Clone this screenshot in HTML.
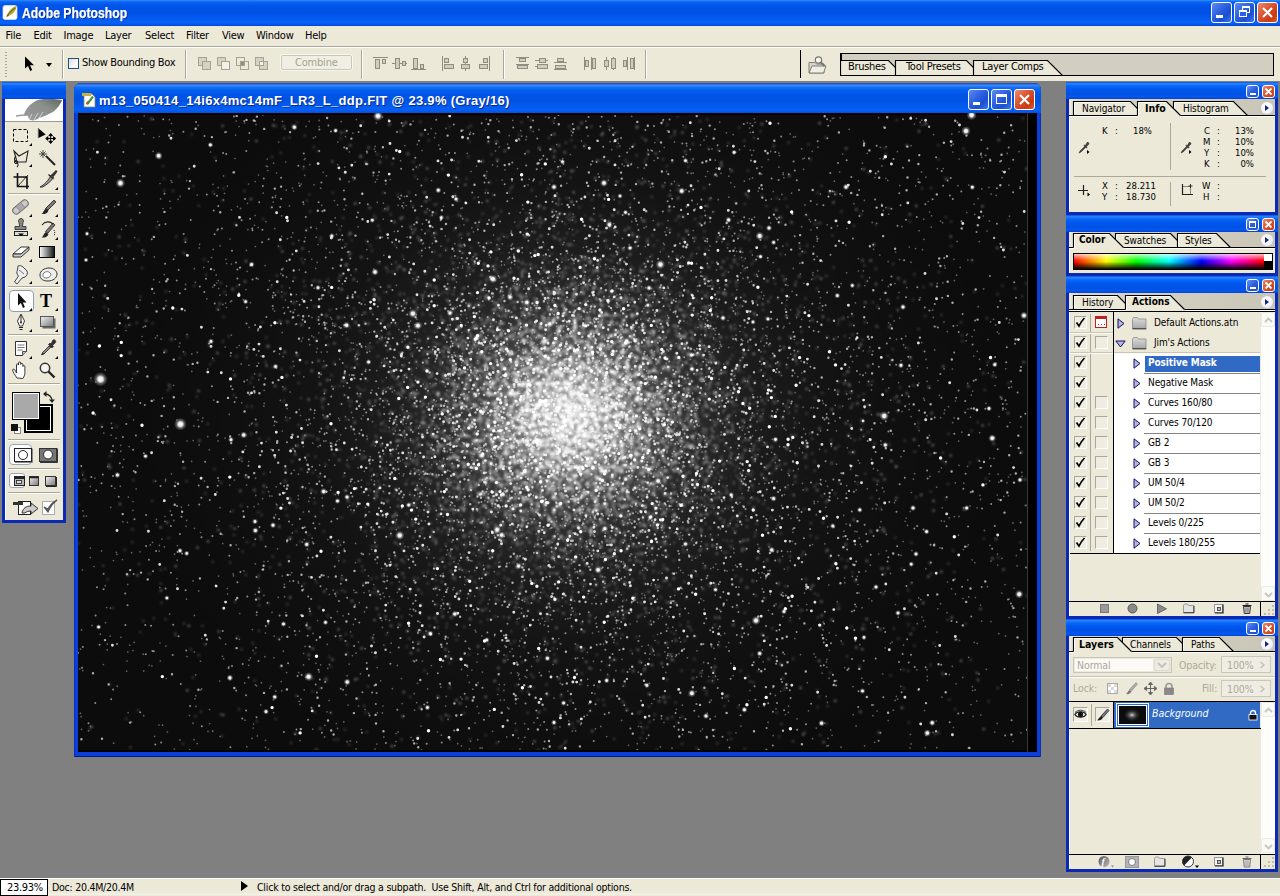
<!DOCTYPE html>
<html lang="en">
<head>
<meta charset="utf-8">
<title>Adobe Photoshop</title>
<style>
*{box-sizing:border-box;margin:0;padding:0}
html,body{width:1280px;height:896px;overflow:hidden;background:#808080}
body{position:relative;font-family:"DejaVu Sans Condensed","Liberation Sans",sans-serif;font-size:11px;color:#000;-webkit-font-smoothing:none}
.abs{position:absolute}
.xpblue{background:linear-gradient(to bottom,#0a6bf5 0%,#0058ee 10%,#0050e8 45%,#0460f8 85%,#0355e6 93%,#0143cf 100%)}
/* main title bar */
#titlebar{left:0;top:0;width:1280px;height:26px;background:linear-gradient(to bottom,#2f8bff 0%,#0a62f2 8%,#0054e9 22%,#0050e4 50%,#045cf2 75%,#0663fb 88%,#0452e0 96%,#0140c8 100%)}
#titlebar .ttl{left:22px;top:4.500px;font:bold 14px "Liberation Sans",sans-serif;color:#fff;text-shadow:1px 1px 0 #0a2a8a;white-space:nowrap;transform-origin:0 0;transform:scaleX(.872);-webkit-text-stroke:.25px #fff}
.wbtn{position:absolute;width:21px;height:21px;border:1px solid #fff;border-radius:3px;background:linear-gradient(135deg,#5c8bf0 0%,#2a5fe0 45%,#1c4ed0 70%,#3a78f0 100%)}
.wbtn.close{background:linear-gradient(135deg,#ec8a6a 0%,#d9512c 45%,#c83a14 75%,#e05a30 100%)}
/* menu */
#menubar{left:0;top:26px;width:1280px;height:20px;background:#ece9d8}
#menubar span{position:absolute;top:3px;font-size:11px;white-space:nowrap;letter-spacing:-.25px}
#optbar{left:0;top:46px;width:1280px;height:35px;background:#ece9d8;border-top:1px solid #aca899;box-shadow:inset 0 1px 0 #fff}
#statusbar{left:0;top:878px;width:1280px;height:18px;background:linear-gradient(to bottom,#ece9d8 0,#ece9d8 14px,#f8f7f0 15px,#ece9d8 16px);border-top:1px solid #fff}

#docwin{left:74px;top:83px;width:967px;height:674px;border-radius:7px 7px 0 0;background:#0a3fd8;box-shadow:inset 1px 0 0 #0831b8,inset -1px 0 0 #0831b8,inset 0 -1px 0 #00138c}
#docwin .dtitle{left:0;top:0;width:967px;height:30px;border-radius:7px 7px 0 0;background:linear-gradient(to bottom,#2a54ba 0,#2a54ba 1px,#3f8fff 2px,#1672f6 4px,#0560ee 7px,#0055e6 12px,#0052e2 18px,#045cf0 24px,#0560f6 27px,#0450de 30px)}
#docwin .dttl{left:25px;top:9.500px;font:bold 13px "Liberation Sans",sans-serif;color:#fff;text-shadow:1px 1px 0 #0a2a8a;white-space:nowrap;letter-spacing:.3px}

.vsep{width:2px;background:linear-gradient(to right,#aca899 0,#aca899 1px,#fff 1px,#fff 2px)}

.ptitle{background:linear-gradient(to bottom,#0a4fdc 0%,#2a86ff 10%,#0a66f8 22%,#0058ee 45%,#0050e4 70%,#0458ee 88%,#0a3fd0 100%)}
#toolbox{left:2px;top:82px;width:64px;height:441px;background:#0a29b4;box-shadow:inset 1px 0 0 #0831b8}
.pal{position:absolute;left:1066px;width:212px;background:#0a29b4}
.pal .ptitle{position:absolute;left:0;top:0;width:212px;height:17px}
.pal .body{position:absolute;left:3px;top:17px;width:206px;background:#ece9d8;box-shadow:inset 1px 0 0 #fff}
.pal .tabs{position:absolute;left:3px;top:17px;width:206px;height:17px;background:linear-gradient(to right,#ece9d8 0,#d8d5c6 12px,#d0cdbe 60%,#c9c6b7 100%)}
.pbtn{position:absolute;width:13px;height:13px;top:3px;border:1px solid #fff;border-radius:3px;background:linear-gradient(135deg,#6a93f0 0%,#2a5fe0 50%,#1c4ed0 100%)}
.pbtn.close{background:linear-gradient(135deg,#e88a6a 0%,#d9512c 50%,#c83a14 100%)}
.pt{position:absolute;white-space:nowrap;font-size:10px;letter-spacing:-.1px}
.pmenu{position:absolute;width:12px;height:12px;border-radius:6px;background:radial-gradient(circle at 40% 40%,#fff 0,#f4f5fb 50%,#d4d9ee 100%)}
.pmenu:after{content:"";position:absolute;left:4px;top:2.500px;border:3.500px solid transparent;border-left:4.500px solid #14267e;border-right:0}
.hsep{left:6px;width:52px;height:2px;background:linear-gradient(to bottom,#aca899 0,#aca899 1px,#fff 1px,#fff 2px)}
.inf{font-size:9.500px;letter-spacing:0}
.inf.r{text-align:right}
.cbx{width:13px;height:13px;border:1px solid;border-color:#aca899 #fff #fff #aca899;background:#efede2}
.sbtn{width:14px;height:15px;background:#fafaf6;border:1px solid #eceadf;border-radius:2px}
.dis{color:#aca899}
.t{position:absolute;white-space:nowrap}
</style>
</head>
<body>
<!-- app title bar -->
<div id="titlebar" class="abs">
  <svg class="abs" style="left:2px;top:4px" width="17" height="17" viewBox="0 0 17 17">
    <rect x="1" y="1.500" width="14" height="14" rx="2" fill="#fff" stroke="#d8dcec" stroke-width=".8"/>
    <path d="M5 12c1-4 4-8 9-10 1 2-1 6-4 8-2 1-3 2-5 2z" fill="#c9a227"/><path d="M5 12c2-3 5-6 8-8" stroke="#4a8a2a" stroke-width="1.300" fill="none"/><path d="M4 13l2-3 1 2z" fill="#c23b22"/>
  </svg>
  <div class="abs ttl">Adobe Photoshop</div>
  <div class="wbtn" style="left:1211px;top:2px"><i class="abs" style="left:4px;top:12px;width:7px;height:3px;background:#fff"></i></div>
  <div class="wbtn" style="left:1234px;top:2px"><i class="abs" style="left:7px;top:3px;width:8px;height:7px;border:1px solid #fff;border-top-width:2px"></i><i class="abs" style="left:4px;top:7px;width:8px;height:7px;border:1px solid #fff;border-top-width:2px;background:#2a5fe0"></i></div>
  <div class="wbtn close" style="left:1257px;top:2px"><svg class="abs" style="left:0;top:0" width="19" height="19"><path d="M5 5l9 9M14 5l-9 9" stroke="#fff" stroke-width="2.200"/></svg></div>
</div>
<!-- menu -->
<div id="menubar" class="abs">
  <span style="left:5.500px">File</span><span style="left:33.500px">Edit</span><span style="left:63.500px">Image</span><span style="left:105px">Layer</span><span style="left:145px">Select</span><span style="left:186px">Filter</span><span style="left:222px">View</span><span style="left:256px">Window</span><span style="left:305px">Help</span>
</div>
<div id="optbar" class="abs">
<!-- gripper -->
<div class="abs" style="left:5px;top:5px;width:2px;height:26px;background:repeating-linear-gradient(to bottom,#a8a594 0,#a8a594 1px,transparent 1px,transparent 3px)"></div>
<svg class="abs" style="left:24px;top:9px" width="12" height="16" viewBox="0 0 12 16"><path d="M1 0.5v12l3-2.6 2.2 5 2-.9-2.2-4.8H10z" fill="#000"/></svg>
<div class="abs" style="left:46px;top:16px;border:3px solid transparent;border-top:4px solid #000;border-bottom:0"></div>
<div class="abs vsep" style="left:62px;top:3px;height:29px"></div>
<div class="abs" style="left:68px;top:11px;width:11px;height:11px;border:1px solid #1c5180;background:linear-gradient(135deg,#dcdcd7,#f8f8f6 60%,#fff)"></div>
<div class="t" style="left:82px;top:9px;letter-spacing:-.3px">Show Bounding Box</div>
<div class="abs vsep" style="left:185px;top:3px;height:29px"></div>
<!-- shape-area buttons (disabled) -->
<svg class="abs" style="left:196px;top:8px" width="80" height="18" viewBox="0 0 80 18" fill="none" stroke="#a5a293" stroke-width="1">
  <rect x="2.5" y="2.5" width="8" height="8" fill="#d5d2c4"/><rect x="6.5" y="6.5" width="8" height="8" fill="#d5d2c4"/>
  <rect x="25.5" y="6.5" width="8" height="8" fill="#f4f2e8"/><path d="M21.5 10.5v-8h8v4h-4v4z" fill="#d5d2c4"/>
  <rect x="40.5" y="2.5" width="8" height="8"/><rect x="44.5" y="6.5" width="8" height="8"/><rect x="44.5" y="6.5" width="4" height="4" fill="#8e8c80"/>
  <rect x="59.5" y="2.5" width="8" height="8" fill="#d5d2c4"/><rect x="63.5" y="6.5" width="8" height="8" fill="#d5d2c4"/><rect x="63.5" y="6.5" width="4" height="4" fill="#f4f2e8"/>
</svg>
<div class="abs" style="left:281px;top:8px;width:71px;height:15px;border:1px solid #c9c7ba;border-radius:2px;background:#f1efe4;box-shadow:0 0 0 1px #f7f6ef"></div>
<div class="t" style="left:295px;top:9px;color:#a5a293;letter-spacing:-.2px">Combine</div>
<div class="abs vsep" style="left:361px;top:3px;height:29px"></div>
<!-- align icons (disabled) -->
<svg class="abs" style="left:372px;top:8px" width="130" height="18" viewBox="0 0 130 18" fill="#d0cdbf" stroke="#8f8d80" stroke-width="1">
  <path d="M1 2.5h15" /><rect x="3.5" y="4.5" width="4" height="9"/><rect x="10.500" y="4.500" width="3" height="4"/>
  <path d="M20 8.500h15"/><rect x="23.500" y="3.500" width="4" height="10"/><rect x="30.500" y="6.500" width="3" height="4"/>
  <path d="M39 14.500h15"/><rect x="41.500" y="3.500" width="4" height="10"/><rect x="48.500" y="9.500" width="3" height="4"/>
  <path d="M70.500 1v15"/><rect x="72.500" y="3.500" width="4" height="4"/><rect x="72.500" y="9.500" width="9" height="4"/>
  <path d="M93.500 1v15"/><rect x="91.500" y="3.500" width="4" height="4"/><rect x="89.500" y="9.500" width="8" height="4"/>
  <path d="M117.500 1v15"/><rect x="111.500" y="3.500" width="4" height="4"/><rect x="107.500" y="9.500" width="8" height="4"/>
</svg>
<div class="abs vsep" style="left:503px;top:3px;height:29px"></div>
<!-- distribute icons (disabled) -->
<svg class="abs" style="left:514px;top:8px" width="125" height="18" viewBox="0 0 125 18" fill="#d0cdbf" stroke="#8f8d80" stroke-width="1">
  <path d="M2 2.500h13M2 9.500h13"/><rect x="5.500" y="3.500" width="6" height="3"/><rect x="3.500" y="10.500" width="10" height="3"/>
  <path d="M21 5.500h13M21 11.500h13"/><rect x="25.500" y="3.500" width="6" height="4"/><rect x="23.500" y="9.500" width="10" height="4"/>
  <path d="M40 7.500h13M40 14.500h13"/><rect x="43.500" y="3.500" width="6" height="3"/><rect x="41.500" y="10.500" width="10" height="3"/>
  <path d="M70.500 2v13M77.500 2v13"/><rect x="71.500" y="5.500" width="3" height="6"/><rect x="78.500" y="3.500" width="3" height="10"/>
  <path d="M92.500 2v13M99.500 2v13"/><rect x="90.500" y="5.500" width="4" height="6"/><rect x="97.500" y="3.500" width="4" height="10"/>
  <path d="M113.500 2v13M120.500 2v13"/><rect x="109.500" y="5.500" width="3" height="6"/><rect x="116.500" y="3.500" width="3" height="10"/>
</svg>
<div class="abs vsep" style="left:645px;top:3px;height:29px"></div>
<div class="abs" style="left:800px;top:3px;width:1px;height:28px;background:#000"></div>
<!-- file browser icon -->
<svg class="abs" style="left:807px;top:8px" width="22" height="20" viewBox="0 0 22 20">
  <path d="M2 7.500h6l1.500 1.500H17v9H2z" fill="#d8d6cc" stroke="#807e74"/>
  <path d="M2 18l3-7h14l-2.500 7z" fill="#efeee6" stroke="#807e74"/>
  <circle cx="11.500" cy="5" r="3.200" fill="#f6f6f0" stroke="#77756c" stroke-width="1.200"/><path d="M14 7.500l3.500 3.500" stroke="#77756c" stroke-width="1.800"/>
</svg>
<!-- palette well -->
<div class="abs" style="left:840px;top:6px;width:434px;height:23px;background:#d2cfc1;border:1px solid #000;border-left-width:2px"></div>
<svg class="abs" style="left:840px;top:10px" width="240" height="20" viewBox="0 0 240 20"><path d="M0.5 18.5V3.5H48.5L63.5 18.5z" fill="#ece9d8" stroke="#000" stroke-width="1.150"/><path d="M55.5 18.5V3.5H126.5L141.5 18.5z" fill="#ece9d8" stroke="#000" stroke-width="1.150"/><path d="M133.5 18.5V3.5H207.5L222.5 18.5z" fill="#ece9d8" stroke="#000" stroke-width="1.150"/></svg>
<div class="t" style="left:848px;top:13px;letter-spacing:-.3px">Brushes</div>
<div class="t" style="left:906px;top:13px;letter-spacing:-.3px">Tool Presets</div>
<div class="t" style="left:982px;top:13px;letter-spacing:-.3px">Layer Comps</div>

</div>
<div id="toolbox" class="abs">
  <div class="abs ptitle" style="left:0;top:0;width:64px;height:17px"></div>
  <div class="abs" style="left:3px;top:17px;width:58px;height:421px;background:#ece9d8;box-shadow:inset 1px 0 0 #fff"></div>
  <div class="abs" style="left:3px;top:17px;width:58px;height:23px;background:#fff;border-bottom:1px solid #9d9a8c"></div>
  <!-- feather -->
  <svg class="abs" style="left:3px;top:17px" width="58" height="23" viewBox="0 0 58 23">
    <defs><linearGradient id="fe" x1="0" y1="1" x2="1" y2="0"><stop offset="0" stop-color="#9a9a9a"/><stop offset=".6" stop-color="#8a8f8c"/><stop offset="1" stop-color="#5d6660"/></linearGradient></defs>
    <path d="M11 17c5-1 8-1 12-1" stroke="#9a9a9a" stroke-width="1.400" fill="none"/>
    <path d="M19 16c1-5 6-12 14-15 9-2 18-1 24 0-1 3-4 8-9 12-6 3-10 5-14 6-3 2-6 3-8 2-2 0-3-2-3-5z" fill="url(#fe)"/>
    <path d="M24 21l3-6M29 21l4-7M34 19l4-6" stroke="#fff" stroke-width=".8" opacity=".7"/>
  </svg>
  <!-- separators -->
<div class="abs hsep" style="top:111px"></div><div class="abs hsep" style="top:204px"></div><div class="abs hsep" style="top:252px"></div><div class="abs hsep" style="top:301px"></div><div class="abs hsep" style="top:357px"></div><div class="abs hsep" style="top:386px"></div><div class="abs hsep" style="top:410px"></div>
<!-- active tool bg (path selection) -->
<div class="abs" style="left:7px;top:208px;width:25px;height:22px;border:1px solid #8d9bb0;border-radius:4px;background:#fff"></div>
<div class="abs" style="left:7px;top:362px;width:23px;height:21px;border:1px solid #9aa7ba;border-radius:4px;background:#fff"></div>
<div class="abs" style="left:7px;top:391px;width:16px;height:15px;border:1px solid #9aa7ba;border-radius:3px;background:#fff"></div>
<svg class="abs" style="left:3px;top:17px" width="58" height="421" viewBox="0 0 58 421">
<defs>
  <linearGradient id="gr1" x1="0" x2="1"><stop offset="0" stop-color="#fff"/><stop offset="1" stop-color="#111"/></linearGradient>
  <linearGradient id="gr2" x1="0" y1="0" x2="1" y2="1"><stop offset="0" stop-color="#f4f4f4"/><stop offset="1" stop-color="#777"/></linearGradient>
</defs>
<!-- row1: marquee, move (cy=37) -->
<rect x="8.500" y="30.500" width="14" height="12" fill="none" stroke="#000" stroke-dasharray="3 2"/>
<path d="M24 47h3v-3z" fill="#000"/>
<path d="M33.300 29.200v9.800l7.400-3.600z" fill="#000"/><path d="M33.300 29.200v9.800" stroke="#666" stroke-width="1"/>
<path d="M45.700 35.500v8M41.700 39.500h8M45.700 34.500l-1.800 2.200h3.600zM45.700 44.500l-1.800-2.200h3.600zM40.700 39.500l2.200-1.800v3.600zM50.700 39.500l-2.200-1.800v3.600z" stroke="#000" fill="#000" stroke-width="1"/>
<!-- row2: lasso, wand (cy=58) -->
<path d="M9 52l5 5 9-5-2 11H12z" fill="#ece9d8" stroke="#222" stroke-width="1.100"/>
<path d="M11 57c-2 2-2 5 0 6s3 3 1 5" fill="none" stroke="#222" stroke-width="1.100"/><circle cx="11" cy="63" r="1.600" fill="none" stroke="#222"/>
<path d="M24 68h3v-3z" fill="#000"/>
<path d="M41 57l9 9" stroke="#222" stroke-width="2"/><path d="M38 51v8M34 55h8M35.500 52.500l5 5M40.500 52.500l-5 5" stroke="#333" stroke-width=".9"/>
<!-- row3: crop, slice (cy=81) -->
<path d="M12.500 74v13.500H24M8.500 78h13.500V90" fill="none" stroke="#111" stroke-width="1.600"/><path d="M12.500 87.500L23 76" stroke="#000" stroke-width=".8"/>
<path d="M35 88c4-2 9-7 11-12l2.500 2c-2 4-7 8-11 10z" fill="#999" stroke="#222" stroke-width=".9"/><path d="M46 76l5-5 1.500 1.500-4 5.500z" fill="#333"/><path d="M43.500 75.500l5 4.500" stroke="#222" stroke-width="1.200"/>
<path d="M50 91h3v-3z" fill="#000"/>
<!-- row4: heal, brush (cy=108) -->
<g transform="rotate(-40 15.500 108)"><rect x="6.500" y="104.500" width="18" height="7" rx="3.500" fill="#c9c9c9" stroke="#666"/><rect x="12.500" y="104.500" width="6" height="7" fill="#aaa" stroke="#777" stroke-width=".6"/></g>
<path d="M24 118h3v-3z" fill="#000"/>
<path d="M49 101l2 2-8 8-2.500-1.500z" fill="#777" stroke="#222" stroke-width=".8"/><path d="M41 109.500l2.500 2c-1 3-4 4-7 3.500 2-1 2-4 4.500-5.500z" fill="#222"/>
<path d="M50 118h3v-3z" fill="#000"/>
<!-- row5: stamp, history brush (cy=131) -->
<path d="M14 123.500a2.500 2.500 0 1 1 4 0l-.7 4H21v3H10v-3h4.700z" fill="#888" stroke="#222" stroke-width=".8"/><rect x="9.500" y="132.500" width="13" height="4" fill="#ddd" stroke="#222"/><path d="M13 134.500h6l-3 2.500z" fill="#000"/>
<path d="M24 141h3v-3z" fill="#000"/>
<path d="M48 124l2 2-7 8-2.500-1.500z" fill="#777" stroke="#222" stroke-width=".8"/><path d="M41 133l2.500 2c-1 3-4 4-7 3.500 2-1 2-4 4.500-5.500z" fill="#222"/><path d="M37 126c3-4 8-4 11-1" fill="none" stroke="#222" stroke-width="1.100"/><path d="M49 131c1 2 1 4 0 6" fill="none" stroke="#222" stroke-dasharray="1 1"/>
<path d="M50 141h3v-3z" fill="#000"/>
<!-- row6: eraser, gradient (cy=153) -->
<path d="M8 155l8-7h8l-8 7z" fill="#fff" stroke="#222" stroke-width=".9"/><path d="M8 155v3h8l8-7v-3l-8 7z" fill="#ccc" stroke="#222" stroke-width=".9"/>
<path d="M24 163h3v-3z" fill="#000"/>
<rect x="34.500" y="147.500" width="15" height="11" fill="url(#gr1)" stroke="#000"/>
<path d="M50 163h3v-3z" fill="#000"/>
<!-- row7: smudge, sponge (cy=175) -->
<path d="M13 167c2-1 4 0 5 1l4 4c1 2 0 5-2 6l-3 1-5 6-2.500-2 4-6c-2-2-2-4-1-6z" fill="#eee" stroke="#333" stroke-width=".9"/><path d="M14 171l5 4" stroke="#555" stroke-width=".8"/>
<path d="M24 185h3v-3z" fill="#000"/>
<path d="M35 176c0-4 4-7 9-7s8 3 8 6c0 4-4 7-9 7s-8-2-8-6z" fill="#eee" stroke="#333"/><path d="M38 175c1-2 4-3 6-2l2 2c0 2-2 4-5 4s-3-2-3-4z" fill="#fff" stroke="#555" stroke-width=".8"/>
<path d="M50 185h3v-3z" fill="#000"/>
<!-- row8: path select (active), type (cy=202) -->
<path d="M13 194v12.500l2.900-2.400 2.100 4.800 1.900-.9-2.100-4.600H21.500z" fill="#111"/>
<path d="M24 212h3v-3z" fill="#000"/>
<text x="35" y="207.500" font-family="Liberation Serif,serif" font-size="18" font-weight="bold" fill="#000">T</text>
<path d="M50 212h3v-3z" fill="#000"/>
<!-- row9: pen, shape (cy=223) -->
<path d="M16 215l3.500 7-2 5h-3l-2-5z" fill="#fff" stroke="#222" stroke-width=".9"/><path d="M16 216v7" stroke="#222"/><circle cx="16" cy="223.500" r="1" fill="#222"/><path d="M14 228.500h4M14.500 230.500h3" stroke="#222"/>
<path d="M24 233h3v-3z" fill="#000"/>
<rect x="37.500" y="219.500" width="13" height="10" fill="#666"/><rect x="35.500" y="217.500" width="13" height="10" fill="url(#gr2)" stroke="#555"/>
<path d="M50 233h3v-3z" fill="#000"/>
<!-- row10: notes, eyedropper (cy=250) -->
<path d="M10.500 242.500h11v10l-4 4h-7z" fill="#fff" stroke="#333"/><path d="M21.500 252.500h-4v4" fill="#bbb" stroke="#333" stroke-width=".8"/><path d="M12.500 246h7M12.500 248.500h7M12.500 251h5" stroke="#555" stroke-width=".8"/>
<path d="M24 260h3v-3z" fill="#000"/>
<path d="M48 241c1.500-1 3.500 1 2.500 2.500l-3 3 1 1-1.500 1.500-1-1-7 7-2.500 1 1-2.500 7-7-1-1 1.500-1.500 1 1z" fill="#333" stroke="#111" stroke-width=".6"/><path d="M44.500 248l-6 6" stroke="#ddd" stroke-width="1"/>
<path d="M50 260h3v-3z" fill="#000"/>
<!-- row11: hand, zoom (cy=272) -->
<path d="M12 279c-2-3-4-6-4.500-8 .5-1.500 2-1 3 1l1 2v-8c0-1.500 2-1.500 2 0v-2c0-1.500 2.200-1.500 2.200 0v1.500c0-1.500 2.200-1.500 2.200 0v2c0-1.300 2-1.300 2 0v6c0 3-1 4-2 6z" fill="#fff" stroke="#222" stroke-width=".9"/>
<circle cx="40" cy="269" r="4.700" fill="#f4f4f4" stroke="#333" stroke-width="1.500"/><path d="M43.500 272.500l6 6" stroke="#222" stroke-width="2.400"/>
<!-- colors -->
<rect x="19.500" y="305.500" width="28" height="28" fill="#000" stroke="#000"/><rect x="21.500" y="307.500" width="24" height="24" fill="#000" stroke="#fff"/>
<rect x="7.500" y="293.500" width="27" height="27" fill="#a9a9a9" stroke="#000"/><rect x="8.500" y="294.500" width="25" height="25" fill="none" stroke="#fff"/>
<path d="M40 295c4 0 7 3 7 7" fill="none" stroke="#222" stroke-width="1.300"/><path d="M38 295l3.500-3v6zM47 304l-3-3.500h6z" fill="#222"/>
<rect x="9.500" y="328.500" width="6" height="6" fill="#fff" stroke="#888"/><rect x="6" y="325" width="7" height="7" fill="#111"/>
<!-- mask modes -->
<rect x="9.500" y="349.500" width="17" height="13" fill="#fff" stroke="#222"/><circle cx="18" cy="356" r="4.500" fill="#fff" stroke="#222"/><path d="M10 363.500h17.500v-14" fill="none" stroke="#888"/>
<rect x="34.500" y="349.500" width="17" height="13" fill="#777" stroke="#333"/><circle cx="43" cy="355.500" r="4.500" fill="#fff" stroke="#222"/><path d="M35 363.500h17.500v-14" fill="none" stroke="#333"/>
<!-- screen modes -->
<rect x="9.500" y="377.500" width="10" height="9" fill="#bbb" stroke="#222"/><path d="M9.500 379h10" stroke="#222" stroke-width="2"/><rect x="11.500" y="381.500" width="5" height="3" fill="#ddd" stroke="#222" stroke-width=".8"/>
<rect x="24.500" y="377.500" width="9" height="9" fill="url(#gr2)" stroke="#333"/><path d="M24.500 378.500h9" stroke="#222" stroke-width="1.600"/>
<rect x="40.500" y="377.500" width="10" height="9" fill="url(#gr2)" stroke="#333"/><path d="M41 387.500h10.500v-9.500" fill="none" stroke="#222"/>
<!-- jump to imageready -->
<rect x="13.500" y="402.500" width="12" height="13" fill="#fff" stroke="#222"/><rect x="8" y="403" width="10" height="3" fill="#333"/><path d="M17 414c1-5 4-7 9-7v-3l7 5.500-7 5.500v-3c-3 0-5 1-6 2z" fill="#ccc" stroke="#222" stroke-width=".9"/>
<rect x="37.500" y="402.500" width="12" height="13" fill="#fff" stroke="#aaa"/><path d="M39 408l4 5c2-5 5-9 9-12-4 2-7 5-9 9z" fill="#666" stroke="#555" stroke-width="1.200"/>
</svg>

</div>

<div id="docwin" class="abs">
  <div class="abs dtitle"></div>
  <svg class="abs" style="left:7px;top:9px" width="16" height="16" viewBox="0 0 16 16">
    <path d="M3 2h8l3 3v10H3z" fill="#fff" stroke="#8a8a6a" stroke-width=".8"/>
    <path d="M1 1h9v3H1z" fill="#c8b040"/>
    <path d="M5 12L11 4l2 1-6 8z" fill="#3a9a3a"/><path d="M5 12l1-3 2 2z" fill="#d04020"/>
  </svg>
  <div class="abs dttl">m13_050414_14i6x4mc14mF_LR3_L_ddp.FIT @ 23.9% (Gray/16)</div>
  <div class="wbtn" style="left:894px;top:6px"><i class="abs" style="left:4px;top:12px;width:7px;height:3px;background:#fff"></i></div>
  <div class="wbtn" style="left:917px;top:6px"><i class="abs" style="left:4px;top:4px;width:11px;height:10px;border:1px solid #fff;border-top-width:3px"></i></div>
  <div class="wbtn close" style="left:940px;top:6px"><svg class="abs" style="left:0;top:0" width="19" height="19"><path d="M5 5l9 9M14 5l-9 9" stroke="#fff" stroke-width="2.2"/></svg></div>
</div>
<svg class="abs" style="left:78px;top:113px" width="959" height="639" viewBox="0 0 959 639">
<defs><radialGradient id="core" gradientUnits="userSpaceOnUse" cx="492" cy="303" r="400" gradientTransform="translate(492 303) scale(1.05 0.97) translate(-492 -303)"><stop offset="0" stop-color="#fff" stop-opacity="0.64"/><stop offset="0.04" stop-color="#fff" stop-opacity="0.6"/><stop offset="0.08" stop-color="#fff" stop-opacity="0.5"/><stop offset="0.13" stop-color="#fff" stop-opacity="0.36"/><stop offset="0.2" stop-color="#fff" stop-opacity="0.225"/><stop offset="0.3" stop-color="#fff" stop-opacity="0.13"/><stop offset="0.42" stop-color="#fff" stop-opacity="0.075"/><stop offset="0.6" stop-color="#fff" stop-opacity="0.035"/><stop offset="0.8" stop-color="#fff" stop-opacity="0.016"/><stop offset="1" stop-color="#fff" stop-opacity="0.006"/></radialGradient><radialGradient id="dens" gradientUnits="userSpaceOnUse" cx="492" cy="303" r="620" gradientTransform="translate(492 303) scale(1.05 0.97) translate(-492 -303)"><stop offset="0" stop-color="rgb(232,232,232)"/><stop offset="0.06" stop-color="rgb(208,208,208)"/><stop offset="0.12" stop-color="rgb(186,186,186)"/><stop offset="0.2" stop-color="rgb(164,164,164)"/><stop offset="0.3" stop-color="rgb(140,140,140)"/><stop offset="0.45" stop-color="rgb(118,118,118)"/><stop offset="0.65" stop-color="rgb(100,100,100)"/><stop offset="1" stop-color="rgb(88,88,88)"/></radialGradient><radialGradient id="sg"><stop offset="0" stop-color="#fff"/><stop offset=".35" stop-color="#fff" stop-opacity=".9"/><stop offset=".6" stop-color="#fff" stop-opacity=".35"/><stop offset="1" stop-color="#fff" stop-opacity="0"/></radialGradient><filter id="sb" x="0" y="0" width="100%" height="100%"><feGaussianBlur stdDeviation=".8"/></filter><filter id="sb2" x="0" y="0" width="100%" height="100%"><feGaussianBlur stdDeviation=".52"/></filter><filter id="mot" x="0" y="0" width="100%" height="100%" color-interpolation-filters="sRGB"><feTurbulence type="fractalNoise" baseFrequency="0.23" numOctaves="1" seed="7" result="n"/><feColorMatrix in="n" type="matrix" values="1 0 0 0 0 1 0 0 0 0 1 0 0 0 0 0 0 0 0 1" result="g"/><feComposite in="g" in2="SourceGraphic" operator="arithmetic" k1="1" k2="0" k3="0" k4="0" result="m"/><feComponentTransfer in="m" result="t"><feFuncR type="linear" slope="5.0" intercept="-1.9"/><feFuncG type="linear" slope="5.0" intercept="-1.9"/><feFuncB type="linear" slope="5.0" intercept="-1.9"/></feComponentTransfer><feColorMatrix in="t" type="matrix" values="0 0 0 0 1 0 0 0 0 1 0 0 0 0 1 1 0 0 0 0" result="u"/><feGaussianBlur in="u" stdDeviation="0.8"/></filter><filter id="mot2" x="0" y="0" width="100%" height="100%" color-interpolation-filters="sRGB"><feTurbulence type="fractalNoise" baseFrequency="0.19" numOctaves="1" seed="23" result="n"/><feColorMatrix in="n" type="matrix" values="1 0 0 0 0 1 0 0 0 0 1 0 0 0 0 0 0 0 0 1" result="g"/><feComposite in="g" in2="SourceGraphic" operator="arithmetic" k1="1" k2="0" k3="0" k4="0" result="m"/><feComponentTransfer in="m" result="t"><feFuncR type="linear" slope="5.0" intercept="-1.95"/><feFuncG type="linear" slope="5.0" intercept="-1.95"/><feFuncB type="linear" slope="5.0" intercept="-1.95"/></feComponentTransfer><feColorMatrix in="t" type="matrix" values="0 0 0 0 1 0 0 0 0 1 0 0 0 0 1 1 0 0 0 0" result="u"/><feGaussianBlur in="u" stdDeviation="0.8"/></filter></defs>
<rect width="959" height="639" fill="#000"/>
<rect x="0" y="2" width="949" height="635" fill="#0b0b0b"/>
<rect x="0" y="2" width="949" height="635" fill="url(#core)"/>
<rect x="0" y="2" width="949" height="635" fill="url(#dens)" filter="url(#mot)"/>
<rect x="0" y="2" width="949" height="635" fill="url(#dens)" filter="url(#mot2)"/>
<g fill="none" stroke="#fff" stroke-linecap="round" filter="url(#sb)">
<path stroke-width="2.4" stroke-opacity="0.22" d="M445.1 454h.01M573.5 148.5h.01M504.7 254.9h.01M771.9 339.5h.01M358.4 91.1h.01M492.2 373.4h.01M200 178.7h.01M651.2 287h.01M564.6 619.6h.01M867.9 385.6h.01M561.5 330.9h.01M696 32.3h.01M472.4 328h.01M373.7 144.8h.01M474.4 344.3h.01M271.1 122.2h.01M564.2 336h.01M65.4 507.9h.01M807.1 179.9h.01M909.9 249.3h.01M392 626.3h.01M566.1 557.8h.01M248.4 224.1h.01M443.3 406h.01M412.2 240.6h.01M591.7 471.9h.01M684.4 270.7h.01M502.7 283h.01M542.4 290.1h.01M519.1 541.6h.01M690.7 431.7h.01M546.3 572.3h.01M538.5 475.5h.01M513.3 13.8h.01M337.2 63.6h.01M739.3 370.7h.01M569.7 125.9h.01M647.5 182.7h.01M721.7 283.8h.01M424.1 388.1h.01M595.3 547.4h.01M505.3 280.3h.01M475.7 269.7h.01M516.2 408.6h.01M512.4 234.3h.01M504.2 287.8h.01M629.7 184h.01M435.1 259.6h.01M520.2 351.3h.01M513.5 314.4h.01M434.6 344h.01M515.5 356.2h.01M514.2 236.4h.01M218.2 582.7h.01M220.6 312h.01M469.4 187.6h.01M404.2 257.9h.01M608.6 192.2h.01M240.5 204.9h.01M454.2 393.9h.01M316.9 198.1h.01M127.4 380.2h.01M548.5 253.8h.01M664.9 367h.01M7.4 136.2h.01M555.3 483.8h.01M568 312.3h.01M474.9 535.2h.01M724.4 497.2h.01M414.9 241.1h.01M526.2 345.6h.01M839.9 314.1h.01M562.6 609.6h.01M516.7 196.9h.01M362.5 249.2h.01M633.2 393.5h.01M424.1 198.7h.01M232.3 501h.01M214.1 348.3h.01M379.7 365.1h.01M631.5 281h.01M933.2 135.7h.01M26.6 194.1h.01M491.8 100.6h.01M707.3 574.1h.01M576 312.4h.01M520.5 573.7h.01M549.8 295.4h.01M523 297.3h.01M428.3 543h.01M427.4 371.9h.01M412.5 279.5h.01M304.9 247.1h.01M433.6 215.9h.01M655.6 261.7h.01M433.9 255.7h.01M538 253.6h.01M544.6 278.3h.01M567.3 197.6h.01M437.9 617.3h.01M396.5 84.9h.01M432.4 364.7h.01M314.8 250.6h.01M567.7 316.2h.01M518.3 377.1h.01M488.8 286.9h.01M739.6 79.8h.01M551.9 281.5h.01M299.5 481.4h.01M458.4 248.8h.01M655.3 291.5h.01M508.2 349.6h.01M561.4 448h.01M508.2 452.2h.01M511.2 273.7h.01M604.1 603.8h.01M478.8 229.9h.01M496.1 305.4h.01M477.5 310.1h.01M544.9 250.7h.01M363.9 418.7h.01M598.2 195.2h.01M531.6 14h.01M471.8 346.2h.01M588.7 291.1h.01M516.8 272.2h.01M281.8 447.5h.01M353.5 320h.01M615.8 297.1h.01M370.7 283h.01M439.3 427.5h.01M350.6 440.1h.01M444.9 271.5h.01M355.7 228.7h.01M470.3 276.3h.01M552 333.1h.01M251.1 179h.01M105.2 139.4h.01M707.8 292.7h.01M402.9 295.6h.01M944.2 183.4h.01M521 250.5h.01M491.9 301.4h.01M744.2 280h.01M466.4 299.5h.01M472.2 306.2h.01M475.9 412.6h.01M458.1 153.3h.01M455 312.2h.01M648.3 282.2h.01M497.6 345.3h.01M671.9 568.3h.01M453.2 561.5h.01M308.1 313.4h.01M429.9 319.6h.01M519.2 365.8h.01M393 134.6h.01M648.4 376.7h.01M349.4 520.8h.01M350.8 280.7h.01M569.2 614.4h.01M495.5 57.4h.01M555 334.1h.01M853 460.4h.01M341.3 397.5h.01M621.7 208.6h.01M456.7 218.3h.01M598.4 253.7h.01M300.9 184.8h.01M448.3 237h.01M541.9 330.6h.01M349.7 470.2h.01M490.8 101.9h.01M627.6 272.6h.01M658.4 362.3h.01M330.9 350.9h.01M92 275h.01M538.2 360.7h.01M882.9 209.2h.01M447.1 293.9h.01M506 334.8h.01M404.1 271.4h.01M417.3 401.1h.01M468 254h.01M474.4 385.6h.01M456.6 324h.01M360.4 351.6h.01M486.5 125.5h.01M484 334.2h.01M451.2 326.6h.01M236.7 599.1h.01M555.5 242.2h.01M668.9 413.8h.01M407.1 350.7h.01M563.7 106.8h.01M442.3 431.6h.01M672.8 138.8h.01M608.4 485.3h.01M388.6 338.2h.01M348 66.4h.01M513.3 270.2h.01M584.8 307.7h.01M470 507.2h.01M514 320h.01M337.3 264.2h.01M228.5 249.5h.01M523.7 355.1h.01M500.3 293.7h.01M200.6 525.4h.01M635.4 232.2h.01M478.5 546.2h.01M486.8 399.7h.01M393.7 181.5h.01M539.2 19.1h.01M452.5 250.9h.01M294 137.6h.01M447.7 400.8h.01M262.9 525.7h.01M513 453.8h.01M576.9 601.4h.01M528.6 259.4h.01M493.4 304.9h.01M297.4 439.7h.01M624.1 194.7h.01M436.6 479.4h.01M594.3 48.8h.01M524.1 324.2h.01M547.3 455h.01M392.8 12.7h.01M527.1 251h.01M894.4 147.7h.01M287.8 599.8h.01M639.8 170.8h.01M403.9 224.5h.01M457 263.7h.01M697.2 356.2h.01M402 352.4h.01M330.7 300.4h.01M586.1 312.3h.01M471.4 453.6h.01M605.9 314.5h.01M374.4 464.6h.01M484.3 290.8h.01M527.6 371.2h.01M600.4 249.7h.01M487.4 302.3h.01M635 568.9h.01M650.5 30h.01M686.8 365.7h.01M432.4 335h.01M157 488.9h.01M825.9 575h.01M432.7 75.3h.01M473.9 309.3h.01M799.8 417.3h.01M464.8 316.7h.01M531.9 316h.01M468.1 250.4h.01M948 170.2h.01M739.8 163.4h.01M432.7 413.6h.01M374.4 407.2h.01M540 292.7h.01M458.5 176.5h.01M554.2 384.9h.01M310.6 252.6h.01M616.3 546h.01M342.5 518h.01M452.3 17.1h.01M656.8 298.6h.01M234.5 565.5h.01M589.7 257.2h.01M537.3 352.2h.01M786.3 515.9h.01M483.2 239.9h.01M419.9 326h.01M808 40.9h.01M391.8 191h.01M489.9 369.5h.01M852.7 551.8h.01M662.6 468.3h.01M781.8 553.3h.01M440.4 303.3h.01M835 186.7h.01M457.7 315.2h.01M494.3 271.7h.01M356.4 138.8h.01M553.2 342.9h.01M493.5 271.7h.01M479.6 313.5h.01M483.1 583.3h.01M300.1 407.5h.01M463.1 315.8h.01M537.7 308.1h.01M835.1 272.3h.01M495.9 220.2h.01M655.7 369h.01M514.8 356.8h.01M357.7 217.8h.01M347.5 310h.01M477.2 272.8h.01M539.7 134.1h.01M449.7 599.8h.01M349.8 602.4h.01M743.2 514.3h.01M408.2 184.1h.01M404.7 100.7h.01M496.3 326.7h.01M382.4 380.9h.01M493.5 232h.01M405.7 482.8h.01M250.3 231.7h.01M516.4 277h.01M577 343.9h.01M579 415.5h.01M283.2 42.9h.01M470.8 287.4h.01M525.3 234.6h.01M284.8 9.2h.01M27.9 141.2h.01M143.2 369.9h.01M489 378h.01M29.7 466.2h.01M366.9 243.1h.01M525.8 252.7h.01M347.4 437.1h.01M501.7 426.1h.01M626 124.9h.01M457.5 439.4h.01M664.3 435.3h.01M388.2 373.4h.01M556.3 395.8h.01M553.9 193.3h.01M461.6 113.8h.01M346.4 557.5h.01M518.8 259.7h.01M352.8 320.9h.01M504.8 253h.01M641.6 288.4h.01M578.4 414h.01M575.3 497.7h.01M218.3 418.3h.01M504 178.2h.01M431.2 79h.01M617.2 291.6h.01M352.5 331.6h.01M358.4 430.7h.01M666.8 90.9h.01M509.5 334h.01M456.7 452.5h.01M637.8 296.4h.01M600.6 122.2h.01M503.9 366.8h.01M386.3 513.9h.01M433.8 250.3h.01M362.5 446.3h.01M340.8 313.9h.01M482.9 362.5h.01M538.2 266.8h.01M459 338.7h.01M461.5 325.7h.01M795.1 189.2h.01M517.3 349.4h.01M448.8 321.2h.01M364 606.4h.01M571.2 258.3h.01M634.6 307.6h.01M495 393.2h.01M673.6 150.9h.01M466.6 301.2h.01M806.6 34.9h.01M791.6 292.1h.01M464.6 232.8h.01M443.4 294.8h.01M514.9 227.5h.01M460.6 243.2h.01M633.9 337.1h.01M461.8 236.5h.01M455.1 574.6h.01M533 319.2h.01M558.6 524.1h.01M815.2 150.8h.01M352 290.2h.01M363.8 205.6h.01M74.6 210.4h.01M605.4 242.7h.01M817.6 353.6h.01M504.6 458.6h.01M641.4 277.3h.01M480.8 336h.01M687 485.2h.01M707.3 85.2h.01M214.4 335.7h.01M56.6 260.9h.01M469.1 304h.01M136.4 356.1h.01M578.5 417.9h.01M447.1 503.6h.01M284.1 345.7h.01M604 341.6h.01M475.4 7.9h.01M425.6 334.6h.01M312.8 101.5h.01M621.7 169h.01M418.3 362.2h.01M459.4 196h.01M467.3 234h.01M262.1 336.5h.01M488.4 228.4h.01M457.8 212.4h.01M308.6 521.5h.01M214.5 12.6h.01M370.7 419.8h.01M634.3 168.7h.01M615.6 303.4h.01M503.4 204.7h.01M308.3 44h.01M691.4 460.9h.01M464.8 350.2h.01M486.5 319.1h.01M497.5 205.8h.01M339.9 370.2h.01M790.3 60h.01M359 508.7h.01M431.4 414.9h.01M584.5 355.4h.01M522.9 304.8h.01M445.7 284.1h.01M555.5 347.5h.01M454.2 289.3h.01M465.3 293.4h.01M438.8 136.6h.01M369.6 331.3h.01M368.7 186.6h.01M526.8 350.9h.01M709.8 455h.01M87.7 506.1h.01M521.6 281.9h.01M487 284.6h.01M440.8 308.7h.01M578.3 427.4h.01M417.2 248.3h.01M498.7 206.7h.01M524.7 47h.01M594.8 155.5h.01M543.6 380.9h.01M504.1 283h.01M477.2 274.5h.01M376.9 397.5h.01M634.2 149.1h.01M222.6 428.5h.01M426.3 547.2h.01M370 127h.01M440.6 357.9h.01M304.5 268.1h.01M836.3 161.3h.01M117.4 603.2h.01M592.8 303.7h.01M478.4 265.7h.01M412.4 330.3h.01M510 262.5h.01M586.8 272.1h.01M545.3 353.6h.01M544.9 197.6h.01M326.8 157h.01M445 286.3h.01M301 501.8h.01M522.1 344.4h.01M477.7 373.2h.01M208.9 306.8h.01M515.5 361.1h.01M470.9 191.6h.01M375.1 408.4h.01M598 106.9h.01M501.4 322.6h.01M741.6 195.3h.01M513.9 217.8h.01M128 161.7h.01M479.4 82.8h.01M515.6 213.3h.01M440.8 384.8h.01M436.3 320.3h.01M390.1 14.6h.01M519.3 420.8h.01M535.7 362.4h.01M532.2 296.1h.01M326.1 133.7h.01M122.9 598.8h.01M485.9 384.8h.01M537.6 271.7h.01M428.4 218h.01M375.8 259h.01M488.7 268.4h.01M574.1 175.8h.01M519.1 481h.01M520.9 317.2h.01M293.6 234.5h.01M614.9 322.4h.01M562.9 356.6h.01M469.4 284.4h.01M285.7 277.1h.01M700.8 157.2h.01M517.4 169.7h.01M475.6 84.9h.01M623.8 268.1h.01M718.1 297.8h.01M436.7 397.9h.01M521.4 270.6h.01M52.3 634.3h.01M573.9 142.5h.01M552.8 313.5h.01M597.3 348.4h.01M129.8 310.9h.01M346.4 290.4h.01M453.4 385.3h.01M511.4 276.4h.01M537 319.5h.01M785.6 280.9h.01M391.2 220.1h.01M530.4 353.1h.01M494.9 370h.01M666.7 636h.01M649.8 349h.01M549.5 318.6h.01M478.3 294.8h.01M779.8 174.1h.01M407.6 167h.01M840.6 216h.01M526.9 343.4h.01M313.1 422.3h.01M467.1 340.4h.01M291.8 377h.01M736.4 165.2h.01M173.1 320.8h.01M321.6 476.4h.01M518.6 302.9h.01M596.1 429.6h.01M502.4 297.3h.01M310.8 442h.01M590.6 346.2h.01M511.8 206.2h.01M521.2 258.4h.01M346.6 274.2h.01M853.1 74.9h.01M479.8 323h.01M236.8 389.9h.01M469.9 193.1h.01M413.3 368.6h.01M537.2 320.5h.01M533.2 359.3h.01M556.3 257.8h.01M539.7 299.4h.01M445.9 269.4h.01M786.4 152.4h.01M404.1 229.5h.01M439 377.4h.01M273.8 314.9h.01M924.4 172.8h.01M454.7 315h.01M613.4 351.3h.01M551.7 91.2h.01M653.3 216.8h.01M521 298.9h.01M534 374.5h.01M478.5 370.3h.01M640.2 36.7h.01M377.6 297h.01M524 242.5h.01M659 281.9h.01M497.6 190.8h.01M514 279.4h.01M545.9 289.7h.01M386.3 600.1h.01M475.2 258.2h.01M266.1 448.3h.01M273.7 522.9h.01M586.5 302.7h.01M544.5 227.3h.01M507.7 231.1h.01M628.2 436.1h.01M629.7 145h.01M617.1 106h.01M516.6 333.7h.01M462.8 276.4h.01M493 368.8h.01M406.7 155.4h.01M512.3 252.6h.01M326 299.5h.01M496.7 200.1h.01M584.9 326.8h.01M483.5 224.7h.01M476.3 341.9h.01M571.8 437.8h.01M526.3 257.3h.01M525.7 158.6h.01M430.5 325.2h.01M286.9 209.2h.01M267 478.8h.01M499.9 290.6h.01M500 352.9h.01M517.8 428.7h.01M447.8 214.4h.01M411.4 292.3h.01M135.3 78.7h.01M509.4 225.8h.01M183.7 401.9h.01M417.8 233.5h.01M402.9 168.9h.01M618.7 374.2h.01M242.7 124.7h.01M490.5 309.3h.01M535.1 83.9h.01M498.1 346.3h.01M144.4 87.3h.01M532.6 276h.01M377.7 353.5h.01M494.3 203.7h.01M465.6 147.6h.01M437.1 214.5h.01M385.2 139.7h.01M515.3 308.3h.01M551.3 292.1h.01M386.3 240.5h.01M477.9 196.2h.01M251.4 543.7h.01M381.2 67.6h.01M441.6 362h.01M336.4 282h.01M403.1 275.2h.01M485.9 282.3h.01M641.1 327.6h.01M350.9 154.9h.01M722 141.2h.01M498.4 298h.01M399.2 357.9h.01M540.3 271h.01M463.1 341.2h.01M450.2 214.9h.01M454.1 291h.01M526.9 186.3h.01M478.4 406.4h.01M522.5 441.6h.01M557.3 192.7h.01M470.9 378.5h.01M376.3 465h.01M412.9 388.4h.01M444.1 460h.01M696.7 289.4h.01M656.7 211.7h.01M567.7 381.1h.01M441.3 259.8h.01M364.7 284.7h.01M545.1 218.5h.01M469 288.7h.01M340 465.2h.01M477 342.8h.01M517.4 273.2h.01M301.8 375h.01M169.2 429.1h.01M607.7 332.3h.01M224.1 180.6h.01M614.4 46.9h.01M373.1 408.7h.01M646.9 306.9h.01M906 372.8h.01M562.8 598.8h.01M506.5 288.6h.01M643.6 345.8h.01M495.9 266.4h.01M459.5 322.5h.01M740 504.5h.01M477.4 263.5h.01M496.4 201.2h.01M496.9 378.1h.01M558.1 162.9h.01M609.9 287.8h.01M573.1 534.7h.01M715.1 628.3h.01M514.9 156.2h.01M494 515h.01M487.8 160.2h.01M531.6 279.9h.01M494.6 202.9h.01M468.5 322.4h.01M604.9 324.1h.01M703 109.2h.01M279.7 273.9h.01M532.4 329.5h.01M541 367.9h.01M467.9 352.9h.01M540 502h.01M528.6 234.9h.01M544.4 270.7h.01M560 328.5h.01M445.7 330.2h.01M522.1 274.9h.01M420.9 295.7h.01M228.9 116.5h.01M503.5 378.2h.01M134.8 448.9h.01M673.3 362.5h.01M525.9 92.9h.01M300.9 286h.01M573.1 339.7h.01M500.7 181.7h.01M565.7 395.5h.01M269.3 226.4h.01M528.7 264.8h.01M602.4 179.7h.01M532.1 169.5h.01M432.4 311.8h.01M548.3 309.1h.01M820.3 525.7h.01M519.6 330.1h.01M565.4 384.3h.01M442.5 333.7h.01M534.4 260.2h.01M451.8 447.6h.01M515 256.9h.01M596.9 477.4h.01M372.4 393.7h.01M360.9 453.6h.01M501.6 94.4h.01M508.3 399.1h.01M416 105.3h.01M441.4 339.7h.01M825.8 556.4h.01M369.1 350.7h.01M537.5 288.4h.01M538.6 444.2h.01M328.8 533.6h.01M799.5 193.5h.01M193.4 94.6h.01M576.2 254.9h.01M168 461.8h.01M553.5 99h.01M252.9 599.8h.01M522.7 392.7h.01M408.1 430.3h.01M391.3 267.1h.01M470.9 178.6h.01M553.8 309.5h.01M482.2 380.3h.01M267.9 131.3h.01M383.9 243.8h.01M230.5 436.9h.01M463.7 260h.01M279.5 237.5h.01M510.8 294.2h.01M397.7 371.5h.01M479 289h.01M487 341.6h.01M640.1 123.8h.01M456.4 233.1h.01M521.9 203.8h.01M343.3 432.2h.01M502.7 262.6h.01M465.7 247.6h.01M581.1 299.3h.01M627.7 283.4h.01M556.4 326.1h.01M482.3 348.7h.01M575 223.6h.01M487.3 248.2h.01M558.6 42.3h.01M748.6 438.3h.01M513.7 320.3h.01M341.3 416.3h.01M810.4 95.3h.01M491.5 271.6h.01M446.5 398.6h.01M220.7 269.9h.01M512.3 236.3h.01M612.1 369.4h.01M562.6 217.1h.01M583.4 174.6h.01M351.9 380.4h.01M506.6 254.4h.01M249.3 305.1h.01M203.6 256.3h.01M451.1 248.7h.01M509.1 303h.01M442.1 254h.01M87.9 178.6h.01M590.8 345.8h.01M462 304.5h.01M493.6 317.4h.01M422.6 409.2h.01M550 224.4h.01M376.8 466.6h.01M458.2 394.5h.01M50.8 132.8h.01M677.6 419.7h.01M455.4 328.7h.01M447.7 487h.01M285.8 471h.01M572.1 71.3h.01M85.8 65.5h.01M476.5 320.2h.01M425.6 372.7h.01M695.4 288.3h.01M688.3 366.7h.01M447.6 183.7h.01M468.7 335.7h.01M329.8 307.3h.01M271.6 119.8h.01M546.2 321.5h.01M420.3 249.4h.01M694.5 515.2h.01M337.7 335h.01M457 254h.01M487.9 628.3h.01M448.6 100.1h.01M315.7 415.1h.01M431.2 159.2h.01M625.7 209.6h.01M498.3 407.9h.01M473.1 326h.01M356.5 91.7h.01M572.7 291.4h.01M426.6 188.1h.01M365.1 445.3h.01M525.2 389.6h.01M505.5 336.2h.01M569.8 342.5h.01M447.5 360.5h.01M411 216.1h.01M480.5 247.6h.01M328.2 351.7h.01M539.4 200.5h.01M439.2 345.4h.01M787.3 360.6h.01M530.6 552.3h.01M483.3 324h.01M518.4 360.3h.01M443.9 332.5h.01M446 258h.01M632.8 290.2h.01M375.4 282.9h.01M569 157h.01M448.4 290.4h.01M86.2 77.8h.01M486.8 262.7h.01M503.7 560.4h.01M626.4 118.2h.01M666.2 156.7h.01M676.9 423.2h.01M355.4 362.6h.01M639.2 432h.01M684 226.1h.01M451.7 245.4h.01M97.4 522.2h.01M505.8 292h.01M473.8 236.5h.01M581.5 225.3h.01M535.8 276.8h.01M542.7 326.6h.01M404.6 308.1h.01M421.1 213.8h.01M395.2 395.4h.01M454.4 416h.01M479 313.8h.01M431.8 241.9h.01M510.2 218.9h.01M649.6 105.8h.01M486.3 366.2h.01M739.1 175.4h.01M622.3 336.2h.01M520.9 335.4h.01M369.5 180h.01M701.1 252.3h.01M427.1 345.8h.01M322.1 180.5h.01M599.8 192h.01M335.6 49h.01M501.6 282.2h.01M418.1 219.8h.01M616.8 200.7h.01M545.5 197.5h.01M602.6 512h.01M524.9 274.7h.01M329.8 336.4h.01M637.5 365.2h.01M532.8 260.2h.01M31.6 571.3h.01M453.9 329.6h.01M492.7 330.9h.01M353.4 317.3h.01M459.2 328.4h.01M521.7 178.9h.01M297.7 105.3h.01M392.4 289.4h.01M671.7 274.7h.01M444.2 549.1h.01M282.5 218h.01M675.2 569.2h.01M126.2 146.4h.01M397.3 294.7h.01M403.7 322.8h.01M299.6 228.8h.01M815.5 306.6h.01M689 352.8h.01M547.5 47.3h.01M436.5 425.3h.01M440.5 249.3h.01M223.2 356.5h.01M470.6 440.9h.01M442.6 253h.01M709.5 93.6h.01M474.9 302h.01M458.4 328.9h.01M479.1 197.4h.01M543.7 311.5h.01M475.5 123.6h.01M390.4 231.9h.01M586.6 412.5h.01M687.4 125.9h.01M566.5 394.7h.01M543.8 156.9h.01M450 223.9h.01M533.1 258.8h.01M597.7 589.5h.01M473 278.6h.01M440.2 113.1h.01M588.6 322.4h.01M384.3 411.6h.01M497.5 175.6h.01M335.1 272.1h.01M297.5 544.1h.01M506.8 276.8h.01M426.7 289h.01M488 296.2h.01M685.2 197h.01M659.1 493.7h.01M402.4 381.8h.01M518.1 336.2h.01M288.7 128.4h.01M551.1 302.1h.01M562.5 328.8h.01M11.6 616.2h.01M375.9 400.4h.01M381.6 382.3h.01M414.9 182.4h.01M124.3 513h.01M464.9 291.8h.01M640.4 250h.01M435.5 279.6h.01M614.2 189.3h.01M488.9 85h.01M615.2 557.7h.01M760.1 491.2h.01M484.2 131h.01M811.4 331.7h.01M456.5 470h.01M620.2 285.8h.01M378.6 526.7h.01M547 251.4h.01M493.5 27.1h.01M543.3 494h.01M522.6 220.1h.01M428.6 269.5h.01M458.2 319.9h.01M361.3 257h.01M550.4 227.3h.01M555.3 324.5h.01M798.9 509.4h.01M396.2 330.5h.01M480.6 309.6h.01M466.7 350.4h.01M428 300.1h.01M619.1 272.8h.01M290.3 370.6h.01M566 338.8h.01M420.9 487.2h.01M586.9 289.7h.01M267.8 521.1h.01M523.8 293.4h.01M476.6 440.6h.01M376.2 380.5h.01M686.6 260.4h.01M576.4 397.5h.01M626.7 387.8h.01M609.5 151.2h.01M507.6 265.4h.01M562.5 343.1h.01M223.5 145.9h.01M47.9 213h.01M543.3 358.3h.01M618.7 277.8h.01M606.9 527.5h.01M319.4 154h.01M505.2 242.4h.01M479.7 497h.01M469.1 482.7h.01M305.8 379.2h.01M587 370.4h.01M748.4 610.8h.01M303 317.4h.01M524.3 250.1h.01M576.7 447.8h.01M483.3 310.5h.01M585.3 227h.01M380.5 412.3h.01M572.7 221.4h.01M499 118.4h.01M428.9 263.2h.01M580.2 472.6h.01M243.7 285.8h.01M328 300.8h.01M610 513.3h.01M598.8 194.3h.01M381 122.2h.01M403.8 231.6h.01M474.2 162.6h.01M346.4 522h.01M534.9 283.5h.01M485.3 238.4h.01M618.8 305.5h.01M470.5 346.1h.01M577.8 229.9h.01M247.5 351.5h.01M476.6 270.8h.01M639.5 309.7h.01M308.4 276h.01M336.1 465.2h.01M294.1 524.7h.01M508 342.6h.01M594.3 604h.01M309.5 360.5h.01M62.4 183.5h.01M561.4 302.4h.01M490.3 202.3h.01M571.6 247.7h.01M396.5 374.7h.01M256.3 273.9h.01M351.4 394.4h.01M284.7 458.1h.01M644.5 326.7h.01M593 282.1h.01M515 244.3h.01M561.6 306.8h.01M568.1 341h.01M340.4 252.3h.01M532 301.6h.01M101.1 63.1h.01M784.2 163.2h.01M303.2 223.5h.01M131.5 232.4h.01M181.8 478.1h.01M437.3 328.2h.01M307.1 231.3h.01M408.2 542.7h.01M503.2 510.1h.01M345.5 298.1h.01M52.1 211.9h.01M428.8 226.2h.01M440.5 374.5h.01M569.2 146.5h.01M760 210.7h.01M497.4 300.4h.01M503.9 300.9h.01M328.8 400.5h.01M477.8 345.1h.01M374.6 283.9h.01M313.6 487.9h.01M635.6 564.4h.01M315.5 383.1h.01M422.7 345.5h.01M142.9 170h.01M491.1 245.4h.01M457.2 210.1h.01M439 509.9h.01M315.7 337.3h.01M525.7 392.7h.01M493.4 262h.01M582.4 474h.01M486.3 286.2h.01M447.4 240.1h.01M623.7 179h.01M460.1 487.6h.01M332.3 381.3h.01M508.2 351.4h.01M664.5 328.6h.01M875.1 437.8h.01M452.8 101.5h.01M422 279.1h.01M433.2 226.3h.01M519.2 452.1h.01M429.1 344.1h.01M466.7 596.3h.01M577.1 99.5h.01M742.1 622.2h.01M852.1 341.3h.01M539.4 325.8h.01M158.4 243.3h.01M544.2 272.6h.01M481.7 178.9h.01M510.7 208.1h.01M877.7 526.7h.01M643.9 125.9h.01M371.6 284.8h.01M476 243.5h.01M487.4 438.8h.01M363.8 463h.01M175.8 431.7h.01M535.8 309.1h.01M686.7 290.7h.01M558.1 486.2h.01M226.3 470.6h.01M199 394.6h.01M469.1 273.6h.01M515.4 107.4h.01M54 112h.01M275.9 195.6h.01M387.8 307.1h.01M596.3 520.7h.01M443.7 323.2h.01M755.7 154.2h.01M207.2 180.5h.01M906.8 277h.01M382.9 230.7h.01M330.9 345.6h.01M539.1 530.6h.01M450.3 497.8h.01M446.1 311.3h.01M463.3 241.6h.01M556.8 267h.01M547.5 302.5h.01M664 343.7h.01M159.4 173.4h.01M508.4 275.5h.01M617.9 348.9h.01M385.2 246.4h.01M899.8 309.4h.01M599.2 76.6h.01M618.1 349.5h.01M508.4 433.9h.01M616.7 523.9h.01M443.5 291.1h.01M333.3 267.9h.01M145.5 75.5h.01M213.1 629.9h.01M338.7 192.4h.01M349.2 248.7h.01M341.4 139.6h.01M493 291.3h.01M655 404.5h.01M207.6 356.8h.01M569.4 354.6h.01M313 342.2h.01M538.3 375.5h.01M501 351.4h.01M240.2 38.1h.01M541 437.8h.01M60 597.3h.01M608.2 315.3h.01M669.9 57.8h.01M525.8 219.5h.01M680.6 532.1h.01M304.7 278.8h.01M435.5 265.3h.01M375.7 374.3h.01M281.8 276.6h.01M473.2 280.4h.01M538.6 312.1h.01M572 313.5h.01M415.7 225.4h.01M563.6 204.4h.01M500.3 149.8h.01M651.4 620.1h.01M411.8 300.1h.01M444.4 282.4h.01M314.1 50.9h.01M586.2 390.9h.01M422.1 324.5h.01M455.3 408.1h.01M474.2 281.2h.01M62.3 519.1h.01M693.3 360.3h.01M263.5 404.2h.01M647.7 158.4h.01M496.4 306.5h.01M554.1 351.5h.01M479.4 324.4h.01M467.4 303.8h.01M376.1 445h.01M544.3 587.9h.01M584.1 316.1h.01M369.6 396.9h.01M627.6 280.3h.01M764.6 530.8h.01M632.3 223.6h.01M434.5 298.8h.01M418 308.9h.01M114.9 564.6h.01M104.9 630.6h.01M611.7 245.4h.01M809.9 242.9h.01M487.8 281.6h.01M617.8 296.3h.01M877.2 596.1h.01M490.4 269h.01M372.9 189.6h.01M454.5 260.4h.01M582.9 484.3h.01M680.3 558h.01M325.1 409h.01M607.3 279h.01M515.6 364.7h.01M476.6 278.2h.01M553.5 300h.01M517.5 297.6h.01M534.4 279h.01M553.3 338.6h.01M433.9 391.3h.01M390 367.5h.01M819.4 480.8h.01M343.2 293.4h.01M607.3 157.8h.01M473.3 221.9h.01M488.5 342.2h.01M485.5 305.7h.01M453.9 253.5h.01M625.5 266.4h.01M479.2 208h.01M629.4 250.4h.01M514.3 303.9h.01M339.5 54.2h.01M471.5 380.7h.01M646.4 320.4h.01M443.9 293h.01M493.7 380.5h.01M548.6 349.2h.01M602.6 247h.01M424.6 267.8h.01M618.3 480.9h.01M424.5 410.6h.01M538.9 333.7h.01M473.3 435.4h.01M185.1 105.9h.01M166.5 78h.01M581.4 319.3h.01M28.6 45.3h.01M446.4 269.1h.01M514 259.9h.01M466.5 107.5h.01M318.9 321.9h.01M448.7 339.4h.01M287.1 20.9h.01M448.6 364.6h.01M340.2 518.4h.01M631.4 279.5h.01M592.3 150.7h.01M525.1 335.4h.01M605.1 436h.01M580.4 167h.01M468.4 321h.01M590.4 324.2h.01M826.9 327.6h.01M738.6 235.5h.01M619.6 337.7h.01M646.3 439.5h.01M523.8 290.8h.01M557.8 481.5h.01M465.1 287.6h.01M710.9 357.6h.01M594.6 277.9h.01M470.1 330.3h.01M514.8 348.3h.01M544.8 195.6h.01M187.7 249h.01M563.4 490.6h.01M664.1 268.6h.01M367.8 136h.01M584.3 408.3h.01M483.8 270.1h.01M546.4 223.6h.01M561.4 398.2h.01M164.7 438.4h.01M586.1 181.6h.01M639.5 630.2h.01M390.6 261h.01M448.4 159.1h.01M536.9 324.4h.01M577.1 227.3h.01M495.7 303.8h.01M369.6 216.9h.01M583.6 339.1h.01M691.3 232.6h.01M732.9 410h.01M572.7 275.3h.01M490.1 358.3h.01M465.1 328.9h.01M470.8 158.9h.01M582.2 280.2h.01M717.1 241.2h.01M832.8 470.3h.01M437.6 284.6h.01M885.6 35.7h.01M480.2 55.7h.01M116.4 172.9h.01M534.9 289.2h.01M666.7 499.7h.01M571.2 366.1h.01M466.9 246.2h.01M388.8 231.5h.01M512.8 371.4h.01M550.2 391.1h.01M502.3 282.4h.01M566.5 49h.01M419.8 460.5h.01M523.2 279.1h.01M505.8 232.6h.01M473.8 247.7h.01M693.7 245.1h.01M521.7 370.6h.01M489.2 242.4h.01M311.2 318h.01M494 426h.01M459.8 385h.01M653.7 434.2h.01M788.5 291.5h.01M472.7 307.3h.01M376.7 361.2h.01M393.7 325.3h.01M599.7 3.2h.01M520.6 315.7h.01M379.5 55.4h.01M468.6 294.1h.01M546.5 186.1h.01M380.4 49h.01M502 206.1h.01M421.7 349.6h.01M76 367.9h.01M323.5 504h.01M654.4 223.9h.01M226 168.2h.01M563.8 335.3h.01M409.6 335.4h.01M431.6 303.3h.01M395.9 338.3h.01M603.1 197.3h.01M332.7 284.7h.01M434.5 458.5h.01M870.3 450.8h.01M431.7 332h.01M556.6 247.8h.01M652.7 386.8h.01M507.5 340.9h.01M618.4 187h.01M409.9 305.1h.01M500.6 369h.01M648.8 311.3h.01M628.5 581.3h.01M452.4 308h.01M383.9 378.8h.01M529.8 339.5h.01M489.4 321.9h.01M658.3 172.8h.01M425.1 380.6h.01M455 291.4h.01M505 287h.01M382.2 321.1h.01M90.7 425h.01M472.8 278.5h.01M592.4 170.8h.01M543.5 209.6h.01M509.8 272h.01M441.9 182h.01M457.9 293.3h.01M636.5 325.5h.01M603 216h.01M371.4 603.5h.01M480.8 381.9h.01M653 152.9h.01M460.5 431.2h.01M590.2 272.8h.01M509.1 255.8h.01M382.9 402.5h.01M565.2 253.1h.01M458.6 372.7h.01M362 142.2h.01M887.8 510.8h.01M497.3 324.1h.01M390.1 153.6h.01M718 342.2h.01M439.8 309.1h.01M508.5 352.6h.01M614.3 76.6h.01M625.9 74.9h.01M409.3 278.7h.01M818.9 7.1h.01M296.3 102.7h.01M303.1 343.8h.01M502.6 317h.01M465.9 333.9h.01M271.7 214.4h.01M435.7 301.9h.01M105.9 510.5h.01M371.9 396.9h.01M596.1 320.3h.01M522.3 247.1h.01M451.2 361.4h.01M558.8 433h.01M439.1 357.7h.01M631.7 327.7h.01M463.5 454.8h.01M469.1 431.3h.01M557.6 258.7h.01M544.5 377.4h.01M518.3 345.6h.01M625.9 214.7h.01M546.4 258.4h.01M507.5 290.5h.01M473.2 297.2h.01M380.1 398.5h.01M622.4 392.7h.01M416.6 503.5h.01M358.2 173.8h.01M398.5 263h.01M630.8 360.3h.01M760.8 268.7h.01M461.9 443.7h.01M492.7 64.8h.01M460.5 355.6h.01M644.7 321.1h.01M822 274.6h.01M507.4 332.3h.01M525.6 179.6h.01M403.2 211h.01M58.7 209.8h.01M625.2 576.1h.01M363.1 311.1h.01M743.5 72.9h.01M376.1 194.1h.01M541.2 298.6h.01M752.6 237h.01M478 232.7h.01M656.1 370.6h.01M793.5 384.8h.01M409.6 348.5h.01M482.1 304.6h.01M616.8 259.6h.01M323.6 104.4h.01M522.6 343.9h.01M526.7 191.5h.01M501.8 318.2h.01M517.2 254.4h.01M419.7 306.2h.01M470 75.8h.01M460.5 350.4h.01M474.5 307.6h.01M519.9 370.8h.01M475.7 225.6h.01M361 164.9h.01M521.7 198.8h.01M318 149.4h.01M377.9 326.7h.01M487.2 285.4h.01M489.7 338.9h.01M670.4 563.1h.01M573.1 485.9h.01M555 375.5h.01M443.6 392.1h.01M585.6 222.2h.01M475.3 320.8h.01M558.3 218.5h.01M578.5 286.9h.01M836.7 338.8h.01M506.4 292.5h.01M524.6 298.2h.01M353.9 263.8h.01M840.4 309.6h.01M446.5 420.5h.01M431 359.7h.01M590.2 277.7h.01M785.7 511.9h.01M537.2 260.6h.01M423.9 163.9h.01M510.6 229.5h.01M531.6 385.6h.01M426.5 464.5h.01M493 587.6h.01M319.9 386h.01M486.2 252.3h.01M552.9 270h.01M425.7 195.5h.01M621.9 240.9h.01M506.6 33.7h.01M586.6 584.2h.01M752.1 559.7h.01M584.9 268.6h.01M398.6 226h.01M474.4 372.5h.01M348 318.5h.01M756.8 225.8h.01M437.2 314.8h.01M471.2 59.5h.01M608.6 226.4h.01M687.1 133.7h.01M512 597.9h.01M361.6 354.4h.01M491.5 439.8h.01M549.7 220.5h.01M473.4 288.6h.01M647.3 332h.01M474.6 444.1h.01M210.5 443.6h.01M436.6 528.5h.01M763.5 446.1h.01M305.6 276.2h.01M539 284.6h.01M266.6 59.6h.01M398.6 370.6h.01M552.8 537.7h.01M262.8 25.3h.01M373.8 271.1h.01M620.6 135.1h.01M404.4 320.2h.01M911.1 311.5h.01M522.4 296.4h.01M539.7 118.4h.01M942.7 429.5h.01M812.6 562.5h.01M573.8 539.2h.01M451.2 379.7h.01M522.6 399.7h.01M548.7 358.5h.01M783.1 101.4h.01M510.6 81h.01M440.5 342.2h.01M599.4 280.2h.01M532.5 243.4h.01M225.3 55.2h.01M449.7 105h.01M536.4 359.9h.01M531.7 162.9h.01M688.5 93.1h.01M684.4 521.8h.01M494.3 200.4h.01M409.8 166.7h.01M433.7 277.2h.01M413.6 299.2h.01M350.9 313h.01M469.8 211.1h.01M376.2 331.5h.01M465.6 479.3h.01M482.3 362.3h.01M738.7 424.7h.01M354.7 306.7h.01M60.3 127.4h.01M343.2 491.6h.01M536.1 625.9h.01M534.1 240.7h.01M334.8 92.7h.01M427.4 357h.01M271.2 142.5h.01M488.2 361.4h.01M713.7 280.5h.01M523.9 314.7h.01M515.9 246.1h.01M639.6 433.9h.01M645.3 180.7h.01M723.4 218.8h.01M514.4 116h.01M384.8 296.5h.01M628.1 326h.01M268.5 306.1h.01M230 514.9h.01M514.9 336.8h.01M558.1 335.4h.01M481.6 634.5h.01M502.4 425.4h.01M453 6.9h.01M633.4 219.9h.01M362.2 603.6h.01M348.2 273.8h.01M330.7 287.6h.01M645.2 213.7h.01M477.6 338.3h.01M512.5 398.4h.01M591.1 216.7h.01M270.5 287.5h.01M482.8 347.3h.01M355 233.5h.01M515.3 310.7h.01M423.1 343.8h.01M678.9 385.9h.01M347.6 397.4h.01M678.2 289.2h.01M471.4 251h.01M407.5 239.4h.01M674.4 277.6h.01M506.9 31.9h.01M464.7 297.6h.01M372.8 445.2h.01M610.5 421.1h.01M464.5 242.5h.01M685.6 390.8h.01M732.7 474.3h.01M870.1 371.1h.01M668.1 272.6h.01M603.9 307.2h.01M394.8 398.3h.01M299.4 220.4h.01M443.3 376.1h.01M671 390.1h.01M728.5 300.4h.01M618.6 413.4h.01M545 420.9h.01M497.2 199.2h.01M396.6 348.3h.01M287.3 418.5h.01M481.1 411.9h.01M317.8 211.3h.01M523.7 228.2h.01M295.6 479.5h.01M555.7 289.8h.01M630.3 384.2h.01M458.3 413.3h.01M350.5 117.8h.01M372.1 244.3h.01M617.6 213.4h.01M152 449.5h.01M498.4 247.4h.01M356.7 395.1h.01M383.3 121.3h.01M717.4 368.9h.01M207.7 395.8h.01M568.9 335.1h.01M518.9 186.3h.01M930.6 107.3h.01M477.3 279.7h.01M580.2 282.9h.01M454.2 297.9h.01M450.8 246.1h.01M68.4 413.2h.01M95.1 77.7h.01M511.4 193h.01M487.3 267.3h.01M597.8 404.1h.01M580.8 459.7h.01M709.3 295.1h.01M477.7 363.3h.01M544.3 521.8h.01M444.2 162.1h.01M514.3 414.6h.01M248.1 567.4h.01M709.2 131.6h.01M439.9 224.8h.01M505.2 286.2h.01M726.6 619.5h.01M478.6 549.2h.01M546 487.3h.01M491.5 13.7h.01M500.1 318.1h.01M441.6 381h.01M464.5 256.7h.01M387 358h.01M720.5 238.2h.01M680.1 336.4h.01M489.1 211.6h.01M451 218.8h.01M472.7 289.8h.01M506.5 328.5h.01M564.5 210.6h.01M539.8 370.8h.01M565.5 408h.01M237.5 343.8h.01M538.1 202.8h.01M180.9 462.2h.01M411.2 232.8h.01M608.3 118h.01M395.1 310.1h.01M410.2 284.1h.01M577.4 288.7h.01M407 392.7h.01M522.6 313.4h.01M571.7 510.6h.01M351.6 86.5h.01M321.1 414.5h.01M528.5 364.7h.01M629.9 201.9h.01M290.9 166.7h.01M588.9 394.1h.01M489.5 459.1h.01M429.9 309.5h.01M349.2 518.3h.01M387.8 433.2h.01M660.9 252.1h.01M386.3 249.6h.01M492.1 280.7h.01M602 227h.01M791.2 271.6h.01M467.6 168h.01M419.2 354.3h.01M452.2 176h.01M489.1 120.3h.01M812.5 261.8h.01M237.5 167.6h.01M252.9 553.4h.01M388.4 360.3h.01M444.1 413h.01M407.7 294.8h.01M673.8 358.5h.01M528.8 373.1h.01M699.9 185.2h.01M420.3 278.5h.01M356.1 349h.01M390.5 264.1h.01M469.4 391.5h.01M567.3 340.6h.01M566.5 465.2h.01M533.7 320h.01M528.3 266.8h.01M489.5 247.8h.01M428.2 297h.01M369.4 419.2h.01M395.2 440.4h.01M416.2 479.9h.01M37.8 145.6h.01M219.2 9.4h.01M440.9 235.7h.01M560.2 368.1h.01M610.3 242.7h.01M657.9 90h.01M452 232.1h.01M640.7 287.9h.01M611.7 309.5h.01M582.1 159.2h.01M732.7 476.1h.01M488.1 29.8h.01M502.1 153.8h.01M504.7 350.5h.01M548 388.9h.01M54.3 416.3h.01M529.2 202.1h.01M873.1 108.6h.01M447.3 272.7h.01M502 403.1h.01M440.5 370.9h.01M577.8 353.3h.01M466.9 274h.01M582.9 347h.01M408.3 240.1h.01M232.2 98.4h.01M908.9 205.2h.01M567.3 286.6h.01M439.1 250.7h.01M392.9 333.6h.01M452.6 242.4h.01M275.3 399.1h.01M629.5 356.5h.01M490.3 317.4h.01M380.6 305.8h.01M320.6 496.1h.01M625.9 349h.01M442.9 370.8h.01M213.3 254.6h.01M610.6 375.6h.01M578.5 324.6h.01M534.4 346.8h.01M629.6 179.7h.01M305.6 79.6h.01M468.3 571.6h.01M412.5 278.8h.01M373.1 413.3h.01M513.1 187.4h.01M345.5 256.3h.01M180.2 464.7h.01M354.4 122.3h.01M830.1 477h.01M407.5 247.7h.01M536.8 180.8h.01M443.8 288.8h.01M455.5 384.5h.01M490.9 347.3h.01M747.7 389.3h.01M480.7 184.3h.01M415.5 199.7h.01M456.7 370.1h.01M294.9 185.4h.01M701.1 623.6h.01M459.2 289.5h.01M527.2 440.9h.01M671.5 234.3h.01M402.6 268h.01M422.5 441.5h.01M331.1 525.5h.01M619.3 290.3h.01M337.2 390.1h.01M335.2 398.3h.01M429.2 274.6h.01M488.8 245.2h.01M527.5 305.8h.01M701.9 351.9h.01M487.5 267.9h.01M725.6 439h.01M561 351.1h.01M536.1 323.4h.01M356.5 174.4h.01M625.3 293h.01M647.4 259.7h.01M814.6 236.1h.01M556.9 352.1h.01M0.3 430.3h.01M433.8 355.3h.01M385.5 279.1h.01M651.8 168.5h.01M55.3 367.2h.01M566.5 282.7h.01M491 393.7h.01M294.2 332.2h.01M592 542.3h.01M445.4 399.2h.01M601.4 257.7h.01M271.3 631.6h.01M490.9 287.4h.01M357.3 475.3h.01M538.1 288.5h.01M663.6 522.4h.01M420 249.5h.01M658.8 353.5h.01M557.6 387.2h.01M357 127.3h.01M305.5 309.3h.01M306.5 204.5h.01M530.5 63.7h.01M443.4 9.1h.01M808.4 277.8h.01M561 421.7h.01M208.9 402.7h.01M545 342.5h.01M410.1 210.2h.01M532.5 353.6h.01M740.1 482.1h.01M504.5 340.1h.01M510 307.5h.01M527.4 444.2h.01M469.7 210h.01M910.5 588.4h.01M648.4 224.4h.01M633.9 290.7h.01M407.7 259.9h.01M483.2 424.8h.01M397.7 243.7h.01M358.8 176.6h.01M609.6 246.1h.01M455.8 184.4h.01M543.6 146.2h.01M830.4 511.4h.01M245 294.9h.01M896.1 178.7h.01M351.4 314.3h.01M588.8 53.3h.01M546.4 240.6h.01M305.7 414.4h.01M483 400.1h.01M498.4 328.6h.01M466.5 442.8h.01M788.7 168.3h.01M657.4 346.5h.01M544.4 371.4h.01M479.2 219.7h.01M545.4 72h.01M370.1 400.9h.01M516.3 314.2h.01M503.4 297.7h.01M170.5 235.2h.01M446 533.7h.01M480.2 120.2h.01M580.5 209.4h.01M349.5 274.1h.01M461.7 308.7h.01M434.1 323.3h.01M422.9 289.1h.01M157.5 110.9h.01M463.3 293.4h.01M533.8 451.6h.01M428.4 360.2h.01M379.3 337.2h.01M503.7 510.6h.01M418.7 415.3h.01M761 206.7h.01M562.5 304.1h.01M454.2 248.6h.01M401.9 489.6h.01M550.5 226.1h.01M569.7 301.7h.01M517.7 185.9h.01M4.8 359.8h.01M852.7 378.6h.01M536.2 143.3h.01M411.9 404.1h.01M431.2 276.6h.01M452 326.5h.01M502 241.4h.01M367.1 378.9h.01M441.6 308.3h.01M549.2 177.2h.01M377.1 82h.01M430.6 259.9h.01M564.8 614.6h.01M512.5 259.2h.01M496.6 349.1h.01M458.8 243.7h.01M451.5 285.2h.01M519.3 259.4h.01M506.6 294.5h.01M161.1 596.3h.01M380.3 427.2h.01M505.6 214h.01M487.1 403.2h.01M575.5 348h.01M583.5 178.8h.01M496 259.9h.01M418.6 136.9h.01M289.9 236.3h.01M693.5 404.9h.01M515.6 305.5h.01M610.4 389.1h.01M631.8 331.1h.01M400.8 354.8h.01M517.6 335.8h.01M415.8 95.5h.01M493.6 359.1h.01M46.7 436.9h.01M440.5 262.8h.01M530.8 232h.01M421.8 211.7h.01M529.4 169.8h.01M471.4 313.6h.01M382.5 350.9h.01M402.5 314.6h.01M438.3 299.9h.01M509.7 417.5h.01M677.4 202.3h.01M459.2 312.6h.01M391.6 28.6h.01M307.7 456.2h.01M415.4 312.4h.01M347.1 179.3h.01M368.8 283.5h.01M179 608.2h.01M488.7 104.6h.01M703 420.4h.01M269.3 531.5h.01M431.6 329.5h.01M536.7 314.1h.01M561 316.5h.01M517.6 207.1h.01M506 197.5h.01M305.7 97.1h.01M607.4 14.1h.01M359.2 501.5h.01M405.4 258.9h.01M427.6 312h.01M370.1 256.7h.01M630.5 103.9h.01M410.2 29.2h.01M474 67.4h.01M309.7 290.8h.01M508.3 345.4h.01M545.1 302.9h.01M732.5 46.5h.01M380.8 296.6h.01M662.7 558h.01M529.9 395.5h.01M673.1 276.8h.01M529 146.1h.01M682.2 303.6h.01M343.7 370.5h.01M484.5 384.6h.01M432 179.2h.01M107.3 140.8h.01M487.4 239.6h.01M462.9 303.6h.01M370.4 244.6h.01M358.7 491.6h.01M560.5 68h.01M591.3 352.3h.01M405.5 319.7h.01M558.1 133.8h.01M463.4 461.3h.01M532.8 547.6h.01M629.2 6.2h.01M496.1 304.5h.01M659 344.9h.01M527.2 226h.01M547 347.8h.01M420.2 576.3h.01M583.3 197.8h.01M317.7 444.3h.01M453.9 295.8h.01M390.5 43.8h.01M546.1 404.1h.01M482.5 331.3h.01M482.9 230h.01M773.7 513.6h.01M554.9 155.7h.01M551.6 364.9h.01M511.8 199.1h.01M563.4 233.3h.01M628.4 276.3h.01M624.6 364.7h.01M542.9 339.8h.01M469 158.8h.01M417.8 264.3h.01M533.1 142.2h.01M412.1 214.1h.01M440 344h.01M402.7 404.6h.01M389.7 158.4h.01M575.6 458h.01M334 370.8h.01M678.6 188.7h.01M446.9 306.4h.01M671.6 263.8h.01M268.8 351.6h.01M515.6 301.8h.01M768 279.1h.01M715.1 545.8h.01M496.9 363.3h.01M504.8 396.3h.01M154.7 397.7h.01M98.2 197.1h.01M61.2 450.9h.01M512.4 281.9h.01M603.5 165.5h.01M414.7 297.2h.01M372 204.7h.01M550.4 408.2h.01M428.1 333h.01M374 458.4h.01M474.4 249h.01M476.3 244.6h.01M454.4 386.6h.01M490.8 612.3h.01M560.5 287.8h.01M388.5 65.7h.01M609.4 385.9h.01M353.1 338.6h.01M371.7 324.9h.01M418.9 146h.01M458.8 341h.01M226.8 173.3h.01M552.8 219.5h.01M614.4 326.5h.01M573.8 83.9h.01M736.7 373.9h.01M545.9 336.7h.01M465.2 280.5h.01M424.7 416.3h.01M403 481.2h.01M766.8 223.1h.01M421.3 397.9h.01M442 296.7h.01M391.2 481.5h.01M335 424.4h.01M557.1 328.6h.01M657.2 216.2h.01M244 289h.01M202.8 40h.01M537.9 259.8h.01M719.6 195.9h.01M428.5 281.8h.01M399.6 112.9h.01M439.9 334.1h.01M780.7 283.2h.01M526.7 118.8h.01M549.9 498.6h.01M473.6 354.9h.01M487.4 142.2h.01M530.1 265.1h.01M476.3 330.7h.01M542.2 319.9h.01M423.1 98.4h.01M384.2 259.7h.01M237.5 379.1h.01M404.5 240.3h.01M744.9 409.6h.01M405.9 244.9h.01M446.8 452.1h.01M299.8 171.1h.01M439.4 482h.01M524.6 471.3h.01M509.3 207.8h.01M652.5 433.3h.01M779.9 370.2h.01M500.2 204.3h.01M272.9 202.6h.01M558.2 395.5h.01M757.1 380.6h.01M588.7 175.6h.01M633.8 316.9h.01M785.9 322.2h.01M419.3 160h.01M417.8 361.5h.01M494.1 382.3h.01M517.8 294h.01M438.9 251.5h.01M739.5 577.2h.01M491.9 587.8h.01M230.4 429.1h.01M449.4 375.5h.01M606.6 218.4h.01M525.8 408.9h.01M494.1 314.2h.01M464.2 321.8h.01M603.7 557.7h.01M418.5 103.7h.01M263.8 477.4h.01M523.8 287.8h.01M491.9 468.1h.01M244.2 399.3h.01M536.9 487.1h.01M383.5 231.1h.01M462.5 312.1h.01M495.4 320.5h.01M283.6 342.3h.01M41.4 133.3h.01M422.6 311.3h.01M893.7 317.6h.01M402.7 508.9h.01M408.2 362.7h.01M475.8 319.5h.01M892 349.7h.01M451.4 260.4h.01M406.8 214h.01M696.4 165.7h.01M477.2 270h.01M476.9 311.6h.01M244.3 293.8h.01M401.6 303.4h.01M573.8 495.6h.01M474.9 198.7h.01M588.9 336.5h.01M465.2 302h.01M408.5 275.2h.01M650.4 308h.01M481.1 268.7h.01M462 143.5h.01M508.5 286.3h.01M475.4 395.8h.01M617.2 328.6h.01M750.3 206.7h.01M303 253.2h.01M235.2 323h.01M562.5 397.7h.01M498.5 298.9h.01M519.2 285.8h.01M491.2 311.6h.01M506.3 254.4h.01M323.6 219.8h.01M480 314.5h.01M511.1 138.2h.01M419.9 336h.01M50.9 303.3h.01M481.2 288.7h.01M577.1 317.6h.01M413.6 203.2h.01M579.5 284.3h.01M220.8 259.7h.01M358.2 426.9h.01M429.8 197.7h.01M194.7 443.4h.01M551.1 474.2h.01M531.5 228.2h.01M661.3 14.4h.01M364.2 356.7h.01M550.1 368.8h.01M571 379.9h.01M497.4 108.7h.01M480.5 357.9h.01M346.1 323.5h.01M470.3 288.1h.01M570.3 316h.01M796.6 330.8h.01M540.7 345.9h.01M610 194.9h.01M690.4 395.5h.01M770.2 257.7h.01M465 326h.01M465.2 275.9h.01M273.5 372.6h.01M378.6 330.1h.01M521 179.2h.01M447.6 268h.01M709.1 254.4h.01M457.5 467.5h.01M501.5 217.4h.01M571.2 313.5h.01M461.5 331.8h.01M628.3 577.8h.01M349.5 171.4h.01M519.7 282.9h.01M293.2 465.6h.01M120.7 542.2h.01M238.6 469.2h.01M299.1 124.9h.01M517.8 301.7h.01M359.7 376.2h.01M486.4 286.4h.01M241.5 363.4h.01M209.4 491.3h.01M311.6 233h.01M432.2 167.1h.01M503.6 260.2h.01M429.6 388.4h.01M565.2 159.6h.01M490.7 256.8h.01M663.7 359.8h.01M501.6 310.3h.01M420.4 368.3h.01M325.1 104.1h.01M467.1 293.5h.01M405.4 210.3h.01M318.7 313.5h.01M448.1 403.1h.01M267.4 268.2h.01M364.6 394.3h.01M334.5 348.5h.01M260.8 166h.01M578.6 404.9h.01M537.8 275.3h.01M487.3 315.7h.01M312.6 195.9h.01M551.5 219.5h.01M569.7 40.7h.01M101.7 244.9h.01M560.2 367.9h.01M300 375.9h.01M446.7 156.2h.01M539.2 294h.01M446.6 371.5h.01M417.6 151.5h.01M493.1 88.4h.01M518.4 305.6h.01M404.3 363.1h.01M447.5 328.6h.01M450.6 484.4h.01M519.3 411.4h.01M500.1 304.2h.01M290.4 232.7h.01M461.2 286.7h.01M25.1 452.7h.01M675.9 348.4h.01M317.5 411h.01M465.1 332.5h.01M710.5 29.5h.01M588.3 179.2h.01M723.8 442.3h.01M537 378h.01M652.6 195.1h.01M527.1 320.7h.01M627.4 201.5h.01M703.7 491.6h.01M499.5 310h.01M324 412.7h.01M492.5 231.6h.01M509.3 284.4h.01M450.5 241h.01M489.2 378.4h.01M366.2 400h.01M377.6 344.3h.01M541.7 89.5h.01M380.7 87.6h.01M567.1 200.8h.01M473.6 212.5h.01M454.2 167.4h.01M390.8 541.6h.01M523.4 317.4h.01M425.8 456.7h.01M573.9 242.3h.01M608 329.8h.01M231.1 422h.01M469.8 273h.01M513.7 264.7h.01M454.1 327h.01M516.4 258.6h.01M185.9 360.7h.01M453.7 354.1h.01M393.9 286.6h.01M410.3 328.1h.01M273.6 127.1h.01M274.7 344.8h.01M548.3 352.1h.01M583.2 314.3h.01M464 351.4h.01M476.1 347.2h.01M197.7 605.8h.01M509.2 242.8h.01M502.2 274.7h.01M350.7 344.8h.01M526.4 380.9h.01M525.3 210.1h.01M191 233.1h.01M631.1 193.1h.01M565.6 213.6h.01M633.5 323h.01M592 381.3h.01M471.3 257.1h.01M665.1 239.6h.01M553.5 366.7h.01M231.4 81.6h.01M520.5 348.8h.01M675.3 216.2h.01M230 342.3h.01M448.1 328.3h.01M659.7 322.8h.01M601.6 188.3h.01M503.1 570.5h.01M458.7 235.2h.01M533.1 315.2h.01M464.4 405.8h.01M500.1 261.8h.01M698.8 599.8h.01M602.5 282.6h.01M383.2 257.7h.01M491.8 272.5h.01M464.9 305.5h.01M453.3 351.3h.01M462.8 322h.01M498.6 204.1h.01M672.3 312.5h.01M579.6 26.2h.01M470.5 224.2h.01M830.3 557.9h.01M467.3 415.6h.01M498.1 237.7h.01M458.7 236.8h.01M489.4 171.6h.01M436.3 359.3h.01M748.2 163h.01M292.3 132.5h.01M510.8 253.4h.01M453.9 326h.01M197.6 12.9h.01M414.2 334.5h.01M359.4 474.4h.01M298.2 324.3h.01M876.3 459h.01M261.3 175.6h.01M623.2 421h.01M406.9 417.6h.01M408 62.2h.01M333.5 256h.01M508.5 417.5h.01M410.6 129.4h.01M598.8 166.5h.01M752.9 327.3h.01M524 270.9h.01M575.2 287.5h.01M449.8 169.1h.01M509.6 349.6h.01M703.4 611h.01M559.4 286.7h.01M487.2 333.6h.01M375.9 177.2h.01M611.6 333.3h.01M589.9 359.2h.01M379.8 327.3h.01M579.1 227.8h.01M377.8 340.5h.01M480.6 364.2h.01M547.9 287.5h.01M400.4 406.2h.01M453 342.1h.01M355.1 425.2h.01M699.3 288.5h.01M483.9 328.1h.01M706.3 576.3h.01M172.3 269.7h.01M494.6 184.2h.01M585 135.7h.01M434.8 429.2h.01M480.2 429.5h.01M400.4 250.6h.01M407.8 353.8h.01M409.2 163.6h.01M556.5 232.8h.01M555.9 349.6h.01M514.4 463h.01M499 162h.01M530 217.5h.01M511.9 284.8h.01M347.6 160.6h.01M666.2 182.2h.01M492.9 275.5h.01M539 465.8h.01M630.4 271.5h.01M418.9 279.9h.01M533.4 293.3h.01M589.1 256.5h.01M371.5 549.7h.01M527.8 298.8h.01M536.7 364.7h.01M446.6 307.4h.01M589.2 11.5h.01M688 253.4h.01M666.3 27.8h.01M556.6 344h.01M489.6 384.4h.01M585 295.9h.01M798.1 111.6h.01M444.6 500.3h.01M628.6 271.6h.01M299.6 243.3h.01M506 535.9h.01M0.6 391.8h.01M229 87.5h.01M579.4 289.7h.01M509.7 229.3h.01M409.9 282.1h.01M440.5 362.9h.01M672.1 285h.01M761.4 369.8h.01M293.8 433.2h.01M663.5 466.3h.01M536.1 292.4h.01M478.7 237.9h.01M478.1 332.4h.01M541.9 193.8h.01M707.8 334.8h.01M736.2 373h.01M3 313.3h.01M630.6 35.7h.01M85 52.9h.01M518.4 388.1h.01M679.7 297.6h.01M0.8 237.1h.01M194.3 43.9h.01M292.1 480.6h.01M563.2 347.7h.01M670.3 84h.01M137.1 44.8h.01M471.9 340.4h.01M366.3 271.5h.01M587.8 186.4h.01M622.2 267h.01M676.2 25h.01M560.1 302.6h.01M461 333.9h.01M417.6 197.2h.01M256 249.5h.01M458 202.1h.01M515.8 334.4h.01M673.5 338.5h.01M521.5 384.4h.01M899.9 346.6h.01M377.2 342.2h.01M586.7 296.9h.01M300.1 368.3h.01M860.2 32.1h.01M481.2 214.9h.01M774.2 202.5h.01M518.2 376.3h.01M410.7 321.8h.01M534 270.8h.01M498.1 301h.01M401.7 255.3h.01M515.1 245.9h.01M465.6 370.9h.01M523.6 354.5h.01M494.4 234.9h.01M554.6 81.6h.01M539.9 139.4h.01M382.8 385.4h.01M410.2 344.6h.01M667.3 436.6h.01M463.7 380.6h.01M628.9 254.7h.01M498.3 292.6h.01M799.5 213.7h.01M314.4 158.7h.01M819.9 184.7h.01M235 168.2h.01M587.1 357.8h.01M249.8 502.8h.01M472.2 282.8h.01M327.8 262.8h.01M718.9 230.2h.01M641 380h.01M717.2 309.9h.01M348.1 171.4h.01M455.6 359.9h.01M510.8 301.1h.01M546.3 187.6h.01M464.3 296h.01M497.9 273.8h.01M478.8 485.9h.01M566.9 302.2h.01M484.5 396.4h.01M554.8 351.2h.01M591.8 286h.01M815.9 515.4h.01M545.2 501h.01M325.8 263.9h.01M613.7 406.7h.01M540 333.5h.01M505.6 155.2h.01M444.9 256.7h.01M664.8 384.6h.01M605.3 317.5h.01M669.7 360.7h.01M444.7 313.7h.01M471.4 207.9h.01M599.6 609.5h.01M396.2 373.9h.01M432.6 530.4h.01M576.4 393.8h.01M440.3 154.5h.01M787 209h.01M701.4 260.3h.01M506.6 281.6h.01M483.2 295.5h.01M774.3 459.2h.01M557.5 440.6h.01M542.6 394.2h.01M375.7 165.4h.01M183.5 426.6h.01M490.4 361.3h.01M563.7 501.7h.01M407.9 400h.01M494.1 448h.01M543.8 324.3h.01M555.3 255.2h.01M424 428.3h.01M482.4 352.3h.01M324.2 435.5h.01M562 252.4h.01M592.6 145.9h.01M79.1 114.4h.01M338.7 314.9h.01M708.6 375.1h.01M480.6 311h.01M45.9 28.7h.01M479.9 307.9h.01M365.8 268.2h.01M618.5 249.3h.01M462.9 364.4h.01M599.3 143h.01M475.9 179.8h.01M519.4 259.4h.01M330.1 185.6h.01M32.2 343h.01M614.1 366.7h.01M425.7 244.3h.01M533.5 311.8h.01M368.9 510.6h.01M428.9 123.7h.01M520.3 153.3h.01M587.6 398h.01M355.5 278.8h.01M905 260.5h.01M357.4 100h.01M335.4 384.8h.01M257 318.2h.01M675.6 241h.01M545.8 590.4h.01M550.1 49.9h.01M704.3 552.1h.01M497.6 324.5h.01M469.6 540.2h.01M614 315.2h.01M682.4 435.2h.01M589 566.8h.01M184.2 209.1h.01M542.2 219.9h.01M526.3 386h.01M323.5 626.5h.01M497.8 262.9h.01M688.8 524.7h.01M539.8 317h.01M462.2 267.2h.01M683.8 521.2h.01M664.9 385.4h.01M544.1 287.4h.01M347.3 158.7h.01M190.6 490.6h.01M913.3 245.7h.01M489.3 411.1h.01M483.9 248.4h.01M481.8 395.8h.01M562.5 165.5h.01M432.7 330h.01M342.3 8.8h.01M583.5 282.8h.01M150.8 223.3h.01M465.6 291.7h.01M608.9 209.4h.01M639.9 360.2h.01M561.9 315.5h.01M495.2 329h.01M479.1 276.4h.01M506.9 241.5h.01M256.4 626.8h.01M367.6 160.2h.01M653.2 625.7h.01M464.7 247.7h.01M576.9 371.9h.01M404.2 177h.01M892.9 547h.01M460.7 334h.01M541.4 359.5h.01M517.3 433h.01M504.1 324.4h.01M567.9 331h.01M452.1 410.4h.01M425.1 229.9h.01M520.3 365.1h.01M919.6 181h.01M669.7 165.6h.01M475.6 307.6h.01M523.1 464.6h.01M534.5 270.3h.01M451.9 341h.01M569.6 192.5h.01M480.8 293.9h.01M9.5 240.3h.01M442.6 180.4h.01M363.9 103.9h.01M663 122.7h.01M467.5 360.9h.01M83.6 489.9h.01M589.2 208.7h.01M660 407.5h.01M499 556.4h.01M430.9 266h.01M525.1 259.5h.01M489 254.8h.01M556.1 356.5h.01M432.5 217.9h.01M309.8 237.4h.01M491.8 216.4h.01M617.9 215.3h.01M506.4 393.5h.01M503.4 148h.01M312.1 199.4h.01M433.8 360h.01M350.9 27.5h.01M504.4 470.8h.01M471 388.1h.01M207.6 369.1h.01M387.5 410.5h.01M593.7 339h.01M729.1 132.8h.01M485.3 361h.01M453.8 77.5h.01M473 306h.01M498.5 353.8h.01M547.1 330.5h.01M774.6 291.3h.01M566.6 299.9h.01M785 310.3h.01M475.7 243.3h.01M280.7 183.9h.01M674 302.7h.01M338.7 280.7h.01M512.6 197.8h.01M637.2 356.3h.01M529.2 296h.01M509.7 352.9h.01M461.5 319.1h.01M844 75.2h.01M320 431.8h.01M707.8 350.8h.01M349.7 459h.01M559.4 329.4h.01M431.2 318.8h.01M493.9 221h.01M948.9 482.8h.01M479 322.4h.01M372.9 207.4h.01M530.2 348.4h.01M587.8 203.4h.01M422.9 306h.01M373.9 545.9h.01M325.2 382.4h.01M458.9 278.4h.01M546.4 244h.01M581 258.1h.01M279.5 565.9h.01M718.9 250.7h.01M51.8 92.3h.01M647.2 258.4h.01M695.9 281.7h.01M857 621.3h.01M450.1 292.8h.01M203.3 553.9h.01M698.8 85.1h.01M336.3 284.8h.01M336.3 159.9h.01M463.7 334.9h.01M500.2 294.1h.01M266.7 616.6h.01M455.3 564h.01M605.6 235.1h.01M435.5 370.9h.01M540.9 229.4h.01M310 94h.01M490.4 291.2h.01M385.6 312.1h.01M653.8 427.9h.01M436 172.8h.01M256 381.1h.01M794.3 268.2h.01M308 356.1h.01M323.6 280.1h.01M324.4 227h.01M530.5 272.5h.01M537.6 401.1h.01M567.3 412.1h.01M566.5 200.9h.01M529.9 362.9h.01M406.8 407h.01M452 312.8h.01M519.9 312h.01M438.2 348.5h.01M506.1 291.2h.01M513 299h.01M523.7 264.6h.01M405.4 289.5h.01M585 162.7h.01M551 460.7h.01M646.6 593h.01M769.1 543.3h.01M543 428.7h.01M462.4 484.4h.01M523 299h.01M470.8 300.2h.01M442 323.5h.01M565.3 312.2h.01M260 626.3h.01M272 237.3h.01M565.1 310.9h.01M432.7 401.3h.01M163.6 536.4h.01M507 267.3h.01M831.8 108.7h.01M495.3 121.6h.01M568.2 414.8h.01M660.3 122.5h.01M118.8 283.7h.01M570.5 292.7h.01M389.2 390.6h.01M835.4 515.5h.01M622 329.6h.01M519.8 256.1h.01M38.6 313.7h.01M113.8 21.4h.01M823.8 456h.01M245.1 211.1h.01M428.8 263h.01M293.3 198.6h.01M275.2 391.3h.01M608.8 373.5h.01M361.6 286.1h.01M527 284.5h.01M523.5 266h.01M529.4 154.6h.01M135.5 247.4h.01M507.1 324.5h.01M500 296.4h.01M514.1 269.3h.01M437.6 385.9h.01M438.5 248.1h.01M595.3 258.8h.01M493.3 426.1h.01M737 284.7h.01M499 440.8h.01M223.9 375.1h.01M707.6 473.2h.01M398.1 336.4h.01M467.4 212.7h.01M319.6 256.9h.01M372.3 260.4h.01M601.5 291.4h.01M523.7 294.1h.01M614.5 307.9h.01M539.4 273h.01M705.2 565.1h.01M35 495.1h.01M624.9 298h.01M493.7 231.7h.01M517.7 413.9h.01M491.5 228.3h.01M260.5 429.3h.01M309.4 198.8h.01M413.7 319.8h.01M585.4 372.7h.01M408.6 364.3h.01M409.8 401h.01M518.9 234.3h.01M626.9 141.5h.01M423.2 216.5h.01M358.2 454h.01M481 418.6h.01M527.2 380.8h.01M646.4 407.2h.01M729.1 332.5h.01M490.4 309.7h.01M432.8 190.5h.01M475.3 263.7h.01M584.1 228.3h.01M945.1 5.2h.01M447.5 348.1h.01M417.8 450.5h.01M555.3 317.1h.01M346.5 237.8h.01M64.2 155h.01M547.9 399.1h.01M504.3 268.9h.01M390.8 261.2h.01M97.3 520.4h.01M321.6 474.9h.01M359.8 514.8h.01M546 280.3h.01M535.1 236.3h.01M495.8 358.1h.01M506.8 287.9h.01M436.4 412.4h.01M484.7 287h.01M557.8 354.3h.01M727.7 185.4h.01M341.8 357.1h.01M588.7 395.3h.01M485.3 275.8h.01M869.2 541.4h.01M419.7 442.7h.01M523.1 278.6h.01M505.1 476.8h.01M345.4 183.3h.01M494.3 610.8h.01M412.1 304h.01M605.8 382.9h.01M536.9 443h.01M581.3 267.7h.01M600.5 230.9h.01M301.2 187.5h.01M718 168.7h.01M13.3 267.5h.01M385.1 457.7h.01M606.7 468.7h.01M530.3 192.9h.01M508.4 299.3h.01M519.9 262.5h.01M618.1 304.7h.01M465.5 331h.01M518.2 278.7h.01M524.3 215.1h.01M409.8 263.3h.01M512.4 374.6h.01M382.7 338.1h.01M167.8 322.1h.01M489.6 315.9h.01M309.9 158.3h.01M530.4 359.3h.01M736.5 348.6h.01M864.7 339.7h.01M267.5 18.5h.01M478.4 329.3h.01M446.3 319.4h.01M760.7 333.1h.01M445.8 513.7h.01M449.1 318.7h.01M675.8 148.1h.01M451.2 247.8h.01M749.4 223.9h.01M456.4 276.8h.01M781.6 233.7h.01M774.4 221.7h.01M554.1 406.8h.01M353.3 148.3h.01M663.1 371.4h.01M472.6 355.4h.01M525.5 265.5h.01M450.4 490h.01M567.8 281.9h.01M493.6 287.7h.01M691.3 353.3h.01M308.2 372.6h.01M542.7 430.7h.01M416.2 468.4h.01M344.8 459.9h.01M460.3 636.9h.01M449 328.3h.01M387.8 430.2h.01M817.4 424.6h.01M587.6 399.1h.01M402.3 307.7h.01M493.7 150.8h.01M535.7 320.8h.01M432.9 285h.01M674.1 541.7h.01M363.7 468.7h.01M527.8 375.3h.01M299.6 478.1h.01M582.2 246.2h.01M586.4 239.7h.01M403.9 207.3h.01M518.4 341.1h.01M159.7 524h.01M677 162.1h.01M610.4 146.8h.01M532 147.6h.01M481.6 261.5h.01M666.1 268.8h.01M526 477.6h.01M438.5 571.9h.01M459.1 318.8h.01M424.4 122.1h.01M385.8 442.2h.01M594.1 288.8h.01M495.2 435.7h.01M598.5 286.4h.01M519.7 254.8h.01M381.5 242.6h.01M523.1 345.9h.01M497.8 287.7h.01M601.1 420.6h.01M234.8 359.6h.01M234.8 578.4h.01M462.4 69.6h.01M488.1 488.9h.01M516.4 364.3h.01M512.2 341.5h.01M475.9 330h.01M537.7 307.9h.01M587.2 223.8h.01M435.6 325.4h.01M364.6 56h.01M763.5 98.3h.01M499.6 264.9h.01M459 375.1h.01M87.2 455.8h.01M734.2 325.7h.01M519.5 369.3h.01M930.4 269.9h.01M256 316.1h.01M339.3 105.6h.01M772.5 211.8h.01M332.2 583.7h.01M489.8 374.9h.01M518.5 417.3h.01M588.3 455.6h.01M412.8 387.8h.01M549.8 241.1h.01M557.4 286h.01M386.8 273.4h.01M357.6 426.1h.01M669.6 358.3h.01M511.4 386.5h.01M522.6 102.7h.01M313.9 349.8h.01M546.3 335.4h.01M509.3 185.2h.01M639.1 203.8h.01M463.2 349.2h.01M670.8 361h.01M450.8 282.3h.01M612.7 206.8h.01M371.9 451h.01M662.1 384.8h.01M501.6 299.6h.01M382.5 338h.01M727.1 139.1h.01M389.9 262.6h.01M641.7 379.9h.01M356.7 453.5h.01M470.5 244.2h.01M485.9 291.8h.01M548.7 204.6h.01M441.2 264.5h.01M273.7 288.5h.01M350.2 191.1h.01M54.2 429h.01M520.4 328.8h.01M155.9 422.1h.01M414.5 182.9h.01M422.1 264.4h.01M193 174.1h.01M647.8 330.9h.01M372.2 458.1h.01M385.9 353.3h.01M604 630.7h.01M346.5 313.7h.01M525.2 587h.01M498.2 350.1h.01M582.6 175.4h.01M380.5 137.3h.01M726.3 395.9h.01M402.4 183.5h.01M109.4 223.7h.01M614.3 140.6h.01M599.7 415.4h.01M732.1 320.6h.01M474.5 34.4h.01M496 283h.01M363.7 498.5h.01M428.2 308.1h.01M260 444h.01M325.7 266.9h.01M632.3 209.6h.01M446 341.8h.01M517.7 396.2h.01M524.1 232.8h.01M586.3 356.4h.01M494.6 305.8h.01M471.3 268.2h.01M549 321.1h.01M407.7 622.1h.01M213.5 390.2h.01M571.2 249.1h.01M562.9 366.4h.01M254.5 79.6h.01M427.8 288.7h.01M864.4 559.8h.01M598.1 286.6h.01M618.9 635.3h.01M319.2 333.8h.01M566.4 315.7h.01M375 368.1h.01M324.2 430.4h.01M545.4 167h.01M485.1 336.1h.01M802.6 395.8h.01M499.7 369.4h.01M417.7 333.8h.01M516.7 441.3h.01M409.9 506.5h.01M656.5 272.8h.01M471.5 353.6h.01M529.5 362.7h.01M751.9 444.1h.01M433.2 369.2h.01M532.5 271.9h.01M306.8 317.6h.01M463.4 343.5h.01M467.7 423.3h.01M503.4 253.7h.01M689.1 123.9h.01M546.3 187.9h.01M537.6 292.9h.01M638.5 185.9h.01M594.4 189.3h.01M557.5 444.9h.01M470.1 266.3h.01M442.3 262.9h.01M567.9 237h.01M251.7 196.9h.01M845.6 174.1h.01M316.8 265.5h.01M471.8 275.6h.01M465.2 188.7h.01M557.3 178.1h.01M555.9 355.1h.01M655.3 415.5h.01M204 183.7h.01M617.8 370.7h.01M379 202.3h.01M431.6 368.3h.01M195 253.9h.01M584.5 257.6h.01M516.1 289h.01M469.1 184.8h.01M173.8 293.4h.01M465.9 284.9h.01M676.4 268.5h.01M198.8 162.7h.01M487.3 110.5h.01M747.6 338h.01M630.8 286.6h.01M482.6 256.3h.01M504.5 441.4h.01M344.2 287.1h.01M441.8 169.2h.01M553.2 153.6h.01M628.3 136h.01M98.3 123.5h.01M368.7 514.3h.01M297.5 381.1h.01M791.2 238.1h.01M513.5 360.1h.01M512.4 322.9h.01M507.5 349.1h.01M327.6 412.1h.01M399.7 270.6h.01M302.1 372.2h.01M569.8 295.1h.01M565.6 368.8h.01M497.8 320.8h.01M495.8 615.4h.01M581.8 223.4h.01M754.4 122.4h.01M644 199.5h.01M543.4 281.3h.01M508.8 226.1h.01M583.8 371h.01M381.3 225h.01M78.5 264h.01M396.9 468.9h.01M334.8 434h.01M587.2 306.2h.01M722.7 193.4h.01M423.7 309.1h.01M477.9 236.5h.01M659.9 151.4h.01M784.5 226.8h.01M564.2 24.6h.01M610.2 508.9h.01M615.9 457.9h.01M475.2 208.2h.01M558.6 341.5h.01M386.3 408.4h.01M919.8 575h.01M352.9 410.1h.01M460.9 498.8h.01M599.7 158.6h.01M596.4 21.9h.01M325.5 320.3h.01M393.1 240.6h.01M461.3 167.6h.01M265.6 213.7h.01M340.2 344.1h.01M661.8 145.3h.01M205.7 287.7h.01M585.5 452.1h.01M571.1 419.3h.01M262 116.8h.01M696.4 290.5h.01M446.2 292.1h.01M575.8 132.6h.01M531.5 281.9h.01M497.4 262.9h.01M580.4 541.8h.01M319.8 267.1h.01M472.8 485.2h.01M451.8 264.5h.01M604 352.9h.01M89.8 277.4h.01M289.2 267.2h.01M403.8 218.6h.01M678.9 327.9h.01M268.2 239.1h.01M472 369h.01M447.8 151.5h.01M609.4 295.2h.01M568.3 45.4h.01M584.7 361h.01M210.8 425.1h.01M606.6 432.3h.01M500 245h.01M441 298.9h.01M304.9 400.6h.01M288.4 619.1h.01M485.3 359.5h.01M491.1 356.5h.01M562.2 330.9h.01M319.8 81.7h.01M624.3 295.6h.01M781.9 325.8h.01M349.2 397.4h.01M509.8 254.1h.01M485.4 427.6h.01M611.3 430.8h.01M415.2 81.9h.01M513.6 372.9h.01M417.3 209.4h.01M477.1 307h.01M484.7 300h.01M498.1 391.5h.01M614.8 30.9h.01M106.9 241h.01M296.8 475.3h.01M515.5 391h.01M448.2 320.8h.01M431.6 255.5h.01M345.4 241.8h.01M504.5 218.5h.01M362.9 320.3h.01M359.6 363.2h.01M541.5 300.9h.01M439.6 342.2h.01M871.4 586.7h.01M312.5 300.4h.01M256 341.6h.01M326 449.3h.01M562.4 256.1h.01M635.7 99h.01M401.3 450.6h.01M402.5 336.2h.01M360.7 318.4h.01M441.1 21.8h.01M766.3 261.7h.01M348.8 390.5h.01M467 455.1h.01M873.2 133.3h.01M403.4 315.9h.01M559.5 419.2h.01M717.7 322.2h.01M563.1 276.3h.01M593.6 349.6h.01M555.1 250h.01M567.5 376.1h.01M557.8 255.5h.01M922.9 284.1h.01M180.3 399.3h.01M525.2 341.6h.01M599.5 71.8h.01M216.4 164.9h.01M265 104.9h.01M864.5 348h.01M562.7 625.4h.01M416.2 340.4h.01M313.7 470.1h.01M202.2 134.3h.01M284.1 453.4h.01M505.5 174.3h.01M343.4 419.9h.01M120.7 92.9h.01M662.7 247.8h.01M630.7 568.1h.01M396.7 364.3h.01M667 436.3h.01M530.5 399.3h.01M300.3 112.7h.01M50.4 272h.01M366.3 178.9h.01M650.3 395.2h.01M438.2 173.8h.01M342.7 407.1h.01M631.9 415h.01M564.8 411.1h.01M469 504.4h.01M542.7 371.4h.01M481.9 291.1h.01M419.5 338.4h.01M761.8 294h.01M481 293.3h.01M319 156.9h.01M754.3 453.2h.01M833.4 429.7h.01M325.6 278.5h.01M393.7 225.2h.01M347.4 388.2h.01M655.8 148.9h.01M406.8 408.9h.01M492.7 273.4h.01M571 183.3h.01M550.2 329.6h.01M806.5 460.5h.01M680.9 388.1h.01M585 46.2h.01M176.8 540.2h.01M493.7 372h.01M660.6 108.6h.01M438.7 239.9h.01M494.1 378.9h.01M495 183.2h.01M685.1 246.2h.01M238 226.8h.01M541.6 280.4h.01M513.1 555.9h.01M495.6 193h.01M466.1 359.6h.01M867.6 103.9h.01M436.5 193.5h.01M556.9 259.7h.01M444.8 213.9h.01M610.2 53.6h.01M511.2 297.6h.01M847.7 10.7h.01M525.3 268.1h.01M378.4 344.6h.01M447 280.4h.01M351.6 513h.01M660.3 594.4h.01M633.2 398.9h.01M404.9 407.5h.01M379.7 144.7h.01M398.1 323.7h.01M730.5 31.3h.01M665.7 147.4h.01M487.3 252.5h.01M514.2 354.1h.01M441.1 318.7h.01M466.7 525.8h.01M534.9 341.7h.01M567.2 329.9h.01M590.9 584.1h.01M391 368.7h.01M335.4 185.3h.01M534 373.1h.01M181 517.8h.01M510.6 362h.01M662.5 375.5h.01M405.7 137.1h.01M455.5 344.4h.01M467 304.8h.01M496.7 431.8h.01M543.2 339.5h.01M484.9 282.6h.01M337.9 300.9h.01M419.1 193.6h.01M188.2 224.6h.01M82.7 456.7h.01M536 339.4h.01M503.6 290.8h.01M423.5 354.5h.01M549.1 411.9h.01M907.9 365.7h.01M506.4 266.3h.01M517.7 392.6h.01M132.3 251.1h.01M492.8 247.8h.01M421.8 312.7h.01M144.8 228.5h.01M532.1 229.7h.01M605.8 311.5h.01M300.3 298.5h.01M459.7 277.1h.01M474.4 262h.01M671.2 126.6h.01M343.3 51.8h.01M595.8 447.6h.01M485 292.9h.01M589.3 350.2h.01M385.6 228.3h.01M518.9 357.9h.01M585.6 391.2h.01M524.6 287.3h.01M685.1 223.6h.01M23.3 278.2h.01M651 203.4h.01M384.5 259.2h.01M404.9 372.1h.01M437.4 267.5h.01M498.4 348.4h.01M515.6 391.4h.01M476.4 541.6h.01M542.3 360.2h.01M75.7 505.1h.01M491.2 341h.01M640.5 254.2h.01M462.9 247.1h.01M700.7 249.7h.01M520.1 449.1h.01M366.5 234.1h.01M430.1 303.8h.01M604.7 270.4h.01M622.1 8.2h.01M736.8 357.5h.01M557.4 335.3h.01M473.8 278.3h.01M511.2 362.7h.01M460.1 332.6h.01M639.9 125.1h.01M251.1 367.8h.01M614.7 252h.01M506.7 311.4h.01M268.5 253.8h.01M324.8 143.1h.01M516.3 228.9h.01M480.9 487.5h.01M434.3 245.9h.01M860.7 46.4h.01M462.3 544.2h.01M502.4 309.9h.01M495.8 300.3h.01M565.8 334.2h.01M493.5 497.8h.01M225.1 149.7h.01M525.4 251.4h.01M399.8 258.2h.01M451.5 258.8h.01M554.4 306.1h.01M651.9 245.9h.01M613.5 517.5h.01M509.3 320.8h.01M936.8 175.5h.01M653.6 154.3h.01M321.8 181.8h.01M304.1 386.1h.01M320 271.6h.01M589.9 207.2h.01M481.9 316h.01M280.1 585.7h.01M427 398.6h.01M477.7 273.6h.01M467.9 380h.01M463.3 285.8h.01M396 227.5h.01M861 159h.01M65.9 230.2h.01M676.4 398.1h.01M624.2 241.8h.01M566.8 470.3h.01M590.9 420.6h.01M429.7 384.3h.01M235.9 34h.01M514.8 376.9h.01M513.8 182.3h.01M510.9 157.5h.01M295.1 526.5h.01M517.7 306.1h.01M472.1 258.4h.01M379.1 435.8h.01M374.7 180.9h.01M534.3 267.8h.01M434.6 73.5h.01M383.6 266.8h.01M517.3 329.6h.01M590 381.9h.01M884.4 228.2h.01M507.1 272.5h.01M155.8 282.2h.01M402 265.6h.01M461.2 274h.01M433.3 328h.01M468.2 263h.01M416.5 419.3h.01M440.6 347.5h.01M740.4 110.1h.01M384.2 105h.01M515.1 291.2h.01M578.8 636.8h.01M371.7 406.2h.01M470.2 193.6h.01M527.7 524.2h.01M350.3 273.8h.01M477.6 230.5h.01M473.5 140.6h.01M436.3 274.5h.01M401.9 185.1h.01M509.1 200.2h.01M453.3 315.9h.01M551.6 298.7h.01M514.6 409.6h.01M417.4 413.3h.01M355.9 241.7h.01M497.4 295.6h.01M592.9 300h.01M577.3 254.1h.01M499 284.3h.01M688.1 274.2h.01M631.2 349.9h.01M505.5 178.1h.01M452.1 359.2h.01M586.6 419.6h.01M621.1 255.6h.01M570.3 225.6h.01M546.8 426h.01M678.2 482.8h.01M470.6 271.3h.01M447.1 333.5h.01M487 290.1h.01M426.9 289.6h.01M711.9 507.7h.01M855.8 530.3h.01M459.7 335.5h.01M865 561.6h.01M681.9 257.7h.01M412.4 341.5h.01M436.4 273.4h.01M261.5 273h.01M549.6 368h.01M142.6 601.5h.01M662.9 136.1h.01M273.6 254.9h.01M481.2 346.1h.01M414.3 108.5h.01M620.7 345h.01M486.6 249.1h.01M514.8 402h.01M508.4 408.2h.01M476.3 263h.01M603.4 252.1h.01M442.5 109.4h.01M484.6 300.4h.01M501.2 429.3h.01M533.8 353.2h.01M366 396.3h.01M552.7 259.8h.01M484.4 347.3h.01M545.9 226.7h.01M347.9 303.5h.01M524.6 211.4h.01M722.1 497.3h.01M501.2 405.6h.01M266.5 282.3h.01M513.1 306.4h.01M641 532.6h.01M435 345.5h.01M565 288.1h.01M488 210.8h.01M403.4 222.1h.01M503.6 423.4h.01M456 235.7h.01M145.5 203.8h.01M439.6 406.3h.01M484.2 186.1h.01M649.1 427.9h.01M807.2 42.1h.01M816.2 285.4h.01M440 234.9h.01M481.4 327.8h.01M521.1 317h.01M578.3 173.9h.01M703.4 480.3h.01M371.4 309.7h.01M410 414.7h.01M298.9 362h.01M704.4 177.3h.01M486.4 630.2h.01M463.1 319.4h.01M361.8 335.7h.01M652.8 114.9h.01M624.7 284.8h.01M571.2 294.1h.01M407.9 495.7h.01M525.5 63.4h.01M474.2 159h.01M349.2 330.1h.01M603.4 282.5h.01M376.4 116.8h.01M300 327.9h.01M458.4 416.6h.01M389 294.5h.01M573.5 434.9h.01M613.6 278.5h.01M539.7 33.9h.01M453.3 355.9h.01M508.9 251.6h.01M519.9 586.7h.01M491.3 306.8h.01M502.5 354.8h.01M501.4 248.7h.01M264.6 204.1h.01M516.2 310.4h.01M502.4 170.1h.01M622 189.5h.01M526.2 592h.01M367.8 431.1h.01M578.7 217.1h.01M351 256.2h.01M514.1 86.5h.01M593.9 348.1h.01M580.1 529.4h.01M454.3 407h.01M518.3 301.2h.01M484.1 242h.01M588.6 488.9h.01M435.1 203.6h.01M524.6 514.1h.01M486.9 437.8h.01M376.9 306.6h.01M654.3 242.4h.01M695.6 33.7h.01M351.6 451.6h.01M407 267.6h.01M700.8 410.4h.01M656.5 258.2h.01M470 470h.01M480.6 344h.01M404.3 221h.01M181.5 325.9h.01M603.7 284h.01M516.3 322.9h.01M468.5 246.5h.01M491.5 174.9h.01M863.5 201.9h.01M595 302h.01M718.8 401.1h.01M518 395.8h.01M112.9 536.5h.01M306.4 179.1h.01M905.9 425.6h.01M479.3 257.2h.01M301.8 117.7h.01M620.8 110.5h.01M551.8 369.7h.01M566 254h.01M479.1 421.1h.01M692 433h.01M393.1 464.4h.01M572 485.8h.01M797.9 155.7h.01M498 264.2h.01M440 276.2h.01M595.1 351.6h.01M509 302.3h.01M585.8 257.2h.01M461.5 357.4h.01M592.6 178.6h.01M516.3 355.4h.01M470.9 24.9h.01M620 260.1h.01M358 453.9h.01M649.9 131h.01M619.2 332.6h.01M545.8 469h.01M444.9 441.2h.01M476.9 199.7h.01M483 226.3h.01M887.4 40.5h.01M555.6 344.2h.01M790.2 318.9h.01M683.9 114.4h.01M450.3 178h.01M496.1 280h.01M451.3 277.4h.01M369.8 61.8h.01M405.7 242.8h.01M285.8 186.4h.01M242.1 575.3h.01M400.9 438.3h.01M538.6 260.3h.01M449.9 362.8h.01M505 379.7h.01M491.9 317.8h.01M438.6 181.1h.01M466.1 153.1h.01M520.2 157.9h.01M460.3 327h.01M489.8 264.2h.01M616.4 392h.01M430.2 316.4h.01M647.4 374.1h.01M669.1 406.8h.01M424 278.5h.01M629.3 293.6h.01M682.4 18.5h.01M508.4 245.9h.01M435.2 333.2h.01M416.5 314.9h.01M486.1 61.5h.01M597.3 213.4h.01M468.4 313.8h.01M812.6 203h.01M657.7 463.1h.01M453.7 240h.01M692.7 184.3h.01M435.2 311.5h.01M402.2 382.5h.01M502.1 232.1h.01M540.4 291.7h.01M495.9 254.8h.01M561.9 347.1h.01M585.1 320.4h.01M441.7 308.5h.01M580.5 351.4h.01M579.3 362.8h.01M612.7 201h.01M462.9 332.3h.01M573.1 244.1h.01M523.3 372.2h.01M505.2 232.5h.01M465.5 227.3h.01M498.8 322.1h.01M272.8 236.4h.01M471.4 199.8h.01M352.9 201.7h.01M554.7 123h.01M606.3 203.2h.01M656.9 255.7h.01M319.5 414.7h.01M518.9 350.6h.01M489.8 174.8h.01M628.5 166.7h.01M286.1 592.9h.01M533.2 180.4h.01M335 407.9h.01M517.2 286.4h.01M371.6 574.7h.01M544.4 409.4h.01M508.4 203.2h.01M409.3 166.8h.01M465.4 262.6h.01M266 362.9h.01M365.5 244.2h.01M476.2 162.3h.01M373.9 219.7h.01M519 192.2h.01M388.8 422.4h.01M503.9 214.6h.01M449.7 295.9h.01M732.4 422.8h.01M612.1 514.5h.01M436.9 305.8h.01M298.4 464.6h.01M442.2 346.9h.01M481.3 398.6h.01M556.4 31.7h.01M723.1 228.9h.01M375.6 196.2h.01M728.2 354h.01M471.4 273.5h.01M240.2 206.6h.01M565.6 225.2h.01M558.7 194.4h.01M443 341.5h.01M567 232.1h.01M427.4 276.6h.01M569.6 320.3h.01M434 299.6h.01M683.7 245.3h.01M550.5 237.2h.01M418.9 630h.01M333.3 256.3h.01M297.2 288.5h.01M711.5 288.8h.01M446.6 195.6h.01M611.1 304.2h.01M798 213h.01M430.5 375.9h.01M479 270.3h.01M507.2 252.4h.01M508.4 485h.01M146.5 178.8h.01M629.3 259.9h.01M302.3 414.3h.01M498.5 536.3h.01M582.9 288.7h.01M710.2 288h.01M428.7 328.7h.01M404.8 408h.01M476.4 240.9h.01M392.3 307.1h.01M683.9 82.5h.01M516.9 317.9h.01M547.7 499.2h.01M328.1 443.4h.01M448 518h.01M600.3 232.6h.01M418.4 272.9h.01M433 518.4h.01M458.1 356.7h.01M564.9 298.8h.01M19.3 28.8h.01M536.5 398.9h.01M415.6 385.9h.01M471.9 498.6h.01M803.9 417.6h.01M377.3 155.8h.01M370 235.2h.01M438.2 180.6h.01M279.6 251.2h.01M628.1 234.8h.01M637 512h.01M613.1 143.3h.01M613.5 341.9h.01M409.5 374.2h.01M920.3 444.8h.01M843.7 12h.01M500.8 292.5h.01M741.1 583.8h.01M280.9 213h.01M304.9 201.4h.01M443.8 578h.01M571.1 593.6h.01M509.6 296.6h.01M378.4 347.1h.01M556.5 243.1h.01M533.6 329.8h.01M312.9 415.5h.01M494.4 296.5h.01M536.8 298.9h.01M385.3 222.9h.01M423.8 272.9h.01M471.4 364.8h.01M749.7 593.1h.01M497 367.3h.01M568.8 286.6h.01M676 171.8h.01M485.9 212.1h.01M569.2 310.5h.01M428.1 317.7h.01M791.1 298.4h.01M258.8 479.2h.01M796.1 366.3h.01M466.8 291.1h.01M468.3 348.6h.01M736.8 110.9h.01M405.5 460.3h.01M571.8 310.8h.01M484.9 328.4h.01M475.4 275.7h.01M519.4 280.3h.01M574.7 122.2h.01M624 239h.01M440.1 281.9h.01M565.8 462.2h.01M437.8 281h.01M521.7 377.2h.01M507 301.2h.01M699.6 413h.01M530 563.6h.01M489.3 372.5h.01M445.8 174.3h.01M433.4 348.5h.01M144.3 623.1h.01M176.7 567.8h.01M471.8 348.3h.01M539.4 190.8h.01M743.9 382.9h.01M564.8 333.9h.01M82.8 470.8h.01M343.7 480.3h.01M638 378.9h.01M502.6 298.5h.01M537.6 302.4h.01M678.8 410.7h.01M511 164.5h.01M446.3 215.2h.01M545 247.3h.01M449.5 362.3h.01M478.7 257.6h.01M445.7 208.8h.01M345.5 194h.01M440.3 348.9h.01M529.9 352.4h.01M448.7 257.1h.01M388.1 340h.01M870.4 320.9h.01M168.7 293.4h.01M408.4 171.7h.01M380.8 233h.01M362.3 181.3h.01M596.2 341.8h.01M642.3 118.3h.01M708.3 192.6h.01M439.3 260.3h.01M638.3 201h.01M499.3 315.5h.01M533.6 303.7h.01M883.8 222.5h.01M422.3 355.1h.01M634.1 244.5h.01M529.8 316h.01M473 353h.01M174.8 530.3h.01M470 240.1h.01M218.4 393.3h.01M706.6 350.7h.01M458.5 325h.01M634.7 432.4h.01M456.8 256.8h.01M418.7 224.6h.01M588.4 310.6h.01M228 180.9h.01M48.1 605.7h.01M407.6 271.5h.01M487.6 338.6h.01M520.9 348.3h.01M206.2 25.3h.01M665.4 513.4h.01M35.5 294.1h.01M293.2 356.6h.01M658.3 292.2h.01M517.1 206.5h.01M402 233.8h.01M559.4 285.6h.01M739.7 594.1h.01M482.5 309.3h.01M316.8 131.8h.01M689.2 285.5h.01M376.9 521.8h.01M487.3 371.2h.01M429.9 377.3h.01M442.3 450.5h.01M623.5 104h.01M415.1 219.2h.01M492.7 283.6h.01M747.4 24.5h.01M543.3 203.7h.01M412.2 69.3h.01M567.3 250.7h.01M539.6 276.8h.01M486.9 201.2h.01M712.2 443.4h.01M192.1 454.4h.01M612 300.7h.01M436.5 449.2h.01M427.6 271h.01M502.9 302.5h.01M506.3 330.6h.01M619.4 443.6h.01M152.8 413.2h.01M458.6 270.8h.01M454.5 310.5h.01M576.7 229.2h.01M368.2 338.8h.01M604.5 102.6h.01M481.2 228.6h.01M478.1 350.8h.01M503 332.3h.01M519.9 302.3h.01M432.7 315.7h.01M346.5 268.1h.01M445.9 258.4h.01M269.3 540.5h.01M297.2 386.2h.01M554.5 333.2h.01M454 155.4h.01M447.5 316.9h.01M457.9 279.1h.01M680.7 113.3h.01M494.4 207.8h.01M181.3 492.2h.01M428.6 235.7h.01M357.7 380.2h.01M819.2 298.2h.01M611.8 581.9h.01M361.3 257h.01M169.9 232h.01M381.3 397.7h.01M561.4 354.5h.01M481.2 441.9h.01M501.4 371.5h.01M618.1 407.9h.01M424.8 396.9h.01M496.9 33.9h.01M608.6 360.2h.01M567.7 354.7h.01M343.4 314.4h.01M236.5 193.7h.01M472.4 319.4h.01M413.5 41.2h.01M245.8 418.5h.01M659.2 195.1h.01M381.2 213.5h.01M323.5 388.2h.01M348.2 194.4h.01M711.5 358h.01M437.7 387.2h.01M492.8 355.4h.01M409.7 316.1h.01M502 352.4h.01M404.3 486.4h.01M516.7 253.1h.01M456.2 211.3h.01M468.9 186.6h.01M470.2 443.7h.01M406.9 289.2h.01M274.1 265.6h.01M190.5 326.1h.01M575.2 433.8h.01M463.9 287h.01M556.1 318.5h.01M867.5 350.3h.01M563.6 392.7h.01M459.6 126.5h.01M222.8 285.1h.01M449.9 578.5h.01M838.2 384.3h.01M467.1 144.9h.01M619.5 242.6h.01M377 368.8h.01M443.7 313.1h.01M485.4 285.3h.01M483.7 633h.01M253.7 262.3h.01M473.2 220.8h.01M905.5 259.8h.01M446.6 200.2h.01M454.5 245.6h.01M536.4 282.1h.01M388.1 317.3h.01M523.1 206.9h.01M449.4 256.5h.01M426.7 275.6h.01M619.3 397.8h.01M425.8 503.9h.01M454.7 275.1h.01M491.2 274.8h.01M494.8 478.9h.01M131 229.9h.01M491.5 276h.01M869.6 507h.01M571.4 608.9h.01M544 339.7h.01M561.9 351.9h.01M664.6 341.4h.01M543.1 399.4h.01M504.7 317.3h.01M475 244.5h.01M847.2 203h.01M365.5 298.1h.01M405.7 363.1h.01M769.7 447.5h.01M544.9 558h.01M541.8 454.1h.01M546.5 311.4h.01M481.7 285h.01M277.6 157.5h.01M242.3 127.6h.01M71.4 460.8h.01M728.2 330h.01M326.3 464.5h.01M831 609.5h.01M474.4 444.2h.01M734.2 340.2h.01M418.6 374.7h.01M387.4 272.4h.01M406.9 342h.01M462.5 282h.01M168.6 244.7h.01M601 407.6h.01M584.7 377.9h.01M533.7 583h.01M508.4 288.3h.01M420.2 231.6h.01M335.4 329.9h.01M593.5 70.9h.01M249.9 166.6h.01M490 334.5h.01M353.2 102.8h.01M413.9 387.1h.01M151.7 339.8h.01M499.9 290.5h.01M531.8 354h.01M494.6 218.1h.01M525.9 373.7h.01M115.3 73h.01M491.9 295.8h.01M335.7 278.7h.01M532.9 425.8h.01M721.8 133.6h.01M503.1 145.3h.01M529.9 472.7h.01M527.4 162.1h.01M638.1 226.9h.01M633.5 295.4h.01M390.9 153.4h.01M226.9 22.7h.01M494.8 346.7h.01M434.2 315.2h.01M529.4 110.1h.01M377.7 368.9h.01M481.4 411h.01M497.2 330.9h.01M545.9 427.4h.01M523.4 477.6h.01M494.3 341h.01M343.2 288.2h.01M549 170.1h.01M163.1 392.7h.01M830 235.3h.01M371.6 13.6h.01M614.9 333.4h.01M530.1 359.1h.01M445.8 237.9h.01M659.5 386.4h.01M736.8 480.4h.01M330.9 79.4h.01M526.3 235.5h.01M462.7 340.1h.01M564.6 289.1h.01M108.7 368.2h.01M419.6 132.8h.01M697.2 170.7h.01M446.6 272.9h.01M614.3 443.8h.01M627.4 410.1h.01M510.5 317.7h.01M389.2 283.2h.01M581.4 430.1h.01M336.1 369.6h.01M493.2 242.5h.01M297.2 426.6h.01M836.4 532.8h.01M532 115.8h.01M622.8 415.2h.01M565.6 315.8h.01M524 325.5h.01M425.5 334.1h.01M594.9 249.9h.01M536.8 498.7h.01M499.6 294.9h.01M513.5 231h.01M539.5 454.2h.01M471.9 187.3h.01M511.6 337.4h.01M490.2 439.3h.01M467.7 227h.01M204 173.6h.01M425.2 479.8h.01M539.2 296.3h.01M491.1 255.1h.01M511 373h.01M408.3 77.7h.01M438.1 416.8h.01M476.5 266.1h.01M299.2 41.2h.01M652.5 407.6h.01M542.4 434.5h.01M483.7 215.8h.01M439.7 313.3h.01M742.7 110.1h.01M423.5 233.4h.01M530.7 323.4h.01M526.9 257.7h.01M560.3 599.8h.01M241.2 494.5h.01M369.5 248.5h.01M376 223.6h.01M280.5 447.5h.01M270.4 353.8h.01M326 180.9h.01M728.3 341.4h.01M702.9 141.2h.01M439.3 303.3h.01M632.8 223.3h.01M607.9 288.8h.01M358.1 467.1h.01M491 459.7h.01M215.1 389.5h.01M418.8 102.4h.01M600.3 386.9h.01M127 531.5h.01M74.1 388h.01M576 252.9h.01M511.8 206.2h.01M520.1 259h.01M458.6 193.8h.01M507.5 344.3h.01M398.9 240.8h.01M414.1 295.2h.01M174.1 264.8h.01M555.9 324.3h.01M518.1 293h.01M478.1 320.7h.01M592.7 24.1h.01M387.6 282.9h.01M231.9 322.3h.01M269.3 151h.01M211.4 24.5h.01M488 146.9h.01M483.6 582.4h.01M710.8 299.7h.01M638.4 227.5h.01M541.8 301.4h.01M23.4 312.6h.01M704.9 163.2h.01M290.1 573.4h.01M215.1 130.8h.01M492 292.1h.01M491.9 290h.01M488.1 343.2h.01M481.7 333h.01M654.4 181.8h.01M473 262.9h.01M776.5 327.3h.01M539.6 356.8h.01M728.1 101.7h.01M420 309h.01M623.4 436.1h.01M542.9 271h.01M525.2 224.8h.01M376.6 463.6h.01M487.7 295.4h.01M664.4 345.9h.01M564.3 333.1h.01M515.3 209.4h.01M451.6 298.9h.01M564.1 334.4h.01M403.2 226.7h.01M404.3 239.4h.01M701.7 493.9h.01M646.9 584h.01M545.6 332.8h.01M485.3 248.1h.01M511 149h.01M596.8 248.8h.01M238.3 284.5h.01M834.2 450.8h.01M446 284.7h.01M405.2 345.1h.01M447.3 212.6h.01M509.6 324.5h.01M727.9 466.1h.01M605.7 104.2h.01M560.3 69.1h.01M488.6 199.3h.01M540.4 294.5h.01M614.9 425.2h.01M185.4 379.2h.01M313.8 342.4h.01M206.7 367.5h.01M560.2 242.2h.01M546.6 330.1h.01M391.8 247.4h.01M272.1 292.9h.01M426.7 324.8h.01M692.2 350.7h.01M776 112.9h.01M357.8 349.1h.01M855.9 431.7h.01M484.3 275.3h.01"/>
<path stroke-width="2.7" stroke-opacity="0.34" d="M388.2 249.4h.01M482 186.1h.01M582.4 173.4h.01M431.4 338.3h.01M522.2 328.8h.01M331.6 217.3h.01M443.8 271.9h.01M201.7 451.5h.01M720.9 199.1h.01M599.6 279.9h.01M450.2 373h.01M743.1 165.7h.01M511.4 555h.01M493.6 89.2h.01M495.1 413.4h.01M544 400.6h.01M608.9 333.3h.01M495.6 383.6h.01M495 361.7h.01M537.3 270.3h.01M460.6 331.5h.01M538.7 314.9h.01M500.4 321.6h.01M538.9 277.5h.01M478 204.6h.01M483.7 390.2h.01M463.3 275h.01M452.6 319.1h.01M315.5 316.2h.01M467.1 418h.01M580.1 111.4h.01M528.7 309.3h.01M572.9 318h.01M575.9 350.2h.01M341.6 127.6h.01M316.7 408.6h.01M560.1 124.2h.01M399.5 389.8h.01M574.8 451h.01M511 286.3h.01M481.3 176.2h.01M531.2 303.4h.01M491.6 251.5h.01M13.7 613.8h.01M444.3 429.9h.01M402.6 309.8h.01M713.5 109.4h.01M419.7 355.6h.01M397.8 372.4h.01M260.2 204.4h.01M452.9 299.7h.01M405.4 327.1h.01M684 11.2h.01M904.7 312.6h.01M523.8 22h.01M559.5 287.9h.01M519.1 205.7h.01M925.8 134.6h.01M704.9 304.9h.01M346.7 79.5h.01M557.7 275.4h.01M370 215.4h.01M783.6 307.3h.01M420.1 342.1h.01M437.3 263.6h.01M643.2 49.7h.01M432.5 489.1h.01M452.7 196.5h.01M406.2 151.4h.01M568.4 351.2h.01M419.4 415.4h.01M802.2 301.6h.01M569.6 128.5h.01M393.1 409.1h.01M552.5 241.5h.01M614.8 415.2h.01M782.9 231.4h.01M543.6 164.8h.01M509 295.1h.01M475.5 350.1h.01M469.8 346.6h.01M449.1 284.2h.01M539.2 217.4h.01M605 292.2h.01M204.3 138.5h.01M711.4 279.3h.01M585.6 312.6h.01M535.7 278h.01M553.8 270.4h.01M767.7 454.1h.01M549.5 297.1h.01M647.9 121.1h.01M551.4 314.3h.01M476.7 38.2h.01M525.9 246h.01M464.1 203.8h.01M424.3 183.9h.01M405.6 381.1h.01M130 428.3h.01M712.6 224.1h.01M595.2 349.1h.01M658.6 168.9h.01M456.5 390.5h.01M334.9 272h.01M759.9 278.4h.01M392.2 420h.01M498.2 173.8h.01M425.9 332.8h.01M360.1 583.8h.01M540 99.6h.01M490.6 295.6h.01M435.6 274.3h.01M716.9 243.2h.01M505.1 144.1h.01M372.6 371.5h.01M283.6 535.4h.01M546.9 291.4h.01M497.5 331.4h.01M542.3 225h.01M426.8 320.8h.01M657 277.6h.01M687.3 330.7h.01M517.8 472h.01M519.3 284.9h.01M408.8 182.9h.01M316.7 402.7h.01M468.3 297.5h.01M140.7 518.5h.01M428.3 249.2h.01M470.4 236h.01M527.7 265.9h.01M535 313.2h.01M767.8 431.4h.01M325.8 278.6h.01M652.7 213.4h.01M508.1 549h.01M566 151h.01M587 337h.01M504.9 258.8h.01M172.9 86.1h.01M558.7 328.5h.01M451.1 337.9h.01M370.8 491.4h.01M841 18.3h.01M633.5 250.1h.01M765.1 205.3h.01M303.8 355.9h.01M519.6 47.7h.01M500.3 608.3h.01M516.4 304.8h.01M249.3 267.2h.01M547.2 158.8h.01M47.4 202.2h.01M384.5 393.7h.01M615 380.3h.01M425.8 268.2h.01M403.7 439.4h.01M461.2 35.2h.01M437.5 329.6h.01M754 296.4h.01M395.7 213h.01M551.8 447.1h.01M811.7 213.8h.01M506.8 308.4h.01M522 304.8h.01M499.5 413.5h.01M508.6 262.1h.01M305.1 462.5h.01M456.1 335.7h.01M527.4 237h.01M467.2 397.4h.01M388.8 467.2h.01M453.5 286.9h.01M920.9 27.1h.01M415.8 269.1h.01M368.6 305.6h.01M545 331.9h.01M406.8 297.4h.01M499.6 213.6h.01M508.5 271.3h.01M313.3 258.1h.01M606.6 234.8h.01M597.2 490.2h.01M457.7 255.8h.01M501.6 297.5h.01M583.2 304.7h.01M388.4 353.1h.01M507.4 146.8h.01M633.2 215.5h.01M598.7 259.2h.01M303.3 310.9h.01M578.7 474.4h.01M605.5 367.1h.01M588.9 314.7h.01M438.9 429.7h.01M698.6 353.6h.01M627.8 235.4h.01M495 286.9h.01M547 409.6h.01M391 267.1h.01M597 331.6h.01M452.8 322.7h.01M526.6 344.3h.01M354.8 288.8h.01M478.6 284.5h.01M568.5 499.6h.01M482.5 327.7h.01M499.8 382.8h.01M674.9 467.9h.01M608 282.2h.01M566.7 214h.01M414 275h.01M583.4 328.4h.01M481.7 389.9h.01M509 343.3h.01M456.8 304.6h.01M552.1 215.1h.01M469.7 331.5h.01M372.5 249.6h.01M706.5 167.2h.01M572 303.8h.01M538.9 68.8h.01M364.7 297.1h.01M945.8 249.1h.01M643.2 154.7h.01M502 277.6h.01M449 255.9h.01M562.8 303.3h.01M392.2 505.8h.01M436.7 365.6h.01M586.1 467.8h.01M430.5 314.2h.01M335.3 279.9h.01M503.5 190.5h.01M486 302.9h.01M535.7 414.3h.01M502.5 309.6h.01M168 148.1h.01M507.1 400.6h.01M439.7 280.2h.01M517.8 341.7h.01M590.2 424.1h.01M600.2 164.2h.01M490.4 330.8h.01M550.1 379.1h.01M498.9 330.1h.01M643.3 52.8h.01M422.4 314.8h.01M504.4 460.7h.01M395.7 368.6h.01M340.2 124.5h.01M741.6 10.2h.01M401.7 475.8h.01M805.3 480.5h.01M427.5 361h.01M401.2 286.3h.01M739.3 377.2h.01M322.4 240.3h.01M690.6 546.1h.01M467.7 290.6h.01M580.9 324.7h.01M477.5 263h.01M669 474.6h.01M307 365.2h.01M621.8 437.6h.01M560.7 271.9h.01M535.8 324.9h.01M290.6 34.6h.01M449.9 320.9h.01M489.4 352.5h.01M469.8 347.4h.01M522.9 462.5h.01M403.7 162.1h.01M325.5 11.9h.01M627.3 182.5h.01M494.9 340.2h.01M403.2 263.9h.01M525.2 343.6h.01M409 307.6h.01M668.2 81.2h.01M83 477.5h.01M566.2 233.6h.01M513 105.9h.01M479.8 218.4h.01M481 32.6h.01M508.2 451.3h.01M538 174.5h.01M584.5 296.8h.01M766.4 270.3h.01M246.2 478.3h.01M386.6 375.9h.01M531.3 299.1h.01M238.2 636.9h.01M520.7 311.7h.01M408.5 253.6h.01M527.4 280.8h.01M575.4 285.5h.01M538 305.5h.01M579.1 269.6h.01M495.2 378.9h.01M409.3 460.3h.01M616.2 248.2h.01M485.4 290.4h.01M437.6 494.5h.01M432.8 277.5h.01M587.2 589h.01M669.8 268h.01M838.2 92.8h.01M413 329.1h.01M518.9 157.2h.01M559.7 311.3h.01M463.1 109.6h.01M527.4 163.2h.01M403.8 306.4h.01M309.3 96.3h.01M397.5 141.7h.01M513.7 352.8h.01M464.3 276h.01M342.7 359.7h.01M610.7 369.7h.01M497.8 278.5h.01M277.9 246.4h.01M311.6 11.3h.01M538.6 298.7h.01M568 325.1h.01M511.2 235.6h.01M156.7 262.4h.01M625.3 315.9h.01M465 367.9h.01M551.5 284.6h.01M534.3 480.4h.01M445.1 250.3h.01M382.1 590.3h.01M605.5 125.8h.01M628.4 316.7h.01M542.8 322.5h.01M596.5 402h.01M529.8 48.9h.01M558.6 286.4h.01M612.1 333.5h.01M547.4 184.2h.01M352.5 367.9h.01M485.9 175.5h.01M473.4 58.6h.01M489.1 326.4h.01M586.9 428.9h.01M475.4 179.3h.01M534.2 263.7h.01M614.8 274.5h.01M472.2 334.5h.01M498.3 318.2h.01M416.6 358.2h.01M447.9 292.1h.01M715.7 382.1h.01M381.9 455.7h.01M452 326.8h.01M275.7 166.3h.01M637.1 472.2h.01M389.5 446.5h.01M636.3 246.6h.01M505.4 447.5h.01M813.6 247.8h.01M516.7 266.6h.01M523.3 209.5h.01M486.9 293.4h.01M460.2 287.3h.01M478.2 433.1h.01M481.8 268h.01M339.4 325.9h.01M515.4 379.1h.01M635.3 287.2h.01M586.2 344.3h.01M479.4 102.3h.01M581.1 287.1h.01M361.2 237.5h.01M398 429.7h.01M506.7 152.7h.01M417.5 362.2h.01M431.5 361.8h.01M81.8 323h.01M428.2 314.2h.01M6.6 367h.01M418.9 307.4h.01M513.3 293.6h.01M561.9 548.8h.01M448.4 295.1h.01M462 349.5h.01M464.8 387.7h.01M398.2 372.9h.01M850.3 463.6h.01M206.8 239.2h.01M539.8 234.4h.01M211.8 385.8h.01M499.8 250.7h.01M600.1 250h.01M201.3 413.6h.01M634.6 432.5h.01M422.1 412.7h.01M526.9 394.9h.01M365.5 262h.01M550.8 115h.01M775.6 339.2h.01M487.2 454.1h.01M474.4 246.5h.01M507.6 231.6h.01M479.6 308.4h.01M246.9 304.3h.01M460.2 304.6h.01M503.1 359.9h.01M526 467.9h.01M508.3 300.9h.01M331.6 274.1h.01M212.1 484.4h.01M495.3 104.1h.01M555.4 270h.01M31.8 354.7h.01M410.6 259.6h.01M494.1 271.6h.01M497 325h.01M384.4 340h.01M548.4 185.8h.01M449.8 224.9h.01M449.4 333.2h.01M340.4 476.7h.01M596.8 18.5h.01M570.4 268.7h.01M462.1 327h.01M504.7 349.3h.01M448.9 320.5h.01M387 336.6h.01M555.9 226.7h.01M591.9 234.4h.01M556 248.6h.01M497.4 249.8h.01M484 259.8h.01M872.8 342.5h.01M313.9 274.6h.01M441.2 375.5h.01M314 633.2h.01M367.5 536.3h.01M506.2 321.1h.01M641.2 260.9h.01M379.5 344h.01M447.5 204.6h.01M512.7 296.9h.01M500.9 414.4h.01M484.2 291.6h.01M559.7 174.2h.01M427.6 350.5h.01M426.2 255.5h.01M573 312.4h.01M824 594.9h.01M473.7 286.2h.01M566.9 68.5h.01M524.5 416.7h.01M242.1 271.2h.01M557.6 315.1h.01M565.3 250.9h.01M627.1 339.4h.01M604.9 284.8h.01M484.9 163.3h.01M560.4 503.5h.01M476.4 548.3h.01M539.7 306.8h.01M367.5 305.1h.01M692.1 253.1h.01M505.6 238.4h.01M486.8 39.4h.01M496.3 185.4h.01M51.9 239.9h.01M388.8 585.2h.01M319.4 248.5h.01M121.5 327.8h.01M832.4 245.2h.01M464.1 327.2h.01M500.9 315.6h.01M507.9 357.6h.01M404.5 258.3h.01M566.8 262h.01M555.3 279.8h.01M488.3 258.2h.01M642.6 292.8h.01M420.4 555h.01M233.7 257.9h.01M508.8 210.5h.01M721.2 163.3h.01M653.7 340.5h.01M783.4 316.6h.01M442.3 317.3h.01M409.3 88.1h.01M223.5 211.7h.01M291.5 290.8h.01M519.3 268.3h.01M504.6 274.8h.01M598.5 241.6h.01M436.4 424.4h.01M421.4 320.7h.01M475.3 341.2h.01M480.2 217.7h.01M536.2 320.1h.01M508.9 386.4h.01M303.7 346.5h.01M640.1 179.3h.01M670.5 510.3h.01M195.3 12.4h.01M452.5 151.6h.01M537 346.9h.01M588.8 466.9h.01M450.4 334.8h.01M465.2 321.6h.01M485.4 226.3h.01M427.2 333.3h.01M241.6 168.6h.01M548.2 255.2h.01M581.5 175.7h.01M674.1 372.6h.01M444.3 358.8h.01M514 237.8h.01M516.6 375.8h.01M380.9 479.7h.01M493.1 306.4h.01M570.8 478.8h.01M394.4 431.3h.01M510.2 246.7h.01M294.2 417.4h.01M430.3 293.3h.01M510.4 243.8h.01M757.2 587.9h.01M485.4 181.7h.01M444 256h.01M318.3 376.7h.01M757.4 335.4h.01M481.3 341.9h.01M629.1 93h.01M443.6 473.9h.01M240.6 247.8h.01M803.7 455.6h.01M470 311h.01M568.6 297.4h.01M469.1 261.8h.01M444.5 268.2h.01M552.8 288.4h.01M568.1 206.5h.01M549.5 393.1h.01M549.3 278.5h.01M351.2 396.8h.01M296.5 507h.01M649.4 583.1h.01M490 131.5h.01M491.5 354.5h.01M363.2 395.8h.01M520 441.3h.01M484.3 178.7h.01M446.6 485.3h.01M782.4 598.9h.01M516.6 354.2h.01M563.2 431.1h.01M82.7 414.3h.01M421.1 422.7h.01M702.8 104.4h.01M425.4 250.5h.01M189.6 233.4h.01M443.2 327.9h.01M435.2 312.2h.01M483.4 271.2h.01M503.6 220.6h.01M845.2 489.9h.01M468.4 429.6h.01M73.4 5.9h.01M667.4 337.4h.01M422.7 299.7h.01M675.7 302.8h.01M486.4 307.9h.01M500.7 308.5h.01M575.3 324.7h.01M372.7 351.5h.01M647.7 180.2h.01M382.3 394.9h.01M558.6 128.1h.01M422.4 318.3h.01M547.3 275h.01M499.6 277.9h.01M544.6 409h.01M453.3 377.5h.01M539.6 284.9h.01M537.2 301.9h.01M119.5 434.6h.01M503 330.1h.01M504.2 277.3h.01M378.3 225.5h.01M609.9 178.1h.01M448.1 275h.01M562.1 390.9h.01M337.8 280.7h.01M180.6 485.6h.01M526.7 333.1h.01M697.7 344.3h.01M470 179.7h.01M531.2 381.7h.01M534.5 371.2h.01M727.3 344.3h.01M606.3 203.3h.01M610.8 296.8h.01M515.7 158.8h.01M480.4 338.6h.01M899 560h.01M632.6 247.8h.01M327.7 9.7h.01M611.5 389.3h.01M676.5 346.1h.01M787.4 189.3h.01M615.6 292.8h.01M382.4 290.8h.01M465.5 358.4h.01M577 167.9h.01M788.6 506.1h.01M239.8 326h.01M688.8 205.2h.01M458.6 251.5h.01M526.2 318.3h.01M558.1 278h.01M559.9 536.9h.01M554.1 216.2h.01M120.6 278h.01M514.8 210.5h.01M495.2 260h.01M230.7 541.9h.01M546.9 349.6h.01M97.8 453.1h.01M267.3 377.4h.01M325.8 252.5h.01M551.2 233h.01M634.5 173.7h.01M397.9 264.3h.01M576.4 281.7h.01M89.4 328.7h.01M478.4 514.8h.01M466.2 354h.01M389.6 296.7h.01M455.9 282.7h.01M365.6 238.3h.01M276 65.8h.01M509 409h.01M455.8 318.4h.01M509.1 388.5h.01M490.6 299.9h.01M474.6 254.5h.01M453 366.6h.01M328 371h.01M559.3 313h.01M399.3 257.9h.01M853.2 171.5h.01M440.2 249.3h.01M469 530.3h.01M484.4 338.3h.01M755.4 89.4h.01M626.7 193.7h.01M338.1 248.3h.01M810 455.3h.01M726 266.9h.01M524.2 336.4h.01M622.8 560.1h.01M534.6 501.4h.01M444.2 350.1h.01M548.3 393.8h.01M562.3 269.6h.01M458.7 350h.01M448.2 120.4h.01M587 367.9h.01M831.8 101.3h.01M594.2 307.3h.01M538.5 170.7h.01M461.3 239.3h.01M277.5 209.5h.01M202.3 208.7h.01M514.5 283.5h.01M543.6 223.4h.01M91.1 272.1h.01M806.5 418.7h.01M540.7 297.5h.01M480 351.4h.01M296.9 181.1h.01M526.9 474.3h.01M410.7 270.5h.01M535.1 354.6h.01M423.6 382.4h.01M390.8 286.5h.01M368 602h.01M675.5 394.7h.01M813.5 348.1h.01M577.4 302.7h.01M482 436.3h.01M547 244.7h.01M463 342.8h.01M752.2 457.9h.01M522.8 302h.01M31 352h.01M586.1 400.9h.01M684.7 191.3h.01M449.3 245.9h.01M787.2 299.3h.01M486 354.2h.01M311.1 173.7h.01M506.6 262h.01M847.8 10.6h.01M451.2 314.5h.01M436.1 221.9h.01M550.7 354.4h.01M743.3 488.7h.01M655.3 511.9h.01M321.9 153.6h.01M379.7 310h.01M452.4 315.5h.01M287 344.2h.01M593.4 352.9h.01M547.3 365.2h.01M381.2 332.2h.01M659.4 403.2h.01M469.6 217.5h.01M324.1 276.7h.01M514 334.7h.01M388.9 107h.01M385.5 354.4h.01M41.2 123.9h.01M466 389.8h.01M503.6 9.9h.01M440.8 135.9h.01M536.5 546.7h.01M336.8 284.2h.01M552.5 261.1h.01M421.2 325.5h.01M451.8 301.4h.01M490.4 327.9h.01M469.5 292.3h.01M495.4 224.6h.01M476.5 528.5h.01M585.3 584.3h.01M419.4 46.9h.01M644.5 284.7h.01M666.8 241.3h.01M596.6 282.8h.01M466.3 95h.01M570.5 431.7h.01M572.8 341.9h.01M480.1 213.2h.01M411.9 275.8h.01M428.2 288.2h.01M296.4 329.3h.01M589.1 442.8h.01M604.9 201.8h.01M580.2 495.2h.01M480.1 91.3h.01M87.3 238.2h.01M347.9 88.3h.01M502.4 353h.01M593.8 546.5h.01M481.6 331.1h.01M653.4 57.7h.01M209.5 208.9h.01M836 326.7h.01M659 412.5h.01M463 379.7h.01M475.6 440.5h.01M205.7 13.6h.01M494.8 325.8h.01M555.4 353.3h.01M773.1 294.5h.01M477.7 279.6h.01M443.2 271.1h.01M725.3 621.4h.01M340.6 332.2h.01M228.1 322.4h.01M332.2 230.6h.01M603.8 376.2h.01M472.8 342.1h.01M317.8 400.7h.01M414.2 207.8h.01M574.4 239.6h.01M423.4 236.8h.01M486.7 259h.01M904.4 93.3h.01M168.3 363.4h.01M333.8 241.2h.01M447.9 182.9h.01M467.2 275.2h.01M630.7 154h.01M463 123h.01M279.8 241.2h.01M883 547.8h.01M514.7 277.6h.01M109.3 577.4h.01M563.3 258.5h.01M473.7 286.3h.01M446.1 194.6h.01M442.9 300.2h.01M481.4 260.8h.01M59.5 462.3h.01M422 260.5h.01M481.9 300.4h.01M467.1 401.5h.01M741.1 547.9h.01M556.5 223.7h.01M345.6 299.5h.01M234.7 535.6h.01M241.7 260.9h.01M546.4 419.7h.01M542.2 294h.01M331.8 478.7h.01M643.2 364.2h.01M553 295.6h.01M508.2 144.4h.01M495.8 79.3h.01M610.7 313.9h.01M459.6 547.4h.01M513.7 415h.01M688 355.2h.01M272.6 120.5h.01M434.6 334.9h.01M453.3 104.3h.01M522 146.7h.01M586.8 363.4h.01M300.6 149.3h.01M743.9 502.5h.01M530.8 186.7h.01M455.6 307.6h.01M475.7 254.5h.01M886.1 396.6h.01M225.6 323.1h.01M398.9 331.7h.01M408.6 306.4h.01M509.8 373.4h.01M390 192h.01M556.9 338.2h.01M491.8 106.7h.01M321.5 511.8h.01M443.7 282.5h.01M310.6 212.4h.01M465.8 353.5h.01M500.4 245.7h.01M418.7 28.7h.01M420.1 279.2h.01M334.8 346.9h.01M486.2 266.5h.01M515.9 322.1h.01M343.5 309.6h.01M534.6 388.5h.01M581.2 588.2h.01M436.6 324.8h.01M561.7 390.3h.01M390.4 121.1h.01M437.5 372.5h.01M627.7 164.5h.01M553.4 338.2h.01M412.8 316.4h.01M298.6 383.2h.01M471.2 308.8h.01M399.6 281.7h.01M323.2 307h.01M588.2 265.8h.01M818.3 385h.01M435.6 173.7h.01M749.9 387.4h.01M502 312.3h.01M642.5 405.4h.01M337.7 213.7h.01M525.5 303.8h.01M492.3 376h.01M491.5 206.1h.01M467.3 280.9h.01M374 330.7h.01M592.1 229.6h.01M433.4 253.4h.01M522.1 296.2h.01M325.5 471.6h.01M501.9 205.9h.01M506.1 301.5h.01M565.2 382.7h.01M711.3 62.8h.01M450.4 400.8h.01M560.1 171.4h.01M481.9 338.7h.01M644.5 397.8h.01M665.6 427.4h.01M340.8 529.8h.01M325.8 579.1h.01M728.6 376.5h.01M404.2 300.6h.01M414.9 309.3h.01M89.1 409.6h.01M495.2 341.6h.01M331.8 235.6h.01M830.5 501.1h.01M483.2 375.3h.01M561.9 168.2h.01M596.8 308.2h.01M523.1 178.3h.01M542.1 233.6h.01M544.1 288.8h.01M492.3 367.1h.01M530.4 379.3h.01M627.2 366.6h.01M410.2 422.1h.01M513.9 345.8h.01M550.9 280.4h.01M563.4 369.2h.01M562.9 291.4h.01M465.6 183h.01M516.4 144.8h.01M456.4 213.2h.01M217.2 341.3h.01M560.3 441.4h.01M549.2 264.8h.01M481.9 126.8h.01M540.2 258.9h.01M401.7 336.3h.01M600 220.2h.01M484.2 192.8h.01M562.1 305.4h.01M323.7 447h.01M400.2 533.5h.01M568.9 245.5h.01M638.8 440.6h.01M414.8 289.8h.01M536.4 391.1h.01M503.8 537.7h.01M361.2 386.2h.01M451.5 429.4h.01M534.3 376.1h.01M490 310.2h.01M614.2 331.6h.01M185.9 372.9h.01M575.9 375.5h.01M494.7 301.5h.01M291.8 94.8h.01M487.7 308.1h.01M322.8 18.5h.01M378.5 587.1h.01M629.3 357.9h.01M486.5 251h.01M607.9 230.3h.01M456.4 246.4h.01M616.8 125.1h.01M463.5 289.1h.01M217.4 620.6h.01M254.3 48.5h.01M65.7 138.2h.01M484.9 308.5h.01M464.6 291.3h.01M545.8 256h.01M623.1 259.9h.01M566.9 297.1h.01M488.9 275h.01M415.2 219h.01M248 565.8h.01M394.3 146.8h.01M419.7 201.5h.01M487 317.5h.01M521.5 258.8h.01M494.2 269.5h.01M526.4 348.6h.01M548.6 202.7h.01M564.5 248.5h.01M422.5 251.1h.01M442.8 341.9h.01M563.4 320.1h.01M624.3 244h.01M915 263.1h.01M506.8 219.7h.01M452 357.7h.01M272.2 32.3h.01M303.3 226.2h.01M576.4 257.5h.01M600 85.2h.01M332.7 113.8h.01M513.8 477.4h.01M474.5 325.6h.01M532.9 303h.01M500.1 322.1h.01M353.3 181.7h.01M628.1 324.5h.01M555.1 220.8h.01M505.7 257.1h.01M850.9 329h.01M553.8 315.3h.01M441.1 216.3h.01M777.8 467.7h.01M592 302.3h.01M629.3 345.1h.01M470.4 254.6h.01M514.6 308.5h.01M561 177.9h.01M567.3 495.4h.01M541.2 192.7h.01M107.5 126.3h.01M452.1 343.9h.01M333 540h.01M422.6 217.5h.01M481.4 323.3h.01M447.3 123.7h.01M508.7 386.3h.01M428.5 238.8h.01M558.7 197.8h.01M919.2 135h.01M587.9 274.9h.01M406.5 326.4h.01M566.7 343.5h.01M402.2 343.6h.01M249.5 314.3h.01M459.5 295.6h.01M533.2 309.7h.01M188.6 252.7h.01M620.9 286h.01M717.9 247.4h.01M443.2 373.9h.01M355.3 341h.01M540.9 278.4h.01M502.1 300.3h.01M427 363h.01M659.4 200.5h.01M496.6 327.3h.01M495.3 298.8h.01M505.6 355.1h.01M412.6 351.5h.01M865.3 253.4h.01M527.5 127.4h.01M374.9 165.9h.01M484.5 445h.01M472.5 333.3h.01M544.2 352.7h.01M645.1 161.9h.01M541.6 324.8h.01M525.9 254.7h.01M642.9 224.7h.01M605.9 334.5h.01M492.4 252.2h.01M348.5 367.5h.01M850.9 274h.01M435 338.8h.01M627.2 454.3h.01M453.6 271.3h.01M492.8 278.6h.01M666.4 289.6h.01M277.3 90.6h.01M477.9 194.5h.01M486.6 436.3h.01M785.9 56.3h.01M523.4 357.3h.01M460.4 420.4h.01M449.9 405.8h.01M354.9 418.6h.01M432.3 341.4h.01M141.7 190.8h.01M674.6 385.5h.01M542.9 262.2h.01M580 335.7h.01M340.2 537h.01M454.6 327.8h.01M224.7 326.1h.01M516.6 174.3h.01M490.5 356.2h.01M441.6 207.1h.01M543 283.6h.01M664.9 313.9h.01M435.9 395.5h.01M369.5 104.7h.01M492 286.7h.01M390.6 271.7h.01M557 264.1h.01M487.6 425.2h.01M536.1 267.9h.01M162.9 345.4h.01M604.4 19.5h.01M383.7 181h.01M449.9 309.8h.01M403.4 287.1h.01M612.6 352.9h.01M535.8 242h.01M471.4 367.6h.01M598.2 153.1h.01M263.9 176.6h.01M482.8 422.8h.01M537.2 343.3h.01M156.7 415.5h.01M460.2 333.6h.01M178.4 28h.01M317.2 429.5h.01M749.4 437h.01M116 298.6h.01M768.1 35.5h.01M561.6 331h.01M507.1 285h.01M709.3 335.8h.01M383 290.2h.01M803.4 361.4h.01M688.4 416.4h.01M357 271.9h.01M623.6 281.7h.01M408.2 313.4h.01M533 333.6h.01M416.8 156.9h.01M625.9 373.7h.01M347.8 99.2h.01M106 355h.01M529.6 396.8h.01M506.7 239.9h.01M778.3 96.6h.01M513.6 384.6h.01M728.6 275.8h.01M482.2 343.2h.01M519.6 443.6h.01M713.8 322.8h.01M547.4 182.5h.01M676.1 332.8h.01M650.4 303.9h.01M480.5 321.4h.01M324.7 603.3h.01M640.5 287.6h.01M788.9 447.9h.01M708.5 203.5h.01M457 319.3h.01M452.3 297.9h.01M578.4 209.8h.01M283.2 144.2h.01M466.8 249h.01M384.5 320.6h.01M356.7 505h.01M448.5 295.1h.01M457.1 137.9h.01M469.6 352.2h.01M479.8 356.9h.01M628.7 432h.01M441 366.2h.01M534.3 271.3h.01M467.2 278h.01M536 220.7h.01M534.9 366.5h.01M449.7 259.4h.01M530.4 266.8h.01M384.1 318.3h.01M637.1 554h.01M42 391.1h.01M465.4 289.8h.01M641.3 504.7h.01M375 396.4h.01M264.5 268h.01M411.8 273.3h.01M377.4 64.3h.01M93.4 226.2h.01M398 327.1h.01M597.6 217.5h.01M435.7 308.6h.01M476 43.9h.01M508.8 257.5h.01M458.5 109.1h.01M461.9 105.4h.01M734.9 472.6h.01M597.1 380.6h.01M462.7 404.2h.01M482.1 232.2h.01M472.7 249.7h.01M595.6 465.5h.01M452.6 351.1h.01M365.9 333.6h.01M440.4 276h.01M490.8 326.5h.01M482 100.3h.01M352.4 172.4h.01M552.5 385.9h.01M599.9 259.8h.01M548.4 270.7h.01M591.5 116.8h.01M176.4 377.2h.01M419.6 252.3h.01M438.6 270.5h.01M564.7 262.4h.01M484.9 333.7h.01M430.8 364.8h.01M506.8 264.9h.01M390 274.9h.01M506.8 166.5h.01M81.4 44.6h.01M648 282.6h.01M519 316.3h.01M168.4 240.1h.01M224.4 135.5h.01M581.2 334.9h.01M534.7 232.5h.01M491.8 463.6h.01M425.1 412.6h.01M437.9 391.4h.01M448.6 215.8h.01M380.7 260.4h.01M467 246.7h.01M443.3 340.7h.01M505.5 179.2h.01M429.4 320.6h.01M212.6 425h.01M495.6 243.4h.01M476.8 410.1h.01M457.4 359.8h.01M490.5 454.5h.01M197.2 273h.01M552.1 141.4h.01M493.5 58.2h.01M525.3 318h.01M613 225.4h.01M498.7 308.4h.01M442.3 417.8h.01M475 188.6h.01M344.1 182.4h.01M478.9 242.7h.01M484.4 467.8h.01M13.4 123h.01M471.2 244.6h.01M513.3 283.1h.01M666.1 266.2h.01M554.3 352.5h.01M500 340.3h.01M676.1 200.4h.01M645.4 148.7h.01M637 312.2h.01M524.8 20.1h.01M477.9 303h.01M448.2 327.5h.01M542.9 157.2h.01M359.8 416h.01M420.7 125.9h.01M600.9 103.6h.01M452.1 200.7h.01M451 305.5h.01M539.2 399.4h.01M386.1 389.3h.01M563.8 70.5h.01M521.6 82.1h.01M343.6 378.6h.01M583.2 300.6h.01M831.8 488h.01M677.9 342.3h.01M512.2 146.7h.01M481.2 257.5h.01M948.5 55.9h.01M381.5 132.4h.01M422.8 306.9h.01M512.8 421.1h.01M357.2 451.1h.01M474.2 362.9h.01M426.8 295.1h.01M528.3 289.7h.01M430 282.1h.01M425.1 268.4h.01M507.5 432.3h.01M671.4 290.3h.01M451.1 358.5h.01M464.1 331.7h.01M902.5 496h.01M531.7 309.1h.01M526.3 340.1h.01M351.3 505h.01M494.4 336.9h.01M144.7 13h.01M403 240h.01M558.4 448h.01M298.9 378.7h.01M751.9 79.1h.01M507.8 349.9h.01M666.8 124.6h.01M925.5 456.5h.01M526 295.7h.01M483.6 290.8h.01M545.4 219h.01M245.9 253.5h.01M490.7 288.7h.01M611.1 236.2h.01M679.5 445.2h.01M605.6 366.8h.01M181.9 262h.01M485.4 343.9h.01M603.1 289.9h.01M428.4 420.4h.01M506.7 349.4h.01M357.9 292.1h.01M820.6 288.4h.01M670.9 326.9h.01M505.5 158.3h.01M493.1 308.7h.01M475.4 110.9h.01M480.9 86.5h.01M511.2 508.5h.01M538 520.9h.01M329.9 40.9h.01M385.9 276.4h.01M607.5 375.7h.01M344.1 321.9h.01M423.3 354.2h.01M624.9 475.9h.01M689.1 447h.01M332.8 304.1h.01M538.9 453.3h.01M288.9 410.6h.01M467.6 298.7h.01M855.6 397.6h.01M458.4 197.6h.01M905.8 616.1h.01M670.1 119.4h.01M586.1 225.2h.01M597.8 527.4h.01M353.5 336.4h.01M802.2 516.4h.01M517 430.5h.01M514.3 618.1h.01M597.2 356h.01M391 155h.01M701.4 225.3h.01M348.2 247.4h.01M588.3 185.4h.01M530.8 247.4h.01M537 117.6h.01M352.5 379.8h.01M633.2 387.6h.01M438.6 489.7h.01M638.5 400.3h.01M631.2 256.4h.01M427.9 344.3h.01M399.2 425.6h.01M407.8 583.9h.01M423.5 203.6h.01M511 273.2h.01M338.6 358h.01M521.9 208.4h.01M264 465.8h.01M769.8 259h.01M484.1 323.2h.01M242.3 615.5h.01M650.2 412.7h.01M502.2 278.7h.01M361.2 355.1h.01M717.2 172h.01M589.5 456.7h.01M930 300h.01M489 392.7h.01M446.5 341h.01M784.5 147.3h.01M537.8 421.6h.01M314.7 403.7h.01M145.1 601.9h.01M466.2 268.8h.01M778.2 534.5h.01M476 296.1h.01M693.4 303.5h.01M507.9 253.6h.01M444.1 363.1h.01M582.1 356.1h.01M435.2 224.5h.01M430.9 280.6h.01M422.4 287.5h.01M291.1 288.3h.01M364.8 503.7h.01M467.1 245.3h.01M593.5 356h.01M483.3 257.5h.01M49.9 462.1h.01M570.1 287.2h.01M652.2 343.6h.01M459 251.2h.01M806.5 366.4h.01M561.1 259.4h.01M943.3 339.2h.01M753.7 506.8h.01M442.7 403.7h.01M474.9 97.9h.01M589.3 327.2h.01M583.7 550.3h.01M502.8 254.4h.01M408.1 349.2h.01M393.8 234.6h.01M512.6 316.8h.01M918.2 426h.01M608.1 249.8h.01M233.1 377.2h.01M466 318.4h.01M372.2 326h.01M586 365.4h.01M341.7 332.5h.01M576 369.8h.01M553.2 291.8h.01M513.9 312.8h.01M548 324.4h.01M397.5 192.2h.01M559.4 13.8h.01M418.3 289.2h.01M614.9 565.3h.01M504.7 329.7h.01M294.7 176.3h.01M505 291.3h.01M465.6 228.6h.01M493.3 241.1h.01M545.8 276h.01M637.4 61.8h.01M544 394.7h.01M519.9 340.6h.01M522.9 433.9h.01M447.7 344.2h.01M167 168.5h.01M339.9 624.4h.01M512 502.4h.01M660.6 254h.01M442.8 399.5h.01M487.9 233.4h.01M533.1 295.1h.01M542.7 305h.01M629.1 247.8h.01M302 49h.01M440.3 258.2h.01M617.9 368h.01M608.2 220.9h.01M256.9 212h.01M487.3 154.9h.01M489.9 322.1h.01M476.8 487.4h.01M336.6 392.8h.01M438.5 281.3h.01M546.6 404.6h.01M598.1 340.9h.01M495.5 264.2h.01M427 337.2h.01M582.5 241.2h.01M348.8 351.3h.01M482.6 381.8h.01M609.2 324.6h.01M348.3 256.3h.01M281.6 282.9h.01M600.5 391.8h.01M568.7 272h.01M377.2 274.9h.01M561.9 277.9h.01M544.2 241.5h.01M561.3 372.9h.01M863.3 458.9h.01M493.9 287.9h.01M519.4 250.6h.01M690.3 188.6h.01M406.2 434.3h.01M496.1 322h.01M496.2 329.8h.01M771.7 272.6h.01M503 281.7h.01M618.3 261.3h.01M612.6 218.7h.01M630.6 376.5h.01M854.8 332.2h.01M416.7 196.1h.01M278.4 200.8h.01M536.4 303h.01M453.9 409.7h.01M566.6 345.1h.01M512.3 287.7h.01M539.4 305.9h.01M297.3 183.1h.01M653.6 281.2h.01M497.8 300.8h.01M414.3 251.9h.01M511.8 401.1h.01M331.7 342.8h.01M445.6 369.8h.01M432.1 398.7h.01M784.2 515.9h.01M219.6 332.8h.01M314.8 263h.01M455.2 332.4h.01M540 292h.01M617.4 275.8h.01M342.2 594.7h.01M357.8 429.4h.01M513.9 335.5h.01M385.8 397.9h.01M459.8 282.4h.01M570.8 308.8h.01M532.5 228.7h.01M506 251.8h.01M496.2 299.3h.01M567.7 27.2h.01M404.4 48.3h.01M527.9 297.8h.01M772.6 312.6h.01M424.4 317.8h.01M436.8 265.9h.01M276.8 309.4h.01M609.1 417.1h.01M668 222.4h.01M304.1 207.5h.01M316.8 308.6h.01M371.2 379h.01M420.9 305.6h.01M656.5 146.6h.01M492 295.9h.01M425.3 319.2h.01M572 348.4h.01M538.9 273h.01M476.3 383.8h.01M641.2 283.8h.01M381 408.6h.01M387.1 148.7h.01M410.1 379.4h.01M522.5 255.8h.01M521.1 364.4h.01M509.3 244h.01M416.7 567.8h.01M219.3 242.1h.01M554.6 120.7h.01M452.6 388.8h.01M308.3 154.8h.01M597.2 305.7h.01M549 331.4h.01M652.7 349.5h.01M557.9 345h.01M420.6 362.1h.01M505.9 518.5h.01M370 543.5h.01M396.2 348.1h.01M496.8 263.1h.01M539.6 453.1h.01M290.4 210.7h.01M562.2 459.5h.01M631.7 472.3h.01M525.4 271.8h.01M520.5 312.8h.01M554.7 212h.01M705.9 234.5h.01M399.7 222.4h.01M594.6 296.3h.01M481.7 425.2h.01M447.7 218.5h.01M580.6 394.7h.01M552.1 329.8h.01M757.3 80.8h.01M540.3 382.6h.01M550.4 386.4h.01M456.2 482.2h.01M800.7 619.6h.01M450.2 362.8h.01M472.6 296h.01M499.5 533h.01M459.7 295.6h.01M873.7 504.4h.01M460.4 239.8h.01M818.9 283.4h.01M455.6 485.6h.01M449.5 290.1h.01M616 335.3h.01M576 301.1h.01M528.1 201.6h.01M554.6 236.7h.01M500.8 359.2h.01M444.2 344.8h.01M474.2 410.5h.01M536.9 470.4h.01M537 275.5h.01M547.4 202.6h.01M548.9 596.5h.01M493.2 321.4h.01M645.5 351.6h.01M770.3 322.3h.01M459.5 321.6h.01M493.7 326.5h.01M410.6 531.3h.01M700.6 470.6h.01M466.7 209.7h.01M491.1 410h.01M500.3 14.9h.01M497.8 261.1h.01M618.8 384.5h.01M469.5 290.1h.01M260.6 204.7h.01M546.2 377.1h.01M509.1 436.1h.01M420 320.7h.01M675.2 336.5h.01M592.1 297h.01M495.2 292.5h.01M514 345.2h.01M480.9 285.3h.01M890.4 273.3h.01M593.6 289.2h.01M505.6 317.9h.01M475.6 309.8h.01M518.7 263.3h.01M532.2 293h.01M255.8 429.7h.01M478.8 317.5h.01M591.9 82.5h.01M357.4 120.2h.01M455.8 324.1h.01M511.3 247.8h.01M826.7 168.9h.01M490.4 268.8h.01M828.9 280.4h.01M446.6 257.2h.01M262.5 162.6h.01M433.9 385.5h.01M631.9 86h.01M520.3 151.1h.01M334.9 119.9h.01M477.8 300.1h.01M477 308.1h.01M460.8 93.7h.01M525.3 325.3h.01M527.3 337.2h.01M467.8 275h.01M526.4 271.2h.01M430.1 466.8h.01M611.4 359.3h.01M818.4 353.7h.01M442.4 479.8h.01M431.7 224.1h.01M356.8 338.6h.01M509 359h.01M753.7 350.1h.01M418.2 486.2h.01M531.7 177h.01M600.9 256.6h.01M689.4 167.8h.01M644.7 279.6h.01M457.2 341.2h.01M299 495.5h.01M426.5 548.2h.01M792.6 147.7h.01M510.4 307.3h.01M476.3 404.2h.01M420.1 274.4h.01M586.4 424.1h.01M628.8 194.5h.01M593.1 541.9h.01M492.1 370.9h.01M178.5 311.6h.01M518.7 295.5h.01M323.4 283h.01M607.2 38.5h.01M256.4 230.3h.01M375.1 150h.01M698.1 96.9h.01M501.7 432.2h.01M819.7 197h.01M493.6 487h.01M522.8 345.5h.01M363.7 349.8h.01M154.6 176.1h.01M637.2 385.1h.01M770.6 271h.01M641 384.2h.01M805.3 415.6h.01M608 269.8h.01M534.5 292h.01M363.3 392.5h.01M595.8 373.5h.01M421.6 372.7h.01M607.7 333.2h.01M379 292.6h.01M348.3 344.3h.01M561.4 290.9h.01M208.9 262.7h.01M585 73.2h.01M408.3 394.2h.01M390.7 191.6h.01M538.3 434.9h.01M527.1 270.7h.01M337.1 116.5h.01M565.8 108.2h.01M946.9 366.3h.01M467.1 250.1h.01M382.3 376.5h.01M339.3 196.1h.01M745 203.7h.01M504.3 175.1h.01M548 260.3h.01M544.1 259.9h.01M534.6 102.2h.01M465.9 384.1h.01M344.5 415.5h.01M757 449.9h.01M423.5 370.1h.01M524.5 305.1h.01M773.1 279.1h.01M719.5 202.3h.01M494.7 165.9h.01M346.7 358.6h.01M477.7 344.8h.01M549.1 336h.01M261.2 347h.01M466.1 157.2h.01M822.1 252.7h.01M423.8 176.2h.01M422.4 324.8h.01M206.6 275.8h.01M325.8 156.3h.01M353.1 422.8h.01M509.5 176.1h.01M426.9 358.7h.01M512.9 340.4h.01M260.5 516.5h.01M476.8 614.9h.01M799.9 301.4h.01M491.3 376.4h.01M505.4 276.6h.01M394.9 405.7h.01M373.8 317.1h.01M593.1 186.5h.01M437.8 214.9h.01M799.7 368.1h.01M480.7 205.5h.01M400.9 190.5h.01M566.8 555.5h.01M476.2 21.1h.01M462.7 308.3h.01M468.1 375.8h.01M506.6 330h.01M494 422.2h.01M569.9 400.8h.01M383.5 228.6h.01M313.1 512.9h.01M477.1 279.1h.01M510.2 249.9h.01M648.8 172.3h.01M373.3 504.4h.01M556.4 212.2h.01M336.4 169.6h.01M549.7 363.8h.01M416.2 190.4h.01M511 209.6h.01M471 294.9h.01M545.8 232.8h.01M482.7 213.5h.01M591.1 296.2h.01M479.3 340.2h.01M550.2 285.2h.01M484.4 226.6h.01M298.1 433.5h.01M263.4 19.6h.01M643.3 259.2h.01M657 419.2h.01M683.2 303.6h.01M804.5 455.5h.01M661.4 344.8h.01M828.9 32.5h.01M528.8 209h.01M536 355.6h.01M481.5 320.1h.01M694.9 347.1h.01M369.9 187.8h.01M534.3 208.9h.01M662.4 400.3h.01M521 302h.01M424.2 253.5h.01M469.1 228.4h.01M582.8 289.4h.01M564.2 441.2h.01M215.8 189.8h.01M618.6 308.1h.01M455.9 303.2h.01M338.8 347.4h.01M565.7 157.9h.01M246.9 277.6h.01M493.8 299.5h.01M510.6 397.2h.01M768 310.3h.01M444.3 244.8h.01M534.4 335.9h.01M513 237.1h.01M389 275.1h.01M447 227.2h.01M478.5 176.2h.01M468.5 259.9h.01M590.5 318.4h.01M557.2 254h.01M402.2 243.9h.01M900 567h.01M637.3 504.5h.01M352.2 354.2h.01M510.9 261.1h.01M784.3 536.3h.01M477.8 203.9h.01M616.9 308.6h.01M508.2 322.3h.01M351.2 264.2h.01M322.8 105.6h.01M411.6 290.3h.01M632.8 268.8h.01M562.5 355.2h.01M664.1 437.5h.01M327.4 189.4h.01M775.8 406.5h.01M625 281.5h.01M645.1 179.8h.01M600.1 151.7h.01M491.9 346.2h.01M270 384.6h.01M380.8 101.9h.01M547.4 313h.01M551.1 305.4h.01M868 65.8h.01M538.2 309.7h.01M632 240h.01M722.5 574.9h.01M343.2 21.7h.01M792.9 418.4h.01M515.5 318.9h.01M596.6 291.4h.01M591.3 254.8h.01M307.7 503.6h.01M445.2 404.4h.01M435.7 374.9h.01M501.7 302h.01M456.3 119.1h.01M254.8 219.2h.01M702.5 551.1h.01M494.8 272.6h.01M387.2 71.8h.01M403.5 177.2h.01M566.2 107.8h.01M544.2 248.6h.01M456.4 628.3h.01M534 313.9h.01M532.3 254.3h.01M408.8 251.4h.01M442.6 183.8h.01M591 489.5h.01M484.7 325.5h.01M542.9 265.3h.01M589.5 605.5h.01M469.1 243.3h.01M395 157.5h.01M321.9 327.6h.01M329.3 518.1h.01M506.9 271.5h.01M528 287.9h.01M626.9 169.3h.01M693.5 334.1h.01M604.6 387h.01M267.9 152.2h.01M479.1 469.4h.01M389.6 291.1h.01M530.7 108.3h.01M482.5 286.4h.01M471.3 460.6h.01M482.8 271.1h.01M473.8 301h.01M438.4 269.8h.01M443.9 163.6h.01M555 432.7h.01M629.5 401.3h.01M483.8 309.6h.01M316.5 109.2h.01M110.9 512.9h.01M401 338.8h.01M477.8 262.9h.01M509.1 283.1h.01M537.2 309h.01M427.9 259.4h.01M684 287.4h.01M493.4 276.3h.01M569.3 334.2h.01M455.7 334.2h.01M667.3 285.9h.01M544.2 347.5h.01M437.4 304.8h.01M467.1 213.2h.01M288.2 49.9h.01M491.4 358.2h.01M68.1 207.8h.01M324.6 460.5h.01M230.6 286.4h.01M446.1 305.6h.01M462 257.9h.01M532.3 268.3h.01M832.7 521h.01M473.9 296h.01M392.6 369.3h.01M327.6 327.6h.01M435.5 297.7h.01M798 171.1h.01M653 318.7h.01M326.1 319.5h.01M526.6 270.5h.01M493.4 484.2h.01M503.1 287.4h.01M497.9 306.8h.01M538.5 210.4h.01M435.6 220.7h.01M790.1 253h.01M465.9 244.8h.01M466 257.9h.01M532.1 423.3h.01M320.6 190.6h.01M827.5 501.2h.01M855.5 387.9h.01M734.4 207.1h.01M309.5 388.2h.01M552.8 234.3h.01M589.9 316.1h.01M339.1 351.2h.01M545.4 505.3h.01M465.4 275.7h.01M681.1 184.1h.01M536.7 156.7h.01M745.7 629.1h.01M272.2 140.1h.01M553.5 420.3h.01M683.7 361.5h.01M543.5 332.4h.01M588.5 530.2h.01M441.9 391.8h.01M245.9 285.8h.01M577.8 40.5h.01M448.3 307.2h.01M562.4 295.6h.01M504 263.6h.01M497.3 170h.01M610.3 280h.01M503.9 343.6h.01M547.4 270.8h.01M853.7 300.1h.01M625.9 350.5h.01M571.1 581.2h.01M551.8 342.6h.01M431 504.5h.01M436.8 257.9h.01M569.3 345.9h.01M323.9 308.2h.01M469.2 581.4h.01M547 117.3h.01M506 322.2h.01M452 282.7h.01M461.7 279h.01M488.1 186.4h.01M320.2 393.2h.01M270.2 388h.01M547.8 470.3h.01M254.5 546.7h.01M635.6 558h.01M549 367h.01M282.5 43.6h.01M334.4 411.7h.01M441.6 391.8h.01M426.9 38h.01M359.1 162.8h.01M438.4 404.2h.01M525.4 351.1h.01M662.6 428.8h.01M717.2 363.4h.01M558.5 14.5h.01M60.2 48.6h.01M402.2 310.4h.01M447.2 286.1h.01M860.1 619.5h.01M852 450h.01M383.8 132.9h.01M609.1 118.2h.01M435.5 240.4h.01M510.5 303.2h.01M505.6 297.9h.01M457.7 293.2h.01M389.3 281.4h.01M358.9 230.9h.01M544.2 268.1h.01M435.2 224.9h.01M516.8 298.6h.01M614.5 288.9h.01M561.3 269.6h.01M506.9 196.2h.01M522 353.8h.01M318.2 452.3h.01M591.2 97.4h.01M476.6 369.9h.01M518.7 375h.01M872.8 123.5h.01M229.3 449.4h.01M455.1 300.3h.01M569.7 268.4h.01M607.4 266.1h.01M780.9 172h.01M497.8 363h.01M575.5 185.1h.01M555.2 431.7h.01M461.4 92.8h.01M682.7 326.6h.01M140 196h.01M427.8 270.2h.01M369.2 287.4h.01M607.6 322.6h.01M914.4 445.4h.01M484.6 315.5h.01M570.6 325.2h.01M140.3 417h.01M547.7 338.4h.01M274 488.1h.01M513.6 240.6h.01M349.3 55.5h.01M334 390.9h.01M584.3 208.4h.01M501 224.3h.01M536.3 361.5h.01M467 306.6h.01M809.8 187.3h.01M463.1 459.5h.01M728.6 333.9h.01M448.6 337.7h.01M231.6 515h.01M162.3 377.8h.01M396.1 151.4h.01M407 347.5h.01M182.6 423.6h.01M332.2 282.3h.01M485.4 500.3h.01M532.3 373.2h.01M477.4 125h.01M452.4 262.5h.01M602.2 235.1h.01M669.7 426.9h.01M630.1 364.1h.01M286.6 199.9h.01M573.8 552.1h.01M843.2 381.9h.01M320.5 280.3h.01M760.6 495.5h.01M386.2 395.4h.01M534.2 326.2h.01M139.4 240h.01M422.7 343.8h.01M515.8 302.3h.01M460.9 599.1h.01M467.6 334.5h.01M485.9 248h.01M566.8 279.2h.01M478.6 337.9h.01M517.1 65h.01M248.3 202.6h.01M820.4 165.3h.01M480.5 380.1h.01M313.4 299.3h.01M741.3 315.6h.01M277.3 566.4h.01M516.2 199.7h.01M460.4 454.8h.01M488.5 334.5h.01M795.9 131.6h.01M440.1 408.6h.01M509.1 172.7h.01M701.5 447.4h.01M438.2 365.8h.01M609.8 301.3h.01M404.7 497.3h.01M399.6 408.4h.01M471.4 250.6h.01M303.1 332.2h.01M415.9 255.7h.01M481.1 565.5h.01M640.6 270.6h.01M488.8 267.7h.01M660.8 257.4h.01M557.4 272.9h.01M469.4 322.7h.01M598.3 354.6h.01M509 364.3h.01M485 383.3h.01M553.4 344.4h.01M450 38.5h.01M478.9 461.1h.01M718.5 293h.01M364.4 285.8h.01M412.6 444.6h.01M435.2 262.1h.01M458.1 225.6h.01M614.1 396.6h.01M409.6 370.2h.01M415.2 360.1h.01M915.8 330.6h.01M432.4 262.1h.01M521.6 119.4h.01M509 340.8h.01M549.6 288.7h.01M523.6 259h.01M496.4 328.9h.01M26.8 182.9h.01M465.8 384.5h.01M311 220.6h.01M499.2 303.5h.01M555.3 558.1h.01M528.9 305.5h.01M560.9 297.5h.01M604.4 415.1h.01M440.2 147.9h.01M452.6 296.8h.01M779.5 290.4h.01M363 299.2h.01M540 245.9h.01M667.6 326.5h.01M527.6 358.9h.01M477.7 298.4h.01M404.7 351.6h.01M572.9 238.1h.01M496 362.2h.01"/>
</g>
<g fill="none" stroke="#fff" stroke-linecap="round" filter="url(#sb2)">
<path stroke-width="1.7" stroke-opacity="0.36" d="M762 238.8h.01M711.6 210.3h.01M299.2 554.6h.01M399.1 185.6h.01M571.9 541.1h.01M257.9 483.1h.01M63.6 15.5h.01M563.8 533.3h.01M889.4 42.1h.01M306 460.5h.01M286 479.6h.01M155.5 462.8h.01M3.5 516.9h.01M8.4 403h.01M205.3 194.5h.01M623.4 377.7h.01M832.7 255.5h.01M609.9 151.6h.01M96.2 295.2h.01M486.1 129.4h.01M520.3 77.1h.01M866.1 300.4h.01M156.4 367h.01M681.7 324.5h.01M306.9 95.7h.01M147.6 190.1h.01M620.7 603.4h.01M820.6 269.6h.01M303.8 507.5h.01M9 312h.01M723.6 206.3h.01M509.4 539.3h.01M862.6 304.7h.01M117.9 593.4h.01M911.9 432.3h.01M193.8 171.8h.01M271.3 261.9h.01M459.8 427.1h.01M759.4 112.9h.01M823 442.3h.01M58.1 375.8h.01M406.9 254.2h.01M230.9 463.7h.01M624.5 616h.01M919.2 610.3h.01M95.8 407.4h.01M58.4 194.4h.01M441 393.3h.01M741.9 190.2h.01M673.8 42.2h.01M897.1 576.9h.01M946.1 130.9h.01M496.7 455.9h.01M447.7 238.9h.01M318.3 416.7h.01M97.4 226.3h.01M588.2 224.4h.01M389.3 485.3h.01M26.4 277.7h.01M138.8 412.7h.01M217.5 521.9h.01M463.8 55.3h.01M638 193.8h.01M192.3 359.1h.01M679.5 284h.01M314.3 278.9h.01M252.5 599.6h.01M259.8 29.1h.01M819.4 38.6h.01M711 184.1h.01M283.3 616.6h.01M752.7 617h.01M398.8 494.8h.01M550.7 52.7h.01M750.6 276h.01M488.8 70.3h.01M685.9 484.9h.01M282.8 416.9h.01M273 162.1h.01M348.9 294.2h.01M134.7 245.2h.01M208.6 164.2h.01M648.2 533.8h.01M571.3 546h.01M29.2 536.9h.01M613 60h.01M108.6 67.6h.01M41.3 89h.01M4 104.2h.01M764 389h.01M478.6 202.3h.01M295.7 521.6h.01M459.7 129.7h.01M129.7 323.6h.01M587.2 179.4h.01M205.1 155.3h.01M27.3 50.9h.01M92.5 95h.01M572.6 507.8h.01M758.4 317.8h.01M522.6 242.2h.01M44.7 354.2h.01M890.3 431.8h.01M628.9 625.4h.01M414.4 188.2h.01M879.9 72.7h.01M458.3 224.4h.01M622.5 18.4h.01M638.5 156.9h.01M166.7 569.9h.01M8.2 36.8h.01M808.3 33.7h.01M453.7 553.4h.01M367.9 15.4h.01M54.5 279h.01M144.8 430.5h.01M768.7 281.2h.01M825.6 231.7h.01M447.3 368.9h.01M441.3 532.9h.01M625.2 266.6h.01M26.6 4.5h.01M604.4 621.3h.01M703.5 262.5h.01M289.1 39.9h.01M930.5 364h.01M722.5 541.6h.01M799.3 392.1h.01M277.5 449.6h.01M721.8 150.3h.01M672.8 514h.01M81.3 23.5h.01M810.3 173.4h.01M292 229.8h.01M654.2 122.8h.01M866.3 408.3h.01M671.9 290.8h.01M748.4 549h.01M618.5 150.7h.01M629.7 58.5h.01M802.2 186h.01M440.4 625h.01M264.4 170.9h.01M257.3 104.9h.01M901.1 561.1h.01M411.5 486.7h.01M411.5 283.3h.01M433.8 263.6h.01M459.5 231.6h.01M521.5 286.4h.01M142.1 623.4h.01M363.5 553.6h.01M177.9 534.7h.01M625.9 500.1h.01M319.8 456.1h.01M422.9 335.4h.01M626.3 496.4h.01M52.9 106.9h.01M427 56.8h.01M885.1 485.5h.01M506.7 162.5h.01M596.5 460.1h.01M848 527.6h.01M463.7 46.1h.01M812.5 460.4h.01M217 621.3h.01M447 624.3h.01M28.2 15.6h.01M559.5 111.6h.01M234.1 425.2h.01M772.6 356.3h.01M0.3 104.2h.01M224.5 429.1h.01M482.2 530.6h.01M578.5 318h.01M848.9 302.7h.01M180.5 62h.01M704.9 503.4h.01M721.4 335.1h.01M615.8 335.5h.01M683.6 61.2h.01M338.4 248.8h.01M113.6 348.3h.01M536.1 546.9h.01M540.8 507.3h.01M216 253h.01M144.4 543.3h.01M566.1 629.8h.01M258.7 111.8h.01M602.2 215.5h.01M447 72.6h.01M234 204.5h.01M417.2 353.2h.01M695.1 149.6h.01M433.7 199h.01M816.9 170.5h.01M412 236.4h.01M48.7 558.1h.01M825.5 231.9h.01M532.2 499.1h.01M538.5 406.7h.01M436.5 365.5h.01M577.8 356.6h.01M771.2 16.3h.01M729.3 569.6h.01M370.1 499.2h.01M515.5 206.3h.01M654.2 194.6h.01M391.4 636h.01M141.1 408h.01M544.7 280.9h.01M157.6 22.1h.01M4.8 557.6h.01M523.6 455.4h.01M340.3 518h.01M250.3 463.9h.01M712.4 504.5h.01M630.7 563.5h.01M863.4 407.8h.01M195.4 586.7h.01M320.1 92.3h.01M196.8 238.1h.01M43.5 116.3h.01M623.7 391.6h.01M726.4 194.3h.01M340.2 402.7h.01M782 261.4h.01M271.2 551.1h.01M211.7 468.1h.01M161 321.7h.01M745.1 516.7h.01M539.3 139.4h.01M639.7 168.3h.01M633 84.8h.01M574.3 148.4h.01M431.3 257h.01M349.7 575.9h.01M22.3 521.2h.01M885.3 436.5h.01M379.3 193.5h.01M590.7 61.3h.01M50.3 384.1h.01M263.2 8.6h.01M725.9 170.3h.01M944 359.3h.01M134.7 617.9h.01M570.8 68.3h.01M241.1 13.6h.01M780.3 67.9h.01M269.9 182.9h.01M481.1 218h.01M42.8 294.9h.01M613.4 49.3h.01M384.3 140h.01M355.9 444.8h.01M203.8 523.7h.01M715.3 155.4h.01M75.7 24.5h.01M510.3 379.9h.01M176.5 112.3h.01M285.1 302.5h.01M51.7 532.2h.01M738.4 401.7h.01M412.3 365.4h.01M433 212.3h.01M781.9 531.7h.01M840.9 270.1h.01M309.2 463.3h.01M762.2 4.8h.01M316 307h.01M395.5 118.8h.01M408.2 6.1h.01M702.6 578.3h.01M617.3 95.9h.01M648.2 355.9h.01M714.3 428.3h.01M75.5 6.5h.01M97.5 369.3h.01M135.3 136.4h.01M4.9 397.8h.01M65.7 557.9h.01M790.9 485.7h.01M584.1 417.3h.01M602.7 419.5h.01M489.9 505.7h.01M767.7 132h.01M446.6 610.7h.01M877.3 369.8h.01M302.7 485.7h.01M720 492.5h.01M537.9 557.7h.01M284.3 80.7h.01M59.9 194.6h.01M913.1 81.1h.01M348.2 463.4h.01M586.2 309.6h.01M274.9 64.2h.01M871.4 561.6h.01M115.1 467.9h.01M633.3 193.1h.01M573.7 237.1h.01M849.1 268.4h.01M582.3 138.8h.01M92.4 17.5h.01M460.3 141.8h.01M14.7 6.6h.01M553.9 290h.01M136.4 81.1h.01M449.4 115.1h.01M551.2 310h.01M635.1 622.7h.01M520.2 60.9h.01M49.4 409.3h.01M115.9 312.9h.01M237.4 23.9h.01M269.8 394.2h.01M842.2 184.6h.01M168.4 137.3h.01M604 331.4h.01M717.4 23.7h.01M379.2 88.1h.01M249.9 426.6h.01M316.3 118.5h.01M470.4 136.8h.01M807.8 94.6h.01M552.7 165.5h.01M383.9 219.6h.01M650.8 63.2h.01M588.7 114.7h.01M740.5 354.6h.01M275.7 236.1h.01M780.9 479.9h.01M494 142h.01M24.3 205.1h.01M539.7 25.9h.01M313.4 489.4h.01M499.2 54.2h.01M179.3 622.9h.01M517.5 615.8h.01M340 531.2h.01M321 321.4h.01M564.4 65.4h.01M680.9 435.4h.01M823 343.6h.01M550.1 246.4h.01M552.1 280.8h.01M97.1 142.7h.01M87.9 192.8h.01M530.4 48.1h.01M47.9 217.5h.01M487.1 57.5h.01M514.3 210.8h.01M482 321.3h.01M535.9 28.7h.01M683 238.8h.01M496.7 362.6h.01M561.5 523.1h.01M201.5 240.9h.01M879.1 128.4h.01M710.3 401.9h.01M569.8 36.6h.01M236 71.8h.01M433.1 434.2h.01M667.2 155.2h.01M27.2 472.7h.01M82.4 548h.01M690.3 46.5h.01M748.9 632.9h.01M832.4 621.4h.01M533.5 397.7h.01M105.5 238.7h.01M518.6 412.6h.01M946.7 28h.01M391.3 569.4h.01M45.7 346.3h.01M141.7 568h.01M10.7 104.1h.01M658.9 176.8h.01M713.4 326.8h.01M478.4 213.4h.01M392.5 19.4h.01M245.2 59.3h.01M446.6 624.5h.01M23.5 437.9h.01M138.9 322.8h.01M419 216.5h.01M93.5 360.8h.01M707.4 141.6h.01M332.5 208.2h.01M15.9 453.5h.01M620.1 67.9h.01M510.1 480.6h.01M161.4 526.3h.01M900.1 85.6h.01M566.2 55.1h.01M841.1 117.7h.01M387.6 273.1h.01M51 212h.01M829.5 412.4h.01M493.9 350.1h.01M128.2 531h.01M111.5 602.5h.01M269.1 628.7h.01M754.1 622.3h.01M165.9 457.8h.01M331.8 381.7h.01M562 409.5h.01M490.5 146.6h.01M189.3 46h.01M590.4 329.7h.01M910 226.6h.01M700.8 40.1h.01M854.6 197.2h.01M705.2 61.5h.01M396.7 457.5h.01M440 585.5h.01M271.3 274.7h.01M269.1 562.7h.01M178 11.4h.01M66.2 2.8h.01M176.7 260.8h.01M142.1 132.8h.01M634.4 567.7h.01M396.9 414h.01M908.3 556.3h.01M95.6 272.3h.01M368.3 265.5h.01M99.4 432.6h.01M608.5 93.9h.01M349.5 560.7h.01M77.5 224.9h.01M259.9 337.1h.01M751.3 519.8h.01M34.1 138.1h.01M444.2 261.4h.01M562.8 270.6h.01M300.9 375.6h.01M686.1 593h.01M428.6 311.6h.01M371.8 626.7h.01M515.5 437.3h.01M522.4 146.1h.01M91.6 178.5h.01M364.7 337.7h.01M712.2 20.9h.01M407.4 17h.01M783.8 565.2h.01M12.5 613.4h.01M655.2 562.6h.01M407 316.8h.01M81.2 438h.01M870.5 293.7h.01M368.9 277.3h.01M374.3 221.4h.01M650.4 115.6h.01M847.2 634.7h.01M43 524.3h.01M281.9 189.5h.01M182.7 591.9h.01M670.7 587.5h.01M62 438.8h.01M483.3 581.3h.01M671.6 66.1h.01M337 406.5h.01M496.8 363.1h.01M274.4 542.6h.01M358.3 288h.01M564.4 338.1h.01M775.4 180.7h.01M408 65.2h.01M559.3 630.7h.01M418.9 6h.01M455.6 168.6h.01M573.7 590.5h.01M422.7 481.7h.01M280.4 529h.01M87.6 366.3h.01M719 605.8h.01M32.5 495h.01M66.1 20.9h.01M454.7 630.9h.01M392.4 239.5h.01M842.1 9.2h.01M807.1 478.2h.01M392 312.6h.01M469.7 184.4h.01M580 316.6h.01M901.7 319.6h.01M117 585.8h.01M110.3 251.9h.01M896.8 449.6h.01M751.3 537.3h.01M102.2 83.4h.01M159 234.5h.01M674.5 322.8h.01M392.6 628.3h.01M225.8 263.8h.01M464.7 164.8h.01M942.1 73.7h.01M589.7 173.4h.01M744.1 560.1h.01M555.6 325h.01M742.5 184.6h.01M324.2 590.5h.01M147.7 531.2h.01M82.6 85.9h.01M642.4 231.4h.01M220.9 70.1h.01M397.1 609.9h.01M429.2 80h.01M895.1 603.3h.01M554.4 540.7h.01M158.2 8h.01M794.9 238.2h.01M326.8 32.6h.01M372.8 437.6h.01M86.9 408.3h.01M55.6 306.8h.01M266.8 204.4h.01M96.6 441.2h.01M211.6 174.9h.01M334.4 243.4h.01M169.5 90.3h.01M170.6 552.3h.01M335.2 444.5h.01M448.5 23.7h.01M431.2 22.6h.01M598.2 145.3h.01M934.1 210.9h.01M626.7 97.7h.01M855.5 21.6h.01M434.7 7.3h.01M703.2 236.6h.01M0.1 272.3h.01M855.3 204.4h.01M907.3 42.3h.01M324 229h.01M130.2 148.6h.01M259.5 615.4h.01M140.3 167.6h.01M779.3 463.3h.01M847.8 455.7h.01M109.1 221.4h.01M58.6 80.9h.01M421.6 19.5h.01M310.8 6.5h.01M436.6 151.4h.01M588.1 497h.01M535.8 529.4h.01M384.9 358h.01M433.4 118h.01M577 527.5h.01M119.3 239.4h.01M53.5 608.9h.01M528.7 480.3h.01M349.4 95.7h.01M493.3 347.9h.01M933.5 273.9h.01M650.5 588h.01M244.2 385.1h.01M905.7 175.9h.01M147.9 146.3h.01M185.2 80.1h.01M455.9 609.6h.01M497.6 617.9h.01M300.5 275.2h.01M875.4 614.5h.01M918 250.1h.01M604.7 615.6h.01M410.6 185.6h.01M306.3 483.8h.01M706.3 456.1h.01M709.6 438.6h.01M649.5 626.8h.01M472 202.2h.01M586.4 131.7h.01M680.1 341.5h.01M165.3 186.7h.01M880.9 352.3h.01M649.6 134.9h.01M692.7 38.4h.01M213.4 124.2h.01M821.7 205h.01M781.1 425.2h.01M541.3 242.2h.01M339.8 380.8h.01M884.5 181.8h.01M503.1 339.5h.01M793.4 276.9h.01M454.1 370.2h.01M479.3 146.8h.01M307.9 71.1h.01M710 244.8h.01M686.2 460.7h.01M621.8 228.7h.01M368 433.3h.01M16.9 365.1h.01M726.5 45.1h.01M839.7 253.3h.01M528.7 623.5h.01M589.8 498.2h.01M153.8 348.3h.01M306.6 245.7h.01M302.6 567.8h.01M694.8 542.8h.01M175 537.4h.01M119.2 82h.01M626.5 382.4h.01M194.9 195.9h.01M873.8 20.9h.01M241.1 7.4h.01M536.3 286.9h.01M263 522.5h.01M130 618.4h.01M12.2 174.2h.01M15.5 35.8h.01M832.9 3.9h.01M12.2 444.6h.01M483.8 149.2h.01M433.3 344h.01M573 37.1h.01M55 537.5h.01M180.3 391h.01M149.5 73.1h.01M845.9 126.3h.01M128.8 185.8h.01M896.1 91.1h.01M704.7 479.5h.01M869.3 218.6h.01M160.6 435.9h.01M587.9 559.4h.01M618.1 578.5h.01M859.9 267.5h.01M229 510h.01M356.2 337.3h.01M601 540.7h.01M675.6 37.4h.01M369.9 474.9h.01M807.8 65.3h.01M578.4 212.6h.01M940.7 554.7h.01M912.6 208.8h.01M534 339.2h.01M849.2 254.9h.01M491.3 115.8h.01M152.6 242.8h.01M295.3 62.7h.01M93.5 10.5h.01M231.8 231.7h.01M901.9 382.4h.01M56.7 124.6h.01M893 591.6h.01M877.4 481.1h.01M319.4 402.4h.01M171 230.4h.01M269.5 139.2h.01M140.6 175.4h.01M429.2 216.4h.01M7.8 99.1h.01M536.9 19.7h.01M627.2 281.4h.01M55.9 281.9h.01M946.9 119h.01M640.9 528.8h.01M141.3 524.4h.01M390.2 209.3h.01M212.2 461.8h.01M590.3 238h.01M615.2 45.9h.01M559 508.4h.01M693.4 86h.01M376.9 241.9h.01M482.3 290.5h.01M133.5 144.6h.01M524.6 463.7h.01M242.6 75.2h.01M803.7 91.4h.01M938.9 513.8h.01M766.7 554.6h.01M723.6 35.8h.01M615.3 117.5h.01M51.2 333.6h.01M243.7 182.7h.01M881.5 527.4h.01M29.2 531.1h.01M553.4 134.6h.01M124.1 308.3h.01M616 236.6h.01M698 595.8h.01M927.7 195.2h.01M160.4 413.6h.01M596.5 28.9h.01M149.3 475.5h.01M530.1 8h.01M861.2 282.3h.01M158.5 284.6h.01M909 118h.01M530.2 301.3h.01M803.9 52.9h.01M828.2 405h.01M438 419.7h.01M144.9 191.4h.01M752.4 7.8h.01M25.8 320.1h.01M796.6 629.3h.01M486.8 199.6h.01M260.7 305.3h.01M913 245.3h.01M646.7 520.4h.01M17.8 269h.01M888.8 99.5h.01M111 291.7h.01M476.8 170.9h.01M533.8 196.9h.01M214.5 75h.01M922.9 386.9h.01M339.3 31.4h.01M804.3 167.2h.01M383.5 632.8h.01M943.7 163.2h.01M649.2 32.9h.01M124.8 304.8h.01M657.2 200h.01M505.2 409.1h.01M690.7 231.6h.01M440.8 234.2h.01M116.1 626.7h.01M499.6 544.9h.01M476.5 276.6h.01M131.3 442.2h.01M814.1 529.1h.01M439.4 279.6h.01M601.5 426.3h.01M222.5 302.5h.01M467 508.3h.01M791.6 164.7h.01M238.2 124.2h.01M906.4 417.4h.01M772.5 285.4h.01M240.8 219.8h.01M940.3 567.2h.01M287.8 256.4h.01M148.6 150.5h.01M892.1 392.9h.01M304.4 599.9h.01M274.8 304.7h.01M217.5 211.4h.01M265.6 273.2h.01M62.1 187.1h.01M622.5 31.9h.01M644.6 310.7h.01M53.4 267.8h.01M238.4 239.1h.01M333.2 338.9h.01M429.6 31.2h.01M419.4 53.3h.01M560.5 613.3h.01M447.9 115.8h.01M624.7 163.4h.01M655.2 21.6h.01M574.7 269.5h.01M322.6 47.7h.01M536.7 157.4h.01M660 110h.01M219.8 202.5h.01M235.4 25.1h.01M550.5 632.3h.01M187.5 634.4h.01M553.7 3.4h.01M30.4 198.2h.01M102.6 342.3h.01M535.8 110.5h.01M138.6 170h.01M319.3 479.3h.01M934.9 409.9h.01M481.5 163.2h.01M705.9 64.8h.01M69.1 321.6h.01M533.4 233h.01M923.8 480.1h.01M266.1 436.1h.01M384.3 198.4h.01M948.4 392.4h.01M399.7 247.5h.01M945.4 208.1h.01M465.4 142.3h.01M307.5 224.7h.01M715 393.9h.01M581.8 584.2h.01M916 345.3h.01M187.1 152.5h.01M418.6 387.7h.01M1.8 555.9h.01M225.7 91.3h.01M683.6 251.3h.01M632.1 172.9h.01M489.9 578.2h.01M44.8 408.7h.01M925.8 383.3h.01M274.8 20.1h.01M521.8 355.6h.01M708.4 202.2h.01M198.6 60h.01M308.3 423.8h.01M801.8 142h.01M923.6 571.8h.01M38.1 325.2h.01M42.3 201.6h.01M393.9 447.9h.01M908.1 290.4h.01M875.2 31.2h.01M894.8 278.1h.01M847.9 622.4h.01M372.6 435.9h.01M58.6 192.6h.01M874.3 553.3h.01M75.8 286.9h.01M931 209.8h.01M833.4 379.5h.01M186.1 418.3h.01M529.6 561.4h.01M585.9 609.5h.01M81.8 474.5h.01M594.4 340.5h.01M184 456.7h.01M207 16h.01M836.5 11.1h.01M87.5 367.9h.01M333.2 279.9h.01M159.4 93.6h.01M911.3 108h.01M674 344.1h.01M638 185.7h.01M919.6 4.2h.01M460.4 506.9h.01M593.2 156.6h.01M907.1 48.7h.01M942.9 314h.01M261.6 522.9h.01M806 378.6h.01M921 303.6h.01M391.3 458.3h.01M296.3 540h.01M897.4 484.5h.01M486.7 283.5h.01M138.9 379.2h.01M576.1 586.2h.01M683.3 256.9h.01M93.3 383.5h.01M289.3 325.8h.01M398.5 53h.01M468.3 535.7h.01M120.1 12.4h.01M804.6 374.9h.01M278.1 540.2h.01M749.2 111.8h.01M12.5 379.5h.01M530.2 346.3h.01M785.5 323.5h.01M702 232.9h.01M388.3 593.7h.01M419.7 581.5h.01M509.8 572.5h.01M4.7 362.1h.01M84.4 285.1h.01M292.5 346.3h.01M362.9 574.2h.01M765.7 402.4h.01M196.8 115.6h.01M497.2 318.6h.01M172.4 189.7h.01M545.7 266h.01M585.4 130.3h.01M177.8 382.4h.01M588.9 499.7h.01M945.6 495.2h.01M471.6 71.3h.01M837.7 72.8h.01M876.3 167.6h.01M736.3 390.4h.01M623.5 428.5h.01M632.6 421.3h.01M382.3 441.1h.01M546.4 300.3h.01M823.9 113.6h.01M670.3 376.7h.01M641.5 496.8h.01M893.3 282.1h.01M247.9 327.9h.01M560.4 559.2h.01M426.4 571.6h.01M123.8 525.5h.01M378.5 169.1h.01M756.1 414.4h.01M419.3 48.4h.01M482.2 266.6h.01M230.8 388.4h.01M677.1 9.3h.01M827.5 234.7h.01M938.3 134.4h.01M400.1 569.6h.01M439.2 443.1h.01M694.8 304h.01M65.3 214.2h.01M362.8 409.8h.01M496.1 150.4h.01M225.4 399h.01M209.4 125.7h.01M258.3 610.5h.01M526.7 440.1h.01M225.6 540.5h.01M267.8 193h.01M879.2 212.5h.01M415.7 156.6h.01M367.3 123h.01M582.9 271.2h.01M780 471.5h.01M795.6 136.3h.01M91.4 6.7h.01M463.2 323.3h.01M728.9 496.9h.01M734.2 38.3h.01M671.9 577.5h.01M61.8 62.5h.01M91.9 88.2h.01M774.5 248.6h.01M708.9 187.1h.01M366.1 495.8h.01M241.1 264.1h.01M32.1 523.1h.01M56.2 529.4h.01M482.3 221.8h.01M221.3 296.5h.01M717 340.3h.01M662.9 613.1h.01M530.3 67.2h.01M131.3 336.8h.01M86.3 433.8h.01M152.5 188.7h.01M205.3 538.2h.01M899.2 238.3h.01M525.7 443.3h.01M820.2 504.2h.01M553.8 441.3h.01M627.1 92.8h.01M783.6 433.5h.01M843.9 504h.01M253.7 273.4h.01M263.9 462.4h.01M793.8 272h.01M28.6 494.5h.01M539.4 514.9h.01M113.8 258.4h.01M49 548h.01M689.4 340.8h.01M808.4 421.4h.01M867.1 155.1h.01M414.3 339.7h.01M323.6 395.2h.01M625.5 206h.01M706.4 381.6h.01M748.8 554.2h.01M466.3 238h.01M575.9 606.7h.01M120 307h.01M749.7 413.9h.01M288.6 423.1h.01M94.7 20.7h.01M12.2 46h.01M818.4 583.4h.01M902.5 492.1h.01M489.3 407.6h.01M83.1 226.1h.01M910.9 74.4h.01M894 223.5h.01M793.5 569.3h.01M812.4 530.5h.01M107.6 171.4h.01M290.8 600.3h.01M651.8 55.8h.01M609.5 49.4h.01M640.3 86.7h.01M537.7 132h.01M711.4 294.1h.01M48.8 82h.01M930.9 72.2h.01M641.7 9.1h.01M552.1 511h.01M60.4 7.9h.01M478.7 408.4h.01M485.9 479.7h.01M356.7 206.6h.01M411.1 602.9h.01M566.7 317h.01M460.6 92.8h.01M700 287.8h.01M426 541.9h.01M250.8 170.2h.01M731.2 106.6h.01M194 499.3h.01M402.8 357.5h.01M286.1 338.1h.01M212.2 279h.01M266.2 96.4h.01M802 45.5h.01M894.6 577.5h.01M98.9 306.8h.01M475.1 551.5h.01M195.5 50.1h.01M749.5 373.3h.01M113.8 240.9h.01M482.3 570.4h.01M632.9 361.2h.01M175.8 274.1h.01M287 457h.01M170.5 71h.01M208.6 559.6h.01M941 38.6h.01M421.5 164.7h.01M763.1 170.6h.01M302.7 124.4h.01M479.5 200.6h.01M116.3 155.7h.01M446.6 488.6h.01M376.3 392.6h.01M74.5 429.4h.01M480.5 298h.01M824.4 258.7h.01M39.3 573.2h.01M791.8 234h.01M66 141.9h.01M428.7 623.9h.01M568.2 113.7h.01M725.1 294.1h.01M10.5 617.8h.01M383.5 556.4h.01M931.7 206.8h.01M191.5 167.7h.01M551.7 556.1h.01M226.9 322.3h.01M740 34.2h.01M12.3 373.4h.01M85.6 316h.01M225.7 53.4h.01M186.9 543.7h.01M928.8 291.1h.01M184.6 385.7h.01M833.9 437.5h.01M174 625.4h.01M843.7 7.2h.01M79.8 108.6h.01M2.3 600.4h.01M877 465.8h.01M131.7 610.5h.01M902.8 602h.01M172.2 152.5h.01M338.3 255.1h.01M304.9 593h.01M794.2 109.4h.01M254.8 212.4h.01M866.6 152.6h.01M795.5 355.7h.01M275.8 477.2h.01M200.4 133.1h.01M259.9 433.3h.01M434.4 85.3h.01M412.5 268.2h.01M522.8 613.4h.01M33.1 322.2h.01M14.8 184.3h.01M146.5 80.3h.01M389.6 562.5h.01M122.5 577.1h.01M750.5 83.2h.01M343.7 116.7h.01M141.9 182.1h.01M421.2 571.5h.01M541.9 33h.01M252.5 223.8h.01M851.9 363.4h.01M821.7 72.6h.01M763.1 527.9h.01M859.4 55.7h.01M750.4 632.6h.01M936 475.1h.01M434.1 68h.01M855 619.4h.01M116.4 502.4h.01M108.5 486.1h.01M207.1 359.4h.01M737.6 270h.01M196.1 6.8h.01M600.9 268.8h.01M354.2 102.1h.01M251.4 481.5h.01M217.6 333.2h.01M549.2 304.5h.01M399.7 225.9h.01M190.5 636.4h.01M304.5 514.4h.01M447 346.2h.01M572.5 220.5h.01M280.1 354.8h.01M12.9 264.9h.01M857.7 213.7h.01M815.3 597.2h.01M863.9 584.1h.01M817.5 491.5h.01M72.3 431.9h.01M810.2 607.5h.01M444.8 236.4h.01M920.8 369.2h.01M608.8 382.5h.01M443.6 495.4h.01M731.6 516.8h.01M353.4 552.5h.01M552.4 409.4h.01M687.7 465.5h.01M877.4 288h.01M33.4 310.4h.01M732.6 476.5h.01M232.2 533.9h.01M890.4 634.9h.01M417.1 394.3h.01M295.7 471.5h.01M335.2 8.2h.01M261.7 246.3h.01M197.3 84.3h.01M624.4 557.4h.01M204.3 463h.01M367.7 137.4h.01M32.7 394.4h.01M751.1 565.2h.01M428.5 301.8h.01M236.2 175.2h.01M684.9 185.9h.01M298.7 631h.01M145.5 86.9h.01M703.5 392.5h.01M628.8 303.4h.01M27.5 509.7h.01M915.5 206.3h.01M792.3 452.2h.01M400.9 236.1h.01M553.5 498.9h.01M237.6 357h.01M174.3 516.6h.01M704.9 133.2h.01M927.5 522.9h.01M252.6 377.2h.01M620.2 200.5h.01M763.1 634.2h.01M329.2 124.1h.01M786.6 294.9h.01M382.6 584h.01M267.9 377.5h.01M629.3 600.1h.01M42.8 338.2h.01M433.6 237.8h.01M756.3 68.2h.01M799.1 371.6h.01M754.3 5.4h.01M932.1 309.5h.01M623.5 563.5h.01M797 64.6h.01M595.1 356.5h.01M592.6 488.1h.01M212.3 426.4h.01M391.9 536.2h.01M193.2 336.3h.01M254.8 440h.01M404.1 634.9h.01M272.3 627.9h.01M333.1 475.9h.01M736.2 388.4h.01M311.4 483.6h.01M714.1 178.3h.01M222 627.6h.01M306.3 462.8h.01M847.9 64.1h.01M746.8 430.8h.01M543.4 481.8h.01M699.5 437.5h.01M93.1 67.7h.01M924.4 58.1h.01M296.5 368.1h.01M619.6 313h.01M716.8 260h.01M758 522.3h.01M96.3 636h.01M766.3 434h.01M205.1 243.6h.01M701.7 403.2h.01M80.9 612h.01M547.6 472.5h.01M526.1 474.5h.01M894.4 573.6h.01M664.4 244.3h.01M203.7 178.9h.01M697.4 349.7h.01M414.5 270.3h.01M735.8 133.6h.01M177.5 571.9h.01M718.6 204.6h.01M752.1 387.5h.01M367.6 593.1h.01M42.7 332.3h.01M195 424.1h.01M551.8 35.6h.01M680.5 593.3h.01M220.4 361.2h.01M26.9 66.6h.01M204.5 8.3h.01M831.3 134h.01M291.5 219.3h.01M115.2 327.6h.01M920.9 220.6h.01M634 35.9h.01M12.8 54.1h.01M865.3 55.5h.01M180.1 166.2h.01M756.8 173.8h.01M44.9 273.4h.01M859.1 519.1h.01M778.2 493.7h.01M881.1 18.8h.01M14 512.4h.01M744.5 287.7h.01M168.7 372h.01M656.5 319.7h.01M142.4 525.4h.01M249.8 555.4h.01M330.2 485.1h.01M555.2 300.8h.01M924 445.3h.01M251.4 551.4h.01M326 244.7h.01M851.2 152.3h.01M131.5 596.5h.01M86.3 161.6h.01M584.3 226.5h.01M298 224h.01M479.3 317.4h.01M278.7 628.9h.01M469.6 286.5h.01M705.1 59.9h.01M362.6 116h.01M619.9 178.2h.01M634.4 387.9h.01M748.3 583.4h.01M531.6 522.1h.01M894.1 446.8h.01M671.5 15h.01M764.7 293.1h.01M828.8 174.5h.01M658 346.9h.01M911.6 367.9h.01M431.5 349.2h.01M724.5 370.3h.01M647.4 172h.01M780.4 158h.01M827.1 408.3h.01M365.5 93.3h.01M802.9 327.9h.01M657.4 201.3h.01M795.1 476h.01M396.3 231.4h.01M658.5 227.5h.01M82 70.5h.01M572.5 74.3h.01M790.9 571.2h.01M85 95.5h.01M489.6 259.4h.01M488.4 362.1h.01M253.4 374h.01M627.1 109.2h.01M318.1 620.5h.01M340.6 315h.01M388.8 205h.01M99.3 382.6h.01M784.2 494.7h.01M656.9 262.5h.01M658 619.8h.01M204.8 273.7h.01M942.9 619.8h.01M224.9 454.4h.01M225.5 551.9h.01M299.3 89.4h.01M185.9 482.4h.01M325.8 603.2h.01M448.7 564.5h.01M604.3 592.2h.01M505.5 473.4h.01M630.1 173.2h.01M869 499.7h.01M541.4 378.6h.01M798.2 395.8h.01M245.8 182h.01M495.6 296.1h.01M501.8 571.4h.01M411.2 142.2h.01M939.1 452.8h.01M157 45.5h.01M633.2 249.5h.01M532.5 398.8h.01M134.7 174.1h.01M745.4 290.4h.01M481.9 613.8h.01M323.5 565.5h.01M297.4 332.9h.01M582.3 633.8h.01M548.6 487h.01M848 246.4h.01M199.6 210.2h.01M467.3 80.8h.01M810.7 101.1h.01M269.4 190.1h.01M84.6 612.2h.01M207.4 187h.01M317.6 346.9h.01M357.7 20.4h.01M948 436h.01M452.6 168.9h.01M379.7 630.7h.01M317.3 376h.01M151.3 301.4h.01M849.3 567.3h.01M214.3 419.9h.01M920.8 520.7h.01M874.7 39h.01M890 296h.01M254.9 139.2h.01M86.9 403.5h.01M919.4 441.2h.01M631 36.3h.01M781.6 350.1h.01M180.8 266.8h.01M220.5 386.2h.01M844.5 136.7h.01M758.1 240.4h.01M662.7 159.8h.01M36.6 93.6h.01M652.8 69.7h.01M877.3 526.7h.01M410.4 406.2h.01M197.6 82.6h.01M661.9 389.6h.01M499 336.3h.01M325.2 362.7h.01M766.7 469.7h.01M353.2 15.6h.01M587.7 273.6h.01M344.4 110.9h.01M577.3 471.7h.01M673.7 344.4h.01M137.7 472.2h.01M132.6 39h.01M619.4 91.1h.01M375.9 295.4h.01M598.1 185.5h.01M226.6 62.3h.01M576.8 29.6h.01M227 45.6h.01M836.6 360.7h.01M178.6 572.8h.01M919.3 219.1h.01M467.1 397.2h.01M903.6 354.8h.01M180.7 250.2h.01M868.7 330.3h.01M785.2 237.8h.01M581.6 388.8h.01M931.1 504.6h.01M221.5 518.1h.01M670.1 197.6h.01M802.9 310h.01M636.8 616.6h.01M494.5 107.2h.01M693.6 215.3h.01M359.1 128.5h.01M325.8 146.3h.01M627.2 452.5h.01M281.2 489.6h.01M44.5 446.5h.01M721.3 310.1h.01M512.2 535.2h.01M280.6 593h.01M35.7 226h.01M241.5 411h.01M929.3 40.4h.01M237.8 155.3h.01M402.2 634.9h.01M71.2 552.3h.01M809.7 67.4h.01M419.8 503.6h.01M344.6 185.7h.01M198.7 309.2h.01M4.3 200.1h.01M680.6 158.1h.01M749.4 589.3h.01M289.5 145.6h.01M510.9 590.7h.01M583.5 605.7h.01M251.5 301h.01M941.9 27.2h.01M282.3 337.2h.01M287.1 535.7h.01M679 308.7h.01M892.4 304.2h.01M200.7 29h.01M618.9 537.8h.01M151.9 126h.01M528.1 79.9h.01M140.8 367.7h.01M177.1 102.5h.01M211.4 514.2h.01M560 400.2h.01M840.7 484.9h.01M188.3 53.1h.01M158 284.6h.01M242.6 551.8h.01M294.8 524.7h.01M248.6 476h.01M89.4 619h.01M140.1 196.8h.01M326.4 317.7h.01M810.8 274.9h.01M349.2 389.8h.01M685.6 448.8h.01M833 32.7h.01M650 207.6h.01M75.1 38.3h.01M930.4 382.7h.01M736 540.9h.01M901.3 128.6h.01M195.6 599.6h.01M369.2 365.5h.01M802.3 34.3h.01M552.2 189.6h.01M584.3 361.3h.01M185.9 293.2h.01M271.3 38.8h.01M756 78.6h.01M755.9 5h.01M171 236.5h.01M251.1 587.5h.01M50.1 599.6h.01M924.8 296.9h.01M239.6 507.5h.01M661.5 451.3h.01M700.9 54.2h.01M420.8 628.6h.01M684.3 475.9h.01M819.6 586.2h.01M463 166.7h.01M297.1 636h.01M64.1 228.3h.01M935 628.3h.01M875.9 146.3h.01M430.8 397.5h.01M320.9 216.6h.01M849 556.7h.01M792.7 510.4h.01M794.5 395.7h.01M644.1 128.8h.01M246.9 612.4h.01M12.3 435.1h.01M570.3 532.2h.01M47.8 151.1h.01M188.2 328.5h.01M272.6 518.8h.01M715.8 305h.01M422.9 177.1h.01M548.6 597.7h.01M523.1 444h.01M614.4 425.5h.01M640.3 421.8h.01M563.5 549.7h.01M321.3 468.8h.01M947.2 392.3h.01M181.2 475.1h.01M588.8 395.9h.01M799.1 598h.01M122.5 419.5h.01M635.9 395.1h.01M433.1 559.9h.01M931 55.7h.01M155.2 460.9h.01M619.1 390.2h.01M710.1 372.1h.01M339.6 66.1h.01M392.7 256.8h.01M537.3 504.6h.01M581.6 38.4h.01M543.6 607.4h.01M604.7 354.4h.01M345.4 130.2h.01M189.6 53.5h.01M862.6 108.2h.01M817.6 387.5h.01M546.2 52.9h.01M307.8 506.5h.01M846.5 597.5h.01M703.9 81.4h.01M682.7 228.3h.01M685.2 548.8h.01M568.9 442.5h.01M360.7 32.1h.01M539.1 149.9h.01M212.1 305.1h.01M625.7 549.4h.01M656.1 263.2h.01M186 448.5h.01M261.3 326.6h.01M42.3 275.8h.01M591.3 320.3h.01M462.2 37h.01M699 368.4h.01M417.5 167.4h.01M499.9 249.8h.01M590.9 149.5h.01M633.4 295.9h.01M557.1 233.6h.01M692.5 158.8h.01M355.2 202.8h.01M474.5 113.2h.01M452.5 224.5h.01M479.4 153.6h.01M604.9 12.2h.01M541.6 274.4h.01M517.3 77.1h.01M244.6 174.6h.01M617 237.6h.01M227.1 533.4h.01M581.3 224.4h.01M846.6 338.8h.01M684.8 215.7h.01M448.7 515.1h.01M303.5 249.7h.01M456.2 297.2h.01M655.6 103h.01M394.7 235.5h.01M458 318.7h.01M417.1 346.4h.01M720.1 395.7h.01M257.4 381.5h.01M14 125.3h.01M492.6 408.6h.01M721.6 505.4h.01M190.6 378.7h.01M837.5 135.5h.01M481.7 265.4h.01M351.7 296.6h.01M377.6 195h.01M384.7 105.9h.01M586.7 538.8h.01M502.1 142.6h.01M577.1 282.6h.01M426.2 378.2h.01M534.9 311.3h.01M215 335.5h.01M869.5 469h.01M723.7 113.7h.01M40.1 234.7h.01M407.7 394.9h.01M490.7 446.2h.01M652.7 277.4h.01M627.7 338.3h.01M504.2 443.5h.01M416.3 458.7h.01M602.6 457.4h.01M571.4 327.3h.01M822.8 573.3h.01M399.8 626.7h.01M304.1 224.4h.01M623.5 474h.01M594.4 151.2h.01M664.8 227.7h.01M350.8 314.7h.01M601.3 350.1h.01M876.4 403.6h.01M296 378.9h.01M624.1 268.6h.01M754.8 561.8h.01M761.6 59h.01M911.8 345.2h.01M233.8 222.9h.01M673.6 384h.01M384 281.4h.01M410.1 490.8h.01M731.5 277.7h.01M430.3 156.3h.01M793.4 346.3h.01M444.6 417.4h.01M337.9 230.5h.01M419 131.7h.01M449.4 104.9h.01M75.7 166.6h.01M525 444h.01M194.7 182.7h.01M765.9 418.2h.01M515.4 402h.01M564.5 249.2h.01M698 491.1h.01M866.8 296.9h.01M76.1 180.2h.01M188.8 374.3h.01M564.1 485h.01M707.5 601.5h.01M454.4 483.7h.01M697.5 406.5h.01M576.9 270.3h.01M374.4 318.4h.01M259.7 51.6h.01M889.4 221h.01M895.8 243.1h.01M592.4 77.7h.01M328 473.5h.01M682.7 464.6h.01M567.2 484.7h.01M343.4 636.8h.01M557.6 172.8h.01M495.2 101h.01M602.2 338.4h.01M30.1 99.1h.01M235 520.4h.01M660.9 474.2h.01M480.2 390.1h.01M463.5 286.6h.01M605.8 144.4h.01M485.2 357.7h.01M142.1 394.7h.01M204.3 318h.01M861 358.7h.01M495.5 326.2h.01M271 68.7h.01M502.8 328.9h.01M385.2 17h.01M422.7 376.6h.01M586.5 312.7h.01M187.6 627.3h.01M337.2 430.5h.01M493.8 367.1h.01M579.3 486.2h.01M277.6 430.4h.01M619.5 173.2h.01M843.8 229.6h.01M482.5 466h.01M359.3 179.4h.01M359 260.4h.01M672.3 10.3h.01M83.9 426h.01M478.9 366.3h.01M552.7 426.1h.01M278.2 241.3h.01M332.5 327.4h.01M671.4 169.3h.01M903.7 508.1h.01M166.8 336.6h.01M732.6 108.6h.01M374.5 339.5h.01M350.5 290.6h.01M341.2 361.7h.01M535.6 212.1h.01M195.2 89.1h.01M359.1 482h.01M849.3 563.3h.01M336.6 597.2h.01M547.1 450.8h.01M186.1 277.3h.01M466.8 373.6h.01M276.6 369.5h.01M217.6 332h.01M717.1 279.6h.01M186.2 290.4h.01M627.2 238.1h.01M637.2 603.4h.01M431.8 203.9h.01M581.8 227.8h.01M626.3 232.4h.01M434.3 130.9h.01M273.6 299.4h.01M402.4 274.4h.01M825.2 428.5h.01M498.8 196h.01M507.2 143.6h.01M884.7 564.4h.01M423.5 152.1h.01M558 207.9h.01M433.1 347.1h.01M608.8 294.7h.01M100.1 86.3h.01M480.2 259.4h.01M850.2 88.5h.01M188 108.6h.01M352.1 270.5h.01M534 259.4h.01M912.9 508.6h.01M622.7 158.9h.01M685.8 182.5h.01M220.6 470.1h.01M435.8 274.7h.01M525.2 338.8h.01M402.9 290.6h.01M444.7 407.6h.01M680.6 460.1h.01M344 37.5h.01M725.1 330.7h.01M938.4 442.5h.01M225.7 476h.01M698.3 420.8h.01M621.5 360.8h.01M550.1 334.2h.01M442.1 99.7h.01M247.5 210.4h.01M755.9 246.3h.01M472.3 494.7h.01M862.5 490.7h.01M162.3 154.4h.01M564.5 419.3h.01M462.3 510.7h.01M540.7 54.9h.01M362.6 495.2h.01M681.4 327.4h.01M552.7 423.6h.01M543.2 213.6h.01M147.2 234h.01M484.2 200.6h.01M215.6 78.1h.01M398.5 260.4h.01M411.8 498h.01M489.4 359.5h.01M569.7 295.4h.01M512.7 234.5h.01M553.6 488.7h.01M448 307.3h.01M677.3 348h.01M332.1 496.1h.01M221.2 588.4h.01M856.5 431.2h.01M121.1 134.9h.01M270.1 592h.01M631.4 372.9h.01M436 327.2h.01M341.8 312.8h.01M468 635.8h.01M735 159.6h.01M666.9 214.4h.01M370.4 265.6h.01M500.5 312.7h.01M305.2 277.9h.01M786.4 87.3h.01M739.9 233.9h.01M333 624.4h.01M540.3 30.3h.01M216.7 196.7h.01M454.4 298h.01M598.2 230.3h.01M404.1 89.7h.01M783.7 55.8h.01M456.2 347.9h.01M516.9 580.6h.01M709.9 172.5h.01M393 58.5h.01M493.2 18.1h.01M800.7 441h.01M548.9 144.5h.01M501 195.6h.01M637.5 380.9h.01M593.5 70.8h.01M497.5 285.8h.01M65.7 602.7h.01M291.1 398.8h.01M386.7 392.4h.01M126.4 368h.01M583.9 441.9h.01M664.3 317.1h.01M526.6 86.3h.01M429.7 594.7h.01M376 448.7h.01M298.4 9.8h.01M617.6 445.2h.01M775 573.6h.01M524.1 357.7h.01M537.5 183.3h.01M698.2 415.5h.01M473.8 287h.01M927.8 255.8h.01M264.7 126.8h.01M522.6 153.5h.01M744.5 197.2h.01M748.1 305.3h.01M653.2 319.7h.01M262.5 432h.01M917 272.5h.01M161.1 13.5h.01M414.7 183.9h.01M863.4 354.8h.01M858.6 374.1h.01M553.2 335.1h.01M111.7 636.5h.01M356.5 24.6h.01M568.5 257.9h.01M425.4 308.7h.01M374.4 416.8h.01M326.5 83.6h.01M460.4 274.2h.01M219.9 583.2h.01M757.2 292.3h.01M551 247.2h.01M399 549h.01M309.5 287.8h.01M170.8 348.5h.01M358.8 266.7h.01M606.9 308.1h.01M689.1 225.6h.01M786.8 172.6h.01M278.6 479.4h.01M341.9 509.3h.01M658.1 222.1h.01M859.4 173.6h.01M590.9 350.6h.01M911.9 46h.01M545.9 352.2h.01M472.9 284.3h.01M693.6 339.3h.01M374.1 247.7h.01M804.7 561h.01M789.4 168h.01M600.7 454.6h.01M348 518.1h.01M553.7 348.6h.01M889.9 147.1h.01M831.1 296.6h.01M362.4 107.5h.01M499 300.7h.01M670.1 377.8h.01M357.4 265.7h.01M136.2 157.1h.01M447.3 195.2h.01M533.2 252.2h.01M566.6 348.8h.01M661.8 212.6h.01M562.5 140.9h.01M190 448.3h.01M565.8 315.2h.01M494.5 385.8h.01M487.3 281.8h.01M538.9 307h.01M674.5 64.9h.01M519.2 260.6h.01M305.4 90.1h.01M566.4 392.8h.01M322.1 525.2h.01M367.4 273.8h.01M476.1 298.7h.01M632 241.5h.01M539.9 270.4h.01M333.8 502.9h.01M655 457.1h.01M505.3 304.8h.01M226.2 576.9h.01M429.5 231h.01M400.9 600.1h.01M442.8 213.8h.01M719.8 238.4h.01M916.1 324.6h.01M424.1 67.1h.01M236.1 304.9h.01M853.2 114.1h.01M466.4 235.3h.01M351.3 301.6h.01M424 352.9h.01M447.9 26.6h.01M698.3 313.3h.01M637.9 451.1h.01M584.1 460.2h.01M514.9 299.5h.01M286.4 498.8h.01M430.5 182.2h.01M682.6 283.9h.01M725.8 315.9h.01M512 198.7h.01M396.7 483.2h.01M370.6 265.4h.01M659.6 391.2h.01M202.8 160.7h.01M325.4 94.8h.01M449.8 229.7h.01M720.3 356.1h.01M881 403.4h.01M347.3 135.1h.01M364.3 299.9h.01M267.5 23.7h.01M390.6 218.8h.01M479 80.1h.01M520.6 518.7h.01M447.3 202.6h.01M561.4 325.9h.01M300 62.5h.01M354.3 130.4h.01M382.6 257h.01M594.1 527.9h.01M615.2 60.1h.01M457.3 345.9h.01M444.1 406.4h.01M432.2 293.6h.01M621.2 366.5h.01M544.7 488.1h.01M453.5 225.8h.01M513.9 313h.01M661.4 355.4h.01M145.5 62.9h.01M768.9 115.3h.01M473.2 312.6h.01M890.7 72.1h.01M587 69.7h.01M899.2 530.3h.01M419.4 369.4h.01M295.7 156.1h.01M482.1 278.1h.01M587.5 428.3h.01M371.8 322.3h.01M919.7 452h.01M550.8 457.2h.01M618.5 250.6h.01M614.6 280.2h.01M712.7 241.2h.01M445.9 175.9h.01M537.8 343.7h.01M659.8 335.5h.01M650.7 529.6h.01M461.4 268.9h.01M225.4 333.5h.01M220.6 559.7h.01M276.8 203.3h.01M770.6 286.1h.01M153.4 222.1h.01M338.8 276.9h.01M487.5 506.1h.01M539.9 134.7h.01M363.4 622.2h.01M399.4 431.9h.01M522 345h.01M322.3 431.5h.01M484.2 361.8h.01M661.8 428.6h.01M442.5 353.2h.01M665.3 244.7h.01M690.9 433.9h.01M514.1 282.3h.01M239.2 235.3h.01M743.6 463.7h.01M859.8 495.8h.01M512.3 404.1h.01M478.5 323.3h.01M633 199.9h.01M833 149.2h.01M466.5 233.7h.01M249.1 238.9h.01M348.7 444.7h.01M415.5 122.1h.01M586.4 377h.01M570.1 407.1h.01M579.8 414.5h.01M169.9 116.7h.01M445.7 329.7h.01M944.9 531.1h.01M121.1 331.9h.01M227.5 375.1h.01M684.4 536.9h.01M455.4 321.7h.01M529.7 507.8h.01M929 369.7h.01M918.2 82.3h.01M495.1 498.3h.01M557.4 444.2h.01M666.4 33.1h.01M941.2 139.4h.01M553.3 344.5h.01M746.8 610h.01M424.3 257h.01M742.6 317.9h.01M557.8 232.7h.01M237.9 550.3h.01M486.3 205.9h.01M223 586.2h.01M556.5 163.1h.01M223.4 228.2h.01M715.4 357.7h.01M446.5 515.9h.01M697.4 582.4h.01M491 607.9h.01M25.4 551.5h.01M781.3 269h.01M478 404h.01M534 155.6h.01M674.4 141.9h.01M905.5 54.9h.01M479.3 535.8h.01M661.3 591.8h.01M456 201.5h.01M243.2 109.3h.01M544.5 125.4h.01M441.6 26.9h.01M671 490.2h.01M547.3 149.6h.01M661.5 36.7h.01M151.8 372.1h.01M312.4 539.5h.01M401.7 294.2h.01M534.1 179.4h.01M611.3 469.1h.01M485.7 304.2h.01M314.7 336.4h.01M598.3 596.3h.01M307 79.9h.01M625.6 487.5h.01M512.1 166.7h.01M536.2 526.8h.01M487.7 188.2h.01M570 260.6h.01M810.6 209.8h.01M656.7 73.8h.01M548.5 358.1h.01M442.7 359.9h.01M588.8 339.7h.01M312.6 340.7h.01M46.1 266h.01M569.3 242.4h.01M624.6 374h.01M600.3 293.4h.01M1.2 290h.01M733 116.8h.01M319.4 552.4h.01M899.1 394.8h.01M555.2 216.2h.01M739.2 143.4h.01M553.3 215.4h.01M148.4 194.6h.01M622.1 110.4h.01M116.4 539.1h.01M579.5 214h.01M91.6 501.1h.01M308.8 410.9h.01M544.1 145.1h.01M733 294.8h.01M445 96h.01M392.5 354.8h.01M609.4 544.8h.01M177.4 133.5h.01M727.5 320.9h.01M442.4 543.6h.01M198.3 391.1h.01M417.8 175.3h.01M545.2 573.1h.01M568.1 394.5h.01M748.3 526.6h.01M533.2 222.4h.01M54.3 265.6h.01M476.7 447.3h.01M462.4 347.2h.01M553.6 216.8h.01M769.3 334.8h.01M450.9 200h.01M372.7 220.4h.01M608.8 32.9h.01M509.1 232h.01M755.9 571.1h.01M528.5 221.7h.01M116.5 415.3h.01M372.7 296h.01M724.9 45.8h.01M631.7 168.1h.01M412.9 210.5h.01M798.6 110.3h.01M346.4 285.6h.01M699.5 439.4h.01M462.4 311.6h.01M544.3 216.2h.01M598.4 459.8h.01M683.3 316.7h.01M490.6 563.5h.01M316.5 277.4h.01M42.3 373.2h.01M233.8 146.3h.01M489.5 331.9h.01M482.2 356h.01M381.6 149.8h.01M878.1 570.8h.01M667.3 145.3h.01M376.1 239.6h.01M449.8 264.7h.01M312.2 66.5h.01M522.2 358.4h.01M684.1 343.7h.01M81.5 169.1h.01M271.6 392.6h.01M615.4 288.8h.01M451.2 66.3h.01M163.7 289.8h.01M406.8 387.7h.01M373.2 296.7h.01M597 281.9h.01M171.5 312.3h.01M584.4 317.7h.01M293.9 277.2h.01M635.6 224.5h.01M495.4 473.6h.01M358.6 406.2h.01M207.7 304.1h.01M414.3 335.1h.01M74.4 190.2h.01M640.4 515.7h.01M436.7 170.3h.01M462.5 230.3h.01M579.6 521.5h.01M600 213h.01M539.7 191.4h.01M303.5 43.8h.01M620.6 206.3h.01M655.7 435.7h.01M686.2 232.9h.01M596.5 68.3h.01M476.2 232.6h.01M514.2 327.7h.01M305.8 371.8h.01M930.7 540.9h.01M890.7 483.9h.01M376.6 284.2h.01M451 374.2h.01M538.4 510.2h.01M908 370.9h.01M907.9 42.3h.01M616.4 289.8h.01M594.3 343.4h.01M695.3 78.5h.01M356.3 233.5h.01M531.1 236.6h.01M436.7 109h.01M328.9 189.9h.01M401.5 280h.01M564 480.7h.01M562.3 313.6h.01M411.8 538.3h.01M636.7 379.9h.01M372.4 443h.01M299 66.3h.01M915.3 259h.01M380.8 234.6h.01M909.2 252.3h.01M497.3 305.7h.01M379.2 406.9h.01M261.7 307.3h.01M309.6 519.5h.01M481.5 464.1h.01M520.8 354.6h.01M558.3 270.9h.01M296.7 177.1h.01M563.6 386.1h.01M476 10.3h.01M586.3 34.5h.01M424.3 307.6h.01M573.7 344.3h.01M707.1 334.1h.01M459.3 249.4h.01M554.1 289.3h.01M497.4 530.9h.01M374.8 242h.01M474.2 429.5h.01M719.8 263.7h.01M169.1 158.3h.01M491.6 352.5h.01M594.6 396.5h.01M614.8 124.9h.01M441.6 566.1h.01M780.2 347.4h.01M305.7 340.8h.01M494.4 219.9h.01M931.2 486h.01M566.5 150.6h.01M440.1 273.3h.01M541.8 212.6h.01M515.8 437.7h.01M712.5 438.6h.01M73.9 552.8h.01M803.7 396.6h.01M450.3 574.1h.01M613.4 427h.01M437.4 610.4h.01M764.1 82.6h.01M532.1 28.7h.01M786.6 632.8h.01M469.3 292.6h.01M369.4 338.4h.01M420.2 334.4h.01M679.3 143.1h.01M268.3 572.8h.01M625 450.3h.01M574 181.4h.01M540 273.8h.01M373.4 69.1h.01M894.1 146.9h.01M341.5 366h.01M641.2 266.2h.01M537.6 452.2h.01M429.4 299.6h.01M515.8 179h.01M577.1 447.7h.01M322 302h.01M431.6 382.1h.01M428.3 173.7h.01M388.5 308.3h.01M576.6 201.6h.01M355.1 308.1h.01M504.4 355.1h.01M794.9 602.7h.01M495.7 383.2h.01M552 300.8h.01M476.2 453.6h.01M715 371.7h.01M664.8 139.3h.01M418.6 404h.01M705.6 333.8h.01M37.1 215.3h.01M597.6 200.7h.01M552.5 281h.01M402.8 334.7h.01M816.2 207.9h.01M331.7 501.5h.01M896.7 101.4h.01M634.4 239.4h.01M637.3 47.2h.01M601.4 524.8h.01M360 337.4h.01M454.5 216.9h.01M353.5 67.5h.01M775.7 236.6h.01M423.4 343.1h.01M653 345.4h.01M463.6 209.6h.01M134.6 618.5h.01M373.2 305.6h.01M339.5 570.3h.01M350.8 348.8h.01M345.3 271.1h.01M526.2 127.9h.01M537.2 310h.01M443.9 276.5h.01M177.2 481.3h.01M607 344.9h.01M638.8 189.6h.01M392.4 180.5h.01M629.5 201.7h.01M663.8 144.3h.01M485.4 307.5h.01M859.3 170.4h.01M574.8 322.9h.01M630.8 249.3h.01M476.8 396.4h.01M441 561.2h.01M918 264.3h.01M728.7 491.5h.01M704.6 443.3h.01M424.9 178.7h.01M617.8 405.2h.01M679.7 504.7h.01M176 393.6h.01M325 311.1h.01M401.8 261.9h.01M812.7 287.2h.01M551.8 196.5h.01M768.6 159.8h.01M805.4 97.4h.01M153.6 187.9h.01M725.1 376.9h.01M447.2 563.4h.01M631 238.7h.01M749.8 420.2h.01M351.4 376.3h.01M344.6 130.9h.01M530.8 254.5h.01M639.8 566.5h.01M439.5 559.8h.01M414.4 382.7h.01M620 399.6h.01M632.2 108.8h.01M277 49.1h.01M466.2 531.7h.01M437.8 327.6h.01M470.3 251.2h.01M268.1 581.8h.01M304.4 124.1h.01M382.7 102.9h.01M521.1 164.2h.01M538.6 479.4h.01M712.3 447.7h.01M378.4 226.7h.01M49.7 205.5h.01M588.2 250.4h.01M177.2 68.5h.01M473.6 242.1h.01M488.2 326h.01M401.2 295.1h.01M496.1 317.6h.01M533.9 163.8h.01M590.9 299.2h.01M604.4 143.1h.01M439.5 55.6h.01M161.8 500.5h.01M480.7 311.8h.01M638.3 55.2h.01M148.2 181.9h.01M318.6 406.7h.01M425.5 238.4h.01M667.9 403h.01M259.5 91.9h.01M282.4 560.8h.01M248.4 62.8h.01M793.5 301.7h.01M203.2 568.6h.01M782.4 431.3h.01M305.9 532.1h.01M547.1 375h.01M256.4 87.5h.01M63.9 328h.01M477.8 418.7h.01M518 482.4h.01M432.2 367.3h.01M633.6 533.7h.01M770 307.7h.01M364.1 486.8h.01M605.1 459.6h.01M406.2 455.6h.01M504.8 545h.01M880.5 422.2h.01M432.4 176h.01M452.9 405.7h.01M410.4 381h.01M303.7 455.3h.01M3.5 616.3h.01M853.6 102.8h.01M421 369.5h.01M577 396.6h.01M864.2 394.8h.01M789.3 209.8h.01M738.8 123.6h.01M168.5 235.2h.01M412.4 144.4h.01M452.6 173.7h.01M497 236.4h.01M681 370.8h.01M722.4 161h.01M254.7 210.2h.01M385.4 417.8h.01M292.2 343.6h.01M497.3 459h.01M609.3 324.6h.01M338.2 54h.01M407.7 335.5h.01M173.5 310.8h.01M320.2 84h.01M384.5 155h.01M669.4 268.4h.01M367.7 41.6h.01M560.9 254.4h.01M191.7 382.9h.01M408.8 58.5h.01M422.7 250.7h.01M421 8.4h.01M473.7 288.4h.01M547.8 254.7h.01M414.4 231.9h.01M461 222.1h.01M597.6 543.5h.01M378.4 276.6h.01M475.1 373h.01M764.6 41h.01M553.6 50.6h.01M900.2 193.7h.01M454.2 395.5h.01M370.7 538.7h.01M410.4 139.9h.01M628.5 23.3h.01M493.7 22.4h.01M539 182h.01M32.1 22.5h.01M519 274.2h.01M739.7 157.7h.01M337.5 406.7h.01M565.5 263.7h.01M413.4 343.1h.01M362.4 392.7h.01M81.4 432.4h.01M474.4 200.7h.01M666.4 68.2h.01M662.1 323.8h.01M645.4 113.7h.01M422.8 387.4h.01M227 146.3h.01M771.3 254.4h.01M138.9 117.4h.01M524.5 289h.01M462.6 358.3h.01M559 393.2h.01M722 135.6h.01M361 315.5h.01M386.8 471.6h.01M524.8 440.6h.01M522 435.3h.01M220.2 468.6h.01M360.5 296.2h.01M305.3 106.1h.01M616.7 300.6h.01M706.1 213.6h.01M535.9 153.7h.01M673.1 304.8h.01M621.7 290.4h.01M140.1 327.9h.01M518.4 230.8h.01M433.1 181.2h.01M623.3 221.7h.01M555.9 214.6h.01M183.4 569.7h.01M519.5 162.6h.01M336.8 343.2h.01M405.1 295.2h.01M260.4 175h.01M778.1 612.9h.01M198.2 373.8h.01M234.7 330.2h.01M568.6 625.4h.01M496.7 488h.01M36.4 338.9h.01M339.9 625.3h.01M585.1 193.6h.01M431.9 538.6h.01M27.2 256.9h.01M77.8 368.1h.01M30.5 195.9h.01M901.8 54.8h.01M666.5 309.7h.01M494.6 471.4h.01M551.2 131.7h.01M39 441.3h.01M343.9 371.9h.01M512.9 382.6h.01M734.9 162.1h.01M710.5 593.2h.01M369.5 297.2h.01M438.2 168.3h.01M471.6 177.8h.01M507.2 351.9h.01M399.3 398h.01M677.8 317.3h.01M864.9 169.8h.01M608.3 41.5h.01M288.8 323.2h.01M11.3 115h.01M671.1 337.5h.01M463.7 228.7h.01M397 150.3h.01M643.3 233.3h.01M633.2 587.2h.01M664.6 152.9h.01M889.6 353.3h.01M694.3 271.5h.01M525.7 448.4h.01M549.9 197.1h.01M407.8 543h.01M484.9 360.8h.01M478.5 250.8h.01M585.2 177.6h.01M472.9 341.2h.01M377.1 393.1h.01M610.1 265.3h.01M416.6 522.8h.01M387.1 552.2h.01M606.7 176.5h.01M896.3 217.2h.01M195.9 544.8h.01M697.6 104.5h.01M917.6 211.9h.01M231 546.2h.01M231.7 384.5h.01M528.6 186.6h.01M417.5 37.9h.01M301.8 291.4h.01M833.1 630.9h.01M410.7 385.4h.01M209.1 295.6h.01M690 457.5h.01M410.7 475.4h.01M765.1 423.6h.01M570.8 315.4h.01M422.3 587.1h.01M11.4 198.5h.01M253.7 206.1h.01M580.2 505.5h.01M338.7 589.6h.01M384 601.6h.01M683.9 53.9h.01M461.3 315.9h.01M678.7 161.3h.01M459.5 192.2h.01M445.1 268.7h.01M448.4 407.4h.01M639 63.1h.01M542 162.8h.01M627 327.4h.01M278.1 635.9h.01M905.3 103h.01M665.1 165.3h.01M122.4 548.2h.01M562.7 206.3h.01M570.4 37.4h.01M516.3 208.4h.01M657 265.5h.01M531.9 155.5h.01M841 332.7h.01M404.9 334.7h.01M350.1 21.1h.01M768.3 380.4h.01M606.7 296.7h.01M726.9 91.9h.01M228 564.3h.01M669 456.7h.01M222 591.4h.01M532.8 334.5h.01M589.9 515h.01M386.3 285h.01M758.5 567.6h.01M446.1 273.8h.01M708.7 495.8h.01M784.8 97.9h.01M163.2 250.9h.01M339.6 218.9h.01M366.1 483.5h.01M540.6 175.5h.01M196.6 198.1h.01M334.9 94.6h.01M480.8 525.5h.01M735.7 294.7h.01M517.8 322.6h.01M624 338.9h.01M768.2 411h.01M406.6 242.8h.01M507.8 8.2h.01M359.8 215.8h.01M389.7 554.1h.01M944 363.3h.01M432.7 334.2h.01M694.9 574.5h.01M593.7 393h.01M584.4 412.7h.01M706.3 315.4h.01M567.3 133.6h.01M441.9 527.9h.01M476.1 621.1h.01M843.5 58.9h.01M392.1 255.3h.01M375.2 156.1h.01M573.5 310.6h.01M552.4 392.4h.01M357 379h.01M923.6 286.2h.01M619.9 214.5h.01M584.9 554.1h.01M332.2 123.6h.01M634.8 98.8h.01M545.1 134.9h.01M664.6 193.2h.01M270.9 306.9h.01M318.8 311.6h.01M452.1 350.7h.01M337.2 226h.01M407.3 135.2h.01M246.6 623.9h.01M922.4 284.1h.01M76.3 143.9h.01M257 219.4h.01M293.8 539.3h.01M637.9 235.6h.01M343.6 407.9h.01M459.9 275.5h.01M552.9 440.9h.01M431.2 139.7h.01M731.7 207.9h.01M834 469.6h.01M395.9 208.7h.01M833.1 303.5h.01M539 296.8h.01M592.3 431.4h.01M437.4 232.4h.01M356.8 181.8h.01M807.2 534.9h.01M532.8 239.3h.01M528.9 294.5h.01M634.3 256.8h.01M496 308.9h.01M109.2 251.6h.01M318.3 336.2h.01M664.1 380.6h.01M419.2 357.9h.01M240.1 131.5h.01M152.2 566.3h.01M596.3 300.9h.01M506.2 236.5h.01M354.7 297.3h.01M568.1 399.7h.01M368.5 441.6h.01M864.6 109.7h.01M396.1 341.2h.01M171 547.2h.01M502.7 611.6h.01M594.3 280.1h.01M474.7 454.5h.01M164 348.3h.01M787.6 259.9h.01M335.3 547.5h.01M259 328.2h.01M488 410.3h.01M321.2 344.4h.01M467.6 3.9h.01M195.8 583.3h.01M464.2 349.4h.01M54.9 397.4h.01M545.4 351.6h.01M543.9 300.7h.01M842.8 486.6h.01M353.8 351.6h.01M413.1 129.6h.01M706.5 541.2h.01M500.6 172.3h.01M291.4 346.2h.01M301.3 225.6h.01M541.6 252.5h.01M880.7 328.1h.01M515.8 100.9h.01M262.6 321.8h.01M477.7 110h.01M627.6 63.5h.01M518.4 504h.01M351.4 107.5h.01M487.3 435.1h.01M506.3 410.8h.01M473.6 252.5h.01M433.2 132.7h.01M153.4 151h.01M218.4 181.5h.01M287 191.6h.01M545.1 271.6h.01M504 445.2h.01M117.3 169.3h.01M237.1 466.6h.01M551.4 181.3h.01M328.2 310.5h.01M484.2 493.1h.01M231.1 138.6h.01M604.5 251.4h.01M526.9 464.2h.01M265 502.8h.01M96.4 329.9h.01M543 253.8h.01M138.2 161.9h.01M384.7 317.7h.01M294.9 201.4h.01M553.8 108.6h.01M656.6 142.6h.01M573.5 175.5h.01M385.9 111.8h.01M769.9 204.1h.01M601.7 183.1h.01M587.1 118.8h.01M195.7 404h.01M571.5 570.3h.01M393.9 557h.01M643.4 260.5h.01M582.5 370.1h.01M443.6 23.2h.01M411.3 228.9h.01M475.2 164.1h.01M425.2 323.8h.01M610.3 368.2h.01M603.6 538.2h.01M681.7 440.5h.01M441.7 280.6h.01M36.8 375.3h.01M488.1 277.7h.01M639.5 338.3h.01M509.1 430.6h.01M324.4 322.9h.01M365.1 460.6h.01M177.4 450.8h.01M909.4 473.7h.01M78.2 409.4h.01M436 344.1h.01M452.3 394.3h.01M739.2 128.2h.01M275.3 511.3h.01M724.6 339.7h.01M376 137.9h.01M412.1 281.8h.01M679.3 300.7h.01M511.8 275.1h.01M572 143.7h.01M426.9 532.7h.01M713.6 80.2h.01M705.1 215h.01M927 471.5h.01M568.8 328h.01M287.7 233.6h.01M527.6 527.9h.01M410.8 265.5h.01M447.1 337.4h.01M573.5 470.4h.01M839.3 510.7h.01M350.2 410.7h.01M602.6 528.9h.01M565.8 195.4h.01M252.6 182.8h.01M814.6 320.8h.01M245.7 248h.01M411.5 307.2h.01M710 473.2h.01M162.5 95.4h.01M104.9 281h.01M750.1 625.4h.01M454.3 249.2h.01M532 424.7h.01M574.8 536.2h.01M533.1 302.1h.01M695.2 622.6h.01M518.3 355.9h.01M482.4 412.5h.01M456.2 470.3h.01M375 476.6h.01M260.4 427.3h.01M478 176.6h.01M304.6 4.1h.01M716.2 314.7h.01M245.8 327.9h.01M365.2 403.6h.01M308.3 264.5h.01M684.5 488.9h.01M120.3 300.3h.01M165.4 424.5h.01M588.1 267.4h.01M569.5 249.3h.01M841.1 317.6h.01M399.2 593.6h.01M910.3 260.1h.01M896.2 529.3h.01M531.3 183.3h.01M373.9 429h.01M457.6 306.3h.01M248.1 168.5h.01M698.5 355.6h.01M619.6 357.9h.01M535.1 268.9h.01M840.1 66.1h.01M604 475.7h.01M760.1 223.8h.01M347.2 407.8h.01M632.5 191.5h.01M545.1 315.9h.01M512.2 172.3h.01M503.4 203.6h.01M586.5 284.3h.01M170.9 252.2h.01M545.6 211.9h.01M436.7 304.1h.01M672.6 384.9h.01M543.5 315.7h.01M657.5 452.1h.01M391.7 228.8h.01M541.3 158.9h.01M238.5 115.5h.01M514.8 294.1h.01M713 405.3h.01M483.1 562.1h.01M516.2 290.5h.01M561.9 273.6h.01M411 240h.01M536.1 293.7h.01M259.4 498.5h.01M805.8 515.1h.01M293.6 413.8h.01M334.7 396.1h.01M581.7 339.7h.01M588 403.3h.01M359.4 619h.01M147.1 325.2h.01M495.6 350.5h.01M282.5 290.9h.01M461.1 331.3h.01M414.6 618.3h.01M559.8 54.5h.01M376.9 130.7h.01M643.8 347.2h.01M384.9 385.5h.01M530.4 263.1h.01M435.7 291.1h.01M263.4 195h.01M588.7 545.3h.01M440.7 237.3h.01M443.5 314.3h.01M658.2 99.1h.01M808.3 437.8h.01M101.9 230.1h.01M515.7 440.7h.01M789.2 40.3h.01M726.5 480h.01M495.8 297.4h.01M636.9 217.4h.01M596.3 420h.01M370.1 606.4h.01M444.5 312.3h.01M239.1 149.3h.01M470.9 213.8h.01M533.5 232.7h.01M49.7 471.4h.01M278.8 393.4h.01M241.6 352.2h.01M534.5 468.3h.01M418.7 226.2h.01M913 448.1h.01M452.6 305.5h.01M386.7 412.7h.01M570.9 406.7h.01M484 274.8h.01M193 573.2h.01M312.2 394.3h.01M750.6 306h.01M593.7 404h.01M283.4 305.7h.01M428.5 353.7h.01M206.7 483.7h.01M708.3 165.8h.01M801.2 385.7h.01M626.3 501.2h.01M472.1 415.4h.01M635.7 226h.01M510.6 288.5h.01M101.9 626.9h.01M824.2 298.5h.01M650.5 159.1h.01M462.5 453.5h.01M545.1 260.5h.01M576 21.6h.01M604.3 432.8h.01M332.3 325.8h.01M448.4 105.8h.01M750.8 472h.01M544 546.3h.01M278.3 6.5h.01M40.4 59.5h.01M610 375.4h.01M215.1 248.4h.01M260.3 381.8h.01M652.8 550.3h.01M103.4 394.2h.01M516.7 168.7h.01M108.1 413.3h.01M847.3 513.6h.01M481.9 47.2h.01M485.6 453.4h.01M240.7 203.7h.01M268 92.4h.01M525.6 368.4h.01M845.8 106.2h.01M531.2 16.6h.01M846.4 287.2h.01M615.6 309.4h.01M508 189.2h.01M676.5 104.2h.01M637.4 221.3h.01M324 251.9h.01M276.7 321h.01M231.2 8.3h.01M490.3 316.8h.01M439.8 391.3h.01M690.1 609.3h.01M858.2 608h.01M454.1 220.4h.01M496 334.5h.01M614.5 280.6h.01M446.5 324.6h.01M637.3 482.1h.01M666.1 117.6h.01M546.1 207.2h.01M614 471.6h.01M851.6 275.2h.01M541.2 447.9h.01M417.3 403.6h.01M465.5 259.9h.01M521.1 390.8h.01M434.1 535.8h.01M2.5 536.2h.01M252.5 204.3h.01M542.7 343.6h.01M623 485.8h.01M589.7 202.7h.01M488.6 440.7h.01M667.1 324.8h.01M329.3 273.9h.01M79.3 222.7h.01M117.8 582.7h.01M605.8 208h.01M450.7 351.6h.01M442.7 17.7h.01M920.1 361.2h.01M643.5 437.6h.01M658.7 138.3h.01M246.8 320.1h.01M874.4 256h.01M429 251.8h.01M447.1 195.7h.01M308.6 348.9h.01M541.8 363.5h.01M517.1 505.3h.01M640.5 239.5h.01M407.1 175.3h.01M576.2 47.5h.01M681.1 544.2h.01M371.5 418.4h.01M506.1 446.9h.01M275.3 230.2h.01M357.8 462.4h.01M250 519h.01M445.9 345.3h.01M499.3 519.3h.01M279.4 168.6h.01M669.3 9.8h.01M635.9 535.3h.01M476.8 48.6h.01M779 418.7h.01M352.4 370.8h.01M98.7 471.6h.01M627.9 205.2h.01M399.6 257.8h.01M614 447.1h.01M319.6 332.8h.01M308.3 215.9h.01M793.8 487.9h.01M508.4 269.2h.01M772.8 325.1h.01M624.8 406.5h.01M493.9 211.2h.01M388 149h.01M197.8 578.2h.01M626.8 221.8h.01M866 209.1h.01M660 164h.01M343 613.1h.01M569.7 448.7h.01M618.7 564.1h.01M82 530h.01M759.7 385.3h.01M324.8 346.5h.01M308.6 178.9h.01M265.8 608.9h.01M435.7 141.1h.01M358 270.5h.01M882.2 154.4h.01M494.3 618.1h.01M703.6 356.7h.01M207.4 379.6h.01M712.6 196.8h.01M305.8 623.9h.01M778.2 376.9h.01M358.5 362.1h.01M534.7 168.8h.01M533.8 36.7h.01M539.4 219.9h.01M156.5 59.1h.01M266.8 54.1h.01M404.4 559.1h.01M287.4 220.1h.01M518 327.9h.01M486.5 352.3h.01M455.1 239.7h.01M607 340.3h.01M144.4 421.5h.01M387.5 212.3h.01M372.2 571.8h.01M441.7 172.1h.01M347.6 374.5h.01M563.8 230.1h.01M414.5 235.6h.01M230.3 352.5h.01M531.8 17.5h.01M566.8 503.6h.01M888.2 227.8h.01M268.2 218.9h.01M452.8 166.6h.01M324.7 13.1h.01M481.8 233.3h.01M889.6 270.4h.01M344.3 381h.01M581.7 207h.01M545.6 449h.01M572 182.3h.01M454 329.6h.01M208.9 428.9h.01M515 257.5h.01M526.3 383.1h.01M101.1 233.5h.01M561.4 372.2h.01M429.5 301.3h.01M669.9 228h.01M419.6 541.4h.01M648.4 19.8h.01M486.7 303.8h.01M755.6 226.1h.01M397.9 518.9h.01M716.8 414.9h.01M467.3 220.8h.01M650.8 84.2h.01M440.9 494.5h.01M550.6 280.7h.01M511.5 437h.01M339 630.6h.01M785.5 28h.01M477.4 185.3h.01M534.2 162.6h.01M507.3 418h.01M676.2 5.8h.01M594.7 514.2h.01M903.7 44.3h.01M12.7 218.6h.01M608.4 231.1h.01M352.6 360h.01M99 379.8h.01M216.1 357.2h.01M170.8 27.7h.01M373.7 241.8h.01M621.3 312.9h.01M833.5 501.9h.01M213.6 459.6h.01M684.1 459.6h.01M384.3 329.2h.01M49.8 539.1h.01M851.4 322.4h.01M533.2 316h.01M492.5 366.8h.01M393.7 347.3h.01M466.2 512h.01M389.5 362.2h.01M369.9 212.2h.01M566.1 114.9h.01M479.2 338.7h.01M827.7 223.2h.01M695.4 438.3h.01M537.4 160h.01M526.8 171.7h.01M228.1 13.4h.01M485.5 212.7h.01M747.8 394.3h.01M747.7 368h.01M421.9 236.4h.01M302 148.5h.01M418.2 208.8h.01M482.2 53.2h.01M396.8 262.6h.01M920.4 386.4h.01M223.2 71h.01M619.7 325.6h.01M167 607.2h.01M318 628.6h.01M108.7 407.3h.01M888.4 222.3h.01M292.5 189.4h.01M686.7 370.5h.01M280.1 113.8h.01M240.1 333.6h.01M422.9 427.1h.01M17.7 97.6h.01M873.5 475.8h.01M584.6 213.7h.01M551.8 278.8h.01M835.4 366.1h.01M540.8 373.2h.01M383 95.4h.01M248.8 210h.01M180.3 114.5h.01M377.2 320.9h.01M498.8 402.3h.01M427.6 259.7h.01M36.9 223h.01M462.7 479.4h.01M509.8 566.2h.01M319 265.3h.01M832.6 243.8h.01M383.7 249.6h.01M433 313.3h.01M29.6 353.6h.01M87.9 533.1h.01M536.5 272.3h.01M812.5 211.5h.01M596 163h.01M734.6 625.7h.01M293.5 363.3h.01M470.5 518.6h.01M649 372.7h.01M637.6 563.2h.01M178.5 242h.01M584.6 312.8h.01M650.7 234.4h.01M818.5 226.3h.01M482.3 444.4h.01M777 418.4h.01M418.5 343.2h.01M610.5 500.2h.01M585.4 442.3h.01M795.5 591.8h.01M707.4 196.2h.01M610.1 291.7h.01M463.3 378.9h.01M340 194.4h.01M456.5 433.7h.01M376 474.6h.01M618.4 297.3h.01M187.4 520h.01M55 388.5h.01M753.4 333.3h.01M459 185.3h.01M639.4 274.6h.01M455.8 170.6h.01M890.6 544.3h.01M572 581.7h.01M807.4 301.5h.01M478.9 59.9h.01M618.6 140.7h.01M525.2 287.1h.01M296.9 292.3h.01M511.7 320.4h.01M561.3 304.1h.01M582.7 359.7h.01M610.6 294.9h.01M256.7 352.2h.01M744.3 148.4h.01M368.2 583.4h.01M228.3 306.9h.01M510.1 255.8h.01M581.1 217.9h.01M469.4 390.9h.01M355.7 465.8h.01M871.2 404.8h.01M299.4 599.9h.01M367.1 303.6h.01M885.8 370.2h.01M687.7 222.3h.01M414.6 51.9h.01M471.2 558.6h.01M606.6 353.7h.01M463.7 345.2h.01M615.8 416h.01M439.1 393.6h.01M552.5 361.8h.01M320.2 332.3h.01M901.5 246.3h.01M459.9 342h.01M471.4 351.3h.01M776.9 368.6h.01M669.4 314.9h.01M135 71.3h.01M678.7 467.8h.01M435.7 412.1h.01M384.4 240.3h.01M589.9 107.6h.01M8.2 78.5h.01M272.9 396.8h.01M466.8 67.1h.01M286.9 403.6h.01M478.7 390.5h.01M570.2 363h.01M683.5 179.1h.01M716.8 525.5h.01M413.5 418.2h.01M255.2 477h.01M463.3 281.6h.01M299.2 450h.01M515.6 207.4h.01M803 408.7h.01M168 176.6h.01M596.2 371.5h.01M657.1 135h.01M477.2 382.7h.01M93.5 205.7h.01M409.4 411h.01M207.8 499.5h.01M481.1 377.1h.01M613.3 60.5h.01M766.6 464.8h.01M487.6 326.9h.01M442.2 288.8h.01M637.8 335.1h.01M442 635.8h.01M666.6 292.6h.01M421.7 216.4h.01M443.3 500.2h.01M504 330.6h.01M528.9 256.4h.01M916.7 619.1h.01M217.3 338.8h.01M328.2 218.8h.01M932.5 361.6h.01M326.8 226.5h.01M662 218.5h.01M845.7 285.3h.01M586.2 288.2h.01M444.3 139.6h.01M174.1 310.2h.01M437.7 590.6h.01M426 123.7h.01M919.3 382h.01M492.3 491.6h.01M443.4 203h.01M668.3 197.5h.01M575.5 283.2h.01M534.9 185.9h.01M452.6 465.9h.01M94 69.3h.01M563.2 104.7h.01M455.1 201.7h.01M474.4 187.1h.01M689 214h.01M450 72h.01M866.1 255.9h.01M492.3 41.5h.01M502 306.2h.01M372 247.3h.01M548.6 270h.01M480.2 332.1h.01M470.6 247h.01M817.6 139h.01M603.6 272.7h.01M573 472.3h.01M784.5 50.1h.01M757.1 308.1h.01M363.3 298.8h.01M458.2 83.3h.01M400.9 334.7h.01M733.7 166.4h.01M748.9 546.4h.01M536.3 86.7h.01M410.2 216.7h.01M169.6 393.7h.01M685 300.6h.01M115.1 610.2h.01M602.3 310h.01M234.7 616.2h.01M462.4 612.1h.01M441.1 505.2h.01M898.7 588h.01M596.2 315.8h.01M637 545.7h.01M481.2 326.3h.01M409.9 222.4h.01M642.3 415.9h.01M779.9 362.8h.01M372.8 195.2h.01M775.2 601.7h.01M382.6 209.3h.01M690.5 497.3h.01M214.8 119.8h.01M258.5 121.4h.01M578.5 354.2h.01M278.9 232.1h.01M172.5 544.9h.01M589.2 338.2h.01M641.5 367.3h.01M273.2 229.9h.01M470 331.5h.01M690.4 287.4h.01M378.5 254.3h.01M284 201.9h.01M648.1 285.7h.01M448.8 437.6h.01M581.2 411.2h.01M607.9 76.7h.01M679.7 431.4h.01M491.6 343.7h.01M574.4 356.7h.01M313.2 530.2h.01M593.9 543.5h.01M701.4 42.5h.01M291.7 238.4h.01M455.4 217h.01M799.7 357.4h.01M372.7 307.3h.01M505.7 342.6h.01M478.6 31.5h.01M432.8 353.8h.01M524 106.3h.01M506.5 199.3h.01M547.2 510.5h.01M384.4 94.8h.01M499.4 354.2h.01M435.2 226.5h.01M260.8 447.7h.01M384.7 153.1h.01M485.1 131.6h.01M395.7 309.5h.01M454.7 110.4h.01M289.6 161.1h.01M483.2 465.9h.01M931.4 103.2h.01M313.8 205.2h.01M536 515.7h.01M596.8 482.3h.01M642.7 522.4h.01M408 426.1h.01M443.5 525.5h.01M384.1 586h.01M798.1 391h.01M432.1 384.1h.01M204.2 219.4h.01M287.5 394.4h.01M638.2 278.9h.01M885.4 394.7h.01M553 343.5h.01M277.1 479.5h.01M395.3 143.7h.01M442.4 229.3h.01M332.5 345.8h.01M381.4 456.3h.01M404.9 300.1h.01M456.5 219.5h.01M516.2 300.9h.01M584.8 288h.01M320.1 618.9h.01M458.2 421h.01M175.2 615h.01M641.8 228.7h.01M516.9 230.9h.01M386.7 292.9h.01M507.8 381.6h.01M583.8 371.8h.01M288.8 136.6h.01M571 271.5h.01M379.6 354.7h.01M623.5 423.6h.01M574.2 441.7h.01M394.8 576.2h.01M544.5 407.5h.01M318.6 134.6h.01M199.5 435.8h.01M559.6 206.9h.01M16.7 215.2h.01M520.3 113.2h.01M412.6 469.8h.01M581.3 502.4h.01M290.4 462.8h.01M902.5 386.4h.01M403.9 522.9h.01M297.2 33.4h.01M431.1 338h.01M662.4 212.9h.01M325 291.6h.01M584 354.4h.01M298.6 257.7h.01M606.1 275.4h.01M829.2 255.9h.01M475.2 282.9h.01M526.5 383.9h.01M249 598.8h.01M445.1 121.9h.01M489.4 465.1h.01M271.8 274.8h.01M232.3 310.6h.01M457.3 354.1h.01M649.1 458.1h.01M425.7 217.9h.01M923.8 285h.01M349.3 433.8h.01M464.4 241.8h.01M601 72.7h.01M221.2 156.8h.01M633.4 202.4h.01M554.5 330.9h.01M450.6 381.1h.01M356.8 124.7h.01M439.2 450.5h.01M395.1 397.7h.01M117.7 561.8h.01M4.5 457h.01M439.2 506.2h.01M575.1 73.7h.01M564.6 457.2h.01M264.5 222h.01M461.3 357.4h.01M410.5 424.2h.01M290.7 562.9h.01M674.8 281.5h.01M688.7 341h.01M603.6 480.8h.01M408.2 301.5h.01M529 291h.01M547.8 216.1h.01M624.7 154.8h.01M380 154.6h.01M521.3 234.5h.01M599.1 328.9h.01M430 145.6h.01M371.9 358.2h.01M191.7 575.2h.01M598 517.4h.01M586.2 419.8h.01M483.5 380.2h.01M576.6 238.3h.01M771.6 225h.01M589.7 311.8h.01M405.4 452.4h.01M440.3 562.5h.01M47.9 112.7h.01M858.3 339.8h.01M470.8 193.5h.01M140.6 463.1h.01M742.2 370.4h.01M366.8 290.6h.01M278.1 156.1h.01M530.4 306h.01M927.6 296.1h.01M504.8 410.1h.01M338.3 201.8h.01M523.6 238.5h.01M389.2 40.3h.01M521.4 314.3h.01M425.9 577.4h.01M600.7 617h.01M656.9 420.1h.01M528.7 264.1h.01M630.9 137.3h.01M707.9 317h.01M380.8 522.7h.01M787.8 458.1h.01M496.9 456.1h.01M505.6 353.9h.01M589.4 17.5h.01M35.6 630.2h.01M366.8 351.4h.01M737.6 544.1h.01M448.2 356.8h.01M622.6 618h.01M398.1 442.6h.01M588.5 295.9h.01M518.2 510.4h.01M838.4 5.4h.01M616.4 128.4h.01M470.3 501.3h.01M336.2 580.7h.01M277.2 491.7h.01M878.6 162.2h.01M802.5 479.5h.01M202.3 287.3h.01M99.2 447.2h.01M519.4 244.1h.01M545.6 368.9h.01M548.9 244.4h.01M636.1 248.8h.01M391.1 423.6h.01M351.6 361.2h.01M125.8 154.3h.01M539 119.6h.01M343.8 142.8h.01M193.9 383h.01M327 433.5h.01M479.9 420.9h.01M88.2 565.5h.01M385.9 320.2h.01M576.7 382.4h.01M798.7 377.4h.01M415.2 153.2h.01M526.5 243.9h.01M291.5 441.1h.01M789.3 375.7h.01M590 540.6h.01M390.1 466.5h.01M402 132.8h.01M416.3 422.7h.01M428.1 528.2h.01M511.9 300.4h.01M369.8 288.5h.01M470.1 448.4h.01M549 247.2h.01M397.1 517.1h.01M458 195.3h.01M838.9 556.8h.01M263.6 113.1h.01M599.4 381.5h.01M477.9 90.4h.01M411.1 419.7h.01M588.8 236.7h.01M563.5 452.3h.01M545.4 385.5h.01M116.1 360.7h.01M634.3 297.5h.01M469.1 268h.01M741.6 336.3h.01M492.1 505.2h.01M630.9 192.6h.01M527.8 326.7h.01M701 347h.01M431.4 449.8h.01M145.6 545.8h.01M177.6 365.2h.01M35.4 447.5h.01M140.2 74.7h.01M226.4 426.5h.01M627.7 246.1h.01M456 544.1h.01M610.4 279.8h.01M701.5 86.3h.01M511.7 113.3h.01M206.4 471.3h.01M433.3 320.8h.01M267.5 303.6h.01M423 228.3h.01M454.5 246.1h.01M544.2 51.2h.01M298.7 280.8h.01M485.6 218.4h.01M745.1 509h.01M153.4 96.8h.01M374.6 324.3h.01M241.1 558.9h.01M480.7 168.3h.01M542.7 216.7h.01M604.5 426.2h.01M220.2 382.7h.01M203.7 577.7h.01M444.5 628.8h.01M733 515.3h.01M627.3 423.2h.01M487.5 259h.01M243.3 239.1h.01M26.3 159.4h.01M638.1 215.1h.01M406.4 325.6h.01M197.6 401.7h.01M469.8 189.9h.01M723.1 248.1h.01M361.2 153.5h.01M333 358h.01M656 439.8h.01M443.2 372.3h.01M236.4 300.3h.01M563.4 272.4h.01M383.5 125.1h.01M3.2 603.7h.01M641.3 235.3h.01M76.6 623.3h.01M465.5 332.1h.01M541.9 250.1h.01M198.4 255.3h.01M777.5 189.8h.01M410.3 440.9h.01M290.5 382.3h.01M576.4 542h.01M286.3 358.3h.01M251.7 139.4h.01M649.4 305.9h.01M516.6 324.7h.01M229.3 436.1h.01M482.9 531.1h.01M539.1 194.4h.01M437.3 484.1h.01M466 365h.01M403.1 424.5h.01M340.6 357h.01M168.8 633.7h.01M426.8 483.8h.01M313.6 151.2h.01M571.3 499.8h.01M501.2 246.7h.01M734.5 431.5h.01M328.2 92.5h.01M731.3 197.7h.01M739.9 388.5h.01M738.9 91.4h.01M489.4 174.5h.01M640.9 378.6h.01M408.8 262.3h.01M584.4 503.5h.01M510 22.9h.01M161.2 232.5h.01M297.4 38.5h.01M516.9 172h.01M513.9 345.7h.01M725.6 56.3h.01M437.3 219.5h.01M610.5 462h.01M664.8 352.2h.01M686.2 329.3h.01M311.1 314.4h.01M38.4 439.3h.01M480.3 307.1h.01M328 284.8h.01M692.6 110h.01M123.7 575.8h.01M573.8 318.3h.01M372.5 339.7h.01M203.7 123.3h.01M563.1 613.7h.01M155.3 257.5h.01M326.5 262.2h.01M245.9 328.3h.01M318.4 172.3h.01M524.5 206.9h.01M369.5 437.1h.01M451.7 512.7h.01M392.3 447.7h.01M541 494.1h.01M119.2 630.5h.01M929.3 163.6h.01M467 204.6h.01M484.5 261.5h.01M473.3 352.3h.01M438.1 255.6h.01M344.4 548h.01M278.1 326.7h.01M150.8 553.6h.01M390.8 535.2h.01M505.3 134.5h.01M324.7 296.6h.01M252.2 266.8h.01M399.5 326.7h.01M601.8 604.5h.01M662.1 247.4h.01M627 381.2h.01M370 524.6h.01M626 27.2h.01M381.6 447.6h.01M700 438.1h.01M394 308.1h.01M639.8 456.5h.01M514.1 451.5h.01M523.4 276h.01M489.6 140.2h.01M467.3 366.9h.01M768.7 372.6h.01M333.8 406.4h.01M703.1 279.4h.01M429.9 546.6h.01M321.1 360.5h.01M514 451.2h.01M253.8 330.7h.01M518 406.1h.01M716.4 226.5h.01M658 253.7h.01M338.4 434.7h.01M400.3 84.2h.01M655.9 190.7h.01M710.2 360.5h.01M874.6 309.6h.01M503.8 142.8h.01M559.6 489.4h.01M293.6 436.5h.01M582.7 395.6h.01M491.9 395h.01M453.8 118.7h.01M334.8 165.5h.01M714.9 419.3h.01M382.8 201.7h.01M293.4 366.8h.01M426.4 472.7h.01M742.4 81.1h.01M503.7 224.4h.01M501.6 441.5h.01M471.9 411.3h.01M305.8 142.3h.01M184.9 2.1h.01M638.6 436.2h.01M391.9 301.3h.01M631.9 133.1h.01M566.6 482.4h.01M541.7 457.7h.01M377.4 310.5h.01M881.2 46h.01M601.8 503h.01M618.9 428.9h.01M423.1 170.5h.01M179.5 332h.01M367.5 370.4h.01M393.5 357.9h.01M509.1 283.3h.01M861.9 434.8h.01M318.9 377.7h.01M365.1 311h.01M376.2 316.3h.01M389.5 284.9h.01M435.4 327.8h.01M471.4 493.7h.01M546.5 367.4h.01M691.3 460.8h.01M801.9 414.1h.01M598.1 408.4h.01M678.3 416.9h.01M408.2 395.3h.01M454.1 409.1h.01M889 433.5h.01M190.4 510.8h.01M643 321.9h.01M311.5 507.4h.01M544.5 345.4h.01M326.9 324.4h.01M493.6 450.6h.01M314.4 575.6h.01M670.1 293.1h.01M404.6 423.1h.01M563.5 173.6h.01M319 366.1h.01M558.7 341.9h.01M296.1 529.3h.01M373 369.3h.01M92.2 398.1h.01M539.6 265h.01M129.7 256h.01M421.2 34.1h.01M578.2 251h.01M524.4 430h.01M441.6 300.4h.01M662.2 360.6h.01M360.2 213.5h.01M472.2 369h.01M530.9 301.7h.01M585.1 255.8h.01M522.5 557h.01M361.7 348h.01M710.4 599.3h.01M516.4 484.6h.01M291.1 477.8h.01M450.2 398.4h.01M148.6 173.1h.01M672.4 37.1h.01M657.8 302.7h.01M120.7 477.9h.01M505.8 33.2h.01M311.1 300.9h.01M515.4 548.4h.01M455.2 18.5h.01M53.5 286.6h.01M622.3 442.2h.01M228.4 347.1h.01M208.4 163.9h.01M419.4 231.1h.01M449.5 369.3h.01M690 147.6h.01M552.5 174.4h.01M416.6 342.6h.01M549.5 171.5h.01M338.8 206h.01M604 373h.01M461.8 160.9h.01M387.9 229.6h.01M511.1 336.5h.01M486.6 194.9h.01M332.6 195.1h.01M409.1 368h.01M208.3 77.1h.01M779 243h.01M502.4 221h.01M536.8 367.6h.01M333.6 116.3h.01M235.7 224.1h.01M512.2 422.8h.01M594 635.2h.01M546.4 134.3h.01M730.5 597.8h.01M297.3 68.9h.01M220.9 202.4h.01M442.4 307.1h.01M322.3 348.1h.01M830.9 258.5h.01M542.9 198.7h.01M496.1 127.6h.01M563.7 228.1h.01M936.9 417.2h.01M514.8 409h.01M5.8 403.1h.01M382 416.9h.01M546.8 427.7h.01M432.7 175.4h.01M166.5 10h.01M305.3 378.4h.01M549.1 236.3h.01M759.3 488.6h.01M211.4 92.8h.01M671.7 335.5h.01M542.8 525.4h.01M430.9 595.8h.01M149.6 481.1h.01M78.4 406.4h.01M167.9 333.1h.01M509 291.3h.01M542 228.2h.01M502.9 330.7h.01M363 133.1h.01M121.6 131.3h.01M643.2 319.1h.01M231.9 51.6h.01M831.3 291h.01M196.1 312.5h.01M409 290.8h.01M587.1 281.7h.01M109.1 543.6h.01M528.5 170.7h.01M171.1 214.3h.01M189.8 57.5h.01M810.1 148.6h.01M520.3 129h.01M433.3 332.9h.01M249.5 216.7h.01M714.6 416.3h.01M553.3 294.1h.01M305.8 294.2h.01M771.9 411h.01M110.6 392.2h.01M518.3 387h.01M425.5 182.2h.01M924.1 64.7h.01M538.1 309.4h.01M883.8 319.2h.01M421.2 203h.01M667 321.2h.01M231.1 370.3h.01M391.8 431.6h.01M550.2 263.4h.01M729.2 250.3h.01M503.4 27.9h.01M673.4 168.4h.01M816.5 389.7h.01M484.7 45.6h.01M667.2 268h.01M417.1 298.6h.01M288.7 178h.01M377.6 309.8h.01M334 261.5h.01M857.5 533.5h.01M244.9 301.9h.01M889.8 466.9h.01M332.4 311.4h.01M372.7 233h.01M447.5 368.9h.01M738.3 615.1h.01M911.3 360.8h.01M378.3 316.7h.01M424.2 130.8h.01M376.1 47.4h.01M476.1 585.2h.01M483.9 91.1h.01M310.1 489.8h.01M444.5 298.9h.01M585.8 232.7h.01M214.3 411.6h.01M534.5 229.9h.01M822.7 556.5h.01M421 449.3h.01M638.4 248.9h.01M291.5 296h.01M494.5 116.7h.01M633.2 167.1h.01M203.7 102.8h.01M388 189.9h.01M441.4 393.5h.01M305 480h.01M680.2 78h.01M821.6 146.5h.01M641.5 174.8h.01M447.2 171.2h.01M599.5 309.2h.01M758.5 351.2h.01M825.5 532.1h.01M399.8 541.2h.01M632.7 455.6h.01M476.8 331.3h.01M803.2 331.5h.01M266.9 133.9h.01M261.3 213.9h.01M671.3 105.6h.01M756.8 81.4h.01M566.3 163.7h.01M169.2 266.9h.01M388.3 497.1h.01M656 552.9h.01M283.5 367.1h.01M393.9 114.8h.01M204.7 391.4h.01M464.2 505.3h.01M537.1 353h.01M326.1 187h.01M941.7 537.7h.01M386.7 463.9h.01M248.3 135.3h.01M420.8 481h.01M384.1 457h.01M199 391.9h.01M88.1 187.7h.01M317.1 244.9h.01M817.2 587.4h.01M234.6 428.9h.01M545.4 156.6h.01M584 297h.01M694.3 326.3h.01M490.9 338.8h.01M670.6 377.7h.01M305.1 468.3h.01M535.6 156h.01M473.9 506.5h.01M785.4 157.8h.01M658.4 284.8h.01M476.1 497.8h.01M832 635h.01M407.1 223.5h.01M310.3 274.3h.01M316.9 632.6h.01M375.6 287.1h.01M175.5 611h.01M575.3 107.6h.01M344.7 187.9h.01M449.5 106.8h.01M236.2 385h.01M243.8 92.3h.01M19.1 167.3h.01M247.2 353.5h.01M856.7 236.9h.01M325.9 360.8h.01M903.8 75.9h.01M491.3 84.8h.01M509.2 602.2h.01M823 247.6h.01M669.8 229.1h.01M231.2 564.1h.01M692.2 481.3h.01M158.2 431.9h.01M602.8 144.7h.01M715.5 24.1h.01M183 243.1h.01M514.5 520.1h.01M701.6 333.6h.01M477.5 237.8h.01M577.3 447.3h.01M529.9 348.9h.01M65.3 541.2h.01M226.3 46.5h.01M604.7 422.4h.01M379.4 273.8h.01M224.7 225h.01M686.9 387.3h.01M330 433.8h.01M513.9 490.6h.01M588.5 58.4h.01M432.7 155.1h.01M427.1 305.6h.01M672.3 19.5h.01M196.2 523.1h.01M351.5 97.3h.01M525.6 531.1h.01M444.6 91.9h.01M558.8 411h.01M218.8 188.3h.01M214.1 204.9h.01M513.9 238.4h.01M505.6 206.2h.01M135.7 287.2h.01M503.7 434.1h.01M648 171.6h.01M545.2 451h.01M648.7 487h.01M200.2 484.3h.01M876.1 304.8h.01M383.5 252.3h.01M821.1 179.5h.01M329.8 518.3h.01M363.5 209.7h.01M405.8 431.1h.01M643.1 60.4h.01M619.8 373h.01M419.1 246.9h.01M516.7 405.6h.01M465 475h.01M608.2 375.3h.01M178.6 502.2h.01M296.4 36h.01M699 438.8h.01M337.2 419.3h.01M553.9 343.8h.01M584.9 7.9h.01M612.3 246.4h.01M207.7 49h.01M218.6 431.9h.01M635.3 454.4h.01M408.1 177.6h.01M337.1 211.5h.01M592.3 196.7h.01M557.9 398.8h.01M422.8 294.6h.01M527.3 420.2h.01M832.2 398.5h.01M774.4 463.4h.01M266.6 282.1h.01M528 342.7h.01M439.8 350h.01M780.3 145.6h.01M220.7 127.4h.01M537.2 345.2h.01M548.5 210.1h.01M667.7 363.6h.01M528 394.4h.01M456.3 229.8h.01M336.4 355.6h.01M519 335.4h.01M414.2 393h.01M468.1 241.6h.01M152.4 398.7h.01M805.7 14h.01M563.5 345.4h.01M287 596.5h.01M553.6 264.1h.01M858.8 634.7h.01M851.6 99h.01M552.2 364.7h.01M364.5 250.7h.01M385.6 376.1h.01M395.2 293.9h.01M134.9 221.3h.01M554.6 101.3h.01M516.9 301.9h.01M407.3 79.9h.01M527.9 322.6h.01M469.9 312.8h.01M256.2 395.7h.01M552.6 409.5h.01M325.5 89.8h.01M532.5 109.7h.01M341.7 52h.01M326.6 223.2h.01M378.4 284.4h.01M627.7 270.8h.01M380.1 450.8h.01M645.7 251.1h.01M501.9 213.2h.01M482.7 212.9h.01M845.5 507.6h.01M493 437.7h.01M811.4 190.8h.01M99 465.6h.01M269.1 347.2h.01M53.6 439.7h.01M453.8 481.9h.01M351 392.5h.01M542.9 338.7h.01M294.5 308.7h.01M64.1 137h.01M64.1 223.5h.01M538 422.4h.01M671 198.5h.01M566.3 454.8h.01M567.7 174.7h.01M775.9 90.7h.01M287.9 181.9h.01M541.1 347.3h.01M723.7 260h.01M385.8 406.3h.01M251.1 347h.01M698.1 299.1h.01M271.2 372.6h.01M664.9 392.8h.01M591.1 503.6h.01M561 214h.01M538 253.5h.01M479.4 258.6h.01M361 520.7h.01M426.6 151.8h.01M572.5 289.8h.01M243.1 261.3h.01M489.2 221.2h.01M109.1 328h.01M406.8 172.5h.01M317.4 318h.01M577.4 284.9h.01M646.4 386.9h.01M467.7 357.7h.01M256.8 213.2h.01M502.2 342.9h.01M426.2 586.9h.01M515.8 421.5h.01M576.5 285.8h.01M249.3 531.3h.01M461.3 559.6h.01M800.6 4.7h.01M406.5 379.9h.01M688.9 266.8h.01M797.3 509.6h.01M606.4 334h.01M227.3 124.5h.01M688.9 223.2h.01M460.9 16.7h.01"/>
<path stroke-width="2.0" stroke-opacity="0.52" d="M570.4 41.6h.01M35 333h.01M133.9 273.2h.01M689.5 408.7h.01M943.3 68.1h.01M67.8 541.2h.01M623.4 422.5h.01M679.6 192.1h.01M26.3 69h.01M401.3 465.5h.01M139 82.7h.01M466.3 429h.01M897.1 207.5h.01M442.4 301.5h.01M871.9 82.6h.01M170.6 564.6h.01M758.1 572.4h.01M926.6 144.1h.01M511.1 145h.01M351.5 134.6h.01M289.1 239.6h.01M551.8 442.9h.01M531 193.5h.01M932.7 332.9h.01M20.3 7.8h.01M507.6 228.4h.01M323.2 82.5h.01M887.2 299.4h.01M822.5 92.2h.01M465.3 42.8h.01M925 295.2h.01M744.6 193.1h.01M863.7 57.9h.01M662.5 529.8h.01M867.9 348.8h.01M365.5 490.4h.01M229.1 194.7h.01M651 537.9h.01M825 6.3h.01M865.1 72.8h.01M266.2 34.5h.01M680.9 556.3h.01M4.8 533.9h.01M705.1 290.7h.01M21.5 283.8h.01M933.1 268.4h.01M852.9 449.5h.01M788.2 421.1h.01M761.9 304.7h.01M166.2 268.4h.01M203.1 85.8h.01M59.1 248.5h.01M665.8 187.7h.01M241.4 368.4h.01M488.4 228.6h.01M878.2 284.7h.01M537.5 382.7h.01M268.7 17.9h.01M328.9 83.2h.01M65.9 340.3h.01M922.1 48.4h.01M616.3 597.7h.01M154.5 276.3h.01M810.3 444.2h.01M497.5 596h.01M730.9 45.5h.01M86.5 80.8h.01M242.5 473.3h.01M768.7 47.2h.01M55.6 460.9h.01M104.1 440.5h.01M706.1 597.3h.01M584.6 185.2h.01M501.3 406.4h.01M503.3 610.2h.01M583 171.9h.01M206.4 200.3h.01M93.7 402h.01M284.4 579.2h.01M942.8 303.8h.01M933.6 607.3h.01M5.6 414.7h.01M252.6 330.1h.01M450 410.3h.01M541.7 515.6h.01M367.2 526h.01M576.5 208.5h.01M134.4 423.1h.01M662.5 117.4h.01M780.5 578.2h.01M157.9 486.8h.01M140 116.3h.01M118.1 9.1h.01M306.7 359.5h.01M595.6 487.9h.01M928.6 205.4h.01M246.4 280.5h.01M518.8 129.2h.01M280 99.6h.01M688.4 636.8h.01M161.4 171.8h.01M931 274.7h.01M24.8 361.5h.01M785.6 569.1h.01M178.8 499.3h.01M340 508.3h.01M70.9 446.7h.01M25.7 460.7h.01M321.3 476.2h.01M140 365.1h.01M651.4 634.5h.01M450.2 616h.01M821.7 371.3h.01M543.2 509.1h.01M749.5 459.7h.01M151.3 442.8h.01M880.3 600.6h.01M428.7 173.6h.01M371.8 495.3h.01M742.7 366.7h.01M698.1 550.7h.01M919.8 194.1h.01M163.6 107.2h.01M576 13h.01M42.3 52.6h.01M898.5 118.9h.01M748.7 301h.01M423 264.2h.01M444.1 134.8h.01M9.8 291.4h.01M541.9 147.4h.01M480.5 2.1h.01M265.8 429.3h.01M168 582.3h.01M621.1 489.4h.01M677 457.2h.01M247.7 144.4h.01M627.1 128h.01M775.9 212.5h.01M362.2 570.9h.01M502.9 179h.01M382.4 477.8h.01M21.6 531.7h.01M102.4 340.3h.01M144.7 517.9h.01M943 254h.01M434.3 49.4h.01M557.6 105.7h.01M750.5 83.7h.01M864.2 184.7h.01M394.9 194.9h.01M739.7 28.2h.01M815.5 45.9h.01M74.4 537.9h.01M27.2 44.9h.01M174.5 117.3h.01M840.4 577h.01M459.5 605.1h.01M612.6 335.3h.01M705 303.7h.01M331.4 454.7h.01M357.6 234.1h.01M185.8 65.4h.01M830.3 243.7h.01M46.7 63.2h.01M219.6 563h.01M662.5 602.3h.01M939.6 279.4h.01M777.4 527.7h.01M856.4 213.5h.01M279.4 245.7h.01M107.6 477.2h.01M917.1 244.1h.01M641 221.3h.01M487.5 598.9h.01M3.3 353h.01M13.3 363.9h.01M336.2 111.5h.01M10.5 610.3h.01M238.9 579.5h.01M673 47.4h.01M737.4 107.2h.01M262.8 214.9h.01M406 535.8h.01M760.6 442.5h.01M594.1 85.7h.01M685.7 478.9h.01M344.2 353.2h.01M403.4 389.1h.01M883.3 78.4h.01M424.8 170h.01M201.6 502.5h.01M40.7 383.7h.01M879.5 9.6h.01M154 137.7h.01M26.9 119.6h.01M858.1 44.2h.01M168.5 210.6h.01M346.2 591.6h.01M693.8 302.9h.01M313.4 209.7h.01M868.6 413.3h.01M770.7 233.7h.01M164.3 605.5h.01M685.6 403.4h.01M164.7 551h.01M692.4 580.7h.01M158.1 577.4h.01M769.5 557.1h.01M47.4 512h.01M253.4 408.4h.01M673.4 330.8h.01M452.5 155.6h.01M659.3 345h.01M590.1 60.9h.01M334.9 529.2h.01M241.1 211h.01M241.8 566.6h.01M646.8 314.2h.01M386.3 131.6h.01M5.3 219.6h.01M281.2 189.7h.01M49.6 492.3h.01M365.9 269.2h.01M401.5 204.7h.01M293.1 414.4h.01M49.5 3.8h.01M22.4 254.1h.01M918.9 75.3h.01M422.7 380.7h.01M451.5 100h.01M631.6 71.5h.01M612.9 619.6h.01M722.4 214.1h.01M156.6 289.1h.01M152.4 634.2h.01M299.1 282h.01M283.9 261.2h.01M740.5 218.7h.01M584.8 98.6h.01M376.8 267.3h.01M629.3 150.4h.01M705.1 539.5h.01M401.6 338.8h.01M495.2 589.9h.01M202.6 370.5h.01M596.2 613.5h.01M846.8 194.4h.01M18.3 85.7h.01M290.9 562.2h.01M553.7 489.6h.01M340.7 320.5h.01M841.1 297.4h.01M618.1 458.6h.01M41.8 350.3h.01M184.9 73.1h.01M903.3 26.9h.01M434.1 392.3h.01M243.9 372.6h.01M112.1 592.9h.01M288.2 299.5h.01M854.6 86.3h.01M903.7 474.1h.01M253 504.7h.01M103.5 403.8h.01M434.7 478.2h.01M48.3 311h.01M459.9 431.3h.01M470.4 121.2h.01M366.9 163.2h.01M749.1 179.4h.01M851.4 197.6h.01M579.3 442.2h.01M591.6 6.4h.01M481.2 251.3h.01M763.3 360.3h.01M664.8 488.2h.01M805.3 584.2h.01M180.5 548.1h.01M418.3 473.2h.01M209 329.3h.01M657.4 39.2h.01M797.7 60.5h.01M918.9 110.8h.01M99.5 439h.01M243.6 574.9h.01M731.9 432.4h.01M456.4 192.6h.01M102.8 571h.01M230.2 444.7h.01M543.9 332.9h.01M240.5 207.1h.01M343.4 72.6h.01M100.6 523.2h.01M168.8 194.5h.01M711.8 577.3h.01M601.3 390.8h.01M535 230.6h.01M523.7 3.8h.01M904 395.6h.01M105.4 18.7h.01M588.6 517.9h.01M584.9 325.3h.01M503.6 106.2h.01M486.5 398.6h.01M281.3 212.3h.01M831.2 252.1h.01M243.4 69.4h.01M288.6 494.4h.01M145.1 39.9h.01M656.6 120.4h.01M756.9 277.1h.01M321.8 85.8h.01M337.6 497.9h.01M162.4 458.9h.01M470.2 513.2h.01M526.8 518.1h.01M148.2 40.9h.01M168.1 597.6h.01M364.4 268.5h.01M582.9 434h.01M466.1 608.9h.01M390.1 173.6h.01M98.7 167.5h.01M208.6 148.1h.01M184.4 116.7h.01M350.8 244.9h.01M59.5 258.5h.01M312.3 275.7h.01M894 42.3h.01M827.1 293.2h.01M92.9 412.9h.01M693.6 65.5h.01M159.4 165.6h.01M728.1 476.1h.01M883.5 108.3h.01M244.3 98.3h.01M535.8 115.3h.01M145.2 346h.01M246.8 212.1h.01M642.8 498.4h.01M220.3 52.7h.01M609.4 59.8h.01M413 165.7h.01M296.2 371.5h.01M131 230.6h.01M604.2 398.6h.01M551.4 320.8h.01M574.1 37.7h.01M24 313.9h.01M869.6 67.5h.01M297.4 18.9h.01M510.6 4h.01M600.2 437.9h.01M876.2 239.5h.01M773.3 64.1h.01M567.1 540.2h.01M537.1 3.1h.01M740.9 178.8h.01M838.8 103.9h.01M169.3 483.5h.01M826.1 147.2h.01M929.5 313.5h.01M33.6 373h.01M112.7 107.1h.01M320.5 356.2h.01M922.3 130.7h.01M68.1 433h.01M529.9 231.2h.01M197 344.5h.01M283.3 373.9h.01M670.2 521.5h.01M774.7 339.2h.01M273.1 313.4h.01M55.1 336.7h.01M810.6 299.4h.01M873.5 508h.01M675.3 457.9h.01M223.7 561.9h.01M586.7 353.7h.01M123.8 613.3h.01M601.9 130.4h.01M573.5 153.7h.01M938 184.7h.01M522.4 13.6h.01M471.9 538h.01M576 178.5h.01M561.6 321.1h.01M669.8 164.4h.01M664.1 523.9h.01M570.5 285.9h.01M212.5 198.5h.01M938.5 112.9h.01M30.5 137.1h.01M59.4 353h.01M779.4 220.6h.01M429.5 510.8h.01M469 46.3h.01M210.1 194.4h.01M642.4 484.3h.01M323.6 10h.01M221.8 406h.01M394.3 209.4h.01M567.4 16.9h.01M218.5 210.9h.01M315.7 320.7h.01M390.5 446.9h.01M940.5 583.2h.01M516.1 572.3h.01M167 86.1h.01M83.2 629.4h.01M278.8 104.2h.01M564.2 198.5h.01M679.6 293.3h.01M195.9 238.6h.01M948.8 616.7h.01M839.3 174.3h.01M567.6 471.1h.01M533.2 369.3h.01M259.3 405.8h.01M572 326.6h.01M339.2 234.8h.01M200.8 336.9h.01M442.7 210.5h.01M319.3 464.5h.01M777 491.6h.01M18.3 377.6h.01M775.9 378.8h.01M480.4 361.7h.01M659.9 166.9h.01M391.9 300.5h.01M289.4 51.3h.01M235.5 430.4h.01M411.1 158.1h.01M143.9 115.5h.01M262.8 575.7h.01M647.1 395.6h.01M749.5 317h.01M828 106.8h.01M475.5 497.8h.01M860.4 149.5h.01M513.9 267.6h.01M573.3 511.5h.01M303.5 217.8h.01M409.5 255.6h.01M33.2 586.3h.01M415.4 352.3h.01M517 323.2h.01M548.1 258.4h.01M127.1 348.7h.01M627.9 263.8h.01M826.8 364.8h.01M326.7 195.2h.01M583.9 270.9h.01M601.7 500.9h.01M847.3 91.2h.01M515.4 152.4h.01M484.7 333.6h.01M232 498.3h.01M215 168.2h.01M435.7 135.3h.01M315.6 244.3h.01M442 271.8h.01M482 300.9h.01M518.3 305h.01M708.5 251.6h.01M526.5 85.4h.01M371.6 416.4h.01M603.7 325h.01M574.9 189.2h.01M215.7 262.5h.01M606.5 320.4h.01M476.8 174.9h.01M480.7 340.5h.01M428.2 533.9h.01M467.7 243h.01M441.9 318.7h.01M679.5 163.2h.01M435.4 305.2h.01M607.1 235.5h.01M569.3 382h.01M615.9 260.8h.01M476 484.3h.01M597.3 330.7h.01M78.1 438.1h.01M391.9 161.5h.01M243.4 185.6h.01M386.9 132.8h.01M487.1 382.4h.01M714.5 101h.01M663.2 453.6h.01M274 366.3h.01M331 213.5h.01M835 262.8h.01M927.1 622.5h.01M510.2 297.6h.01M520.5 123.3h.01M519.8 262.3h.01M313.2 451.6h.01M506.5 406.3h.01M291.7 257.1h.01M342.2 500.7h.01M731.2 213.9h.01M506 255.1h.01M323.5 193.3h.01M607.5 605.9h.01M312.1 305.3h.01M922.3 187.9h.01M626.1 510.3h.01M699.6 249.3h.01M588.1 423.4h.01M174.2 115.5h.01M489.2 241.1h.01M635.1 287.7h.01M406.3 316.5h.01M564.4 348.3h.01M411 107h.01M506.4 322h.01M543.4 465.4h.01M508.5 133.8h.01M527.2 262.9h.01M597.6 131.9h.01M503.3 302.8h.01M567.8 308.8h.01M558.4 226.1h.01M627.1 213.7h.01M774.9 125.5h.01M583.5 414.4h.01M479.4 146.7h.01M481.8 282.1h.01M297.8 590.9h.01M523.6 548.4h.01M429.3 88.2h.01M272.3 145.5h.01M496.3 448.7h.01M55.6 145.7h.01M747.8 292.2h.01M549.7 410.3h.01M432.1 393.7h.01M309.9 125.1h.01M558.6 248.3h.01M589.9 388.2h.01M600 383.4h.01M635.9 623.2h.01M821.3 80.3h.01M504.3 301.4h.01M542.8 275.9h.01M325.9 187.4h.01M508.1 152.5h.01M316.9 492.5h.01M319.1 229.9h.01M694.4 500.9h.01M526.1 378.3h.01M893.3 503.6h.01M949 564.8h.01M450 3.9h.01M475.2 351.4h.01M785.7 547.7h.01M533.5 294h.01M405.2 177h.01M513 297.2h.01M469.5 501.3h.01M723.8 466.3h.01M495.7 92.1h.01M493.4 223.2h.01M385.9 280.8h.01M373.6 69.4h.01M587.8 391.7h.01M604.9 316.6h.01M443.8 468.6h.01M340.4 163.7h.01M328.7 218h.01M690.9 370h.01M300.9 395.3h.01M463.5 425.9h.01M243.3 315.6h.01M438.7 425.4h.01M525.2 33.7h.01M147.1 19.3h.01M346 396.9h.01M610.6 121.8h.01M880.7 219.1h.01M928.2 249.3h.01M360.5 301.6h.01M643.2 257h.01M123.5 424.3h.01M601.2 405.3h.01M320.5 340.3h.01M579.2 278.1h.01M557.3 218h.01M641.9 122.3h.01M836.7 554h.01M345.3 358.6h.01M462.5 384.7h.01M445.2 451h.01M184.1 129.3h.01M535.9 332h.01M440.5 262.2h.01M47.2 480.5h.01M267.5 528.1h.01M499.3 458.8h.01M289.8 91.3h.01M778.2 466.4h.01M422.1 236.9h.01M560 284.9h.01M804.9 266.2h.01M227.6 159.3h.01M419.5 233.2h.01M546.3 299.3h.01M260.6 127h.01M553.8 240.1h.01M335.5 496.5h.01M694.1 297.9h.01M462.3 310.6h.01M489.2 184.3h.01M538.4 337.7h.01M685.6 365.1h.01M334.7 319h.01M770.6 323.1h.01M515.4 397.5h.01M443.7 463.7h.01M240.6 89.3h.01M370 239h.01M707.8 482.6h.01M511.4 167h.01M302.4 285.7h.01M4.2 171.5h.01M543 24.9h.01M935.3 503.4h.01M523.8 274.4h.01M228.1 117.4h.01M459.6 295.1h.01M628.1 397.6h.01M277.4 342.3h.01M449.7 251h.01M135.7 215h.01M845.5 416.5h.01M442.1 443.1h.01M535.3 383.5h.01M561.1 256.9h.01M476.8 220.2h.01M604.3 30.5h.01M354 139.1h.01M541.2 479.5h.01M487.1 284.8h.01M307.9 629.9h.01M498.8 352.5h.01M728.1 327.6h.01M62.3 290h.01M625.5 322.8h.01M697.2 447.5h.01M430.9 210.2h.01M234.1 353.7h.01M593.3 268.3h.01M491.9 266.8h.01M369.7 357.5h.01M369.4 294.1h.01M544.6 102.1h.01M405.8 336.9h.01M516.7 209.3h.01M503 344.9h.01M468.6 351h.01M508.3 404.4h.01M257.2 251.4h.01M221.6 191.8h.01M374 436.3h.01M377.3 82.7h.01M409.7 203.9h.01M328 353.4h.01M496.7 291.3h.01M499.1 354h.01M268.9 17.8h.01M194.8 184.5h.01M57.9 322.4h.01M381.1 348.3h.01M495.8 268.7h.01M502 400.5h.01M590.3 174.9h.01M503.1 171.1h.01M294.1 579.5h.01M515.4 253.2h.01M508.3 428.5h.01M473.9 300.4h.01M457.8 323.8h.01M524.7 454.5h.01M481 152.2h.01M499.3 318.9h.01M177.7 306.6h.01M382.9 281.7h.01M829.2 526.2h.01M459.7 255.8h.01M376.9 318.4h.01M380 73.6h.01M552.4 615.6h.01M616.5 411.8h.01M482.7 141h.01M801.1 195.5h.01M527.1 369.6h.01M468.8 322h.01M890.1 413.6h.01M229.7 522.8h.01M633.5 380.9h.01M781.1 77h.01M463.2 154.8h.01M533.1 396.2h.01M598.4 541.9h.01M483.3 231h.01M280.3 368.3h.01M622.7 356.4h.01M474.5 88.8h.01M576 409.3h.01M508.2 192.1h.01M662.8 184.5h.01M398 281.4h.01M523.8 428.7h.01M535 443.2h.01M615.9 195h.01M434.5 315.2h.01M903.1 40.4h.01M588.1 122h.01M417.4 238.4h.01M686.9 556.2h.01M672.2 307h.01M780.2 593.9h.01M411.9 597.7h.01M436.3 283.5h.01M646.6 338.1h.01M194.6 84.4h.01M488.3 284.5h.01M488.7 213.4h.01M537.5 421.8h.01M407.7 371.4h.01M432.8 210.9h.01M607.1 495.6h.01M331.3 158.7h.01M692 457.5h.01M396.6 254.6h.01M252.8 332.9h.01M337.8 82.1h.01M476.2 265.8h.01M177.1 8.1h.01M746.5 306.5h.01M849.1 357.5h.01M317.4 357.2h.01M364.1 361.9h.01M418.4 386.8h.01M92.9 459.8h.01M106.9 197.6h.01M753.4 115h.01M392.7 302.4h.01M447.5 590.4h.01M716.8 57.4h.01M551 379.2h.01M453.3 279.1h.01M354.6 114.2h.01M553 229.3h.01M893.2 295.4h.01M506 376.6h.01M547.2 365.5h.01M458.9 322.9h.01M461.9 530.8h.01M371.4 305.4h.01M450.4 127.7h.01M101.9 421.1h.01M773.9 200.8h.01M308.2 404h.01M618.9 235.8h.01M520.8 299.1h.01M703.2 23.4h.01M542 181.2h.01M552.8 355.5h.01M863.2 551.7h.01M569.5 302h.01M511 353h.01M643.5 386.9h.01M440.4 227.4h.01M389.8 256.4h.01M661.7 314.4h.01M237.4 403.5h.01M605.5 352.8h.01M374.7 252.5h.01M430.3 327.3h.01M289.8 128.5h.01M14.4 144h.01M707.7 171.8h.01M433.6 149.5h.01M693.3 205.7h.01M849.6 365.6h.01M739.5 125.7h.01M574.1 448.2h.01M416.5 295.3h.01M785 262.3h.01M466.9 528.4h.01M378.3 64.6h.01M443.3 263h.01M800.8 253.8h.01M544.3 223.9h.01M509.9 338.4h.01M204.9 162.5h.01M456.4 274.1h.01M35 363h.01M427.4 326.7h.01M596 338.4h.01M440.7 25.8h.01M514.5 48.3h.01M408.4 418.2h.01M138.1 47.7h.01M539.5 258.7h.01M532.6 257.4h.01M312.9 420.4h.01M542.5 278.6h.01M641.4 186.5h.01M517.1 225.5h.01M441.4 375.4h.01M368.9 229h.01M623.1 16.3h.01M783.2 316.8h.01M403.9 465.2h.01M280.6 18.9h.01M527.5 323.5h.01M23.5 370.2h.01M688.5 8.3h.01M699 590h.01M390.3 217.1h.01M332.7 310.2h.01M248.5 252.4h.01M319.3 596.8h.01M486.7 207.5h.01M448.3 260.7h.01M534.8 15.1h.01M818.5 398.7h.01M754.2 376.9h.01M609.2 436.7h.01M202.9 210.7h.01M62.2 599.3h.01M612.2 36.4h.01M372.5 234.1h.01M490.9 394.1h.01M698.5 535h.01M794 591.9h.01M444.3 487.2h.01M772.1 412.6h.01M811.8 251.8h.01M485.4 51h.01M412 230.4h.01M350.4 537.9h.01M513.1 319.1h.01M603.6 343.8h.01M447.7 363.7h.01M291.6 602.5h.01M550 418.4h.01M755.3 508.2h.01M461.8 47h.01M733 369.5h.01M189.5 489.7h.01M368.8 476.8h.01M461.2 393.3h.01M773.8 398.5h.01M592.7 236.1h.01M538.7 190.1h.01M425.3 246.3h.01M688.6 230.1h.01M202.2 94h.01M509.2 433.4h.01M575.5 538h.01M435.5 338.8h.01M500 330.1h.01M231.4 533.6h.01M458.1 399.3h.01M947.9 454.5h.01M718.6 518.9h.01M525 417.5h.01M465.6 301.5h.01M546.7 464h.01M798.6 32.8h.01M538.6 173.1h.01M429.4 331h.01M606.2 379.6h.01M360.7 182.5h.01M575.7 509h.01M580.6 392h.01M547.7 303.8h.01M369.7 170.8h.01M448.9 557.2h.01M818.1 251.7h.01M521.7 406.2h.01M596 93.7h.01M397.7 228.9h.01M135.7 97.4h.01M710.8 61.3h.01M187.3 265.5h.01M533.2 259.3h.01M744.2 522h.01M688.8 376.6h.01M180.8 238h.01M475.6 369.5h.01M338.6 293.5h.01M176.6 279.7h.01M471.3 320.6h.01M475 209.5h.01M619.6 292.4h.01M337.4 341.2h.01M382.7 316.2h.01M615.3 76.4h.01M560.6 186.1h.01M178.5 604.3h.01M409.2 257h.01M810.4 318.4h.01M371.2 309.8h.01M530.3 212h.01M476.2 445.4h.01M357.3 248.5h.01M600.2 330.7h.01M337.6 487.7h.01M622.8 203.4h.01M418.1 318.8h.01M317.1 442.4h.01M580.2 330.6h.01M177.1 211.9h.01M631.6 254.7h.01M188.4 204.1h.01M475.7 315.4h.01M463.6 352.8h.01M504.6 508.4h.01M203.1 64.7h.01M241.4 16.5h.01M628.6 465.3h.01M677.9 456.1h.01M613.2 157.8h.01M374.2 350.6h.01M552.2 94.4h.01M333.2 340.3h.01M520.1 28.1h.01M459.3 25.5h.01M554.2 342.6h.01M476.1 102.3h.01M523.2 490.7h.01M580.7 436.1h.01M491.8 289.3h.01M517.4 402.5h.01M556.6 345.5h.01M509.8 374.6h.01M510.1 443.4h.01M406 137.9h.01M440.6 332.6h.01M616.6 313.6h.01M633.3 554.6h.01M496.5 207.5h.01M361.6 476.7h.01M681.2 74.9h.01M197.3 182.3h.01M502.4 425.7h.01M403 48.5h.01M404.3 218h.01M87.1 150.8h.01M529.6 291.5h.01M319.9 118.2h.01M633.4 374.4h.01M781.4 103.1h.01M311.3 445.8h.01M489.2 326.4h.01M639.8 203.6h.01M348.4 107.1h.01M795.1 131.8h.01M548.6 333.2h.01M382.1 464.1h.01M627.4 211.2h.01M180.3 215.9h.01M194.7 193h.01M67.8 254.1h.01M274.4 383.6h.01M493 501.7h.01M630.9 215h.01M324.2 93.1h.01M772.7 243.4h.01M739.5 295.3h.01M475.5 185.2h.01M794.1 241.8h.01M564.6 214.6h.01M411.8 302.4h.01M561.1 315.7h.01M887.2 287.9h.01M378.2 163h.01M841.8 69.6h.01M243.9 619.7h.01M418.8 176.3h.01M911.9 162.9h.01M262.1 126.4h.01M577 202.8h.01M281.4 320.5h.01M281.6 341h.01M237.1 415.2h.01M461.2 288.7h.01M475.6 323.3h.01M384.3 290.1h.01M369.3 160.7h.01M337.3 452h.01M456.3 405.9h.01M648.9 347.8h.01M397.6 421.1h.01M547.4 314.5h.01M510.8 499.2h.01M884.1 473.7h.01M493.3 338h.01M275.7 262.2h.01M44.9 324h.01M421.8 303h.01M631.6 589.2h.01M121.8 173.6h.01M524.3 316.2h.01M533.9 372.6h.01M123.3 384.8h.01M614.5 416.1h.01M927.5 287.3h.01M550.8 234.3h.01M755.2 170.8h.01M230.8 203h.01M388.5 331.6h.01M257.1 480.7h.01M807.2 519.1h.01M733.1 590.7h.01M731.4 232.9h.01M348.6 173.3h.01M480 53.8h.01M464.6 254.1h.01M621.8 322.6h.01M493.7 291.3h.01M679.2 201.9h.01M358.1 245.7h.01M432.6 349.3h.01M389.1 338.3h.01M136.6 121.3h.01M439.1 171.2h.01M439.9 280.5h.01M531.5 552.3h.01M626.8 405.1h.01M560.4 528h.01M708.8 575.1h.01M346.6 425.2h.01M774.1 545.9h.01M363.7 629.6h.01M498.8 291.3h.01M306.4 468.7h.01M518.5 251.8h.01M448.2 297.1h.01M407.6 366.6h.01M597.9 188.5h.01M478.3 98.6h.01M725.9 425.2h.01M417.4 309.6h.01M580 466.7h.01M374.6 415.2h.01M397.3 315h.01M494.9 300.5h.01M67.3 213.2h.01M227.8 104h.01M39.7 237h.01M579.3 384.8h.01M244.1 372.8h.01M495.8 147.8h.01M745.4 92.2h.01M561.4 256.1h.01M312.4 550.7h.01M559.7 366.5h.01M253 18.4h.01M830.8 283.6h.01M441.9 300.3h.01M391.9 512h.01M555.9 274.1h.01M242.3 360.5h.01M508.4 347.3h.01M120.7 372.4h.01M739.3 208.7h.01M580 307.4h.01M608.2 134.7h.01M401.4 381.5h.01M748.9 224.7h.01M396.8 215.8h.01M270.5 138.8h.01M424 272.7h.01M439.3 414.3h.01M736.3 146.4h.01M626.1 268.3h.01M494.7 146.6h.01M529.3 248.2h.01M408.3 378.7h.01M349.3 170.7h.01M409.2 376h.01M378.1 316h.01M674.8 190.8h.01M300.6 402.3h.01M478.5 146h.01M385.9 295.8h.01M81.4 111.9h.01M540 159.7h.01M455.1 327.7h.01M276.6 265.2h.01M578.9 329.7h.01M354.2 331.7h.01M412.3 301.7h.01M932.9 490.4h.01M318.5 192h.01M819.5 112.7h.01M478.4 338h.01M659.2 453.8h.01M430 265.2h.01M518.5 49h.01M438 314.8h.01M786.3 194.1h.01M233 380.3h.01M598.6 164.1h.01M558.3 108h.01M684.2 76h.01M364.7 249.2h.01M339.9 519.9h.01M282.1 390.8h.01M230.9 398.4h.01M897.9 266.7h.01M154 553.1h.01M401.7 148h.01M171.4 19.9h.01M493.9 494.9h.01M582.2 174.2h.01M690.2 590.2h.01M556.8 319.6h.01M488.3 601.2h.01M61.8 99.8h.01M545.2 429.8h.01M203.8 156.4h.01M370 197.9h.01M626 323.9h.01M512.2 331.3h.01M778.2 448.5h.01M510.1 212.6h.01M160.9 346.5h.01M423.7 329.9h.01M245.8 462.5h.01M479.2 160h.01M711.2 362.6h.01M880.6 277.6h.01M374.3 390h.01M414.2 390.8h.01M330.6 339.8h.01M825.9 338h.01M515.7 627.9h.01M811.3 388.9h.01M478.3 298.5h.01M337.6 267.5h.01M238.5 527.1h.01M283.3 233.1h.01M443.7 318.5h.01M405.9 456.4h.01M170.4 352.8h.01M267.7 315.2h.01M359.8 560.2h.01M553.8 256.2h.01M439 370.5h.01M409.4 519.6h.01M369.2 331.2h.01M874.8 86.1h.01M298.1 268.2h.01M860.2 540.1h.01M495.4 420.1h.01M460.4 341.5h.01M741.7 287.5h.01M405.4 226.4h.01M534.7 339.9h.01M257.6 523.3h.01M87.6 475.6h.01M510 138.2h.01M512.6 309.8h.01M580.5 337h.01M420.9 392.6h.01M266.6 260.2h.01M728 611.2h.01M4 554.8h.01M495.1 187.3h.01M701.1 104.4h.01M67.3 512h.01M745.8 552.3h.01M399.8 116.4h.01M463.9 297.4h.01M553.9 410.6h.01M628.3 505.6h.01M489.5 355.4h.01M493.4 278.2h.01M511.3 352.5h.01M575 197h.01M567.9 375.9h.01M399.3 240.3h.01M470 283.5h.01M447 40.7h.01M723.8 324.2h.01M492.7 431.1h.01M440.6 571.5h.01M452.8 194.4h.01M476.4 302.3h.01M805.5 45.8h.01M795.5 422.9h.01M446.4 73.3h.01M390.9 180.2h.01M667.5 396.1h.01M543 221.6h.01M285 472.4h.01M567.4 154.1h.01M412.4 213.4h.01M549.5 559h.01M394.7 408h.01M619.7 295.3h.01M393 353.9h.01M648.1 290.1h.01M230.8 226.5h.01M863.4 284.8h.01M551.9 401.3h.01M440.6 341.3h.01M337.3 44.8h.01M453 101.8h.01M431.2 100.5h.01M614 87.4h.01M568.4 246.2h.01M518.7 531.7h.01M351.4 194.6h.01M635.6 215.7h.01M626.4 393.5h.01M610.9 442.3h.01M460.3 306h.01M415.2 383.5h.01M518 490.7h.01M480.3 332.4h.01M404.6 367.1h.01M561.2 167.8h.01M473.1 289.1h.01M540.9 396.3h.01M244.6 392.8h.01M615.3 286.1h.01M286.2 296.2h.01M363.2 492.8h.01M658.9 492.2h.01M778 362.5h.01M591.5 414.5h.01M343.6 389h.01M777.2 431.5h.01M435.3 14.6h.01M697.3 39.1h.01M436.2 342.4h.01M461.6 537.9h.01M148 19.1h.01M335.2 56.4h.01M699.9 378.9h.01M181.2 89.3h.01M528.7 486.3h.01M568.4 265.7h.01M579.8 229.8h.01M453.7 268.4h.01M19.3 329.8h.01M447.4 264.7h.01M478.3 209.9h.01M809.5 448.6h.01M406.4 213.3h.01M485.3 286.1h.01M372.3 191.8h.01M669.2 154.4h.01M493.5 145.5h.01M694.8 240.6h.01M521.1 64h.01M521.3 248h.01M923.2 47.8h.01M574.5 349.5h.01M329 298.1h.01M520.2 205.8h.01M866.2 144.9h.01M485.8 310.6h.01M247.2 569.1h.01M372.4 329.4h.01M606.2 244.2h.01M597.8 258.7h.01M467.8 79.1h.01M646.8 176.6h.01M283.4 317.1h.01M489.8 383.7h.01M700.6 67h.01M379.6 185.5h.01M386.7 580.7h.01M875.4 213.1h.01M560.6 162.6h.01M387.8 276.3h.01M100.7 157h.01M408.4 130.3h.01M507.7 317h.01M497.9 273h.01M392.1 431.3h.01M626.9 222.4h.01M365.7 345.4h.01M493 385.9h.01M506.9 125.8h.01M206.1 373h.01M448.1 248.2h.01M620.5 321.2h.01M355.6 475.9h.01M400.8 436.9h.01M379.8 204.8h.01M387.6 89.2h.01M491.4 461.9h.01M317.6 306.4h.01M476.6 287.7h.01M422.7 207.8h.01M548.4 359.3h.01M336.3 230.6h.01M402.3 409.7h.01M323.2 55.7h.01M377.5 243h.01M493.5 352.8h.01M361.6 239.6h.01M319 18.9h.01M670.9 318.9h.01M428.8 450.4h.01M629.5 207.6h.01M821 549h.01M263.5 291.1h.01M372.4 336.8h.01M526.7 601.3h.01M87.5 111h.01M513.8 139h.01M533.8 402h.01M358.9 243.8h.01M873.2 32.6h.01M797.7 545.5h.01M769.1 436.6h.01M483.2 230h.01M422.3 453.4h.01M281.3 509.5h.01M529.9 325.6h.01M557.5 392.3h.01M598.7 389.1h.01M600.6 396h.01M422.3 242.8h.01M742.7 552.8h.01M641.8 513.5h.01M552.3 314.4h.01M187.8 513.1h.01M303.3 361.7h.01M797.1 86.4h.01M486.2 284.4h.01M590.6 254.1h.01M322.1 430.7h.01M467.2 360h.01M632.1 605.9h.01M641.1 293.9h.01M579.9 477.8h.01M658.8 522h.01M501.5 378.2h.01M85.4 328.7h.01M698.9 106h.01M488.7 253.9h.01M405.5 430.5h.01M544.4 325.2h.01M311 291.2h.01M597.6 600.1h.01M235.3 410.2h.01M518.1 471.8h.01M601.4 220.6h.01M589.5 287.8h.01M600.7 609.7h.01M279.3 280.5h.01M640.7 471.2h.01M252.2 301.2h.01M548.9 277h.01M750.6 310.3h.01M308.3 475.2h.01M516.1 354.7h.01M459.3 244h.01M575.5 309.5h.01M531.9 211.9h.01M528.5 359.4h.01M179.9 217.6h.01M652.2 410.5h.01M206.4 474.2h.01M618.1 164.1h.01M516.1 95.2h.01M376.1 407.8h.01M321.8 317.2h.01M696.2 492.8h.01M749.3 25.2h.01M907.3 295.8h.01M401 228.2h.01M527 470.6h.01M326 381.7h.01M549.1 39.6h.01M638.8 338.6h.01M549.3 189.1h.01M500.3 379.2h.01M373.3 228.3h.01M833 541.7h.01M446.5 322h.01M640 306.1h.01M638.9 149.4h.01M566.1 256.4h.01M453.5 490.1h.01M68.1 402h.01M442.1 268.4h.01M513.3 136.1h.01M566 240.7h.01M518.3 254.7h.01M111.3 55.7h.01M299.8 193.6h.01M474.8 148.8h.01M607.2 377h.01M336.4 548.6h.01M588.2 511.4h.01M418.1 339h.01M563 181.8h.01M665.8 10.9h.01M314.8 225h.01M520.2 334.3h.01M560.5 116.9h.01M547.9 291h.01M371.1 40h.01M330.8 303.1h.01M684.3 324h.01M902.3 354.7h.01M523 250.1h.01M760 49.9h.01M373.2 389.2h.01M383.6 214.2h.01M591.7 181.2h.01M393.1 259.6h.01M386.3 285.9h.01M754.3 78.3h.01M335.1 627.4h.01M704 569h.01M688.3 406h.01M484.5 484.7h.01M504.4 399.5h.01M654.5 494.1h.01M620 273.8h.01M587.8 265.6h.01M642 468.9h.01M792.7 441.7h.01M297.3 446.4h.01M505.8 243.2h.01M569.2 457.1h.01M675 19.2h.01M356.7 315.9h.01M205.9 619h.01M645.3 478.9h.01M465.2 129.2h.01M574.3 152.2h.01M707.3 374.2h.01M314.1 129.3h.01M379.5 303.8h.01M523.4 211.8h.01M152.9 240h.01M606.8 265.5h.01M482.4 286.5h.01M403.7 10.3h.01M663.6 368.6h.01M464.6 283.4h.01M400.9 280.8h.01M447.2 265.8h.01M712.2 338.1h.01M800.3 58.5h.01M372.4 392.1h.01M337.3 417.8h.01M628.8 395.2h.01M703.4 481.8h.01M721 76.9h.01M569 381.7h.01M540.6 286.8h.01M942.6 409.5h.01M658.4 184.6h.01M527.5 268.1h.01M547.3 307h.01M476.3 201.7h.01M605 153h.01M178.5 165.3h.01M224.6 206.8h.01M585.8 192.9h.01M99.1 393.1h.01M160.5 360.3h.01M388.4 162.7h.01M555.3 323.5h.01M505.2 396.6h.01M374.6 230.5h.01M512.9 51.5h.01M781 234.9h.01M692.8 384.7h.01M478.7 193.8h.01M255.1 428.8h.01M489.5 592h.01M360.9 362h.01M478.5 268.7h.01M526.3 233h.01M644.2 287.6h.01M315.1 311h.01M405.3 350.3h.01M494.3 383.3h.01M477.5 285.4h.01M362.2 36h.01M942.1 75.2h.01M885.4 375.8h.01M95.6 146.2h.01M380.6 257.2h.01M602.7 333.2h.01M525.1 292.4h.01M639.7 574.9h.01M500.1 389.6h.01M435.9 143.2h.01M330.7 335h.01M558.3 424.8h.01M429 80h.01M727.7 441.5h.01M452.5 140.1h.01M307.7 334.7h.01M573.1 360.5h.01M546.3 592.2h.01M338.9 394.8h.01M813.4 95.8h.01M536.8 335.7h.01M763 370.9h.01M422 108.5h.01M509.2 199.6h.01M491.7 350.1h.01M474.6 332.5h.01M473.7 438.8h.01M605.3 43.7h.01M545.2 501.8h.01M255.4 184.6h.01M520 327.7h.01M105.7 121h.01M384 243.6h.01M634.8 349.6h.01M487.5 520.2h.01M670.4 237.2h.01M226.4 128.4h.01M634.9 261h.01M583.8 495.4h.01M362.6 462.7h.01M632.2 517.2h.01M291.8 350.6h.01M424.8 310.2h.01M272.7 368.6h.01M75.9 538.3h.01M629.4 435.8h.01M241.2 38.1h.01M402.9 337.5h.01M527.3 536.7h.01M358.9 351h.01M425.9 522.5h.01M397.2 432.6h.01M629.2 128.4h.01M919.7 336.2h.01M375 427.1h.01M697.6 407.1h.01M553 330.9h.01M858.7 173.6h.01M474 238h.01M358.2 6.7h.01M386 431.7h.01M433.3 120.2h.01M358.3 397.5h.01M807.8 308.3h.01M181.5 414h.01M752.3 59.9h.01M488.6 334.3h.01M615 380.5h.01M638.6 128.8h.01M483.2 281.1h.01M716.3 237.4h.01M66.8 292.1h.01M594.6 138.6h.01M703.6 438h.01M589.6 542.6h.01M481.9 217.6h.01M546.8 318.3h.01M744.9 304.7h.01M630.2 550.3h.01M709.1 204.9h.01M265.1 576.7h.01M236.8 297.2h.01M499.8 465h.01M824.6 540.9h.01M471.9 463.5h.01M808.8 230.4h.01M455.2 67.7h.01M658.1 473.9h.01M701.2 258.9h.01M566.7 238.7h.01M564.6 269.9h.01M126.3 179h.01M308.2 423.7h.01M722.7 213.7h.01M281.7 90.1h.01M446.9 319.4h.01M331.1 149.2h.01M256.7 453.4h.01M372.2 211.8h.01M359.6 584.9h.01M283.4 190.9h.01M479.2 563.8h.01M591.1 248.6h.01M584.9 161.8h.01M336 467.4h.01M505.1 410.8h.01M339 166.9h.01M229.5 359.3h.01M438.6 334.5h.01M468.9 616.7h.01M467.5 234.1h.01M856.7 304.5h.01M512.2 597.8h.01M859.9 214.4h.01M409.7 389.1h.01M231.3 214.9h.01M473.3 22.1h.01M17.6 502.4h.01M838.4 494.1h.01M166.3 8.1h.01M479.3 280.7h.01M172.1 105.7h.01M354.7 236.4h.01M480.4 375.1h.01M404.5 574.7h.01M412.8 264.7h.01M349.9 403.7h.01M391.6 360.2h.01M510.8 168.1h.01M381.2 326h.01M466.7 170.1h.01M541.5 222.4h.01M604.4 369.5h.01M540.4 380.4h.01M474.2 99h.01M567.7 455.3h.01M73 512.8h.01M274 262.1h.01M225.8 40.4h.01M84.8 330.3h.01M790.5 268.6h.01M595 322.6h.01M699.8 126.7h.01M478 258.2h.01M337 284.4h.01M558.5 379h.01M909.5 35.5h.01M288.8 38.4h.01M466.5 402.6h.01M296.2 378.2h.01M504.4 393.1h.01M566.7 266.2h.01M618.4 590.9h.01M582.1 289.4h.01M734.3 190.8h.01M325.4 306.5h.01M405.4 219.8h.01M735.7 217.8h.01M403.5 218.5h.01M836.3 415.4h.01M499 284.9h.01M604.9 409.2h.01M223 501.9h.01M864.2 435.3h.01M377.6 396.9h.01M529.5 288.8h.01M831.3 273.4h.01M456.9 256.3h.01M424.2 492.2h.01M261.8 65.5h.01M751.6 383.8h.01M61.7 68.3h.01M449.7 263.5h.01M556.8 484.6h.01M470.6 352.2h.01M421.7 426.8h.01M625.4 531.1h.01M17.2 301.5h.01M703 566.3h.01M234.7 444.4h.01M168.3 38.1h.01M499.4 357h.01M463.5 321.7h.01M755.4 366.5h.01M567.5 193.3h.01M750.9 387.2h.01M469.6 178.6h.01M534.5 541h.01M623.4 86.6h.01M347.1 391.8h.01M573 308.9h.01M254.8 155.3h.01M551.9 461.6h.01M547.4 272.5h.01M473.6 373.6h.01M386.7 308.3h.01M942.4 340.1h.01M56.5 406.3h.01M531 320.6h.01M388.4 271.2h.01M481.6 100.7h.01M493.6 513.3h.01M930 486.5h.01M762.1 81h.01M494.8 11h.01M775 451.5h.01M514.4 446.1h.01M535.8 566.5h.01M453.5 143.9h.01M253.2 283.5h.01M701.6 347.6h.01M338.4 547.2h.01M450.5 336.2h.01M314.4 176.9h.01M639.9 531.8h.01M628.7 333.8h.01M298.6 580h.01M365.9 325.8h.01M544.5 277.4h.01M536.8 464.6h.01M347 120.5h.01M486.9 252.5h.01M505 287.3h.01M447.5 292.9h.01M269.2 269.9h.01M542.3 156.5h.01M715.3 219.1h.01M847.6 554.3h.01M224.4 186.6h.01M623.1 162.9h.01M276.1 533.1h.01M776.3 516.9h.01M131.8 387.1h.01M800.6 627.8h.01M662.2 350.2h.01M947.3 300.8h.01M257.7 317.3h.01M498.5 362.4h.01M276.1 397.3h.01M608.6 291.3h.01M712.8 225.5h.01M625.4 345.6h.01M532.8 274.6h.01M892.7 379.3h.01M383.7 299.8h.01M516.6 260.3h.01M719.3 404.8h.01M374.8 246.6h.01M479.2 316.3h.01M458.7 479.6h.01M678.9 55.2h.01M516.6 423.2h.01M569.3 348.9h.01M501.8 353.8h.01M666.2 104.2h.01M262.1 66.6h.01M298.6 328.6h.01M490.7 299.5h.01M894.6 231.5h.01M285.1 441.3h.01M298.1 280.6h.01M193.1 212.6h.01M509.1 385.7h.01M359.1 223.5h.01M24.9 95.2h.01M489.1 275h.01M567.3 368.8h.01M528.4 281.4h.01M229.8 312h.01M448 522.5h.01M934.3 493.3h.01M482 302.8h.01M694.9 598.8h.01M516.9 171.1h.01M270.6 501.1h.01M614.7 388.6h.01M412.4 360.5h.01M455.4 382.4h.01M449 503h.01M830.7 549.6h.01M531.2 402.5h.01M603.5 358.7h.01M912.9 352.9h.01M241.7 318.8h.01M258.4 196.1h.01M223.9 473.3h.01M620.8 636.8h.01M600.6 616.5h.01M320.7 534.4h.01M268.3 165.2h.01M473.5 434.6h.01M530.5 217.3h.01M337.7 409.4h.01M77.3 631.4h.01M507.3 159.1h.01M287.4 258.2h.01M340.7 440h.01M381.9 138.2h.01M698.5 470.2h.01M458.7 56.3h.01M595.5 159.1h.01M371.5 383.6h.01M159.4 469.3h.01M424.7 393.4h.01M628.5 252.3h.01M526.4 265.9h.01M584.3 408.3h.01M383 295.8h.01M553.9 363.1h.01M356.8 491.4h.01M296.2 385.3h.01M513.9 580.1h.01M336.5 382.6h.01M445.2 271h.01M592.4 483.8h.01M342.2 288.4h.01M356 286.9h.01M570.1 207.6h.01M583.3 338.5h.01M353.1 335h.01M446.5 517h.01M590 534.8h.01M13.4 315.6h.01M283.7 234.1h.01M606.8 171h.01M410.7 186.4h.01M937.2 503.9h.01M395.5 290.9h.01M581.2 347.2h.01M505.8 272.7h.01M556.4 85.5h.01M478.8 107.5h.01M433.6 335.4h.01M363.7 396.5h.01M216.7 518h.01M302.1 481.4h.01M715.8 415.3h.01M627.3 102.5h.01M485.6 208h.01M482.9 222.8h.01M673.9 106.5h.01M823.6 225.8h.01M466.6 628.5h.01M587.2 529.8h.01M473.9 326.9h.01M538 482.2h.01M201 406h.01M421.4 471.3h.01M390.3 480.7h.01M389.1 145.3h.01M213.1 188.4h.01M493.9 284.8h.01M391.5 383.2h.01M525.2 402.7h.01M312 254h.01M699.9 184.5h.01M595 256.9h.01M514.6 320.7h.01M634.6 514.7h.01M292.8 279.8h.01M606.1 535.9h.01M510.1 188.2h.01M868.7 383.9h.01M478.7 244.4h.01M586.7 309.7h.01M622.7 433.2h.01M569.2 435.2h.01M507.2 338.6h.01M530.9 599.7h.01M426.2 423.3h.01M458.7 195.1h.01M435.4 168.1h.01M394.2 330.9h.01M547.9 291.1h.01M698.8 255.9h.01M446.4 202.3h.01M749.1 6.2h.01M3.3 294.5h.01M195.7 179.8h.01M541.4 43.3h.01M401 109.3h.01M532.8 276.5h.01M717.4 430.8h.01M73.7 126.3h.01M61.6 92h.01M136.7 190.6h.01M165.2 398.3h.01M752.9 530.2h.01M321.1 375.6h.01M812 225.2h.01M499 165.3h.01M336.1 435.7h.01M935.1 79.2h.01M643.9 388.6h.01M427.8 198.3h.01M392.4 267.7h.01M386.6 322.1h.01M312.6 449h.01M701.4 516.8h.01M174.5 166.6h.01M555.3 487.9h.01M448.4 261.7h.01M635.7 354.5h.01M659.9 125.4h.01M196.8 308.6h.01M481.9 155.6h.01M581.6 280.6h.01M331.3 249.8h.01M463.7 291.5h.01M577.3 337.6h.01M529.9 455.1h.01M500.7 358.6h.01M663.5 226.6h.01M497.3 275.3h.01M530.1 273h.01M426.7 71.3h.01M196.2 404.9h.01M531.7 211.9h.01M445.5 240.3h.01M240.5 556.8h.01M490.4 305.8h.01M878.4 526.5h.01M636 236.7h.01M732.8 88.1h.01M750.2 12.7h.01M319.8 348.9h.01M577.3 199.5h.01M365.8 222.2h.01M290.7 392.8h.01M214.4 141.2h.01M648.1 418.5h.01M789.7 328.1h.01M486.3 481h.01M341 27.8h.01M619 311.4h.01M566.7 291.3h.01M840.5 69h.01M563.2 168.5h.01M644.2 585.1h.01M547.2 386.5h.01M699.2 206.5h.01M484.4 571.5h.01M508.8 391h.01M126.5 23.1h.01M455.1 7.4h.01M455.9 66.2h.01M578 388.1h.01M567.5 332.9h.01M528.3 346.9h.01M456.1 334.3h.01M283.9 619.8h.01M456.1 480.9h.01M609.5 261.7h.01M101.8 180.2h.01M515.9 220.5h.01M682.5 127.1h.01M503.6 295.6h.01M746.1 510.7h.01M343.8 137.5h.01M454.7 338.1h.01M823.6 579.2h.01M414.4 444.3h.01M503 363.1h.01M521.3 322h.01M179.1 253h.01M120.7 313.4h.01M589.6 88.2h.01M336.8 219.7h.01M663.5 411.6h.01M533 223.4h.01M772.1 352.3h.01M256.6 508.8h.01M819.2 433.3h.01M686.5 354.2h.01M610.7 193.1h.01M82.5 372.9h.01M569.4 199.6h.01M773.9 498.5h.01M426.1 319.9h.01M455 234.4h.01M604.5 252.2h.01M262.8 470.8h.01M813.5 163.4h.01M836.9 310.9h.01M427.7 378.8h.01M640.1 136.9h.01M913.2 390.9h.01M322.6 524.9h.01M421.3 136h.01M517.8 67.4h.01M469.2 177.9h.01M675.6 481.2h.01M465.4 433.1h.01M437.2 403.5h.01M339.6 427.7h.01M409.9 314.3h.01M296.5 572.4h.01M428.1 241.5h.01M503.7 144h.01M479.9 431.9h.01M359 59.1h.01M527.4 271.3h.01M348.7 630.7h.01M89.7 313.5h.01M568.3 224.7h.01M714.3 262.8h.01M553.2 345.2h.01M511 453.7h.01M231.1 306.4h.01M371.6 187.8h.01M895.7 267.7h.01M335 490.4h.01M242.2 332.5h.01M448.1 383.7h.01M387.3 258.9h.01M501.8 500.9h.01M623.4 466.7h.01M516.4 205.3h.01M560.1 384h.01M226.7 414.2h.01M752.5 141.7h.01M420.5 163h.01M237.7 571.6h.01M515.9 222.6h.01M504.2 412h.01M421.3 195h.01M537.7 519.8h.01M689.4 462h.01M755 561.8h.01M213.3 360.5h.01M930.7 34.4h.01M306.2 301h.01M828.5 473h.01M333 316.9h.01M350.7 234.1h.01M380.3 233.2h.01M759.8 281.4h.01M446.5 467.2h.01M587.2 309.6h.01M225.2 89.2h.01M871.7 609.3h.01M533 241.4h.01M372.4 301.3h.01M846.5 238.5h.01M552.4 77.3h.01M720.9 396.6h.01M308.1 278.7h.01M442.9 214.3h.01M498.6 88.6h.01M324 113.4h.01M732.1 415.9h.01M574.8 245.3h.01M390.8 302.4h.01M862.3 261.1h.01M411.8 445.6h.01M516 296.8h.01M30.5 29.4h.01M443.3 252.8h.01M445.3 328h.01M351.8 301.9h.01M86.1 239.5h.01M429.6 363.9h.01M370.3 243.8h.01M301.1 59h.01M350 277.8h.01M492.9 308.5h.01M632.3 307.1h.01M544.5 325.2h.01M747.6 192.2h.01M600.7 267.3h.01M404.9 349h.01M617.6 294.9h.01M462.1 368.7h.01M493.6 446.8h.01M488.4 363.7h.01M476.8 4.9h.01M629.3 125.7h.01M538.2 376.2h.01M520 129.1h.01M96.1 296.1h.01M443.6 305.2h.01M697.9 259.3h.01M698.5 517.8h.01M412.2 589.7h.01M521.2 430.7h.01M597.4 294.4h.01M274.7 181.7h.01M568.9 375.8h.01M553.1 51.6h.01M314.8 336.6h.01M349.1 382.7h.01M903 41.7h.01M25.6 476.2h.01M211 408.6h.01M645.4 492.6h.01M215.3 199.5h.01M451.3 382.3h.01M167.8 362.1h.01M724.3 138.4h.01M828 184.3h.01M547.7 263.1h.01M107.3 176.3h.01M582.4 225h.01M380.6 409.1h.01M520.2 209.1h.01M662.8 232.1h.01M650.9 113.5h.01M406.8 255.7h.01M397.2 110.1h.01M696.6 341.2h.01M295.8 417h.01M128.8 81.4h.01M550.6 279.7h.01M304.9 287.8h.01M514.1 259h.01M773.7 277.9h.01M688 512.9h.01M926.5 555.9h.01M615.1 351.8h.01M508.5 378.6h.01M639.6 32.2h.01M266.3 212h.01M703.9 190.1h.01M745.7 529.4h.01M594.1 488.2h.01M400.5 129.8h.01M0.1 539.7h.01M916.8 413.1h.01M692 230.4h.01M508.3 241h.01M603 225.7h.01M514.5 270.1h.01M329.5 414.3h.01M376.7 174.4h.01M791 226h.01M354.8 488.3h.01M419.1 249.1h.01M545.1 168.2h.01M937 230.8h.01M532 135.8h.01M55.8 358h.01M488 469.7h.01M672 337.9h.01M128 165.7h.01M424.6 293.6h.01M695.4 165h.01M75 458.3h.01M448.6 424.8h.01M776.2 497.5h.01M390.9 279h.01M390.6 151.1h.01M416.8 521.4h.01M617.5 458.1h.01M786.6 411.7h.01M655.1 226.1h.01M488.9 339.9h.01M450.4 540.1h.01M841.4 186.7h.01M406.5 69.4h.01M452.3 97h.01M557 244.6h.01M376.2 617.4h.01M585.3 6.7h.01M579.8 45.1h.01M264.7 250h.01M573.9 407.5h.01M544.5 493.4h.01M307.6 401h.01M616.3 184.7h.01M700.1 378.9h.01M121.2 391.4h.01M273.2 366.6h.01M443 347.2h.01M415.9 200.2h.01M797.6 339.1h.01M507.9 444.8h.01M546.2 148.7h.01M666.2 520.3h.01M359.3 192.4h.01M743.1 371.6h.01M610.9 618.9h.01M518.8 238.7h.01M375.8 11.4h.01M395.4 20.7h.01M718.6 182.1h.01M527.6 151.6h.01M376.9 143.1h.01M250.4 291.2h.01M437.1 287.9h.01M602.8 357.6h.01M739.1 114.7h.01M944.5 528.4h.01M674.4 12.7h.01M583.5 603.1h.01M721.3 407.4h.01M270.6 192.8h.01M425.1 345.8h.01M351.3 191.6h.01M44 145.2h.01M171.6 281.4h.01M648.9 285.3h.01M95.2 511.7h.01M694.8 632.4h.01M45.3 38.9h.01M728.1 101.8h.01M589.3 316.3h.01M404.8 188.2h.01M781 459h.01M884.6 200.9h.01M522.4 531.3h.01M496.3 297.1h.01M802.4 619.8h.01M370.3 422.1h.01M704.1 382.6h.01M518 206.6h.01M652.6 443.8h.01M159.4 156.5h.01M343.6 93.2h.01M450 497.9h.01M197.4 460.9h.01M716.7 123.2h.01M531.6 292.7h.01M360.7 330.3h.01M700.4 10.5h.01M591.8 119.7h.01M34 315.1h.01M593.2 269.2h.01M723.5 398.9h.01M233.2 486h.01M924.8 290.9h.01M721.4 130.1h.01M455.9 439.8h.01M627.4 280.6h.01M580.6 329.9h.01M522.1 365.9h.01M230.2 483.5h.01M330.5 446.5h.01M580.1 145.7h.01M332.8 88.2h.01M178.4 464h.01M561.6 376.5h.01M139.9 321.6h.01M668.7 435.7h.01M487.2 403.6h.01M770.6 555.5h.01M108.2 537.4h.01M747.6 348.3h.01M706.2 298.2h.01M304.4 330.5h.01M934.5 17.4h.01M155.9 3.4h.01M564.7 336.3h.01M533.6 266.5h.01M543.2 448.8h.01M436.5 320.4h.01M507.8 313.9h.01M566.5 335.8h.01M233 114.5h.01M371.3 239.6h.01M677.3 346.1h.01M19 474.2h.01M563 587.7h.01M282.5 280.8h.01M363.7 533.9h.01M246.4 321.3h.01M511.5 440.2h.01M935.2 46.8h.01M622.1 287.2h.01M532 276.6h.01M689.7 145.1h.01M416.6 82h.01M391.9 429.3h.01M473.6 414.7h.01M467.8 258.5h.01M779.1 480h.01M405.9 606.8h.01M39 531h.01M573 325.5h.01M483.5 230.2h.01M448.2 52.6h.01M423.5 148.6h.01M391.7 253.9h.01M603.9 173.3h.01M531.8 113h.01M739.6 321.6h.01M302.5 173.9h.01M233.5 594.8h.01M201.4 526.6h.01M458.5 172.8h.01M507 335.1h.01M261.1 167.9h.01M592.6 385.1h.01M264.2 135.1h.01M17.3 590.1h.01M536.7 122.1h.01M636.9 16.2h.01M884.8 181.2h.01M495.4 448.7h.01M548.9 348.6h.01M525.6 240h.01M366.3 80h.01M158 149.5h.01M655.4 198h.01M564.9 374.3h.01M9.6 231.3h.01M615.5 197.4h.01M459.5 269.9h.01M527.4 296h.01M510.7 138h.01M333.5 309.9h.01M261 488h.01M276.9 64.9h.01M660.8 341.2h.01M725.1 230.9h.01M794.9 251.1h.01M484.2 108.4h.01M657.3 192.2h.01M746.6 380.7h.01M527 372h.01M676.6 366.2h.01M697.7 250.6h.01M437.2 380.8h.01M605 103.9h.01M507.3 269.4h.01M500.1 309h.01M538.3 305.6h.01M665.3 357.6h.01M294.6 293.2h.01M497.9 332.4h.01M639 430.9h.01M462.2 484.9h.01M567.1 571.5h.01M341.6 383.4h.01M511.4 183h.01M400.9 389.6h.01M83.7 328.9h.01M374.6 233.1h.01M410.6 69.6h.01M35.1 576.6h.01M498.1 334.4h.01M269.1 484.8h.01M718.8 67.3h.01M570.7 622.2h.01M555.6 430.8h.01M465.6 243h.01M85.2 6.2h.01M526.1 372.1h.01M458.9 207.7h.01M477.8 360.2h.01M533.1 412.2h.01M533.7 246.6h.01M357.8 475.6h.01M218.5 616.6h.01M705.1 483h.01M698.5 543.8h.01M420 279h.01M421.7 216.9h.01M517.5 591.3h.01M250.8 172.7h.01M676.6 573.2h.01M702.1 377.1h.01M553.2 323.4h.01M435.3 542.9h.01M445.5 252.4h.01M824.1 282.3h.01M152.9 273.3h.01M483.2 235.6h.01M878.7 509h.01M839.1 413h.01M534.8 487.2h.01M611.1 78.5h.01M462.8 177.8h.01M471.7 143h.01M379.8 322.6h.01M419.5 388.1h.01M339.2 372.5h.01M652.8 334.6h.01M431.7 144.2h.01M914.2 435.7h.01M575.3 284.4h.01M748.9 304.6h.01M538.2 138.4h.01M769.5 426.2h.01M346.1 361.4h.01M283.5 440.5h.01M232.6 296.6h.01M549 376.7h.01M494.9 19.4h.01M680.1 25.8h.01M234.3 249.5h.01M514.7 115.8h.01M624.6 155.3h.01M499.6 328.4h.01M465.6 635.4h.01M422.5 178.5h.01M7.9 270.9h.01M463.2 562.4h.01M551.5 406.6h.01M470.9 4.7h.01M401.5 198.4h.01M418.1 30.7h.01M616 431.9h.01M461 334.9h.01M515.5 437.2h.01M625.1 248.8h.01M320 514.5h.01M574.9 208.8h.01M216.7 337.8h.01M351.1 436.4h.01M349.3 589.6h.01M535 258.8h.01M677.3 586.8h.01M539.3 141.5h.01M556.7 487h.01M497.8 230.3h.01M520 165.8h.01M928.8 234.2h.01M699.5 296.5h.01M319.6 195.2h.01M535.1 250.9h.01M450.4 307.2h.01M582.9 278.2h.01M678.1 146.4h.01M377.3 310.6h.01M715.6 48.6h.01M644.5 623.8h.01M369 407.6h.01M414.4 345.6h.01M250.4 12.4h.01M369.1 345.9h.01M712.6 585h.01M567.4 552.2h.01M231.4 495.8h.01M317.4 209.8h.01M346 463.1h.01M543.1 197.6h.01M210.1 550.2h.01M177.3 426.2h.01M526.7 226.6h.01M433.6 304.2h.01M410 80.1h.01M484.1 406.1h.01M233.1 187.2h.01M560.2 133h.01M538.7 280.1h.01M391.7 21.3h.01M534.5 524.3h.01M579.4 373.6h.01M466.9 320.7h.01M397.6 109.7h.01M139.7 372.8h.01M559.3 636.9h.01M493.8 263.9h.01M545.9 454.4h.01M681.9 248.5h.01M309 245.2h.01M434.2 239h.01M190.6 126.2h.01M372.4 262.9h.01M215.3 468.1h.01M732.4 253.8h.01M459.1 543.5h.01M452.5 244h.01M514.7 248h.01M507.4 171.4h.01M512.7 334.4h.01M449 309.6h.01M458.3 597.5h.01M376.9 40h.01M475.7 298.1h.01M746.9 498.8h.01M277.3 506.3h.01M601 440.8h.01M652.6 565.7h.01M255.1 276.1h.01M383.7 145.1h.01M371.5 408.2h.01M525.3 341.5h.01M638.6 434.5h.01M629.5 462.7h.01M820.6 441.8h.01M506.2 603.4h.01M902.1 256.1h.01M436.1 374h.01M405.7 175.4h.01M212.7 181.3h.01M158.5 525.4h.01M309.1 467.7h.01M140.3 92.9h.01M420.2 399.5h.01M187.6 433.5h.01M434.4 241.1h.01M466.4 440.6h.01M885 600h.01M704.5 312.5h.01M666.4 365.9h.01M395.5 496.8h.01M681.1 325.5h.01M369 530.6h.01M603 379.8h.01M248.7 319.9h.01M651 309.2h.01M567.9 153.6h.01M541.4 537.1h.01M594.6 460.6h.01M332.5 130.1h.01M571.4 205.4h.01M264.2 122.2h.01M412.1 298.7h.01M600.7 293h.01M266.6 359.9h.01M525.8 183.4h.01M856.8 191h.01M328.8 264.6h.01M94.7 542.1h.01M555.1 400.2h.01M444.3 188.7h.01M595.7 187.3h.01M713.8 288.5h.01M296.9 429.6h.01M518.8 513.9h.01M590.7 204.8h.01M655.5 274.6h.01M719.1 616.8h.01M349.1 316.9h.01M464.9 265.9h.01M468.3 464.1h.01M545.6 411.7h.01M410.2 184.3h.01M193.9 94.3h.01M427.5 196.6h.01M887.6 360.8h.01M448.2 180.6h.01M410.4 28.4h.01M441.9 216.3h.01M294.8 347.3h.01M901.4 348h.01M550.8 418h.01M485 256h.01M40.9 12h.01M767.4 267.4h.01M687.9 87.3h.01M408.4 323h.01M469.9 164.9h.01M161.9 154.8h.01M387.4 528.3h.01M573 370.5h.01M595.5 199.3h.01M583.3 260.1h.01M311.6 308.1h.01M872.7 64.9h.01M465.5 414h.01M696.4 242.2h.01M482 176.2h.01M641.5 37.9h.01M265.9 77.5h.01M444.8 376.1h.01M688.6 615h.01M490.7 273.4h.01M438.7 549.5h.01M277.2 243.6h.01M618 362.9h.01M442.6 195.3h.01M300.9 339.5h.01M937.4 581.5h.01M324.7 384.6h.01M355.9 120h.01M471.1 490.5h.01M599.4 420.8h.01M190 176.8h.01M590.7 143.6h.01M489.8 432.2h.01M509.7 237.3h.01M549.9 345.1h.01M506.2 320.8h.01M825 54.8h.01M586.5 273.8h.01M478.5 210.2h.01M793.7 316.2h.01M545.5 211.3h.01M329.2 201.5h.01M778.9 258h.01M394.2 79.5h.01M608.4 30.4h.01M852.5 431.7h.01M475.5 280.8h.01M502 190.1h.01M347.5 275.8h.01M497.5 545.4h.01M221.7 72.8h.01M517.7 272.2h.01M488.9 240.9h.01M613.9 268.3h.01M613.9 20.7h.01M674.4 300h.01M420.7 293.6h.01M310.1 190.5h.01M613.3 297.8h.01M660.4 499.1h.01M107.4 129.3h.01M230.1 606.8h.01M572.5 412.4h.01M288.7 550h.01M136.5 172.3h.01M554 393.4h.01M472.3 502h.01M512.3 195.9h.01M626.6 110.4h.01M427 375.2h.01M150.6 555.1h.01M582.9 520.2h.01M675.7 549.2h.01M396.8 501.1h.01M442 266.6h.01M313.6 190.5h.01M713.2 290.6h.01M326 269h.01M428.9 404.7h.01M424 325.9h.01M936.2 169.3h.01M646.8 457.6h.01M437.7 249h.01M876.3 320.7h.01"/>
<path stroke-width="2.4" stroke-opacity="0.66" d="M874.5 189.7h.01M942.5 257.6h.01M142.2 99.2h.01M508.3 313.1h.01M403.9 157.1h.01M755.7 572.1h.01M308.7 452.8h.01M634.9 617h.01M548.9 565.9h.01M940.3 322.6h.01M688.2 463.4h.01M699 526.2h.01M813.9 215.4h.01M704 405.2h.01M791.4 37.4h.01M796.5 310.3h.01M366.6 173.4h.01M40.5 91.6h.01M391.2 262.3h.01M85.7 195.5h.01M635.5 469.9h.01M537.7 71.9h.01M230.8 356.2h.01M609.4 523.4h.01M3.4 626.3h.01M120.4 576.7h.01M384.7 338h.01M631.7 12.6h.01M94 561.2h.01M481.5 218.6h.01M590 345.5h.01M104.1 398.8h.01M680.4 503.4h.01M243.6 462.2h.01M469.3 305.8h.01M593.3 347h.01M371.3 331h.01M899.8 112.2h.01M152.1 323.4h.01M931.2 342.3h.01M414.1 418.8h.01M873.8 246.5h.01M155.6 59.4h.01M701.9 511.9h.01M568.1 186.7h.01M735.3 140.7h.01M471 628h.01M214.5 321.8h.01M87.4 323.3h.01M806.8 14.7h.01M78.6 198.4h.01M356.3 304.7h.01M282.7 266.1h.01M388 492.7h.01M33.6 338.2h.01M860.5 551.2h.01M250 607.5h.01M463.6 134.2h.01M89.6 166.3h.01M368.2 478.9h.01M133.9 24.1h.01M831 47.5h.01M837 492.4h.01M848 590.1h.01M69.4 263.4h.01M253.7 336.5h.01M535.9 568.1h.01M880.2 305.6h.01M828.6 77.3h.01M655.2 279.9h.01M159.2 485h.01M267.1 168.1h.01M467.9 141.4h.01M182.2 342.1h.01M208.9 576.4h.01M290.1 469.6h.01M266.7 438.1h.01M526.2 44h.01M208.3 502.5h.01M756 207.8h.01M319.4 231.3h.01M30.7 571.4h.01M302.1 124.8h.01M576.4 116.8h.01M809.2 4.3h.01M0.5 367h.01M278.3 375.3h.01M746.7 3.2h.01M269.5 185h.01M129.6 374h.01M807.5 179.9h.01M923.1 133.9h.01M601.6 263.5h.01M590.7 301.6h.01M459.8 616.5h.01M515.6 178.9h.01M486.7 246.6h.01M336.2 630.4h.01M430.6 527.6h.01M453.4 90.1h.01M535.7 130.9h.01M111 75.6h.01M891.4 634.9h.01M297.9 571.7h.01M888.5 22.6h.01M286.1 378.9h.01M168.5 6.9h.01M815.2 440.5h.01M895.9 295.5h.01M496.9 557.5h.01M307.7 67.6h.01M587 578.1h.01M150 284.9h.01M225.2 203.2h.01M307.9 232.6h.01M906 348.9h.01M619.6 334.8h.01M340.2 634.2h.01M316.5 236.8h.01M767.5 423.1h.01M528.2 488.5h.01M496.7 164h.01M503.2 281.5h.01M464.6 591.7h.01M516.5 260.5h.01M425.7 382.2h.01M341.4 237.6h.01M765 129.9h.01M789.4 428.3h.01M683.2 350.8h.01M378.3 602.5h.01M266.5 86.3h.01M449.1 189.1h.01M627.7 397.3h.01M15 560.3h.01M342.3 567h.01M894.6 378.5h.01M386.5 366.3h.01M724.5 149.7h.01M632.1 46.7h.01M453.2 104.9h.01M218.4 299.2h.01M504.4 223.7h.01M549.2 435.7h.01M320.4 263.6h.01M277.2 179.3h.01M555.8 451.9h.01M357.1 240.8h.01M829.5 64.5h.01M377.8 287.5h.01M489.6 91.9h.01M609.8 408.2h.01M541.7 345.5h.01M517.2 319.1h.01M580.1 158.8h.01M537 437.3h.01M613.6 464.4h.01M257.8 463.5h.01M390.4 367h.01M332.3 360.6h.01M574.2 435.4h.01M398.8 474.9h.01M425 262.4h.01M40.2 223.3h.01M57.5 359.3h.01M391 615.2h.01M224.7 414.9h.01M209.6 372.4h.01M665.4 370.6h.01M496.8 209.6h.01M610.3 409.5h.01M477.6 235.6h.01M389.4 306.2h.01M448.2 327.5h.01M366.8 317.6h.01M393 377.1h.01M405.1 232.1h.01M209.7 461.9h.01M718 393.5h.01M366.2 335.6h.01M268.8 35.4h.01M611.2 421.6h.01M302.7 210.4h.01M523.3 338.7h.01M391.1 216.9h.01M80.4 324.2h.01M401.2 350.6h.01M156.3 575h.01M495.5 176.2h.01M943 436.6h.01M440.9 385.4h.01M571.2 603h.01M618.2 292.2h.01M467.9 88.9h.01M444 314.3h.01M801.2 64.7h.01M530.4 250.5h.01M554.3 173.5h.01M302.5 348.9h.01M354.4 361.2h.01M574.4 167.2h.01M639.8 238.6h.01M550.8 362.7h.01M471.7 169.1h.01M662.3 138.7h.01M523.7 401h.01M584.7 373h.01M455.2 292.4h.01M704.4 525.2h.01M436.7 147.8h.01M487.5 338h.01M444.1 337.6h.01M429.6 607.4h.01M582 244.2h.01M423.3 280.7h.01M484.9 208h.01M654.1 257.7h.01M559.3 8.9h.01M515.8 82.1h.01M734.4 319.3h.01M185.6 452.8h.01M337.1 97.4h.01M477.8 435.2h.01M368 287.9h.01M522.1 370.3h.01M522.1 280.6h.01M375.3 304.3h.01M403.5 300.1h.01M446.3 230.5h.01M329.5 134.1h.01M501.5 488.5h.01M603.1 96.9h.01M858 618.2h.01M488.3 196.4h.01M529.5 328.4h.01M644.1 357.5h.01M672.4 313.6h.01M556.9 317.3h.01M556.6 292.4h.01M464.6 466.8h.01M722.1 122.1h.01M365.3 463.2h.01M922.3 72.2h.01M114.7 250.9h.01M441.3 338h.01M321.1 128.4h.01M566 567.7h.01M382.1 503.7h.01M392.5 266.9h.01M417.1 312.7h.01M492.5 467.6h.01M771 377.9h.01M413.2 326.2h.01M521 351.5h.01M452.8 14.2h.01M139.6 288.9h.01M605.4 133.5h.01M367.5 543.3h.01M518.4 397.6h.01M691.9 440.1h.01M663.7 108.5h.01M877.2 7.8h.01M374.5 384.3h.01M618 308.3h.01M86 293.1h.01M408.8 293.8h.01M623.5 256.1h.01M486.1 258h.01M634.2 175.9h.01M566.4 363.6h.01M922.6 387.1h.01M518.5 310.8h.01M395.6 200h.01M869.9 182.9h.01M379.1 426.1h.01M560.1 313.5h.01M648.3 329.9h.01M537.1 346.4h.01M434.1 122h.01M503.1 567.2h.01M433.8 384.7h.01M525 268h.01M683.5 72.3h.01M307.1 450.9h.01M169.1 233.4h.01M467.7 537.1h.01M726.4 510.4h.01M510.6 246.3h.01M562.6 398.1h.01M602 207.9h.01M500.3 147.7h.01M248.4 378.8h.01M491.1 611.2h.01M604.9 616.9h.01M523.1 175.2h.01M606.4 235.6h.01M472 358h.01M456.1 287.2h.01M404.3 474h.01M794.1 260.4h.01M170.7 364.3h.01M538.6 507.5h.01M186 579.9h.01M363 106.4h.01M564.2 263.3h.01M662.4 451.1h.01M504.1 264.2h.01M867.9 560.9h.01M500.7 279.9h.01M418 356h.01M539.1 583.1h.01M550.7 299.1h.01M544.8 243.3h.01M288.2 354.9h.01M600.7 268.5h.01M337.9 482.1h.01M519.5 234.5h.01M337.4 469.5h.01M424.3 317h.01M628.7 624h.01M431.6 363.9h.01M594.7 326.6h.01M385.8 330.4h.01M260.9 440h.01M347.1 16.9h.01M542.9 176.2h.01M520.4 342.8h.01M403 384.8h.01M471.7 633.5h.01M423.5 282.6h.01M591.6 393h.01M278.6 295.8h.01M657.9 185.8h.01M517.2 324.4h.01M497.9 431.5h.01M496.3 300.7h.01M686.1 165.6h.01M329.4 223.4h.01M400.2 318.1h.01M444.2 246.6h.01M613.7 255.9h.01M488.7 446.2h.01M418 351.4h.01M923.3 367.7h.01M516.2 411.6h.01M538.6 285.4h.01M569.2 269.6h.01M464.7 181.4h.01M623.6 112.3h.01M868.9 143.3h.01M468.6 159.5h.01M631.2 255.6h.01M596 460.8h.01M547.5 278.9h.01M354.8 293.3h.01M468.6 580.6h.01M478.6 393.5h.01M392.9 257.4h.01M546.4 293.4h.01M485 341.4h.01M91.2 22.5h.01M165.9 403.7h.01M442.4 119.2h.01M557.9 363.7h.01M331.4 160.1h.01M273.4 25.6h.01M693 198.9h.01M506.6 112.6h.01M439.7 291.6h.01M661 332.6h.01M422.5 333h.01M736.4 255.1h.01M696.6 243.2h.01M768.5 385.1h.01M776.4 452h.01M444.4 360.2h.01M635.1 518.9h.01M569.8 471h.01M839.7 272.2h.01M429.7 493.9h.01M516.7 404.3h.01M181.4 280.3h.01M803.9 345.1h.01M514.8 399.2h.01M324.4 218.9h.01M538.3 296.2h.01M465.3 295.2h.01M186.4 271.5h.01M413.6 378.2h.01M541.2 585.7h.01M411 178.2h.01M654.1 284.4h.01M869.7 168.7h.01M312.7 329.5h.01M421 453.7h.01M458.5 355.2h.01M512.8 220.9h.01M341.3 516.9h.01M44.9 63.3h.01M670.9 374.4h.01M437.4 418h.01M460.5 50.2h.01M619.1 394.6h.01M359.4 319h.01M632.3 105h.01M692.2 532h.01M621.8 363h.01M510.1 329.9h.01M515.5 223.5h.01M69.7 466.4h.01M583.8 240.3h.01M431.3 491.8h.01M483.1 72.7h.01M473.7 260.5h.01M330.5 210.1h.01M443.9 66.5h.01M613.7 306.9h.01M439.7 189h.01M791.7 292.1h.01M74.1 176h.01M572.4 355.8h.01M398.5 327.4h.01M445.4 298.3h.01M655.4 137.7h.01M669.6 209.7h.01M426.5 305.3h.01M726.2 249.3h.01M532.9 178.4h.01M467.6 386.5h.01M398.3 572h.01M372.5 224.6h.01M609.3 131.7h.01M323.1 309h.01M761.3 367.1h.01M451.1 332.8h.01M453.5 349.9h.01M849.9 482.1h.01M541.2 287.5h.01M434 66.2h.01M467.6 106.2h.01M444.3 294.6h.01M624 185.6h.01M487.1 412.6h.01M546.7 568.4h.01M672.5 324.5h.01M674.4 552.1h.01M152.6 432.3h.01M451.3 581.5h.01M557.9 390.8h.01M383.1 601.9h.01M610.8 405.8h.01M257.8 331.8h.01M529.5 319h.01M554.8 620.6h.01M221.6 346.5h.01M328.7 321.7h.01M733.9 271.6h.01M247.3 215.2h.01M560.7 230.5h.01M388.8 552.7h.01M553.9 357.5h.01M465.7 310.7h.01M566.8 304.2h.01M489 208.7h.01M434.2 203.9h.01M813.3 337h.01M494.9 314.9h.01M409.9 300.1h.01M589.3 210.4h.01M28.4 93.6h.01M416.1 325.6h.01M336 389.9h.01M426.2 353.3h.01M569.9 148.4h.01M471.6 359.7h.01M170 279.8h.01M303.6 389.7h.01M755.4 300.8h.01M633.2 195.6h.01M393.4 295.1h.01M513.5 442.8h.01M158.7 2.9h.01M547 452.8h.01M939.5 524.4h.01M298 610.5h.01M618.7 3.1h.01M658.2 90.4h.01M349.4 319.7h.01M539.2 379.3h.01M765.2 434.2h.01M453.8 336.1h.01M700.7 109.2h.01M457 368.6h.01M587.8 246h.01M446.5 314.5h.01M384 409.4h.01M713.4 493h.01M501.5 452.1h.01M707.8 560.6h.01M239.8 97.7h.01M378.8 511.6h.01M489.7 560.2h.01M627.1 170.6h.01M492.9 243.8h.01M408.4 294.5h.01M663.8 231.1h.01M464.8 168.1h.01M566.2 227h.01M642.4 307.8h.01M640 400.5h.01M461.5 320.5h.01M648.7 110h.01M679.8 289.3h.01M743.7 264.5h.01M436.8 255.8h.01M493.1 290.7h.01M538.5 415.6h.01M651.8 138.1h.01M207.7 359.8h.01M208.8 375.8h.01M579.1 388.7h.01M343.4 127.2h.01M373.1 362.7h.01M473.1 196.4h.01M618 362h.01M514 303.5h.01M632.3 213h.01M363.1 286.3h.01M366.1 369.7h.01M428.9 377.7h.01M465 465.2h.01M423.2 245.4h.01M463.9 373.6h.01M892.5 475.5h.01M376.7 259.6h.01M305.5 618.3h.01M449.6 223.2h.01M471.2 411.6h.01M292.1 482.1h.01M200.2 349.7h.01M759.2 268.1h.01M119.4 249.8h.01M486.7 292.2h.01M861.2 145.4h.01M376.4 333.3h.01M551 358.3h.01M594.9 288.6h.01M52.2 457.1h.01M552.8 276.3h.01M765.2 360.2h.01M410.4 384.6h.01M461.1 168.9h.01M570.2 309.4h.01M454.7 296h.01M613.3 301.8h.01M614.9 574.2h.01M356.9 378.2h.01M396.1 194.5h.01M460.7 326.9h.01M389.5 251.7h.01M665.7 299h.01M398.4 200.2h.01M378.7 480.7h.01M476.9 471.3h.01M687.9 574.1h.01M311.9 365h.01M541.6 306.6h.01M489.1 556.9h.01M474.8 525.6h.01M454 237.5h.01M665.8 393.7h.01M510.3 212h.01M472.7 363h.01M563.1 561.3h.01M302.5 505.1h.01M595.6 407.5h.01M858.8 81.4h.01M556.1 221.8h.01M450.7 276.9h.01M791.8 326.1h.01M353.8 344.9h.01M408.9 337.8h.01M400.6 192.1h.01M530.5 225h.01M224.5 374h.01M933.4 621.6h.01M296.5 421.6h.01M448.3 311.7h.01M277.5 122.6h.01M398.9 396.3h.01M349.5 241.2h.01M756.7 568h.01M249.5 303.2h.01M575.8 207.9h.01M887.1 433.6h.01M621.9 279.8h.01M459.5 50.6h.01M380.8 265.3h.01M281.2 293.1h.01M573.1 403.8h.01M533.9 321.4h.01M229.6 351.8h.01M439.6 551.6h.01M215.7 157.5h.01M493.1 427.8h.01M274.1 206h.01M371.6 570.3h.01M734.7 77h.01M676 259.3h.01M490.2 425.9h.01M568.2 98.3h.01M502.4 301.8h.01M773.2 80h.01M482.6 602.3h.01M598.9 404.1h.01M791.9 133.3h.01M304.7 402.2h.01M372.1 260.8h.01M380.4 397.2h.01M475.9 292.9h.01M421.1 276.6h.01M579.8 415.1h.01M578.9 296.1h.01M440.2 243h.01M510.1 249.7h.01M388.7 235.8h.01M448 478.5h.01M537.8 217h.01M263.6 146.7h.01M442.9 348.5h.01M444.6 463.8h.01M500.5 389.6h.01M383.8 338.9h.01M526.1 252.1h.01M565 354.1h.01M340.6 410.7h.01M564.6 417.1h.01M835.7 291.4h.01M548.4 324.8h.01M394.2 309.5h.01M634 201.5h.01M926.2 19.8h.01M454.2 355h.01M275.9 600.1h.01M565 306.9h.01M698.9 548h.01M539.9 224h.01M672.3 226.6h.01M455.5 256.7h.01M533 194.9h.01M679.3 407.6h.01M604 391.1h.01M622 591.9h.01M315.4 355.4h.01M623.5 198.9h.01M488.6 137.9h.01M408.1 369.8h.01M379.4 316.3h.01M590.4 314.4h.01M801.3 235h.01M228 419.3h.01M438.8 292.2h.01M581.3 189.1h.01M608.3 133.9h.01M460.8 301.5h.01M508.9 69.7h.01M452.7 326.8h.01M508.3 125.2h.01M502.3 315.1h.01M490.1 351.8h.01M550.9 433.3h.01M445.8 457h.01M449.9 365.9h.01M804.4 461.6h.01M311.4 380.3h.01M249.1 5h.01M394.7 587.5h.01M430.4 387.9h.01M553.5 325.3h.01M433 248.5h.01M100 370.7h.01M525 329h.01M786.2 204.3h.01M468.6 272.3h.01M560.9 430h.01M445.2 297.5h.01M320.2 345h.01M459.6 239.5h.01M831.4 252.9h.01M405.5 134h.01M538.1 447.5h.01M653.2 266.7h.01M50.6 250.6h.01M452.8 296.8h.01M520 373.7h.01M799.6 514h.01M497.1 268h.01M664 298.6h.01M430.7 35h.01M274.6 184.2h.01M241 260.1h.01M638.9 495.7h.01M518 331.6h.01M447.2 347.2h.01M604.2 392.7h.01M299.5 444.2h.01M461.9 409.9h.01M474.6 319.1h.01M513 534.4h.01M310.6 259h.01M510.9 296.8h.01M485.7 309.3h.01M875.4 467.1h.01M374.3 244.3h.01M518.6 312.4h.01M412.5 274.2h.01M936 369.6h.01M374.5 135.8h.01M539.5 323.4h.01M528.6 529.2h.01M565.7 341.8h.01M545.1 200.4h.01M86.5 98.9h.01M450.2 350.8h.01M469.7 255.1h.01M509.2 353.2h.01M582.1 406.4h.01M467.8 392.1h.01M496.1 202.8h.01M386.7 383.6h.01M393.5 238.8h.01M194.9 337.3h.01M575 344.6h.01M423.1 518h.01M501.7 407.5h.01M501.9 633.4h.01M538.6 463.9h.01M596.7 132.7h.01M178.4 319.2h.01M527 349.4h.01M666.8 252.1h.01M592.9 489.9h.01M498.6 374.4h.01M364.5 448.9h.01M363.2 531.6h.01M438.2 267h.01M935.4 495.1h.01M547.1 323.8h.01M626.9 374.1h.01M419.7 323.7h.01M513.9 345.3h.01M386.5 275.7h.01M575.9 328.1h.01M343.7 596.3h.01M528.8 503.7h.01M547.2 422.4h.01M530.6 351h.01M494.7 256.7h.01M200.5 267.1h.01M567.6 302h.01M480.2 185.3h.01M394 354.7h.01M363.8 325.5h.01M779.4 81.9h.01M589.5 551.2h.01M401 89.3h.01M383.5 17.8h.01M527.7 333.8h.01M584.9 342.9h.01M354.2 466h.01M424.3 527.3h.01M309.4 229.3h.01M368.5 176h.01M856.5 340h.01M903.1 98.8h.01M452.7 335.6h.01M546.7 326.9h.01M247.9 232.1h.01M492.1 220.2h.01M312.2 361.2h.01M563.9 212.4h.01M748.7 403.3h.01M446.8 529.8h.01M351.6 259.5h.01M564.6 324.1h.01M610.7 378.4h.01M556.1 226h.01M788.8 584h.01M288.2 51h.01M239.5 584.7h.01M681.7 60.4h.01M604.1 263.8h.01M395.8 584.3h.01M392.8 354.5h.01M804 92.8h.01M406.1 271.3h.01M426.5 188h.01M417.7 490.7h.01M367.7 523.7h.01M590.5 351.6h.01M381.5 284.8h.01M817.1 135.8h.01M608.1 383.1h.01M238.9 370.9h.01M436.4 402.4h.01M367.4 471.3h.01M398.6 145.5h.01M404.5 378.4h.01M612 283.2h.01M633.7 358.4h.01M530.1 216.2h.01M499.5 421.7h.01M432.1 385.6h.01M384.4 181.1h.01M466 266.7h.01M575.6 363.7h.01M691.3 360.4h.01M598.1 419.3h.01M180.8 479h.01M352.7 521.5h.01M711.5 487.9h.01M316.3 439.5h.01M558 71.1h.01M386.7 540.5h.01M540 348.6h.01M471.9 201.2h.01M222.8 616.1h.01M820.5 297.3h.01M926.5 399.6h.01M551 338.5h.01M423.1 428.1h.01M616.4 522.9h.01M320.4 345.3h.01M509.3 330.5h.01M510.7 477.9h.01M705 617.8h.01M487.9 538.8h.01M711.9 428.3h.01M594.1 408.8h.01M407.5 461.8h.01M624.4 49.6h.01M545.4 236.5h.01M439.9 347.8h.01M669 251.9h.01M417.4 391.3h.01M203.5 552.7h.01M384.9 247.6h.01M552 298h.01M512.1 430.6h.01M75.5 242.2h.01M498.6 246.7h.01M593.5 326.9h.01M799.3 417.5h.01M591.4 93.5h.01M518.3 205.8h.01M840.9 576.1h.01M506.3 467.3h.01M435.9 329.4h.01M337.3 376.7h.01M678.4 402.1h.01M715 348.5h.01M301.2 414.1h.01M422.9 280.9h.01M500.6 479.2h.01M653.4 261.2h.01M593 380.5h.01M634.2 426.8h.01M427.3 220.6h.01M457.9 172.2h.01M323.8 483.2h.01M622.9 274.9h.01M635.2 559.9h.01M505.2 262h.01M633 259.2h.01M246.7 177.1h.01M503.4 516.4h.01M474.5 480.6h.01M428.2 521.9h.01M595.9 288.1h.01M496.8 405.9h.01M446.2 572.2h.01M514.8 317.9h.01M440.7 220.4h.01M579 429.1h.01M565.1 387.9h.01M689.4 412.7h.01M536.7 388.1h.01M596.9 320.9h.01M497.2 197.6h.01M359.5 328.2h.01M557.3 129.1h.01M36.4 292.5h.01M493.2 269.9h.01M654.4 394.3h.01M429.3 527.7h.01M626.7 333.9h.01M105.1 348.8h.01M96.7 391.8h.01M449.4 276.6h.01M253.4 333.4h.01M227 208.8h.01M364.5 221.2h.01M486.3 375.1h.01M579.3 305.3h.01M439.3 229.9h.01M525.1 468.7h.01M290 306.2h.01M354.7 99.2h.01M567.7 439.8h.01M486.3 340.3h.01M550.9 229.5h.01M781.3 555.9h.01M583.9 58.5h.01M543.7 65.6h.01M626.3 199.4h.01M358.1 156.2h.01M940.7 335.1h.01M789.9 223.8h.01M606.1 177.4h.01M587.6 437.5h.01M209.3 523.8h.01M399.4 383.5h.01M375 294.9h.01M408.8 364.9h.01M470.4 185.1h.01M27 527.1h.01M419 238.1h.01M516 269.7h.01M6.4 316.2h.01M690.2 460.9h.01M453.6 391.5h.01M542.1 419.7h.01M539.6 350.2h.01M675.6 172.3h.01M460.6 359.9h.01M496.2 237.4h.01M496.6 327h.01M890.8 321.9h.01M793.9 224.2h.01M301.9 343.4h.01M117.7 15.7h.01M382.2 243.2h.01M176.3 278.3h.01M761 174h.01M590.1 318.2h.01M481.6 312.7h.01M335.2 448.6h.01M547.6 305.2h.01M531.8 544.5h.01M603.8 371.4h.01M590.8 18.7h.01M436.8 427h.01M450.4 276.3h.01M490 166h.01M439.6 268.9h.01M556.6 408.5h.01M436.9 325.9h.01M75.9 123.9h.01M324.7 197.6h.01M508.7 14.5h.01M377.8 251.1h.01M479.8 156.6h.01M299.3 206.1h.01M530.1 405.6h.01M497.5 145.9h.01M376.4 590.4h.01M609.9 100.9h.01M594.2 47.3h.01M210.9 448.3h.01M543 224.7h.01M729.3 330h.01M680.1 379.2h.01M432.1 411.9h.01M398.7 454.7h.01M573.6 287.6h.01M602.3 579.7h.01M670.6 110.4h.01M696.3 27.7h.01M714.8 257.4h.01M487.4 482.6h.01M616.2 97.3h.01M413.1 343.6h.01M318 126.8h.01M626.4 574.8h.01M520.4 382.8h.01M412.3 7.3h.01M332.5 11.4h.01M745.1 525.3h.01M584.2 311h.01M568.7 352h.01M321.3 380.6h.01M246.3 209.6h.01M329.8 304.6h.01M406.4 117.8h.01M704 552.2h.01M350.1 225.6h.01M569.3 424h.01M385.6 187h.01M455.8 320h.01M452 312.1h.01M469.4 300.4h.01M255.6 621.5h.01M505.7 198.2h.01M487.3 233.5h.01M501.8 282.6h.01M507.4 344.1h.01M482.3 242.5h.01M252.9 220.3h.01M852.6 291.3h.01M707.5 111.8h.01M571 378.5h.01M618.1 475.7h.01M500.9 234.2h.01M269.1 212.5h.01M268.4 508.5h.01M244.7 182.1h.01M664.5 515.3h.01M482.3 63.4h.01M142.7 420.7h.01M481.8 294.3h.01M550.8 101.2h.01M442.1 416.7h.01M284.9 322.2h.01M573 306.7h.01M634.3 257.9h.01M621.6 172.6h.01M533.1 281.5h.01M13.6 175.6h.01M592.5 494.1h.01M451.8 269.8h.01M659.3 163h.01M576.8 421.4h.01M640.7 300.4h.01M533.6 418h.01M616.7 374.7h.01M389.5 444.6h.01M812.8 171.6h.01M491 94.1h.01M527.2 387h.01M685.4 522.4h.01M529.1 331.7h.01M476.2 397h.01M390.4 331.4h.01M495.8 277.4h.01M480.8 11.2h.01M313.4 107.9h.01M281.8 231h.01M614.1 23.1h.01M480.9 295.7h.01M492.9 581h.01M390.1 232.3h.01M343 273h.01M460 400.5h.01M517.8 227.3h.01M178 486.6h.01M704.8 395.1h.01M451 347.6h.01M517.4 229.7h.01M441.7 480.8h.01M467.6 373.2h.01M512.2 113.9h.01M548.5 203.8h.01M495.5 217.6h.01M867.7 579.3h.01M609.1 229.8h.01M364.9 384.6h.01M312.1 248.7h.01M436.5 273.5h.01M377.8 115h.01M476.2 113.1h.01M324.4 239.6h.01M417.1 337.4h.01M533.6 286.8h.01M450.4 330.4h.01M445.4 445.3h.01M708.2 198.9h.01M538.5 238h.01M396.7 335.4h.01M41.7 210.2h.01M662.2 408.8h.01M684.3 84.6h.01M276.6 254.7h.01M667.7 371.7h.01M582.8 210.9h.01M441.8 346.5h.01M335.3 535h.01M474.6 103.6h.01M243.7 201.8h.01M674.4 188.3h.01M849.5 324.7h.01M166.6 298.5h.01M378.1 256.4h.01M369.6 22.6h.01M111.9 68.1h.01M619.6 239.9h.01M199.1 329.7h.01M453.2 331.4h.01M762.4 470.3h.01M552.3 160.3h.01M373.1 545.8h.01M593.5 273.4h.01M527.8 177.2h.01M278.4 334.9h.01M364.4 210h.01M899.6 206.6h.01M284.3 80.8h.01M194.8 269.6h.01M583.5 10h.01M228.9 451.4h.01M63 459.6h.01M675 189.7h.01M657.8 255.5h.01M28.3 104.4h.01M645.8 490.8h.01M656.3 276h.01M268.2 467h.01M522.6 187.5h.01M695.9 101.6h.01M589.9 253.8h.01M525.6 338.6h.01M633.2 531.4h.01M503.2 384.5h.01M363.1 378.6h.01M460.3 336.1h.01M612.9 235.7h.01M520 239.5h.01M676.8 270h.01M457.4 325.1h.01M403.9 409.4h.01M420.7 561.2h.01M555.1 303.5h.01M553.7 321.2h.01M728.3 473.3h.01M530.3 189.5h.01M484.1 351.2h.01M552.7 240.7h.01M228.5 512.2h.01M664.1 362.5h.01M342.4 380h.01M344.2 321.6h.01M532.4 521.3h.01M568.3 354.9h.01M338.6 288h.01M488.6 245.9h.01M473.5 408.7h.01M602.6 474.8h.01M445.8 285.8h.01M496.9 369.8h.01M472.8 325.5h.01M570.6 263.8h.01M519.9 134.7h.01M543 59.6h.01M701.5 237.5h.01M658.3 286.9h.01M368 111h.01M556.4 167h.01M585.3 312.6h.01M529.5 277.7h.01M362 305.8h.01M400.2 496.1h.01M526.1 323h.01M595.5 294.6h.01M480.6 426.1h.01M434.5 361.5h.01M445.9 503.2h.01M437.6 582.6h.01M455 506.9h.01M740.2 273.8h.01M323.5 243.5h.01M416.5 297.9h.01M287.8 402h.01M721.9 269.8h.01M493 486.9h.01M460.8 263.2h.01M403.1 380.7h.01M753.2 331h.01M528.7 245.9h.01M213.1 181.6h.01M691.1 104.8h.01M537.6 320.2h.01M664.4 351h.01M454.5 333.7h.01M609.4 316.9h.01M514.9 353.8h.01M812.8 317.7h.01M183.9 338.3h.01M338.7 109.4h.01M580.4 336.4h.01M912.2 47.4h.01M505.6 333.1h.01M653.9 466.3h.01M367.3 195.5h.01M207.3 353.3h.01M242 524.3h.01M883.7 115.4h.01M224.4 477.3h.01M558.9 320.6h.01M599.3 203.6h.01M369.5 491h.01M374.2 282.2h.01M402.6 381.4h.01M48.9 461.2h.01M221 225.8h.01M743.4 211.7h.01M535.3 21.7h.01M761.1 128h.01M414 180.4h.01M301.9 353.4h.01M383.1 444.7h.01M554.5 33.7h.01M158.6 535.1h.01M687.3 38h.01M356.5 514.5h.01M52 609.6h.01M365.1 547.8h.01M519.3 324.9h.01M498.2 381.8h.01M584.7 424.1h.01M280.7 212.2h.01M456 347.4h.01M399.3 336h.01M840.4 51h.01M605.3 293.3h.01M654.3 471.4h.01M311.4 373.1h.01M318.2 256.7h.01M454.4 190.4h.01M716.4 223.6h.01M435.8 440.7h.01M452.7 467.9h.01M295.5 59.6h.01M417.2 424.6h.01M564.7 210.9h.01M593 311.5h.01M565.3 245.5h.01M654 384h.01M354 295.7h.01M467.9 315.7h.01M490.8 356.2h.01M567.3 418.8h.01M446 282.8h.01M479.9 154h.01M624 355.2h.01M554.2 600.8h.01M502.7 262.8h.01M195.1 304.1h.01M658.2 389.8h.01M276.5 457.9h.01M215.2 204.3h.01M537.9 294.3h.01M435 622.1h.01M349.5 360.9h.01M865.9 29.8h.01M727.8 558.5h.01M537.1 200.1h.01M350.7 183h.01M937.6 226.4h.01M631.3 362.9h.01M628.3 48.2h.01M96.9 373.1h.01M551.1 500h.01M542 264.1h.01M478.1 294.5h.01M305.8 390.5h.01M642 275.9h.01M398.6 215.4h.01M637 181.6h.01M675.4 284.2h.01M543.2 328.1h.01M475.1 279.6h.01M404.9 300.8h.01M487.7 291.1h.01M501.4 314.5h.01M350.9 109.2h.01M303 324.7h.01M433.5 136.1h.01M591.8 415.1h.01M415.9 222.6h.01M500 232h.01M645.9 450.3h.01M507.6 489h.01M856.1 432.3h.01M524.4 276.6h.01M336.8 360.5h.01M474.4 331.5h.01M512.3 456.7h.01M366.5 338.3h.01M421.7 394.3h.01M450.1 328h.01M305 337.7h.01M584 307.9h.01M284.5 106.3h.01M451.2 122.3h.01M724 449.1h.01M492.5 470.6h.01M432.5 301.9h.01M387 197.3h.01M513.3 269.2h.01M419.5 214.5h.01M465.9 341.7h.01M424.9 408.6h.01M466.8 288.6h.01M655.2 397.6h.01M524.2 357.5h.01M453.4 335.8h.01M608.7 483.7h.01M488.8 570.4h.01M426.7 52.1h.01M425.7 326.1h.01M534.4 363.7h.01M544.7 304.6h.01M24 625.7h.01M385 417.2h.01M278.8 288.4h.01M522.2 236.6h.01M714.8 246.4h.01M841.3 42.1h.01M785.9 32.4h.01M695.5 573.3h.01M322.8 321.9h.01M343.5 235h.01M655.7 127.8h.01M95.8 284.3h.01M355.3 336.6h.01M352 424h.01M227.1 344.6h.01M637.3 289.3h.01M597.5 198.5h.01M413.1 227.8h.01M88.3 168.2h.01M241.1 592.8h.01M453.8 291.5h.01M440.3 412.3h.01M426.6 488.6h.01M547.7 311.8h.01M535.8 270.7h.01M468.9 501h.01M437.8 586.2h.01M666.5 207.2h.01M409.5 110.9h.01M638 283.8h.01M555.2 376.8h.01M133 156.1h.01M647.9 444.7h.01M270.2 284.5h.01M435.9 580.9h.01M546.2 314.4h.01M425.3 354.9h.01M728.3 471.6h.01M433.8 378.5h.01M751.9 78h.01M160.9 180.6h.01M498.9 561.3h.01M428.4 453.4h.01M176.2 360.1h.01M545.4 536h.01M495.4 290.2h.01M603.9 338.4h.01M482.1 249.8h.01M381.6 255.9h.01M513.5 361.3h.01M83.6 302.9h.01M406.1 332.6h.01M420.3 312.1h.01M500.2 386.3h.01M564.9 404.5h.01M278.5 585.5h.01M456.6 305.4h.01M505.2 210.1h.01M289 555.7h.01M897.7 176.5h.01M341.7 423.3h.01M531.3 357.6h.01M476.6 237.8h.01M601 209.5h.01M672.3 198.4h.01M288 469.8h.01M442.8 245.5h.01M573.5 427.5h.01M153.2 330.1h.01M623.4 333.8h.01M356 455.6h.01M510.2 72.9h.01M307.6 536.7h.01M675.2 457.1h.01M552.6 156.4h.01M437.9 268.7h.01M495.9 338.4h.01M297.6 601.9h.01M318.5 377h.01M420.1 335.9h.01M457.6 584.8h.01M517.7 138.2h.01M406.3 62.6h.01M203.1 73.6h.01M479.6 104.6h.01M196.8 75.6h.01M654.3 99.2h.01M416.3 318h.01M478.1 389.5h.01M826.3 457.1h.01M355.8 418.9h.01M559.8 262h.01M596.3 260.9h.01M435.6 321.9h.01M546.2 471.2h.01M491.7 198.9h.01M539.9 498.4h.01M275.8 316.4h.01M521.5 303.5h.01M497.5 329.1h.01M648.6 599.9h.01M241.1 186.3h.01M461.6 134.6h.01M618.2 430h.01M637.5 61.6h.01M486 326.4h.01M751.6 380h.01M312.4 351.9h.01M486.6 101h.01M476.2 241.2h.01M696.6 273.6h.01M363.3 292.7h.01M326.3 303.9h.01M420.5 18.1h.01M212.1 19.1h.01M713.2 136.6h.01M519.4 27.8h.01M218.4 239.6h.01M559.1 123.7h.01M128.9 526.4h.01M462.2 363.6h.01M400.8 372h.01M27.2 172.7h.01M391.2 240.3h.01M676 618.3h.01M516.7 193.6h.01M397.9 283h.01M655.4 507.9h.01M388.4 293.5h.01M447.4 547.2h.01M459 439.9h.01M434.4 360.2h.01M347.3 210.6h.01M463.3 258.6h.01M434.4 308.5h.01M315.4 45.4h.01M425.6 299.4h.01M551.8 223.2h.01M562.6 418.5h.01M551.7 233.4h.01M73.7 287.9h.01M647.7 189.5h.01M750.4 244.8h.01M601.3 623.5h.01M397.5 299.4h.01M382.1 368.8h.01M472.4 36.2h.01M344.2 331.9h.01M605.5 349.1h.01M570.2 131.8h.01M449.7 275.6h.01M416.2 382.9h.01M859.3 481.4h.01M690.3 420h.01M916.1 124.9h.01M407.2 171.7h.01M541.6 365.2h.01M557.5 172.9h.01M421.4 334.3h.01M636.2 409.8h.01M613.7 181.7h.01M472.3 454h.01M617.1 221.8h.01M448.8 273.6h.01M296.3 218.6h.01M587.8 375.5h.01M378.6 333.1h.01M444.3 454.4h.01M323.1 378.5h.01M464.6 383.9h.01M394.4 275.7h.01M599 320.2h.01M545 166.2h.01M406.1 282h.01M451.1 160.8h.01M657.7 226.1h.01M708.4 571.5h.01M481 336h.01M495.8 235.7h.01M440.3 329.8h.01M398 313.8h.01M265.4 160.6h.01M421.1 426.6h.01M505 108.7h.01M520 256.6h.01M569.8 12.8h.01M276.5 493.7h.01M378.8 187.1h.01M223.5 461.7h.01M485.7 200.2h.01M336.6 290.1h.01M709.5 549.2h.01M630.4 168.2h.01M410 276.2h.01M516 170.4h.01M366.1 292.7h.01M726.5 258.5h.01M452.7 381.2h.01M549.8 52.6h.01M623.3 531.3h.01M489.3 298h.01M518.6 116.5h.01M464.4 149.8h.01M502.2 293h.01M332.4 124.5h.01M604.1 537.5h.01M613.6 298.2h.01M357.9 128.2h.01M610.2 234.6h.01M659.6 310.7h.01M314.6 300.7h.01M531.4 431.7h.01M441 303.5h.01M175.8 7.5h.01M436.3 144.8h.01M506.3 282.2h.01M430.6 197.8h.01M511.4 254.9h.01M805.1 123.1h.01M635.7 25.5h.01M307.3 497.8h.01M374.7 92.1h.01M410.6 437.6h.01M660.5 481.5h.01M408.2 359.6h.01M246.4 97.4h.01M423.7 599.8h.01M440.6 485.8h.01M650.1 288.6h.01M412.3 164h.01M439.4 363.5h.01M548.7 305.7h.01M233.8 172.3h.01M423.2 298.5h.01M508.4 260.8h.01M318.5 504.1h.01M510.9 59.4h.01M413 506.8h.01M456.8 303.5h.01M612.9 308.3h.01M636.2 347.4h.01M464.3 416.9h.01M595.2 285.8h.01M611.3 443.5h.01M497.1 324.2h.01M493.9 269.8h.01M374.8 195.7h.01M459.2 332.7h.01M550.4 398.1h.01M521.3 380.3h.01M576.8 181.3h.01M451 456.4h.01M266.9 258.4h.01M415.1 328.6h.01M379.4 346.9h.01M491.9 347.9h.01M583 29.4h.01M929.3 379.5h.01M549.1 524.3h.01M503.9 382.6h.01M431.4 317.9h.01M414.9 336.5h.01M600 299.6h.01M504.8 272.2h.01M494.7 427.7h.01M468.7 494.5h.01M495.8 199.4h.01M587.9 444h.01M383.1 198h.01M479.8 204.5h.01M579 304.8h.01M458.2 384.9h.01M432.7 443.6h.01M795.3 177.3h.01M933.1 12.3h.01M543.7 283.2h.01M666.3 253.7h.01M615.4 241.7h.01M529.2 431.9h.01M361.8 214.9h.01M555.2 212.2h.01M538.9 460.8h.01M565.7 431.1h.01M396.7 148.5h.01M420.9 385h.01M503.4 85.8h.01M474.7 324.9h.01M482.8 275.4h.01M199.3 328.2h.01M459.4 280.6h.01M253.2 108.6h.01M333.4 443.2h.01M633.6 386.4h.01M372.4 331.7h.01M708.8 523.7h.01M384.4 269.5h.01M287.5 210.8h.01M262.8 152.7h.01M95.8 246.6h.01M546.5 386.5h.01M363.4 50.2h.01M382.2 192.6h.01M342.2 339.9h.01M464.4 283.9h.01M563.9 229.5h.01M807.8 335.3h.01M514.7 432.8h.01M521.7 186.1h.01M907.3 468.5h.01M374.8 461.4h.01M537.4 312.1h.01M593.9 270.3h.01M389.9 25.2h.01M390.7 193h.01M434.5 469.7h.01M328.6 345.3h.01M556.7 414.2h.01M460.8 292.9h.01M410.8 265.6h.01M593.7 189.7h.01M209.2 427.5h.01M447.6 353.6h.01M121.9 465.4h.01M482 391.7h.01M478.2 225.2h.01M493 218.8h.01M396.4 280.7h.01M158.4 112.2h.01M480.8 173.3h.01M354.1 183.3h.01M490.6 388.7h.01M392.2 391.3h.01M544.3 497.4h.01M474.7 252.2h.01M396.5 71.8h.01M505.6 302.4h.01M518.2 370.1h.01M419.8 422.3h.01M798.6 94.6h.01M369.9 270.7h.01M238.8 228h.01M641 371h.01M846.9 299.6h.01M387.1 551.9h.01M537.8 483h.01M683.3 558.3h.01M316.9 161h.01M779.5 408.3h.01M560.7 406.2h.01M862.4 153h.01M532.6 332.2h.01M723.9 631.3h.01M888.2 488.9h.01M684.5 487.9h.01M436.2 401.9h.01M554.2 553.7h.01M378.4 303.1h.01M568.2 52h.01M560.9 89.6h.01M501.2 359.1h.01M545.5 345h.01M640 151h.01M688.2 462.8h.01M461.8 412.7h.01M699.8 213.3h.01M241.8 464.1h.01M502.3 326.7h.01M853.4 305.9h.01M473.9 286.9h.01M253.2 617.5h.01M574.4 70.6h.01M438.5 298.4h.01M667.7 188.8h.01M332.7 156.4h.01M526.4 290.3h.01M488.7 382.5h.01M685.1 262.9h.01M752.9 442.7h.01M310.6 225.7h.01M410.4 11.1h.01M353.5 188.5h.01M79.8 328.1h.01M318.5 303.8h.01M512.4 209.6h.01M527.7 295h.01M482 232.4h.01M461.7 303.7h.01M684.6 382.5h.01M44.7 401.1h.01M760.9 19.4h.01M573.2 490.7h.01M619.8 358.2h.01M310.8 195.5h.01M498.3 250.3h.01M488.5 342.5h.01M528 348.5h.01M408.2 225.1h.01M923.5 41.7h.01M757.7 132.7h.01M300.1 478.4h.01M359.1 242.1h.01M602.1 319.5h.01M724.8 226.9h.01M729.6 333.8h.01M676.2 216.5h.01M331.1 512.9h.01M448 107.8h.01M495.7 16.1h.01M786.1 30.5h.01M502.1 457.8h.01M601.3 447h.01M399.5 347.1h.01M186.2 15.9h.01M568.4 187.6h.01M347.5 360.5h.01M363.9 97.3h.01M315.9 309.8h.01M411.9 268.7h.01M304.9 280.5h.01M454.4 374.3h.01M577.7 246.2h.01M273 379.9h.01M178.9 3.6h.01M628.7 331.4h.01M810.1 599.7h.01M368.4 216.6h.01M694 368.8h.01M439.7 306.9h.01M829.3 33.6h.01M313.8 359.4h.01M312.4 236h.01M539.1 335.6h.01M489 276.6h.01M841.9 224.6h.01M407.8 331.3h.01M672.2 368.3h.01M291.2 347.5h.01M394.4 313.8h.01M599.1 492.3h.01M490.3 299.7h.01M778 226.3h.01M513.1 193.5h.01M937.8 360.5h.01M295.8 361.8h.01M431.2 51.3h.01M428.9 226h.01M337.6 204.3h.01M626.5 166.3h.01M884.8 512.4h.01M219.9 323.7h.01M681 237.1h.01M466 188.2h.01M603.9 290.1h.01M873.6 358.5h.01M516.7 466.1h.01M659.9 344.4h.01M716.9 452.2h.01M211.6 146.8h.01M476.7 423.2h.01M851.1 13.7h.01M465 346.6h.01M640.8 120.1h.01M487.8 282.6h.01M377.4 321.6h.01M402.9 215.4h.01M344.8 249.6h.01M659.3 271.2h.01M586.8 390.4h.01M541.2 467h.01M546 265.2h.01M201.8 381.5h.01M698.4 135.2h.01M410.4 290h.01M449 278.6h.01M50.5 204.6h.01M600.8 279.2h.01M423.6 174.1h.01M608.5 283.8h.01M690.4 272.2h.01M590.2 212.3h.01M479.7 475.2h.01M489.4 366.2h.01M563.9 331.2h.01M528.4 478.7h.01M760.1 424.9h.01M677.9 231.7h.01M304.9 34.2h.01M614.3 479.6h.01M383.7 188.6h.01M542.2 146.5h.01M604.9 182.5h.01M287.5 265.5h.01M451.5 346.7h.01M407 257.1h.01M575.6 298.5h.01M363.7 116h.01M185.1 456.5h.01M267.9 541.6h.01M503.5 340.8h.01M648.6 109.9h.01M544.6 303.1h.01M500.7 263.8h.01M414.7 180.5h.01M640.5 414.2h.01M689.7 40.3h.01M527 423.2h.01M814.4 246.9h.01M769.1 235.8h.01M246.9 363.6h.01"/>
<path stroke-width="2.9" stroke-opacity="0.86" d="M133 233.4h.01M318.4 37.5h.01M612.4 398h.01M530 503.3h.01M503.3 605.9h.01M842.7 611h.01M858.2 460.2h.01M345.6 344h.01M792.3 326.7h.01M529.5 82.2h.01M311.2 8.1h.01M858.5 185.7h.01M786.6 293.7h.01M452.5 573.5h.01M123.1 365.3h.01M779.1 224.8h.01M729.8 474.4h.01M245.4 497.2h.01M623.1 154.8h.01M452.7 287.6h.01M644.7 413.4h.01M767.1 251.6h.01M614.4 371.7h.01M946.2 98.5h.01M238.9 443h.01M406.5 369.3h.01M415.5 206.7h.01M570.9 417.4h.01M431.3 355.5h.01M391.1 439.6h.01M70.4 418.3h.01M344.8 432.2h.01M458.5 207.9h.01M411.6 260.9h.01M81.7 451.4h.01M783.5 369.8h.01M396.5 307.3h.01M505.6 169.8h.01M182.4 214h.01M487.7 297.5h.01M552.4 472.7h.01M525.8 358.9h.01M434.4 277.4h.01M422.7 412.2h.01M570.2 551.1h.01M507.3 295.9h.01M529.7 371.5h.01M419.7 252h.01M420.2 324.1h.01M566.5 489h.01M471 283.5h.01M559.3 200.7h.01M540 309.6h.01M448.7 331.8h.01M599.4 146.9h.01M563.1 399h.01M363 400.9h.01M542.7 244.9h.01M405.3 298.9h.01M615.1 185.1h.01M413.2 350.7h.01M707.4 428.1h.01M901 104.6h.01M528.5 115.1h.01M535.7 316.8h.01M461 589.5h.01M339.3 435.5h.01M202.3 126.7h.01M377.3 457.6h.01M425.8 229.6h.01M470.4 245.3h.01M552.9 496.8h.01M380.9 486h.01M435.6 343.8h.01M640.6 394.4h.01M676.9 48.6h.01M181.4 353.8h.01M454.5 344.1h.01M759.6 404.3h.01M689.6 280.4h.01M868.7 400.9h.01M921.3 209.5h.01M695.7 418.9h.01M577.2 488.9h.01M537.2 113.9h.01M591.2 323h.01M476.1 290.9h.01M224.6 329.8h.01M526.9 107.8h.01M693.2 278h.01M807.8 471h.01M547 230h.01M423.6 247.1h.01M389.4 333h.01M491.6 252.7h.01M137.3 381.5h.01M474.1 134.2h.01M494.3 313.1h.01M183.5 330.1h.01M432.5 344.3h.01M543.6 299.1h.01M740.6 465.5h.01M467.1 185.5h.01M470.7 291h.01M569.7 192.2h.01M614.4 367.1h.01M559.8 279.9h.01M461.4 289.2h.01M226.1 188.4h.01M874.4 621.7h.01M527.3 265.3h.01M475.1 311.5h.01M542.6 329h.01M461.5 402h.01M785.6 287.1h.01M683.2 503.2h.01M612.1 190.9h.01M479.6 359.5h.01M420 258.5h.01M396.6 311.1h.01M646.7 293.4h.01M253.3 125h.01M556.8 375h.01M452.3 512.1h.01M273.4 266.4h.01M414.4 419.8h.01M650.3 97.4h.01M601.3 321.5h.01M451.7 314.2h.01M531.6 281.9h.01M546.4 254.2h.01M470.9 452.5h.01M356.9 343.8h.01M208.4 292.1h.01M428.8 327.4h.01M641.6 282.6h.01M550.9 122.1h.01M527.4 243h.01M314.9 409.2h.01M811.3 536.7h.01M559.8 354.4h.01M299.3 401.1h.01M496.1 344.6h.01M438.4 27.6h.01M606.9 129.2h.01M306.7 214.3h.01M455.6 259.7h.01M567.4 398.8h.01M575.7 483.1h.01M468 311.6h.01M464.5 377.4h.01M589.5 307h.01M483.6 303.8h.01M506.9 235h.01M877.3 523.5h.01M462.5 500.8h.01M374.8 83.8h.01M536.3 340.1h.01M504.5 354h.01M480.2 269.9h.01M422.1 287h.01M506.8 293.1h.01M668.2 300.3h.01M490.2 303.3h.01M428.8 291.8h.01M655.4 33.2h.01M534.2 414.5h.01M532.2 342.6h.01M21.7 232.8h.01M358.5 224.1h.01M570 250.5h.01M631.1 233.7h.01M702.6 414.5h.01M342 499.6h.01M378.4 383.9h.01M323.6 241.5h.01M451 382.4h.01M364.7 353h.01M563.9 325.2h.01M421.2 301.6h.01M406.2 359.9h.01M430.7 274h.01M898.9 297h.01M315.3 207.1h.01M468.4 297.4h.01M588.1 323h.01M536.1 183.9h.01M445.9 260.6h.01M577.1 406.8h.01M377.2 483.6h.01M374.4 206.2h.01M400.8 48.3h.01M770.3 72.1h.01M440.7 271.4h.01M686.2 591.3h.01M339 181.8h.01M502 253.8h.01M438.5 252.2h.01M611.1 348.9h.01M417.2 231.6h.01M567.5 308.3h.01M587.1 380.4h.01M360 47.9h.01M502.7 163.2h.01M400.9 230.1h.01M544.9 370.6h.01M595.4 504.1h.01M548.4 151.1h.01M312 30.5h.01M323.1 257.6h.01M577.9 426h.01M455.4 329.5h.01M289.8 108.5h.01M506.9 84h.01M649.9 274.6h.01M299 410.6h.01M475.4 349.1h.01M528.1 262h.01M525.2 143h.01M309.7 121.6h.01M804.6 281.7h.01M563.4 281.4h.01M375.1 261.6h.01M420.2 538.2h.01M555.3 422.5h.01M417.2 280.1h.01M399.3 266h.01M311.4 144h.01M629.7 212.8h.01M234.2 597.9h.01M510.7 223h.01M639.9 137.5h.01M309.4 332h.01M209.5 107.8h.01M164.8 338.9h.01M441.5 320.6h.01M471.3 306h.01M621.5 331.8h.01M447.2 358.5h.01M399.3 296.6h.01M506.7 306.3h.01M583.5 162.2h.01M460.7 308.1h.01M497.2 420.7h.01M526.7 390.6h.01M576.7 331h.01M350 399.1h.01M588.5 465h.01M395.7 350.9h.01M252.9 424.3h.01M359.1 260.6h.01M514.3 296.3h.01M539.4 256h.01M563.3 286h.01M501.3 243.2h.01M795.8 334.3h.01M403.5 230.4h.01M543 184.7h.01M573.5 263.6h.01M503 534.3h.01M496.8 258.5h.01M424.2 304.5h.01M516.7 293.5h.01M840.4 230h.01M520.8 221.3h.01M671.8 352.5h.01M145.8 495.3h.01M218.3 137.9h.01M710.3 484.7h.01M496.7 297.8h.01M444.5 305.4h.01M394.8 396.1h.01M598.8 240.2h.01M452.1 341.4h.01M298.6 329.1h.01M490.1 216.2h.01M175.9 236.4h.01M477 82.7h.01M763.5 255.6h.01M561.1 276.4h.01M378.3 216.7h.01M569.1 384.2h.01M881.5 12h.01M614.6 343.6h.01M485.2 481.1h.01M565.5 299.6h.01M399.9 277.3h.01M267.3 59.2h.01M282.9 414.3h.01M537.8 295.6h.01M420.5 192.2h.01M491.8 423.3h.01M669.2 198.8h.01M549 228.7h.01M806.7 390h.01M381.5 302.2h.01M499 255.8h.01M450.3 267.8h.01M292.6 189.1h.01M434.3 410.9h.01M456.9 295.7h.01M380.3 352.7h.01M34.4 532.3h.01M537.4 221.8h.01M392.8 492.8h.01M490 255.6h.01M511.4 122.7h.01M453.7 246.5h.01M423.5 430.8h.01M501.9 295.3h.01M465.2 317.5h.01M280.3 390.7h.01M578.3 400.1h.01M273.8 52.2h.01M448.8 413.7h.01M686.3 527.9h.01M585.8 174.9h.01M222 247.1h.01M711.4 234.9h.01M612.3 9.8h.01M438.4 204.9h.01M143.3 259.8h.01M317.8 463.6h.01M804.2 101.8h.01M642.5 434.5h.01M597.4 288.6h.01M373.6 47h.01M476.1 179.2h.01M553.1 350.8h.01M464.7 387.9h.01M626.9 141.3h.01M260.9 54.9h.01M355.2 321.1h.01M424.9 613.5h.01M556.8 189.3h.01M510.1 379.1h.01M447.3 356.9h.01M601.1 345.3h.01M258.4 336.7h.01M451.2 163.4h.01M498.7 375.4h.01M639.9 167.6h.01M410.3 24.4h.01M181 231.1h.01M670.8 78h.01M375.5 333.6h.01M535.1 371.6h.01M462.8 586.1h.01M479.7 430.9h.01M378.9 205.5h.01M682.2 378.8h.01M609.1 282.6h.01M473 352.8h.01M742 398.6h.01M485.4 356.6h.01M660.6 325.8h.01M773.1 353.1h.01M740.6 287.7h.01M667.2 565.1h.01M562.7 253.8h.01M478 311.8h.01M826.4 495.7h.01M579.6 274.5h.01M678.7 134.7h.01M360.1 236.4h.01M826.9 584.3h.01M547.4 511.9h.01M776.6 428.1h.01M515.9 414.3h.01M138.1 473.1h.01M477.9 332.9h.01M772.7 445.6h.01M499.7 355.3h.01M940.4 226.6h.01M542.5 290.7h.01M375.8 247.9h.01M572.9 403.9h.01M161.5 104.4h.01M379 308.6h.01M435.8 499.3h.01M645.9 125.9h.01M297.5 539.8h.01M566.4 220.1h.01M832.7 5.4h.01M515.5 182h.01M432.7 280.1h.01M456.9 327.8h.01M371 624.4h.01M641.2 55.8h.01M673.4 404.4h.01M567.4 287h.01M550.2 192.4h.01M564.7 592.2h.01M29.7 185.4h.01M489.8 236.5h.01M689.5 333.9h.01M567.1 604.3h.01M444.2 347.9h.01M93 25.3h.01M558.4 209.9h.01M443.2 365.1h.01M486.1 372.1h.01M594.2 166.9h.01M383.6 294.4h.01M446.8 310.2h.01M521.8 258.4h.01M696.3 375h.01M422.3 275.9h.01M646.5 321.4h.01M533.4 432h.01M213.6 324.5h.01M266.3 330h.01M391.7 302.1h.01M445 326.4h.01M534.3 362h.01M211.5 390h.01M288.1 376.3h.01M465.3 317.7h.01M621.6 232.6h.01M602.2 153.5h.01M548.9 212.4h.01M498.4 307.7h.01M342.3 492.8h.01M621.9 236.1h.01M686.1 454.1h.01M463.7 235.8h.01M847.6 7.3h.01M470.5 159h.01M517 388.7h.01M459 319.7h.01M557.2 253.3h.01M389.9 225.1h.01M603.9 230.8h.01M406.7 229h.01M298.7 223.3h.01M123.4 214.3h.01M199.2 168.8h.01M466.2 225.1h.01M742.6 147.6h.01M438.2 288.2h.01M519.7 401h.01M473.8 361.6h.01M475.8 358h.01M462.2 350.5h.01M449 196.5h.01M470.1 230.3h.01M261.4 237.8h.01M504.3 346.7h.01M640.6 520.9h.01M392.2 477.8h.01M413.4 399h.01M519 336.7h.01M519.8 437.9h.01M452.9 251.7h.01M407.4 347.6h.01M533.6 289.8h.01M469 368h.01M426 295.6h.01M365.6 308.8h.01M535.4 465.1h.01M609.4 324.1h.01M574 228.9h.01M659 252.3h.01M563.7 348h.01M442.8 398h.01M265.7 264.8h.01M223.5 315.5h.01M593.2 232.8h.01M468.2 212.2h.01M601.2 272.8h.01M484.7 297.6h.01M588.9 246.1h.01M436.1 550.5h.01M370.4 261.3h.01M371.7 3.1h.01M440.3 259.1h.01M514.6 179.6h.01M368.4 376.4h.01M473 564h.01M316 257.8h.01M103.9 196.1h.01M561 261.4h.01M39 417.5h.01M650.4 480.6h.01M665.8 237h.01M829.8 89.9h.01M482.4 604.9h.01M585.4 238.5h.01M479.2 282.7h.01M240.9 193.8h.01M564.4 392.7h.01M861.7 532.5h.01M743.9 331.4h.01M724.5 329.8h.01M577.2 339.2h.01M686.1 250.4h.01M884.8 110.5h.01M86.3 387.7h.01M482.1 315.1h.01M475.5 229.9h.01M731.2 396.4h.01M695.7 257.5h.01M512.5 471.1h.01M442.4 379.5h.01M240.1 50.6h.01M528.8 255.6h.01M282.7 12.7h.01M592.9 323.8h.01M605.8 518h.01M569.6 340.2h.01M309.2 401h.01M568.9 166h.01M580.2 319.9h.01M521.3 202.9h.01M478.1 274.2h.01M473.6 483.6h.01M606.8 381.3h.01M99.5 475.7h.01M773.7 315.5h.01M415.7 111.8h.01M529.8 328.7h.01M482.7 232.1h.01M803.3 244.4h.01M477.6 302h.01M582.4 407.1h.01M503.8 313.1h.01M935.6 354.6h.01M503.8 276.3h.01M758 107.9h.01M511.3 35.2h.01M381 313.5h.01M339.7 625.5h.01M537.8 254h.01M619.1 257.2h.01M475.5 238h.01M564.8 217.4h.01M488.7 323.4h.01M410.3 290.1h.01M497.1 354.2h.01M426.5 262.6h.01M451.9 277.6h.01M785.1 307.9h.01M202.4 235.8h.01M525.3 214.8h.01M692.5 478.4h.01M367.5 262.5h.01M344.5 324h.01M477.6 380.7h.01M527.5 322.2h.01M348.7 84.3h.01M598.6 322.1h.01M512.3 589h.01M359.5 500.5h.01M553.4 214.5h.01M484.2 315.8h.01M129.8 259.1h.01M392.7 246.3h.01M428.2 315.5h.01M514.4 315.8h.01M326 437.9h.01M525.9 337.7h.01M490.6 271.1h.01M450.3 280.7h.01M274.1 336.2h.01M547 344.4h.01M324.7 339.9h.01M536.2 96.8h.01M323.2 242.8h.01M919.7 422h.01M190.2 508.2h.01M480.6 443.8h.01M551.7 469.5h.01M755.8 496.6h.01M500.5 415h.01M467.6 216.8h.01M547.8 366.4h.01M516.5 418.6h.01M549.1 378.6h.01M332.1 476.1h.01M209.6 385.5h.01M476 181h.01M487.2 635.2h.01M585 218.9h.01M293.5 533h.01M613 72.8h.01M605.3 281.7h.01M659.3 402.9h.01M463.1 210.7h.01M354.1 209.9h.01M507.9 402.8h.01M589.7 364.6h.01M470.1 389.7h.01M307.8 492.1h.01M467.7 341.9h.01M537 51.9h.01M462.9 345.8h.01M507.7 267.7h.01M312.4 337.2h.01M523.7 284.2h.01M632.8 470.2h.01M488.9 179.8h.01M644.3 580.7h.01M73.6 339.8h.01M302 374.9h.01M592.1 272.8h.01M429.9 238.3h.01M395.6 272.3h.01M351 296.6h.01M794.2 350.2h.01M694.4 397.1h.01M495.9 396.9h.01M517.5 296.8h.01M460.3 158.7h.01M270.4 156.9h.01M529.6 228.1h.01M614.5 182.6h.01M736.2 303.7h.01M792.3 58.2h.01M127.3 522.2h.01M383 246.3h.01M585.7 305.4h.01M521.4 568.8h.01M611.7 271.1h.01M729.6 171.2h.01M379.7 616.9h.01M494.9 569h.01M720.6 445.3h.01M600.7 576.4h.01M527.6 357.9h.01M450.6 175.7h.01M451.4 247h.01M520.5 323.1h.01M873.1 28.6h.01M729.4 246.1h.01M432.4 326h.01M487.4 274.3h.01M736.9 489.3h.01M505.4 212.2h.01M293.2 296.7h.01M498.1 507.3h.01M554.7 170.5h.01M599.9 355.9h.01M713.8 572.3h.01M538.2 309h.01M33 286.8h.01M487.2 255.5h.01M519.6 147.4h.01M739.6 579.3h.01M476.8 180.3h.01M533.4 324h.01M759.4 455.2h.01M377.8 454.1h.01M427.5 283.9h.01M538.2 302.9h.01M488.5 275.2h.01M205.4 380.1h.01M488.4 230.7h.01M147.6 489.1h.01M366.8 327.8h.01M297.5 437.8h.01M491.3 208.2h.01M509.2 450.4h.01M626.7 500.7h.01M630.1 373.3h.01M726.9 199.7h.01M610 92.1h.01M623.3 407.8h.01M409.2 264.4h.01M387.9 90.1h.01M631 263.8h.01M592 277.8h.01M675.7 112.2h.01M459.5 330.9h.01M367.1 359.1h.01M351 411h.01M625.6 242.1h.01M512.1 332.1h.01M589.9 286.2h.01M198.3 319.2h.01M484.9 202.9h.01M587.1 269.6h.01M498.7 569.1h.01M344.2 512.7h.01M547.5 352.1h.01M479.7 334.9h.01M391.6 126.7h.01M432.7 370.6h.01M375.2 310h.01M212.6 338h.01M116.2 53.3h.01M538.7 290.2h.01M519.2 154.6h.01M582.1 295.9h.01M435 395.9h.01M477.1 325.8h.01M514 234.2h.01M311.9 452.3h.01M501.3 327.8h.01M521.9 366.4h.01M369.9 298.5h.01M455.9 256.3h.01M109.4 142.4h.01M469.9 296.7h.01M484.7 322.4h.01M566.2 96.8h.01M514.7 241.3h.01M708.8 183.1h.01M479.5 340.5h.01M423.3 382.3h.01M391.7 140.1h.01M575.6 467.1h.01M283.3 354h.01M185.3 243.4h.01M637.8 250.2h.01M428 524.9h.01M346.8 158.2h.01M461.4 195.1h.01M599.6 159.6h.01M432.6 358.1h.01M412.4 261.8h.01M748.6 532.5h.01M544.9 266.2h.01M565.3 250.9h.01M292.4 195.4h.01M569.6 369.6h.01M198.6 99.8h.01M477 251.4h.01M466.2 419.8h.01M847.7 306.7h.01M375.3 161.6h.01M379.8 500.2h.01M196.7 342.4h.01M552.6 457h.01M585.5 565.5h.01M646 384.6h.01M487.5 378h.01M517.5 213.2h.01M413.3 321.6h.01M494.5 202.4h.01M415.8 233h.01M578.9 197.5h.01M19.4 39.3h.01M492.1 235h.01M613.3 462.7h.01M420.5 317.9h.01M485.9 343h.01M478.2 225.7h.01M447.4 446.2h.01M609.4 341.6h.01M311.2 61.1h.01M562 315.6h.01M925.4 137h.01M224.4 502.9h.01M435.7 313.1h.01M386.6 344.6h.01M349.3 196.8h.01M670.8 205.6h.01M466.5 235.4h.01M871.7 269.8h.01M436.1 271.5h.01M296.2 191.3h.01M438.9 328h.01M536.7 332.8h.01M926.5 59.1h.01M418.2 333.1h.01M335.7 150.9h.01M473.6 299.9h.01M331 256.1h.01M500.2 354.9h.01M546.9 289.6h.01M880.7 442h.01M504.6 317.9h.01M418.5 381.8h.01M610.6 470.4h.01M709.5 394.1h.01M379.7 205.6h.01M492.2 320.1h.01M813.4 51h.01M523.7 199.4h.01M481.7 336.5h.01M563 269.4h.01M661.6 275.2h.01M233.5 464.4h.01M384.5 24.2h.01M542.4 312h.01M458.3 383.9h.01M740.5 353h.01M448.9 320.4h.01M847 160.5h.01M680.2 438.4h.01M306.1 252.9h.01M770.4 192.3h.01M557.9 317.9h.01M585.7 337.2h.01M471.3 115.8h.01M504.5 281h.01M648 167.5h.01M733.4 497.9h.01M537.2 27.8h.01M518 306.8h.01M567.9 305.3h.01M498.5 181.2h.01M555.4 308.9h.01M346.1 524h.01M415.2 259.5h.01M423.2 231.2h.01M173.5 279.9h.01M514.9 245.2h.01M357.3 238.7h.01M614.7 394.8h.01M425.4 355.9h.01M375.7 361.4h.01M552.4 266.9h.01M457.4 209h.01M527.8 325.6h.01M531.5 335.2h.01M421.1 240.3h.01M303.2 398.1h.01M420.1 392.8h.01M352.1 113.1h.01M439.9 166.3h.01M308.4 401.6h.01M431.9 350.4h.01M599.2 415.9h.01M460.8 418.4h.01"/>
<path stroke-width="3.4" stroke-opacity="1.0" d="M84.3 563.6h.01M64 312.3h.01M383 546.1h.01M202.9 395.1h.01M484.5 313.7h.01M480.7 468.9h.01M347.4 284.1h.01M450.5 271.4h.01M412.6 250.6h.01M321.7 38.5h.01M690.5 277.1h.01M253 310.7h.01M670.6 357.6h.01M912.5 244.5h.01M410 152.9h.01M15.1 300h.01M442.6 392h.01M450.1 376.7h.01M536 303.9h.01M362.4 546.5h.01M777.5 525.2h.01M552 317.6h.01M480.2 200.5h.01M412.9 138.9h.01M510 290.8h.01M43.3 229.4h.01M316.8 365.5h.01M399.2 321h.01M324.3 393h.01M333.4 397.1h.01M540.8 340.6h.01M398.4 355.4h.01M573.5 428.5h.01M526.2 509.2h.01M552.3 342.9h.01M503.6 106.3h.01M396.4 203.6h.01M714.8 324.4h.01M489.6 427.2h.01M449.9 250.1h.01M641.6 348.1h.01M757.9 450.7h.01M548.7 302.2h.01M370.4 62.1h.01M712.4 615.8h.01M571.8 322h.01M619.5 371.4h.01M383.3 212.5h.01M502.1 274.2h.01M399.5 179.6h.01M534.4 241.4h.01M684.5 422.3h.01M534.1 177.9h.01M430.5 217.7h.01M446.4 358.3h.01M557.1 227.8h.01M364.2 300.9h.01M427.3 262.4h.01M554.8 485.3h.01M496.7 237.8h.01M253.7 174.4h.01M480.7 295.4h.01M486.5 349.7h.01M428.7 236.1h.01M535 238.2h.01M502.7 418.8h.01M675.2 397h.01M600.5 475.9h.01M243 438.3h.01M414.2 379.1h.01M416.6 334.1h.01M718.1 272.3h.01M521.9 197h.01M366.4 378.6h.01M468.6 389.6h.01M501.1 195.6h.01M570.7 356.4h.01M691.3 313.8h.01M574.2 390.6h.01M545.6 195.7h.01M462 291h.01M508 352.6h.01M518.1 377.5h.01M458.5 329.2h.01M455.4 299h.01M466.6 277.9h.01M573.3 212.4h.01M656.4 555.5h.01M444.4 574.7h.01M530.2 337.1h.01M547.9 230h.01M508.8 282.5h.01M390.8 315h.01M511 331.3h.01M276.4 375.6h.01M602.9 392.3h.01M476.9 486.2h.01M496.3 262.1h.01M679.9 174.3h.01M397.2 226.2h.01M541.1 283h.01M669.2 348.6h.01M617.6 481.3h.01M721.6 244.6h.01M633.7 184.8h.01M584.7 406.5h.01M470 412.2h.01M745.5 405.3h.01M296.1 186.8h.01M487.4 312.5h.01M467.3 243.2h.01M751.5 238.7h.01M502.7 361.1h.01M43.2 242.6h.01M664.9 290.5h.01M463.5 388.5h.01M436 165.2h.01M577.4 264.3h.01M356.2 167h.01M203.9 264.4h.01M543.1 437.7h.01M424.1 330.7h.01M369.5 401.5h.01M413.1 297.9h.01M460.7 535.4h.01M21.3 233.1h.01M497.7 443.9h.01M453.8 470.4h.01M506.8 322.4h.01M580 306.5h.01M356.2 192.7h.01M505.6 484.1h.01M526.6 360.9h.01M634.9 377.6h.01M151.8 364.1h.01M493.2 265.5h.01M339.9 269.1h.01M513.2 257.8h.01M502.1 154.4h.01M646.9 254.4h.01M876.3 423.8h.01M541.6 314.8h.01M479.7 317.8h.01M402.6 298.2h.01M610.7 149.9h.01M633.5 265.5h.01M501.2 330.8h.01M501 220.2h.01M583.8 236.5h.01M460.2 141.5h.01M552.9 342.2h.01M618.5 360.4h.01M741.7 512.1h.01M406.5 528h.01M697.3 303.4h.01M404.7 340.9h.01M416.8 309.2h.01M558.4 302.9h.01M456.7 302.5h.01M614.2 202.1h.01M528.4 293.6h.01M399.5 222.8h.01M567.3 270.6h.01M152.5 265.9h.01M533.8 228.6h.01M238.5 543.3h.01M613.6 150.3h.01M499.1 343.2h.01M507.7 212.9h.01M587 245h.01M410.5 313h.01M527.8 344.3h.01M459.1 189.5h.01M631.3 286.1h.01M476.9 192.5h.01M594.4 309.1h.01M527.7 312.7h.01M623 94.5h.01M600.8 244.4h.01M482.7 390.4h.01M289.8 391.1h.01M757.5 251.9h.01M577.9 395.1h.01M522.3 236h.01M359.4 455.6h.01M542.9 402.9h.01M417 324.9h.01M771.1 109.2h.01M414.7 437.8h.01M539 312.4h.01M440.3 138h.01M497.6 294.3h.01M329.6 274.4h.01M719.2 349.7h.01M391.7 468.2h.01M442.3 286.5h.01M443.6 61.7h.01M428.1 392.9h.01M714.1 483.3h.01M330.6 510.2h.01M468.1 292.5h.01M320.8 285.5h.01M528.7 259.7h.01M517.2 349.3h.01M477.4 225.5h.01M561.7 315.7h.01M507.7 191.6h.01M449.8 89.1h.01M458.9 326.9h.01M449.3 121.1h.01M491.8 246.3h.01M692 10.2h.01M208.8 104.4h.01M556.7 346.9h.01M862.6 345h.01M505 355.5h.01M349 258h.01M530 187.8h.01M688.2 584.4h.01M422.4 317.6h.01M462.6 368.8h.01M480.8 237.1h.01M518.4 266.2h.01M467.9 256.9h.01M632.3 197.4h.01M160.8 182.2h.01M579.4 412h.01M530.6 86.4h.01M448.8 297.5h.01M713.7 99h.01M418.3 369.6h.01M515.8 277.4h.01M527.4 446.5h.01M465.7 288.5h.01M660.5 278.7h.01M415.7 317.8h.01M509.4 345.7h.01M516.5 145.7h.01M329.9 234.3h.01M807.3 43.8h.01M419.7 286h.01M470.5 363.6h.01M496.5 564.5h.01M551.6 243.3h.01M570.9 337.8h.01M468.5 304h.01M337.8 406.1h.01M403.8 238.8h.01M194.1 594.6h.01M668.9 591.7h.01M94.8 195h.01M528.6 304.4h.01M605 363.3h.01M350.5 617.8h.01M524.3 297.3h.01M710.1 326.2h.01M560.6 275.4h.01M586.4 311.6h.01M514.7 239.2h.01M693.4 284.6h.01M457.6 347.7h.01M467.8 287.3h.01M400.5 351.8h.01M730.9 202.6h.01M464.4 288.4h.01M430.2 310.3h.01M458.9 473.2h.01M427.7 261.6h.01M443.1 283.8h.01M390.2 351.3h.01M416.3 596.4h.01M432.3 246.6h.01M904.9 371.9h.01M400.3 150.2h.01M411.1 184.9h.01M419.4 216.7h.01M422 378.6h.01M707.3 495.8h.01M448.5 212.1h.01M196.9 209.8h.01M386.6 254.9h.01M222.1 619.9h.01M514.7 355h.01M459.1 356.5h.01M481.3 338.3h.01M462.2 287.5h.01M768.8 515h.01M499.6 236.7h.01M260.1 379.4h.01M547.7 269h.01M671.7 295.3h.01M482.7 255.7h.01M424.9 380.9h.01M467.3 50.9h.01M448.7 374.3h.01M536.3 440.8h.01M524.3 367.4h.01M426.7 255.9h.01M564.8 344.5h.01M422.8 289.8h.01M452 272.2h.01M710 331.8h.01M456.8 142.6h.01"/>
</g>
<g fill="url(#sg)">
<circle cx="22.5" cy="266.2" r="7.2"/>
<circle cx="102.4" cy="311.2" r="6.4"/>
<circle cx="42.4" cy="70.1" r="4.8"/>
<circle cx="80.6" cy="42.7" r="4"/>
<circle cx="300" cy="3" r="5.2"/>
<circle cx="216.4" cy="14.2" r="3.4"/>
<circle cx="132.4" cy="31.9" r="3"/>
<circle cx="257.6" cy="17.6" r="2.8"/>
<circle cx="297" cy="159" r="3.8"/>
<circle cx="334.9" cy="200.6" r="4.6"/>
<circle cx="340" cy="212.6" r="4.2"/>
<circle cx="268.5" cy="212.2" r="3.6"/>
<circle cx="173.6" cy="151.5" r="3.2"/>
<circle cx="253.8" cy="123" r="3"/>
<circle cx="415" cy="166" r="4.4"/>
<circle cx="448.8" cy="189.4" r="3.8"/>
<circle cx="432" cy="184" r="3.4"/>
<circle cx="133" cy="228.4" r="3"/>
<circle cx="197.6" cy="253.5" r="3"/>
<circle cx="167.6" cy="188.6" r="2.8"/>
<circle cx="240" cy="174.7" r="3"/>
<circle cx="360.3" cy="77.2" r="3.2"/>
<circle cx="378" cy="86" r="3"/>
<circle cx="363.3" cy="104.6" r="2.8"/>
<circle cx="476" cy="74" r="3.4"/>
<circle cx="294.3" cy="107.2" r="2.8"/>
<circle cx="471.7" cy="211" r="3.6"/>
<circle cx="372" cy="200" r="3.4"/>
<circle cx="398.6" cy="225" r="3.4"/>
<circle cx="290.6" cy="249" r="3"/>
<circle cx="9" cy="120.7" r="2.6"/>
<circle cx="8" cy="147" r="2.6"/>
<circle cx="888" cy="18" r="4.8"/>
<circle cx="893.6" cy="2" r="5.2"/>
<circle cx="526" cy="70" r="4"/>
<circle cx="582.4" cy="151.5" r="4.8"/>
<circle cx="681.7" cy="123" r="4.4"/>
<circle cx="691" cy="115" r="3.2"/>
<circle cx="603.7" cy="78" r="3.8"/>
<circle cx="768" cy="74" r="3.4"/>
<circle cx="531.4" cy="111.7" r="3.6"/>
<circle cx="650.6" cy="107" r="3.2"/>
<circle cx="806.2" cy="303" r="4.8"/>
<circle cx="946" cy="202.5" r="4"/>
<circle cx="894.3" cy="74.2" r="3"/>
<circle cx="825" cy="194" r="3.2"/>
<circle cx="823" cy="252.3" r="3"/>
<circle cx="916.8" cy="251.6" r="3"/>
<circle cx="911" cy="295.5" r="3"/>
<circle cx="759.3" cy="182.6" r="3"/>
<circle cx="774.3" cy="172.5" r="2.8"/>
<circle cx="645" cy="205" r="3.2"/>
<circle cx="571" cy="175" r="3.2"/>
<circle cx="695.6" cy="129.4" r="2.8"/>
<circle cx="682.5" cy="143.6" r="2.8"/>
<circle cx="607.5" cy="47.6" r="2.8"/>
<circle cx="656" cy="39.4" r="2.8"/>
<circle cx="484.5" cy="48.7" r="2.8"/>
<circle cx="547.5" cy="99.4" r="2.8"/>
<circle cx="542" cy="83" r="2.8"/>
<circle cx="552" cy="135" r="3"/>
<circle cx="613.5" cy="242" r="3.2"/>
<circle cx="614" cy="256" r="3.2"/>
<circle cx="548.6" cy="228" r="3.4"/>
<circle cx="675" cy="209" r="2.8"/>
<circle cx="690" cy="206" r="2.8"/>
<circle cx="321.7" cy="422.4" r="4.8"/>
<circle cx="419.2" cy="416.7" r="4"/>
<circle cx="423.7" cy="422" r="3.8"/>
<circle cx="230.6" cy="563.7" r="4.6"/>
<circle cx="269.2" cy="569" r="3.6"/>
<circle cx="151.9" cy="564.8" r="3.4"/>
<circle cx="245.6" cy="378.5" r="3.6"/>
<circle cx="177.4" cy="417.5" r="3.4"/>
<circle cx="177" cy="408.5" r="3"/>
<circle cx="195" cy="412.2" r="3.2"/>
<circle cx="228.7" cy="431.4" r="3.2"/>
<circle cx="39.4" cy="362" r="3.2"/>
<circle cx="102" cy="437.7" r="3"/>
<circle cx="108.7" cy="440.4" r="2.8"/>
<circle cx="153" cy="326.7" r="3"/>
<circle cx="165.7" cy="322" r="3.6"/>
<circle cx="67.5" cy="343.2" r="2.8"/>
<circle cx="376.8" cy="501" r="3.4"/>
<circle cx="440.6" cy="453" r="3.4"/>
<circle cx="352.4" cy="520.6" r="3.2"/>
<circle cx="469.4" cy="545.3" r="3.2"/>
<circle cx="408.7" cy="527" r="3"/>
<circle cx="205.5" cy="511" r="3"/>
<circle cx="188" cy="598.6" r="3"/>
<circle cx="196.8" cy="584" r="3"/>
<circle cx="349.4" cy="594.5" r="3"/>
<circle cx="476" cy="609.5" r="3"/>
<circle cx="20.6" cy="514" r="2.8"/>
<circle cx="259.5" cy="388" r="3"/>
<circle cx="269" cy="384" r="3"/>
<circle cx="404" cy="342.5" r="3.6"/>
<circle cx="330.7" cy="392" r="3"/>
<circle cx="88.9" cy="485" r="2.8"/>
<circle cx="247.5" cy="509.4" r="2.8"/>
<circle cx="914.2" cy="325.2" r="4"/>
<circle cx="807.3" cy="332" r="3.2"/>
<circle cx="941.2" cy="481.2" r="4.4"/>
<circle cx="678" cy="507.5" r="4.6"/>
<circle cx="613.9" cy="580.2" r="4"/>
<circle cx="849.3" cy="620" r="3.8"/>
<circle cx="854.2" cy="609.8" r="3.4"/>
<circle cx="743.6" cy="610.2" r="3.4"/>
<circle cx="580.1" cy="368" r="4"/>
<circle cx="520.1" cy="456.9" r="4"/>
<circle cx="695.6" cy="385.6" r="3.2"/>
<circle cx="693.7" cy="437" r="3.4"/>
<circle cx="835" cy="395" r="3.2"/>
<circle cx="848.6" cy="418.6" r="3"/>
<circle cx="888.7" cy="395" r="3"/>
<circle cx="838" cy="441" r="3"/>
<circle cx="833.2" cy="451.2" r="2.8"/>
<circle cx="798" cy="474" r="3"/>
<circle cx="820" cy="500" r="3"/>
<circle cx="754.8" cy="413" r="3"/>
<circle cx="781.8" cy="396.9" r="3"/>
<circle cx="706" cy="498.5" r="3"/>
<circle cx="681.7" cy="540.5" r="3.2"/>
<circle cx="786" cy="524.4" r="2.8"/>
<circle cx="784.5" cy="578" r="3"/>
<circle cx="666.4" cy="596.7" r="3.2"/>
<circle cx="628" cy="603" r="3.2"/>
<circle cx="653.2" cy="381.9" r="3"/>
<circle cx="572.2" cy="404.4" r="3.2"/>
<circle cx="526.9" cy="415.6" r="3.4"/>
<circle cx="942" cy="366.9" r="3"/>
<circle cx="528.7" cy="567.5" r="3"/>
<circle cx="568.9" cy="572.3" r="3"/>
<circle cx="485.6" cy="590" r="3"/>
<circle cx="637.5" cy="476.7" r="2.8"/>
<circle cx="607.5" cy="431" r="3"/>
<circle cx="697.5" cy="326.4" r="3"/>
</g>
<rect x="949" y="0" width="1" height="639" fill="#3a3a2a"/>
</svg>

<!-- ===== Palette 1: Navigator / Info / Histogram ===== -->
<div class="pal" style="top:82px;height:133px">
  <div class="ptitle"></div>
  <div class="pbtn" style="left:180px"><i class="abs" style="left:3px;top:7px;width:6px;height:2px;background:#fff"></i></div>
  <div class="pbtn close" style="left:196px"><svg class="abs" style="left:0;top:0" width="11" height="11"><path d="M2.500 2.500l6 6M8.500 2.500l-6 6" stroke="#fff" stroke-width="1.800"/></svg></div>
  <div class="tabs"></div>
  <div class="body" style="top:34px;height:96px"></div>
  <!--TABS--><svg class="abs" style="left:3px;top:17px" width="206" height="20" viewBox="0 0 206 20"><path d="M0 16.5H206" stroke="#000" stroke-width="1"/><path d="M0 17.5H206" stroke="#fff" stroke-width="1"/><path d="M4.5 16.5V2.5H61.5L75.5 16.5z" fill="#ece9d8" stroke="#000" stroke-width="1.150"/><path d="M5.5 15.5V3.5H61.0" fill="none" stroke="#fff" stroke-width="1" stroke-opacity=".8"/><path d="M104.5 16.5V2.5H164.5L178.5 16.5z" fill="#ece9d8" stroke="#000" stroke-width="1.150"/><path d="M105.5 15.5V3.5H164.0" fill="none" stroke="#fff" stroke-width="1" stroke-opacity=".8"/><path d="M68.5 18.5V2.5H97.5L113.5 18.5z" fill="#ece9d8" stroke="none"/><path d="M68.5 16.5V2.5H97.5L111.5 16.5" fill="none" stroke="#000" stroke-width="1.150"/><path d="M69.5 17.5V3.5H97.0" fill="none" stroke="#fff" stroke-width="1"/></svg>
  <div class="pt" style="left:16px;top:21px">Navigator</div>
  <div class="pt" style="left:79px;top:20px;font-weight:bold;font-size:10.500px;letter-spacing:0">Info</div>
  <div class="pt" style="left:117px;top:21px">Histogram</div>
  <div class="pmenu" style="left:195px;top:20px"></div>
  <!-- info content -->
  <div class="abs" style="left:104px;top:41px;width:1px;height:47px;background:#aca899"></div>
  <div class="abs" style="left:104px;top:100px;width:1px;height:24px;background:#aca899"></div>
  <div class="abs" style="left:8px;top:94px;width:192px;height:1px;background:#aca899"></div>
  <div class="pt inf" style="left:36px;top:43px">K</div><div class="pt inf" style="left:49px;top:43px">:</div><div class="pt inf r" style="left:56px;top:43px;width:30px">18%</div>
  <div class="pt inf" style="left:36px;top:98px">X</div><div class="pt inf" style="left:49px;top:98px">:</div><div class="pt inf r" style="left:50px;top:98px;width:40px">28.211</div>
  <div class="pt inf" style="left:36px;top:109px">Y</div><div class="pt inf" style="left:49px;top:109px">:</div><div class="pt inf r" style="left:50px;top:109px;width:40px">18.730</div>
  <div class="pt inf" style="left:138px;top:43px">C</div><div class="pt inf" style="left:151px;top:43px">:</div><div class="pt inf r" style="left:158px;top:43px;width:30px">13%</div>
  <div class="pt inf" style="left:137px;top:54px">M</div><div class="pt inf" style="left:151px;top:54px">:</div><div class="pt inf r" style="left:158px;top:54px;width:30px">10%</div>
  <div class="pt inf" style="left:138px;top:65px">Y</div><div class="pt inf" style="left:151px;top:65px">:</div><div class="pt inf r" style="left:158px;top:65px;width:30px">10%</div>
  <div class="pt inf" style="left:138px;top:76px">K</div><div class="pt inf" style="left:151px;top:76px">:</div><div class="pt inf r" style="left:158px;top:76px;width:30px">0%</div>
  <div class="pt inf" style="left:136px;top:98px">W</div><div class="pt inf" style="left:151px;top:98px">:</div>
  <div class="pt inf" style="left:137px;top:109px">H</div><div class="pt inf" style="left:151px;top:109px">:</div>
  <svg class="abs" style="left:12px;top:60px" width="12" height="12" viewBox="0 0 12 12"><path d="M9 .5c1-.7 2.500.8 1.800 1.800L8.500 4.500l.7.700-1 1-.7-.7L3 10l-2 1 1-2 4.500-4.500-.7-.7 1-1 .7.700z" fill="#444" stroke="#222" stroke-width=".5"/><path d="M9 12V8l2.500 2z" fill="#000"/></svg>
  <svg class="abs" style="left:114px;top:60px" width="12" height="12" viewBox="0 0 12 12"><path d="M9 .5c1-.7 2.500.8 1.800 1.800L8.500 4.500l.7.700-1 1-.7-.7L3 10l-2 1 1-2 4.500-4.500-.7-.7 1-1 .7.700z" fill="#444" stroke="#222" stroke-width=".5"/><path d="M9 12V8l2.500 2z" fill="#000"/></svg>
  <svg class="abs" style="left:12px;top:103px" width="13" height="12" viewBox="0 0 13 12"><path d="M5.500 0v10M0 5.500h10" stroke="#222" stroke-width="1.200"/><path d="M9.500 11.500v-4l2.500 2z" fill="#000"/></svg>
  <svg class="abs" style="left:114px;top:102px" width="13" height="13" viewBox="0 0 13 13"><path d="M2.500 0v10.500H13" fill="none" stroke="#222" stroke-width="1.200"/><path d="M2.500 2.500h8v8" fill="none" stroke="#222" stroke-dasharray="1 1"/><path d="M10.500 0v4M8.500 2h4" stroke="#222" stroke-width=".9"/></svg>
</div>
<!-- ===== Palette 2: Color / Swatches / Styles ===== -->
<div class="pal" style="top:215px;height:61px">
  <div class="ptitle"></div>
  <div class="pbtn" style="left:180px"><i class="abs" style="left:2px;top:2px;width:7px;height:7px;border:1px solid #fff;border-top-width:2px"></i></div>
  <div class="pbtn close" style="left:196px"><svg class="abs" style="left:0;top:0" width="11" height="11"><path d="M2.500 2.500l6 6M8.500 2.500l-6 6" stroke="#fff" stroke-width="1.800"/></svg></div>
  <div class="tabs" style="height:16px"></div>
  <div class="body" style="top:33px;height:25px"></div>
  <!--TABS--><svg class="abs" style="left:3px;top:17px" width="206" height="20" viewBox="0 0 206 20"><path d="M0 15.5H206" stroke="#000" stroke-width="1"/><path d="M0 16.5H206" stroke="#fff" stroke-width="1"/><path d="M46.5 15.5V1.5H101.5L115.5 15.5z" fill="#ece9d8" stroke="#000" stroke-width="1.150"/><path d="M47.5 14.5V2.5H101.0" fill="none" stroke="#fff" stroke-width="1" stroke-opacity=".8"/><path d="M108.5 15.5V1.5H147.5L161.5 15.5z" fill="#ece9d8" stroke="#000" stroke-width="1.150"/><path d="M109.5 14.5V2.5H147.0" fill="none" stroke="#fff" stroke-width="1" stroke-opacity=".8"/><path d="M4.5 17.5V1.5H40.5L56.5 17.5z" fill="#ece9d8" stroke="none"/><path d="M4.5 15.5V1.5H40.5L54.5 15.5" fill="none" stroke="#000" stroke-width="1.150"/><path d="M5.5 16.5V2.5H40.0" fill="none" stroke="#fff" stroke-width="1"/></svg>
  <div class="pt" style="left:13px;top:19px;font-weight:bold;font-size:10px;letter-spacing:0">Color</div>
  <div class="pt" style="left:58px;top:20px">Swatches</div>
  <div class="pt" style="left:119px;top:20px">Styles</div>
  <div class="pmenu" style="left:195px;top:19px"></div>
  <div class="abs" style="left:7px;top:38px;width:200px;height:17px;background:#000"></div>
  <div class="abs" style="left:8px;top:39px;width:190px;height:15px;background:linear-gradient(to bottom,rgba(255,255,255,.75) 0,rgba(255,255,255,0) 45%,rgba(0,0,0,0) 50%,rgba(0,0,0,.95) 100%),linear-gradient(to right,#f00 0,#ff0 17%,#0f0 33%,#0ff 50%,#00f 67%,#f0f 83%,#f00 100%)"></div>
  <div class="abs" style="left:198px;top:39px;width:8px;height:7px;background:#fff"></div>
</div>
<!-- ===== Palette 3: History / Actions ===== -->
<div class="pal" style="top:276px;height:343px">
  <div class="ptitle"></div>
  <div class="pbtn" style="left:180px"><i class="abs" style="left:3px;top:7px;width:6px;height:2px;background:#fff"></i></div>
  <div class="pbtn close" style="left:196px"><svg class="abs" style="left:0;top:0" width="11" height="11"><path d="M2.500 2.500l6 6M8.500 2.500l-6 6" stroke="#fff" stroke-width="1.800"/></svg></div>
  <div class="tabs" style="height:19px"></div>
  <div class="body" style="top:35px;height:305px"></div>
  <!--TABS--><svg class="abs" style="left:3px;top:17px" width="206" height="20" viewBox="0 0 206 20"><path d="M0 16.5H206" stroke="#000" stroke-width="1"/><path d="M0 17.5H206" stroke="#fff" stroke-width="1"/><path d="M4.5 16.5V2.5H48.5L62.5 16.5z" fill="#ece9d8" stroke="#000" stroke-width="1.150"/><path d="M5.5 15.5V3.5H48.0" fill="none" stroke="#fff" stroke-width="1" stroke-opacity=".8"/><path d="M56.5 18.5V2.5H101.5L117.5 18.5z" fill="#ece9d8" stroke="none"/><path d="M56.5 16.5V2.5H101.5L115.5 16.5" fill="none" stroke="#000" stroke-width="1.150"/><path d="M57.5 17.5V3.5H101.0" fill="none" stroke="#fff" stroke-width="1"/></svg>
  <div class="pt" style="left:16px;top:21px">History</div>
  <div class="pt" style="left:66px;top:20px;font-weight:bold;font-size:10px;letter-spacing:0">Actions</div>
  <div class="pmenu" style="left:195px;top:20px"></div>
  <div class="abs" style="left:3px;top:35px;width:206px;height:1px;background:#000"></div>
<div class="abs" style="left:48px;top:36px;width:146px;height:241px;background:#fff"></div>
<div class="abs" style="left:47px;top:36px;width:1px;height:241px;background:#000"></div>
<div class="abs" style="left:24px;top:38px;width:1px;height:237px;background:#aca899"></div>
<div class="abs cbx" style="left:8px;top:40px"></div>
<svg class="abs" style="left:9px;top:41px" width="11" height="11" viewBox="0 0 11 11"><path d="M1.500 5.500l2.500 3.500c1.500-3.500 3-5.500 5.500-8" fill="none" stroke="#000" stroke-width="1.700"/></svg>
<div class="abs" style="left:29px;top:40px;width:12px;height:12px;border:1px solid #c02020;border-top-width:3px;background:#fff"></div>
<div class="abs" style="left:32px;top:48px;width:7px;height:1px;background:repeating-linear-gradient(to right,#c02020 0,#c02020 1px,transparent 1px,transparent 3px)"></div>
<div class="abs" style="left:48px;top:36px;width:146px;height:21px;background:#ece9d8"></div>
<div class="abs" style="left:4px;top:56px;width:43px;height:2px;background:linear-gradient(to bottom,#c9c6b6 0,#c9c6b6 1px,#fbfaf5 1px,#fbfaf5 2px)"></div>
<div class="abs" style="left:48px;top:56px;width:146px;height:2px;background:linear-gradient(to bottom,#c9c6b6 0,#c9c6b6 1px,#fbfaf5 1px,#fbfaf5 2px)"></div>
<svg class="abs" style="left:51px;top:42px" width="8" height="11" viewBox="0 0 8 11"><path d="M1 .8v9.400l6-4.700z" fill="#b4b4e6" stroke="#15155a" stroke-width="1"/></svg>
<svg class="abs" style="left:65px;top:40px" width="17" height="14" viewBox="0 0 17 14"><defs><linearGradient id="fo0" x1="0" y1="0" x2="0" y2="1"><stop offset="0" stop-color="#dcdcdc"/><stop offset="1" stop-color="#a8a8a8"/></linearGradient></defs><path d="M1.500 3.500l1-2h4l1 1.500h7.500v9.500h-13.500z" fill="url(#fo0)" stroke="#8a8a8a" stroke-width=".8"/><path d="M1.500 12.800h13.800" stroke="#444" stroke-width="1.200"/></svg>
<div class="pt" style="left:88px;top:41px">Default Actions.atn</div>
<div class="abs cbx" style="left:8px;top:60px"></div>
<svg class="abs" style="left:9px;top:61px" width="11" height="11" viewBox="0 0 11 11"><path d="M1.500 5.500l2.500 3.500c1.500-3.500 3-5.500 5.500-8" fill="none" stroke="#000" stroke-width="1.700"/></svg>
<div class="abs cbx" style="left:29px;top:60px"></div>
<div class="abs" style="left:48px;top:56px;width:146px;height:21px;background:#ece9d8"></div>
<div class="abs" style="left:4px;top:76px;width:43px;height:2px;background:linear-gradient(to bottom,#c9c6b6 0,#c9c6b6 1px,#fbfaf5 1px,#fbfaf5 2px)"></div>
<div class="abs" style="left:48px;top:76px;width:146px;height:2px;background:linear-gradient(to bottom,#c9c6b6 0,#c9c6b6 1px,#fbfaf5 1px,#fbfaf5 2px)"></div>
<svg class="abs" style="left:49px;top:64px" width="11" height="8" viewBox="0 0 11 8"><path d="M.8 1h9.400l-4.700 6z" fill="#b4b4e6" stroke="#15155a" stroke-width="1"/></svg>
<svg class="abs" style="left:65px;top:60px" width="17" height="14" viewBox="0 0 17 14"><defs><linearGradient id="fo1" x1="0" y1="0" x2="0" y2="1"><stop offset="0" stop-color="#dcdcdc"/><stop offset="1" stop-color="#a8a8a8"/></linearGradient></defs><path d="M1.500 3.500l1-2h4l1 1.500h7.500v9.500h-13.500z" fill="url(#fo1)" stroke="#8a8a8a" stroke-width=".8"/><path d="M1.500 12.800h13.800" stroke="#444" stroke-width="1.200"/></svg>
<div class="pt" style="left:88px;top:61px">Jim's Actions</div>
<div class="abs cbx" style="left:8px;top:80px"></div>
<svg class="abs" style="left:9px;top:81px" width="11" height="11" viewBox="0 0 11 11"><path d="M1.500 5.500l2.500 3.500c1.500-3.500 3-5.500 5.500-8" fill="none" stroke="#000" stroke-width="1.700"/></svg>
<div class="abs" style="left:78px;top:97px;width:116px;height:1px;background:#858585"></div>
<svg class="abs" style="left:67px;top:82px" width="8" height="11" viewBox="0 0 8 11"><path d="M1 .8v9.400l6-4.700z" fill="#b4b4e6" stroke="#15155a" stroke-width="1"/></svg>
<div class="abs" style="left:79px;top:80px;width:115px;height:16px;background:#316ac5"></div>
<div class="pt" style="left:82px;top:81px;color:#fff;font-weight:bold;font-size:10px;letter-spacing:-.1px">Positive Mask</div>
<div class="abs cbx" style="left:8px;top:100px"></div>
<svg class="abs" style="left:9px;top:101px" width="11" height="11" viewBox="0 0 11 11"><path d="M1.500 5.500l2.500 3.500c1.500-3.500 3-5.500 5.500-8" fill="none" stroke="#000" stroke-width="1.700"/></svg>
<div class="abs" style="left:78px;top:117px;width:116px;height:1px;background:#858585"></div>
<svg class="abs" style="left:67px;top:102px" width="8" height="11" viewBox="0 0 8 11"><path d="M1 .8v9.400l6-4.700z" fill="#b4b4e6" stroke="#15155a" stroke-width="1"/></svg>
<div class="pt" style="left:82px;top:101px">Negative Mask</div>
<div class="abs cbx" style="left:8px;top:120px"></div>
<svg class="abs" style="left:9px;top:121px" width="11" height="11" viewBox="0 0 11 11"><path d="M1.500 5.500l2.500 3.500c1.500-3.500 3-5.500 5.500-8" fill="none" stroke="#000" stroke-width="1.700"/></svg>
<div class="abs cbx" style="left:29px;top:120px"></div>
<div class="abs" style="left:78px;top:137px;width:116px;height:1px;background:#858585"></div>
<svg class="abs" style="left:67px;top:122px" width="8" height="11" viewBox="0 0 8 11"><path d="M1 .8v9.400l6-4.700z" fill="#b4b4e6" stroke="#15155a" stroke-width="1"/></svg>
<div class="pt" style="left:82px;top:121px">Curves 160/80</div>
<div class="abs cbx" style="left:8px;top:140px"></div>
<svg class="abs" style="left:9px;top:141px" width="11" height="11" viewBox="0 0 11 11"><path d="M1.500 5.500l2.500 3.500c1.500-3.500 3-5.500 5.500-8" fill="none" stroke="#000" stroke-width="1.700"/></svg>
<div class="abs cbx" style="left:29px;top:140px"></div>
<div class="abs" style="left:78px;top:157px;width:116px;height:1px;background:#858585"></div>
<svg class="abs" style="left:67px;top:142px" width="8" height="11" viewBox="0 0 8 11"><path d="M1 .8v9.400l6-4.700z" fill="#b4b4e6" stroke="#15155a" stroke-width="1"/></svg>
<div class="pt" style="left:82px;top:141px">Curves 70/120</div>
<div class="abs cbx" style="left:8px;top:160px"></div>
<svg class="abs" style="left:9px;top:161px" width="11" height="11" viewBox="0 0 11 11"><path d="M1.500 5.500l2.500 3.500c1.500-3.500 3-5.500 5.500-8" fill="none" stroke="#000" stroke-width="1.700"/></svg>
<div class="abs cbx" style="left:29px;top:160px"></div>
<div class="abs" style="left:78px;top:177px;width:116px;height:1px;background:#858585"></div>
<svg class="abs" style="left:67px;top:162px" width="8" height="11" viewBox="0 0 8 11"><path d="M1 .8v9.400l6-4.700z" fill="#b4b4e6" stroke="#15155a" stroke-width="1"/></svg>
<div class="pt" style="left:82px;top:161px">GB 2</div>
<div class="abs cbx" style="left:8px;top:180px"></div>
<svg class="abs" style="left:9px;top:181px" width="11" height="11" viewBox="0 0 11 11"><path d="M1.500 5.500l2.500 3.500c1.500-3.500 3-5.500 5.500-8" fill="none" stroke="#000" stroke-width="1.700"/></svg>
<div class="abs cbx" style="left:29px;top:180px"></div>
<div class="abs" style="left:78px;top:197px;width:116px;height:1px;background:#858585"></div>
<svg class="abs" style="left:67px;top:182px" width="8" height="11" viewBox="0 0 8 11"><path d="M1 .8v9.400l6-4.700z" fill="#b4b4e6" stroke="#15155a" stroke-width="1"/></svg>
<div class="pt" style="left:82px;top:181px">GB 3</div>
<div class="abs cbx" style="left:8px;top:200px"></div>
<svg class="abs" style="left:9px;top:201px" width="11" height="11" viewBox="0 0 11 11"><path d="M1.500 5.500l2.500 3.500c1.500-3.500 3-5.500 5.500-8" fill="none" stroke="#000" stroke-width="1.700"/></svg>
<div class="abs cbx" style="left:29px;top:200px"></div>
<div class="abs" style="left:78px;top:217px;width:116px;height:1px;background:#858585"></div>
<svg class="abs" style="left:67px;top:202px" width="8" height="11" viewBox="0 0 8 11"><path d="M1 .8v9.400l6-4.700z" fill="#b4b4e6" stroke="#15155a" stroke-width="1"/></svg>
<div class="pt" style="left:82px;top:201px">UM 50/4</div>
<div class="abs cbx" style="left:8px;top:220px"></div>
<svg class="abs" style="left:9px;top:221px" width="11" height="11" viewBox="0 0 11 11"><path d="M1.500 5.500l2.500 3.500c1.500-3.500 3-5.500 5.500-8" fill="none" stroke="#000" stroke-width="1.700"/></svg>
<div class="abs cbx" style="left:29px;top:220px"></div>
<div class="abs" style="left:78px;top:237px;width:116px;height:1px;background:#858585"></div>
<svg class="abs" style="left:67px;top:222px" width="8" height="11" viewBox="0 0 8 11"><path d="M1 .8v9.400l6-4.700z" fill="#b4b4e6" stroke="#15155a" stroke-width="1"/></svg>
<div class="pt" style="left:82px;top:221px">UM 50/2</div>
<div class="abs cbx" style="left:8px;top:240px"></div>
<svg class="abs" style="left:9px;top:241px" width="11" height="11" viewBox="0 0 11 11"><path d="M1.500 5.500l2.500 3.500c1.500-3.500 3-5.500 5.500-8" fill="none" stroke="#000" stroke-width="1.700"/></svg>
<div class="abs cbx" style="left:29px;top:240px"></div>
<div class="abs" style="left:78px;top:257px;width:116px;height:1px;background:#858585"></div>
<svg class="abs" style="left:67px;top:242px" width="8" height="11" viewBox="0 0 8 11"><path d="M1 .8v9.400l6-4.700z" fill="#b4b4e6" stroke="#15155a" stroke-width="1"/></svg>
<div class="pt" style="left:82px;top:241px">Levels 0/225</div>
<div class="abs cbx" style="left:8px;top:260px"></div>
<svg class="abs" style="left:9px;top:261px" width="11" height="11" viewBox="0 0 11 11"><path d="M1.500 5.500l2.500 3.500c1.500-3.500 3-5.500 5.500-8" fill="none" stroke="#000" stroke-width="1.700"/></svg>
<div class="abs cbx" style="left:29px;top:260px"></div>
<svg class="abs" style="left:67px;top:262px" width="8" height="11" viewBox="0 0 8 11"><path d="M1 .8v9.400l6-4.700z" fill="#b4b4e6" stroke="#15155a" stroke-width="1"/></svg>
<div class="pt" style="left:82px;top:261px">Levels 180/255</div>
<div class="abs" style="left:4px;top:277px;width:190px;height:1px;background:#000"></div>
<div class="abs" style="left:195px;top:36px;width:14px;height:289px;background:#fdfdfb"></div>
<div class="abs sbtn" style="left:195px;top:36px"></div><svg class="abs" style="left:198px;top:41px" width="9" height="6"><path d="M1 5l3.500-3.500L8 5" fill="none" stroke="#c8c6ba" stroke-width="1.800"/></svg>
<div class="abs sbtn" style="left:195px;top:310px"></div><svg class="abs" style="left:198px;top:316px" width="9" height="6"><path d="M1 1l3.500 3.500L8 1" fill="none" stroke="#c8c6ba" stroke-width="1.800"/></svg>
<div class="abs" style="left:3px;top:325px;width:206px;height:1px;background:#000"></div>
<div class="abs" style="left:194px;top:326px;width:1px;height:14px;background:#000"></div>
<svg class="abs" style="left:3px;top:326px" width="206" height="14" viewBox="0 0 206 14">
<rect x="31.500" y="2.500" width="8" height="8" fill="#9a9a9a" stroke="#777"/>
<circle cx="63.500" cy="6.500" r="4.500" fill="#8a8a8a" stroke="#555"/>
<path d="M88.500 2v9.500l9-4.700z" fill="#8a8a8a" stroke="#555" stroke-width=".8"/>
<path d="M114.500 3.500l1-1.500h3l1 1.500h5v7h-10z" fill="#e4e4e4" stroke="#888" stroke-width=".8"/><path d="M114.500 10.800h10.500v-7" stroke="#333" fill="none"/>
<rect x="145.500" y="2.500" width="8" height="8" fill="#f4f4f4" stroke="#999"/><path d="M146 11h8v-8.500" stroke="#222" fill="none" stroke-width="1.200"/><rect x="148.500" y="5.500" width="3" height="3" fill="#bbb" stroke="#333" stroke-width=".8"/>
<path d="M174.500 4.500h7l-.8 7h-5.400z" fill="#ccc" stroke="#333"/><path d="M173.500 3.500h9M176.500 2h3" stroke="#222" stroke-width="1.200"/><path d="M177 5.500v5M179 5.500v5" stroke="#555" stroke-width=".8"/>
<g fill="#c0bdaa"><rect x="203" y="3" width="2" height="2"/><rect x="199" y="7" width="2" height="2"/><rect x="203" y="7" width="2" height="2"/><rect x="195" y="11" width="2" height="2"/><rect x="199" y="11" width="2" height="2"/><rect x="203" y="11" width="2" height="2"/></g>
</svg>
</div>
<!-- ===== Palette 4: Layers / Channels / Paths ===== -->
<div class="pal" style="top:619px;height:253px">
  <div class="ptitle"></div>
  <div class="pbtn" style="left:180px"><i class="abs" style="left:3px;top:7px;width:6px;height:2px;background:#fff"></i></div>
  <div class="pbtn close" style="left:196px"><svg class="abs" style="left:0;top:0" width="11" height="11"><path d="M2.500 2.500l6 6M8.500 2.500l-6 6" stroke="#fff" stroke-width="1.800"/></svg></div>
  <div class="tabs" style="height:16px"></div>
  <div class="body" style="top:33px;height:217px"></div>
  <!--TABS--><svg class="abs" style="left:3px;top:17px" width="206" height="20" viewBox="0 0 206 20"><path d="M0 15.5H206" stroke="#000" stroke-width="1"/><path d="M0 16.5H206" stroke="#fff" stroke-width="1"/><path d="M53.5 15.5V1.5H107.5L121.5 15.5z" fill="#ece9d8" stroke="#000" stroke-width="1.150"/><path d="M54.5 14.5V2.5H107.0" fill="none" stroke="#fff" stroke-width="1" stroke-opacity=".8"/><path d="M113.5 15.5V1.5H150.5L164.5 15.5z" fill="#ece9d8" stroke="#000" stroke-width="1.150"/><path d="M114.5 14.5V2.5H150.0" fill="none" stroke="#fff" stroke-width="1" stroke-opacity=".8"/><path d="M4.5 17.5V1.5H48.5L64.5 17.5z" fill="#ece9d8" stroke="none"/><path d="M4.5 15.5V1.5H48.5L62.5 15.5" fill="none" stroke="#000" stroke-width="1.150"/><path d="M5.5 16.5V2.5H48.0" fill="none" stroke="#fff" stroke-width="1"/></svg>
  <div class="pt" style="left:13px;top:19px;font-weight:bold;font-size:10.500px;letter-spacing:0">Layers</div>
  <div class="pt" style="left:64px;top:20px">Channels</div>
  <div class="pt" style="left:125px;top:20px">Paths</div>
  <div class="pmenu" style="left:195px;top:19px"></div>
  <!-- blend mode select (disabled) : local = screen-(1066,619) -->
<div class="abs" style="left:7px;top:38px;width:99px;height:16px;border:1px solid #c9c7ba;background:#ece9d8"></div>
<div class="abs" style="left:9px;top:40px;width:78px;height:12px;background:#fbfaf6"></div>
<div class="abs" style="left:88px;top:40px;width:16px;height:12px;border:1px solid #dddbd0;border-radius:2px;background:#efede3"></div>
<svg class="abs" style="left:91px;top:43px" width="10" height="7"><path d="M1 1l4 4 4-4" fill="none" stroke="#c4c2b4" stroke-width="1.800"/></svg>
<div class="pt dis" style="left:11px;top:40px;font-size:10.500px">Normal</div>
<div class="pt dis" style="left:113px;top:40px;font-size:10.500px">Opacity:</div>
<div class="abs" style="left:155px;top:37px;width:50px;height:17px;border:1px solid #c9c7ba;background:#efede3"></div>
<div class="pt dis" style="left:161px;top:40px;font-size:10.500px">100%</div>
<svg class="abs" style="left:193px;top:42px" width="7" height="8"><path d="M1.500 1l3.500 3-3.500 3" fill="none" stroke="#c4c2b4" stroke-width="1.500"/></svg>
<div class="abs" style="left:4px;top:57px;width:205px;height:2px;background:linear-gradient(to bottom,#c5c2b2 0,#c5c2b2 1px,#fff 1px,#fff 2px)"></div>
<div class="pt dis" style="left:7px;top:63px;font-size:10.500px">Lock:</div>
<svg class="abs" style="left:40px;top:62px" width="72" height="15" viewBox="0 0 72 15">
  <rect x="1.500" y="2.500" width="10" height="10" fill="#fff" stroke="#aaa"/><path d="M2 3h3v3H2zM8 3h3v3H8zM5 6h3v3H5zM2 9h3v3H2zM8 9h3v3H8z" fill="#dcdcdc"/>
  <path d="M30 1.500l1.500 1.500-6 7-2-1.500z" fill="#aaa" stroke="#888" stroke-width=".6"/><path d="M23.500 9l2 1.500c-1 2-3 3-5.500 2.500 1.500-1 1.500-2.500 3.500-4z" fill="#777"/>
  <path d="M44.500 2v11M39 7.500h11M44.500 1l-2 2.500h4zM44.500 14l-2-2.500h4zM38 7.500l2.500-2v4zM51 7.500l-2.500-2v4z" stroke="#666" fill="#666" stroke-width="1"/>
  <path d="M60 7.500V5.500a3 3 0 0 1 6 0v2" fill="none" stroke="#999" stroke-width="1.600"/><rect x="58.500" y="7" width="9" height="6.500" fill="#8a8a8a" stroke="#777" stroke-width=".6"/>
</svg>
<div class="pt dis" style="left:136px;top:63px;font-size:10.500px">Fill:</div>
<div class="abs" style="left:155px;top:61px;width:50px;height:17px;border:1px solid #c9c7ba;background:#efede3"></div>
<div class="pt dis" style="left:161px;top:64px;font-size:10.500px">100%</div>
<svg class="abs" style="left:193px;top:66px" width="7" height="8"><path d="M1.500 1l3.500 3-3.500 3" fill="none" stroke="#c4c2b4" stroke-width="1.500"/></svg>
<!-- layer row : screen y 702..728 => local 83..109 -->
<div class="abs" style="left:3px;top:82px;width:206px;height:1px;background:#000"></div>
<div class="abs" style="left:3px;top:109px;width:192px;height:1px;background:#000"></div>
<div class="abs" style="left:47px;top:83px;width:1px;height:26px;background:#000"></div>
<div class="abs" style="left:48px;top:83px;width:146px;height:26px;background:#316ac5"></div>
<div class="abs" style="left:25px;top:85px;width:1px;height:22px;background:#aca899"></div>
<div class="abs cbx" style="left:7px;top:88px;width:15px;height:15px"></div>
<div class="abs cbx" style="left:29px;top:88px;width:15px;height:15px"></div>
<svg class="abs" style="left:8px;top:90px" width="13" height="11" viewBox="0 0 13 11"><path d="M.8 5.500C3 1.800 10 1.800 12.200 5.500 10 9 3 9 .8 5.500z" fill="#f4f4f0" stroke="#111" stroke-width="1.100"/><circle cx="6.500" cy="5.300" r="2.600" fill="#111"/><path d="M1 3.500C3.500.5 9.500.5 12 3.500" fill="none" stroke="#333" stroke-width=".9"/></svg>
<svg class="abs" style="left:30px;top:89px" width="14" height="14" viewBox="0 0 14 14"><path d="M11.500 1l1.500 1.500-6 7-2-1.500z" fill="#777" stroke="#222" stroke-width=".7"/><path d="M5 8l2 1.500c-1 2.300-3.500 3.300-6 2.800 1.500-1 2-2.800 4-4.300z" fill="#222"/></svg>
<div class="abs" style="left:50px;top:84px;width:33px;height:24px;border:1px solid #fff;background:#316ac5"></div>
<div class="abs" style="left:52px;top:86px;width:29px;height:20px;border:1px solid #fff;background:radial-gradient(ellipse 8px 6px at 48% 50%,#cfcfcf 0,#6a6a6a 30%,#2c2c2c 62%,#0c0c0c 100%)"></div>
<div class="pt" style="left:86px;top:88px;color:#fff;font-style:italic;font-size:10.500px;letter-spacing:0">Background</div>
<svg class="abs" style="left:182px;top:90px" width="10" height="12" viewBox="0 0 10 12"><path d="M2.500 5.500V4a2.500 2.500 0 0 1 5 0v1.500" fill="none" stroke="#fff" stroke-width="1.300"/><rect x="1" y="5.500" width="8" height="5.500" fill="#111" stroke="#fff" stroke-width=".8"/></svg>
<!-- scrollbar -->
<div class="abs" style="left:195px;top:83px;width:14px;height:152px;background:#fdfdfb"></div>
<div class="abs sbtn" style="left:195px;top:83px"></div><svg class="abs" style="left:198px;top:88px" width="9" height="6"><path d="M1 5l3.500-3.500L8 5" fill="none" stroke="#c8c6ba" stroke-width="1.800"/></svg>
<div class="abs sbtn" style="left:195px;top:219px"></div><svg class="abs" style="left:198px;top:225px" width="9" height="6"><path d="M1 1l3.500 3.500L8 1" fill="none" stroke="#c8c6ba" stroke-width="1.800"/></svg>
<!-- bottom toolbar -->
<div class="abs" style="left:3px;top:235px;width:206px;height:1px;background:#000"></div>
<div class="abs" style="left:194px;top:236px;width:1px;height:14px;background:#000"></div>
<svg class="abs" style="left:3px;top:236px" width="206" height="14" viewBox="0 0 206 14">
<defs><linearGradient id="lg1" x1="0" y1="0" x2="1" y2="1"><stop offset="0" stop-color="#555"/><stop offset="1" stop-color="#bbb"/></linearGradient></defs>
<circle cx="35" cy="6.500" r="5.500" fill="url(#lg1)"/><text x="32.500" y="10" font-family="Liberation Serif,serif" font-style="italic" font-weight="bold" font-size="10" fill="#fff">f</text><path d="M42 10.500h3l-1.500 2z" fill="#888"/>
<rect x="56.500" y="1.500" width="13" height="11" fill="#b4b4b4" stroke="#999"/><circle cx="63" cy="7" r="3.500" fill="#fff" stroke="#666" stroke-width=".8"/>
<path d="M85.500 3.500l1-1.500h3l1 1.500h5v7.500h-10z" fill="#e4e4e4" stroke="#888" stroke-width=".8"/><path d="M85.500 11.300h10.500v-7.500" stroke="#333" fill="none"/>
<circle cx="119" cy="6.500" r="5.500" fill="#fff" stroke="#333" stroke-width="1"/><path d="M115.100 10.400A5.500 5.500 0 0 1 122.900 2.600z" fill="#222"/><path d="M126 10.500h4l-2 2.500z" fill="#000"/>
<rect x="145.500" y="2.500" width="8" height="8" fill="#f4f4f4" stroke="#999"/><path d="M146 11h8v-8.500" stroke="#222" fill="none" stroke-width="1.200"/><rect x="148.500" y="5.500" width="3" height="3" fill="#bbb" stroke="#333" stroke-width=".8"/>
<path d="M174.500 4.500h7l-.8 7.500h-5.400z" fill="#ddd" stroke="#777"/><path d="M173.500 3.500h9M176.500 2h3" stroke="#666" stroke-width="1.200"/><path d="M177 5.500v5.500M179 5.500v5.500" stroke="#888" stroke-width=".8"/>
<g fill="#c0bdaa"><rect x="203" y="2" width="2" height="2"/><rect x="199" y="6" width="2" height="2"/><rect x="203" y="6" width="2" height="2"/><rect x="195" y="10" width="2" height="2"/><rect x="199" y="10" width="2" height="2"/><rect x="203" y="10" width="2" height="2"/></g>
</svg>

</div>

<div id="statusbar" class="abs">
<div class="abs" style="left:0;top:0px;width:48px;height:17px;border:1px solid #000;background:#fff"></div>
<div class="t" style="left:7px;top:2px;letter-spacing:-.3px">23.93%</div>
<div class="t" style="left:52px;top:2px;font-size:10.500px;letter-spacing:-.25px">Doc: 20.4M/20.4M</div>
<div class="abs" style="left:241px;top:2px;border:5px solid transparent;border-left:7px solid #000;border-right:0"></div>
<div class="t" style="left:257px;top:2px;font-size:10.500px;letter-spacing:-.225px;white-space:pre">Click to select and/or drag a subpath.  Use Shift, Alt, and Ctrl for additional options.</div>

</div>
</body>
</html>
